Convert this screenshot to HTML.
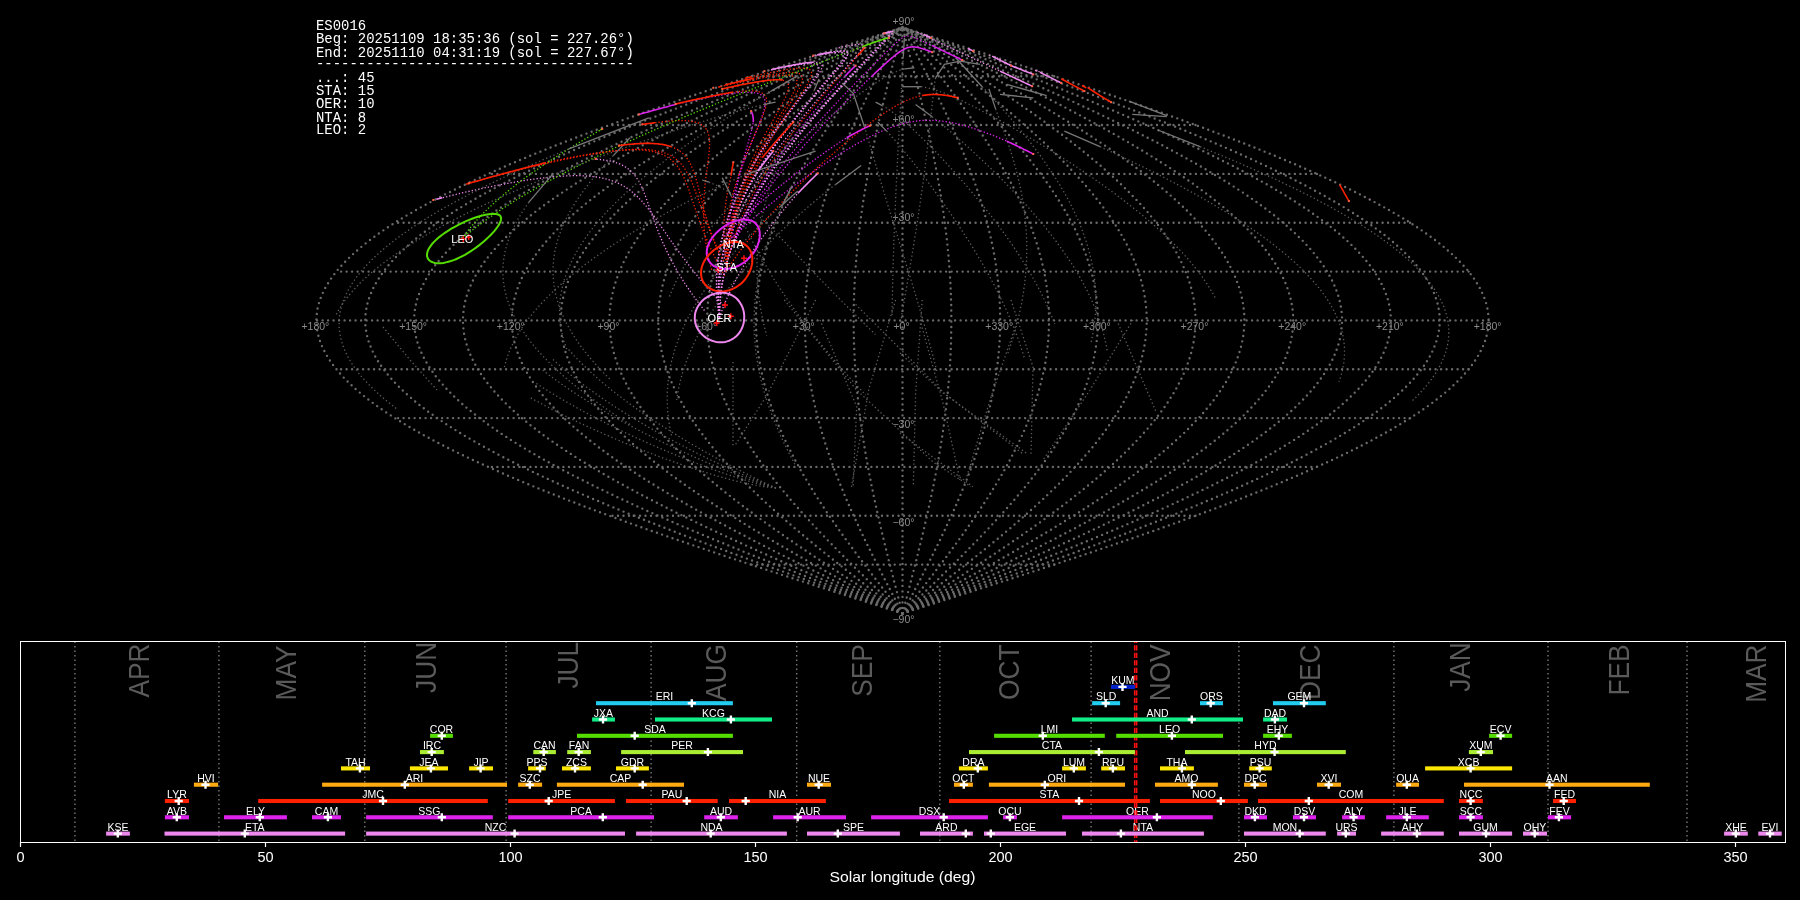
<!DOCTYPE html>
<html><head><meta charset="utf-8"><style>
html,body{margin:0;padding:0;background:#000;width:1800px;height:900px;overflow:hidden}
svg{display:block;font-family:"Liberation Sans",sans-serif;will-change:transform}
</style></head><body>
<svg width="1800" height="900" viewBox="0 0 1800 900">
<rect width="1800" height="900" fill="#000"/>
<path d="M1054.2,564.6 L750.8,564.6" stroke="#6a6a6a" stroke-width="2.4" stroke-linecap="round" stroke-dasharray="0 5.5" fill="none"/>
<path d="M1195.5,515.8 L609.5,515.8" stroke="#6a6a6a" stroke-width="2.4" stroke-linecap="round" stroke-dasharray="0 5.5" fill="none"/>
<path d="M1316.9,466.9 L488.1,466.9" stroke="#6a6a6a" stroke-width="2.4" stroke-linecap="round" stroke-dasharray="0 5.5" fill="none"/>
<path d="M1410.1,418.1 L394.9,418.1" stroke="#6a6a6a" stroke-width="2.4" stroke-linecap="round" stroke-dasharray="0 5.5" fill="none"/>
<path d="M1468.6,369.2 L336.4,369.2" stroke="#6a6a6a" stroke-width="2.4" stroke-linecap="round" stroke-dasharray="0 5.5" fill="none"/>
<path d="M1488.6,320.4 L316.4,320.4" stroke="#6a6a6a" stroke-width="2.4" stroke-linecap="round" stroke-dasharray="0 5.5" fill="none"/>
<path d="M1468.6,271.6 L336.4,271.6" stroke="#6a6a6a" stroke-width="2.4" stroke-linecap="round" stroke-dasharray="0 5.5" fill="none"/>
<path d="M1410.1,222.7 L394.9,222.7" stroke="#6a6a6a" stroke-width="2.4" stroke-linecap="round" stroke-dasharray="0 5.5" fill="none"/>
<path d="M1316.9,173.9 L488.1,173.9" stroke="#6a6a6a" stroke-width="2.4" stroke-linecap="round" stroke-dasharray="0 5.5" fill="none"/>
<path d="M1195.5,125.0 L609.5,125.0" stroke="#6a6a6a" stroke-width="2.4" stroke-linecap="round" stroke-dasharray="0 5.5" fill="none"/>
<path d="M1054.2,76.2 L750.8,76.2" stroke="#6a6a6a" stroke-width="2.4" stroke-linecap="round" stroke-dasharray="0 5.5" fill="none"/>
<path d="M902.5,613.4 L897.4,611.8 L892.3,610.2 L887.2,608.6 L882.0,606.9 L876.9,605.3 L871.8,603.7 L866.7,602.0 L861.6,600.4 L856.5,598.8 L851.4,597.2 L846.3,595.5 L841.2,593.9 L836.2,592.3 L831.1,590.6 L826.0,589.0 L820.9,587.4 L815.9,585.8 L810.8,584.1 L805.8,582.5 L800.7,580.9 L795.7,579.3 L790.7,577.6 L785.7,576.0 L780.6,574.4 L775.6,572.7 L770.7,571.1 L765.7,569.5 L760.7,567.9 L755.8,566.2 L750.8,564.6 L745.9,563.0 L741.0,561.3 L736.0,559.7 L731.1,558.1 L726.3,556.5 L721.4,554.8 L716.5,553.2 L711.7,551.6 L706.9,549.9 L702.0,548.3 L697.3,546.7 L692.5,545.1 L687.7,543.4 L683.0,541.8 L678.2,540.2 L673.5,538.6 L668.8,536.9 L664.1,535.3 L659.5,533.7 L654.8,532.0 L650.2,530.4 L645.6,528.8 L641.0,527.2 L636.4,525.5 L631.9,523.9 L627.4,522.3 L622.8,520.6 L618.4,519.0 L613.9,517.4 L609.5,515.8 L605.0,514.1 L600.6,512.5 L596.3,510.9 L591.9,509.2 L587.6,507.6 L583.3,506.0 L579.0,504.4 L574.8,502.7 L570.5,501.1 L566.3,499.5 L562.2,497.9 L558.0,496.2 L553.9,494.6 L549.8,493.0 L545.7,491.3 L541.7,489.7 L537.7,488.1 L533.7,486.5 L529.7,484.8 L525.8,483.2 L521.9,481.6 L518.0,479.9 L514.2,478.3 L510.3,476.7 L506.6,475.1 L502.8,473.4 L499.1,471.8 L495.4,470.2 L491.7,468.5 L488.1,466.9 L484.5,465.3 L480.9,463.7 L477.4,462.0 L473.9,460.4 L470.4,458.8 L467.0,457.2 L463.6,455.5 L460.2,453.9 L456.8,452.3 L453.5,450.6 L450.3,449.0 L447.0,447.4 L443.8,445.8 L440.7,444.1 L437.5,442.5 L434.4,440.9 L431.4,439.2 L428.4,437.6 L425.4,436.0 L422.4,434.4 L419.5,432.7 L416.6,431.1 L413.8,429.5 L411.0,427.8 L408.2,426.2 L405.5,424.6 L402.8,423.0 L400.1,421.3 L397.5,419.7 L394.9,418.1 L392.4,416.5 L389.9,414.8 L387.4,413.2 L385.0,411.6 L382.6,409.9 L380.3,408.3 L378.0,406.7 L375.7,405.1 L373.5,403.4 L371.3,401.8 L369.2,400.2 L367.1,398.5 L365.0,396.9 L363.0,395.3 L361.0,393.7 L359.1,392.0 L357.2,390.4 L355.3,388.8 L353.5,387.1 L351.8,385.5 L350.0,383.9 L348.4,382.3 L346.7,380.6 L345.1,379.0 L343.5,377.4 L342.0,375.8 L340.6,374.1 L339.1,372.5 L337.7,370.9 L336.4,369.2 L335.1,367.6 L333.8,366.0 L332.6,364.4 L331.4,362.7 L330.3,361.1 L329.2,359.5 L328.2,357.8 L327.2,356.2 L326.2,354.6 L325.3,353.0 L324.5,351.3 L323.6,349.7 L322.9,348.1 L322.1,346.4 L321.4,344.8 L320.8,343.2 L320.2,341.6 L319.6,339.9 L319.1,338.3 L318.7,336.7 L318.2,335.1 L317.8,333.4 L317.5,331.8 L317.2,330.2 L317.0,328.5 L316.8,326.9 L316.6,325.3 L316.5,323.7 L316.4,322.0 L316.4,320.4 L316.4,318.8 L316.5,317.1 L316.6,315.5 L316.8,313.9 L317.0,312.3 L317.2,310.6 L317.5,309.0 L317.8,307.4 L318.2,305.7 L318.7,304.1 L319.1,302.5 L319.6,300.9 L320.2,299.2 L320.8,297.6 L321.4,296.0 L322.1,294.4 L322.9,292.7 L323.6,291.1 L324.5,289.5 L325.3,287.8 L326.2,286.2 L327.2,284.6 L328.2,283.0 L329.2,281.3 L330.3,279.7 L331.4,278.1 L332.6,276.4 L333.8,274.8 L335.1,273.2 L336.4,271.6 L337.7,269.9 L339.1,268.3 L340.6,266.7 L342.0,265.0 L343.5,263.4 L345.1,261.8 L346.7,260.2 L348.4,258.5 L350.0,256.9 L351.8,255.3 L353.5,253.7 L355.3,252.0 L357.2,250.4 L359.1,248.8 L361.0,247.1 L363.0,245.5 L365.0,243.9 L367.1,242.3 L369.2,240.6 L371.3,239.0 L373.5,237.4 L375.7,235.7 L378.0,234.1 L380.3,232.5 L382.6,230.9 L385.0,229.2 L387.4,227.6 L389.9,226.0 L392.4,224.3 L394.9,222.7 L397.5,221.1 L400.1,219.5 L402.8,217.8 L405.5,216.2 L408.2,214.6 L411.0,213.0 L413.8,211.3 L416.6,209.7 L419.5,208.1 L422.4,206.4 L425.4,204.8 L428.4,203.2 L431.4,201.6 L434.4,199.9 L437.5,198.3 L440.7,196.7 L443.8,195.0 L447.0,193.4 L450.3,191.8 L453.5,190.2 L456.8,188.5 L460.2,186.9 L463.6,185.3 L467.0,183.6 L470.4,182.0 L473.9,180.4 L477.4,178.8 L480.9,177.1 L484.5,175.5 L488.1,173.9 L491.7,172.3 L495.4,170.6 L499.1,169.0 L502.8,167.4 L506.6,165.7 L510.3,164.1 L514.2,162.5 L518.0,160.9 L521.9,159.2 L525.8,157.6 L529.7,156.0 L533.7,154.3 L537.7,152.7 L541.7,151.1 L545.7,149.5 L549.8,147.8 L553.9,146.2 L558.0,144.6 L562.2,142.9 L566.3,141.3 L570.5,139.7 L574.8,138.1 L579.0,136.4 L583.3,134.8 L587.6,133.2 L591.9,131.6 L596.3,129.9 L600.6,128.3 L605.0,126.7 L609.5,125.0 L613.9,123.4 L618.4,121.8 L622.8,120.2 L627.4,118.5 L631.9,116.9 L636.4,115.3 L641.0,113.6 L645.6,112.0 L650.2,110.4 L654.8,108.8 L659.5,107.1 L664.1,105.5 L668.8,103.9 L673.5,102.2 L678.2,100.6 L683.0,99.0 L687.7,97.4 L692.5,95.7 L697.3,94.1 L702.0,92.5 L706.9,90.9 L711.7,89.2 L716.5,87.6 L721.4,86.0 L726.3,84.3 L731.1,82.7 L736.0,81.1 L741.0,79.5 L745.9,77.8 L750.8,76.2 L755.8,74.6 L760.7,72.9 L765.7,71.3 L770.7,69.7 L775.6,68.1 L780.6,66.4 L785.7,64.8 L790.7,63.2 L795.7,61.5 L800.7,59.9 L805.8,58.3 L810.8,56.7 L815.9,55.0 L820.9,53.4 L826.0,51.8 L831.1,50.2 L836.2,48.5 L841.2,46.9 L846.3,45.3 L851.4,43.6 L856.5,42.0 L861.6,40.4 L866.7,38.8 L871.8,37.1 L876.9,35.5 L882.0,33.9 L887.2,32.2 L892.3,30.6 L897.4,29.0 L902.5,27.4" stroke="#6a6a6a" stroke-width="2.4" stroke-linecap="round" stroke-dasharray="0 5.5" fill="none"/>
<path d="M902.5,613.4 L907.2,611.8 L911.9,610.2 L916.6,608.6 L921.2,606.9 L925.9,605.3 L930.6,603.7 L935.3,602.0 L940.0,600.4 L944.7,598.8 L949.3,597.2 L954.0,595.5 L958.7,593.9 L963.3,592.3 L968.0,590.6 L972.6,589.0 L977.3,587.4 L981.9,585.8 L986.5,584.1 L991.2,582.5 L995.8,580.9 L1000.4,579.3 L1005.0,577.6 L1009.6,576.0 L1014.2,574.4 L1018.8,572.7 L1023.4,571.1 L1027.9,569.5 L1032.5,567.9 L1037.0,566.2 L1041.5,564.6 L1046.1,563.0 L1050.6,561.3 L1055.1,559.7 L1059.6,558.1 L1064.1,556.5 L1068.5,554.8 L1073.0,553.2 L1077.4,551.6 L1081.8,549.9 L1086.2,548.3 L1090.6,546.7 L1095.0,545.1 L1099.4,543.4 L1103.8,541.8 L1108.1,540.2 L1112.4,538.6 L1116.7,536.9 L1121.0,535.3 L1125.3,533.7 L1129.5,532.0 L1133.8,530.4 L1138.0,528.8 L1142.2,527.2 L1146.4,525.5 L1150.6,523.9 L1154.7,522.3 L1158.8,520.6 L1163.0,519.0 L1167.0,517.4 L1171.1,515.8 L1175.2,514.1 L1179.2,512.5 L1183.2,510.9 L1187.2,509.2 L1191.2,507.6 L1195.1,506.0 L1199.0,504.4 L1202.9,502.7 L1206.8,501.1 L1210.6,499.5 L1214.5,497.9 L1218.3,496.2 L1222.1,494.6 L1225.8,493.0 L1229.6,491.3 L1233.3,489.7 L1236.9,488.1 L1240.6,486.5 L1244.2,484.8 L1247.8,483.2 L1251.4,481.6 L1255.0,479.9 L1258.5,478.3 L1262.0,476.7 L1265.5,475.1 L1268.9,473.4 L1272.3,471.8 L1275.7,470.2 L1279.1,468.5 L1282.4,466.9 L1285.7,465.3 L1289.0,463.7 L1292.2,462.0 L1295.4,460.4 L1298.6,458.8 L1301.7,457.2 L1304.9,455.5 L1308.0,453.9 L1311.0,452.3 L1314.0,450.6 L1317.0,449.0 L1320.0,447.4 L1322.9,445.8 L1325.9,444.1 L1328.7,442.5 L1331.6,440.9 L1334.4,439.2 L1337.1,437.6 L1339.9,436.0 L1342.6,434.4 L1345.3,432.7 L1347.9,431.1 L1350.5,429.5 L1353.1,427.8 L1355.6,426.2 L1358.1,424.6 L1360.6,423.0 L1363.0,421.3 L1365.4,419.7 L1367.8,418.1 L1370.1,416.5 L1372.4,414.8 L1374.6,413.2 L1376.9,411.6 L1379.0,409.9 L1381.2,408.3 L1383.3,406.7 L1385.4,405.1 L1387.4,403.4 L1389.4,401.8 L1391.4,400.2 L1393.3,398.5 L1395.2,396.9 L1397.0,395.3 L1398.8,393.7 L1400.6,392.0 L1402.4,390.4 L1404.1,388.8 L1405.7,387.1 L1407.3,385.5 L1408.9,383.9 L1410.5,382.3 L1412.0,380.6 L1413.4,379.0 L1414.9,377.4 L1416.3,375.8 L1417.6,374.1 L1418.9,372.5 L1420.2,370.9 L1421.4,369.2 L1422.6,367.6 L1423.8,366.0 L1424.9,364.4 L1426.0,362.7 L1427.0,361.1 L1428.0,359.5 L1429.0,357.8 L1429.9,356.2 L1430.7,354.6 L1431.6,353.0 L1432.4,351.3 L1433.1,349.7 L1433.8,348.1 L1434.5,346.4 L1435.1,344.8 L1435.7,343.2 L1436.3,341.6 L1436.8,339.9 L1437.3,338.3 L1437.7,336.7 L1438.1,335.1 L1438.4,333.4 L1438.7,331.8 L1439.0,330.2 L1439.2,328.5 L1439.4,326.9 L1439.6,325.3 L1439.7,323.7 L1439.7,322.0 L1439.7,320.4 L1439.7,318.8 L1439.7,317.1 L1439.6,315.5 L1439.4,313.9 L1439.2,312.3 L1439.0,310.6 L1438.7,309.0 L1438.4,307.4 L1438.1,305.7 L1437.7,304.1 L1437.3,302.5 L1436.8,300.9 L1436.3,299.2 L1435.7,297.6 L1435.1,296.0 L1434.5,294.4 L1433.8,292.7 L1433.1,291.1 L1432.4,289.5 L1431.6,287.8 L1430.7,286.2 L1429.9,284.6 L1429.0,283.0 L1428.0,281.3 L1427.0,279.7 L1426.0,278.1 L1424.9,276.4 L1423.8,274.8 L1422.6,273.2 L1421.4,271.6 L1420.2,269.9 L1418.9,268.3 L1417.6,266.7 L1416.3,265.0 L1414.9,263.4 L1413.4,261.8 L1412.0,260.2 L1410.5,258.5 L1408.9,256.9 L1407.3,255.3 L1405.7,253.7 L1404.1,252.0 L1402.4,250.4 L1400.6,248.8 L1398.8,247.1 L1397.0,245.5 L1395.2,243.9 L1393.3,242.3 L1391.4,240.6 L1389.4,239.0 L1387.4,237.4 L1385.4,235.7 L1383.3,234.1 L1381.2,232.5 L1379.0,230.9 L1376.9,229.2 L1374.6,227.6 L1372.4,226.0 L1370.1,224.3 L1367.8,222.7 L1365.4,221.1 L1363.0,219.5 L1360.6,217.8 L1358.1,216.2 L1355.6,214.6 L1353.1,213.0 L1350.5,211.3 L1347.9,209.7 L1345.3,208.1 L1342.6,206.4 L1339.9,204.8 L1337.1,203.2 L1334.4,201.6 L1331.6,199.9 L1328.7,198.3 L1325.9,196.7 L1322.9,195.0 L1320.0,193.4 L1317.0,191.8 L1314.0,190.2 L1311.0,188.5 L1308.0,186.9 L1304.9,185.3 L1301.7,183.6 L1298.6,182.0 L1295.4,180.4 L1292.2,178.8 L1289.0,177.1 L1285.7,175.5 L1282.4,173.9 L1279.1,172.3 L1275.7,170.6 L1272.3,169.0 L1268.9,167.4 L1265.5,165.7 L1262.0,164.1 L1258.5,162.5 L1255.0,160.9 L1251.4,159.2 L1247.8,157.6 L1244.2,156.0 L1240.6,154.3 L1236.9,152.7 L1233.3,151.1 L1229.6,149.5 L1225.8,147.8 L1222.1,146.2 L1218.3,144.6 L1214.5,142.9 L1210.6,141.3 L1206.8,139.7 L1202.9,138.1 L1199.0,136.4 L1195.1,134.8 L1191.2,133.2 L1187.2,131.6 L1183.2,129.9 L1179.2,128.3 L1175.2,126.7 L1171.1,125.0 L1167.0,123.4 L1163.0,121.8 L1158.8,120.2 L1154.7,118.5 L1150.6,116.9 L1146.4,115.3 L1142.2,113.6 L1138.0,112.0 L1133.8,110.4 L1129.5,108.8 L1125.3,107.1 L1121.0,105.5 L1116.7,103.9 L1112.4,102.2 L1108.1,100.6 L1103.8,99.0 L1099.4,97.4 L1095.0,95.7 L1090.6,94.1 L1086.2,92.5 L1081.8,90.9 L1077.4,89.2 L1073.0,87.6 L1068.5,86.0 L1064.1,84.3 L1059.6,82.7 L1055.1,81.1 L1050.6,79.5 L1046.1,77.8 L1041.5,76.2 L1037.0,74.6 L1032.5,72.9 L1027.9,71.3 L1023.4,69.7 L1018.8,68.1 L1014.2,66.4 L1009.6,64.8 L1005.0,63.2 L1000.4,61.5 L995.8,59.9 L991.2,58.3 L986.5,56.7 L981.9,55.0 L977.3,53.4 L972.6,51.8 L968.0,50.2 L963.3,48.5 L958.7,46.9 L954.0,45.3 L949.3,43.6 L944.7,42.0 L940.0,40.4 L935.3,38.8 L930.6,37.1 L925.9,35.5 L921.2,33.9 L916.6,32.2 L911.9,30.6 L907.2,29.0 L902.5,27.4" stroke="#6a6a6a" stroke-width="2.4" stroke-linecap="round" stroke-dasharray="0 5.5" fill="none"/>
<path d="M902.5,613.4 L906.8,611.8 L911.0,610.2 L915.3,608.6 L919.5,606.9 L923.8,605.3 L928.1,603.7 L932.3,602.0 L936.6,600.4 L940.8,598.8 L945.1,597.2 L949.3,595.5 L953.6,593.9 L957.8,592.3 L962.0,590.6 L966.2,589.0 L970.5,587.4 L974.7,585.8 L978.9,584.1 L983.1,582.5 L987.3,580.9 L991.5,579.3 L995.7,577.6 L999.9,576.0 L1004.0,574.4 L1008.2,572.7 L1012.4,571.1 L1016.5,569.5 L1020.7,567.9 L1024.8,566.2 L1028.9,564.6 L1033.0,563.0 L1037.1,561.3 L1041.2,559.7 L1045.3,558.1 L1049.4,556.5 L1053.4,554.8 L1057.5,553.2 L1061.5,551.6 L1065.5,549.9 L1069.5,548.3 L1073.5,546.7 L1077.5,545.1 L1081.5,543.4 L1085.5,541.8 L1089.4,540.2 L1093.3,538.6 L1097.2,536.9 L1101.2,535.3 L1105.0,533.7 L1108.9,532.0 L1112.8,530.4 L1116.6,528.8 L1120.4,527.2 L1124.2,525.5 L1128.0,523.9 L1131.8,522.3 L1135.5,520.6 L1139.3,519.0 L1143.0,517.4 L1146.7,515.8 L1150.4,514.1 L1154.0,512.5 L1157.7,510.9 L1161.3,509.2 L1164.9,507.6 L1168.5,506.0 L1172.1,504.4 L1175.6,502.7 L1179.1,501.1 L1182.6,499.5 L1186.1,497.9 L1189.6,496.2 L1193.0,494.6 L1196.4,493.0 L1199.8,491.3 L1203.2,489.7 L1206.5,488.1 L1209.9,486.5 L1213.2,484.8 L1216.4,483.2 L1219.7,481.6 L1222.9,479.9 L1226.1,478.3 L1229.3,476.7 L1232.5,475.1 L1235.6,473.4 L1238.7,471.8 L1241.8,470.2 L1244.8,468.5 L1247.9,466.9 L1250.9,465.3 L1253.8,463.7 L1256.8,462.0 L1259.7,460.4 L1262.6,458.8 L1265.5,457.2 L1268.3,455.5 L1271.1,453.9 L1273.9,452.3 L1276.6,450.6 L1279.4,449.0 L1282.1,447.4 L1284.7,445.8 L1287.4,444.1 L1290.0,442.5 L1292.6,440.9 L1295.1,439.2 L1297.6,437.6 L1300.1,436.0 L1302.6,434.4 L1305.0,432.7 L1307.4,431.1 L1309.8,429.5 L1312.1,427.8 L1314.4,426.2 L1316.7,424.6 L1318.9,423.0 L1321.1,421.3 L1323.3,419.7 L1325.5,418.1 L1327.6,416.5 L1329.7,414.8 L1331.7,413.2 L1333.7,411.6 L1335.7,409.9 L1337.7,408.3 L1339.6,406.7 L1341.5,405.1 L1343.3,403.4 L1345.1,401.8 L1346.9,400.2 L1348.7,398.5 L1350.4,396.9 L1352.1,395.3 L1353.7,393.7 L1355.3,392.0 L1356.9,390.4 L1358.5,388.8 L1360.0,387.1 L1361.4,385.5 L1362.9,383.9 L1364.3,382.3 L1365.7,380.6 L1367.0,379.0 L1368.3,377.4 L1369.6,375.8 L1370.8,374.1 L1372.0,372.5 L1373.1,370.9 L1374.3,369.2 L1375.3,367.6 L1376.4,366.0 L1377.4,364.4 L1378.4,362.7 L1379.3,361.1 L1380.2,359.5 L1381.1,357.8 L1381.9,356.2 L1382.7,354.6 L1383.5,353.0 L1384.2,351.3 L1384.9,349.7 L1385.5,348.1 L1386.1,346.4 L1386.7,344.8 L1387.3,343.2 L1387.8,341.6 L1388.2,339.9 L1388.7,338.3 L1389.0,336.7 L1389.4,335.1 L1389.7,333.4 L1390.0,331.8 L1390.2,330.2 L1390.4,328.5 L1390.6,326.9 L1390.7,325.3 L1390.8,323.7 L1390.9,322.0 L1390.9,320.4 L1390.9,318.8 L1390.8,317.1 L1390.7,315.5 L1390.6,313.9 L1390.4,312.3 L1390.2,310.6 L1390.0,309.0 L1389.7,307.4 L1389.4,305.7 L1389.0,304.1 L1388.7,302.5 L1388.2,300.9 L1387.8,299.2 L1387.3,297.6 L1386.7,296.0 L1386.1,294.4 L1385.5,292.7 L1384.9,291.1 L1384.2,289.5 L1383.5,287.8 L1382.7,286.2 L1381.9,284.6 L1381.1,283.0 L1380.2,281.3 L1379.3,279.7 L1378.4,278.1 L1377.4,276.4 L1376.4,274.8 L1375.3,273.2 L1374.3,271.6 L1373.1,269.9 L1372.0,268.3 L1370.8,266.7 L1369.6,265.0 L1368.3,263.4 L1367.0,261.8 L1365.7,260.2 L1364.3,258.5 L1362.9,256.9 L1361.4,255.3 L1360.0,253.7 L1358.5,252.0 L1356.9,250.4 L1355.3,248.8 L1353.7,247.1 L1352.1,245.5 L1350.4,243.9 L1348.7,242.3 L1346.9,240.6 L1345.1,239.0 L1343.3,237.4 L1341.5,235.7 L1339.6,234.1 L1337.7,232.5 L1335.7,230.9 L1333.7,229.2 L1331.7,227.6 L1329.7,226.0 L1327.6,224.3 L1325.5,222.7 L1323.3,221.1 L1321.1,219.5 L1318.9,217.8 L1316.7,216.2 L1314.4,214.6 L1312.1,213.0 L1309.8,211.3 L1307.4,209.7 L1305.0,208.1 L1302.6,206.4 L1300.1,204.8 L1297.6,203.2 L1295.1,201.6 L1292.6,199.9 L1290.0,198.3 L1287.4,196.7 L1284.7,195.0 L1282.1,193.4 L1279.4,191.8 L1276.6,190.2 L1273.9,188.5 L1271.1,186.9 L1268.3,185.3 L1265.5,183.6 L1262.6,182.0 L1259.7,180.4 L1256.8,178.8 L1253.8,177.1 L1250.9,175.5 L1247.9,173.9 L1244.8,172.3 L1241.8,170.6 L1238.7,169.0 L1235.6,167.4 L1232.5,165.7 L1229.3,164.1 L1226.1,162.5 L1222.9,160.9 L1219.7,159.2 L1216.4,157.6 L1213.2,156.0 L1209.9,154.3 L1206.5,152.7 L1203.2,151.1 L1199.8,149.5 L1196.4,147.8 L1193.0,146.2 L1189.6,144.6 L1186.1,142.9 L1182.6,141.3 L1179.1,139.7 L1175.6,138.1 L1172.1,136.4 L1168.5,134.8 L1164.9,133.2 L1161.3,131.6 L1157.7,129.9 L1154.0,128.3 L1150.4,126.7 L1146.7,125.0 L1143.0,123.4 L1139.3,121.8 L1135.5,120.2 L1131.8,118.5 L1128.0,116.9 L1124.2,115.3 L1120.4,113.6 L1116.6,112.0 L1112.8,110.4 L1108.9,108.8 L1105.0,107.1 L1101.2,105.5 L1097.2,103.9 L1093.3,102.2 L1089.4,100.6 L1085.5,99.0 L1081.5,97.4 L1077.5,95.7 L1073.5,94.1 L1069.5,92.5 L1065.5,90.9 L1061.5,89.2 L1057.5,87.6 L1053.4,86.0 L1049.4,84.3 L1045.3,82.7 L1041.2,81.1 L1037.1,79.5 L1033.0,77.8 L1028.9,76.2 L1024.8,74.6 L1020.7,72.9 L1016.5,71.3 L1012.4,69.7 L1008.2,68.1 L1004.0,66.4 L999.9,64.8 L995.7,63.2 L991.5,61.5 L987.3,59.9 L983.1,58.3 L978.9,56.7 L974.7,55.0 L970.5,53.4 L966.2,51.8 L962.0,50.2 L957.8,48.5 L953.6,46.9 L949.3,45.3 L945.1,43.6 L940.8,42.0 L936.6,40.4 L932.3,38.8 L928.1,37.1 L923.8,35.5 L919.5,33.9 L915.3,32.2 L911.0,30.6 L906.8,29.0 L902.5,27.4" stroke="#6a6a6a" stroke-width="2.4" stroke-linecap="round" stroke-dasharray="0 5.5" fill="none"/>
<path d="M902.5,613.4 L906.3,611.8 L910.2,610.2 L914.0,608.6 L917.8,606.9 L921.7,605.3 L925.5,603.7 L929.3,602.0 L933.2,600.4 L937.0,598.8 L940.8,597.2 L944.6,595.5 L948.4,593.9 L952.3,592.3 L956.1,590.6 L959.9,589.0 L963.7,587.4 L967.5,585.8 L971.3,584.1 L975.0,582.5 L978.8,580.9 L982.6,579.3 L986.4,577.6 L990.1,576.0 L993.9,574.4 L997.6,572.7 L1001.4,571.1 L1005.1,569.5 L1008.8,567.9 L1012.6,566.2 L1016.3,564.6 L1020.0,563.0 L1023.7,561.3 L1027.3,559.7 L1031.0,558.1 L1034.7,556.5 L1038.3,554.8 L1042.0,553.2 L1045.6,551.6 L1049.2,549.9 L1052.8,548.3 L1056.4,546.7 L1060.0,545.1 L1063.6,543.4 L1067.2,541.8 L1070.7,540.2 L1074.2,538.6 L1077.8,536.9 L1081.3,535.3 L1084.8,533.7 L1088.3,532.0 L1091.7,530.4 L1095.2,528.8 L1098.6,527.2 L1102.1,525.5 L1105.5,523.9 L1108.9,522.3 L1112.2,520.6 L1115.6,519.0 L1118.9,517.4 L1122.3,515.8 L1125.6,514.1 L1128.9,512.5 L1132.2,510.9 L1135.4,509.2 L1138.7,507.6 L1141.9,506.0 L1145.1,504.4 L1148.3,502.7 L1151.5,501.1 L1154.6,499.5 L1157.8,497.9 L1160.9,496.2 L1164.0,494.6 L1167.0,493.0 L1170.1,491.3 L1173.1,489.7 L1176.1,488.1 L1179.1,486.5 L1182.1,484.8 L1185.0,483.2 L1188.0,481.6 L1190.9,479.9 L1193.8,478.3 L1196.6,476.7 L1199.5,475.1 L1202.3,473.4 L1205.1,471.8 L1207.8,470.2 L1210.6,468.5 L1213.3,466.9 L1216.0,465.3 L1218.7,463.7 L1221.3,462.0 L1224.0,460.4 L1226.6,458.8 L1229.2,457.2 L1231.7,455.5 L1234.2,453.9 L1236.7,452.3 L1239.2,450.6 L1241.7,449.0 L1244.1,447.4 L1246.5,445.8 L1248.9,444.1 L1251.2,442.5 L1253.5,440.9 L1255.8,439.2 L1258.1,437.6 L1260.4,436.0 L1262.6,434.4 L1264.8,432.7 L1266.9,431.1 L1269.0,429.5 L1271.1,427.8 L1273.2,426.2 L1275.3,424.6 L1277.3,423.0 L1279.3,421.3 L1281.2,419.7 L1283.2,418.1 L1285.1,416.5 L1286.9,414.8 L1288.8,413.2 L1290.6,411.6 L1292.4,409.9 L1294.2,408.3 L1295.9,406.7 L1297.6,405.1 L1299.2,403.4 L1300.9,401.8 L1302.5,400.2 L1304.1,398.5 L1305.6,396.9 L1307.1,395.3 L1308.6,393.7 L1310.1,392.0 L1311.5,390.4 L1312.9,388.8 L1314.2,387.1 L1315.6,385.5 L1316.8,383.9 L1318.1,382.3 L1319.3,380.6 L1320.5,379.0 L1321.7,377.4 L1322.9,375.8 L1324.0,374.1 L1325.0,372.5 L1326.1,370.9 L1327.1,369.2 L1328.1,367.6 L1329.0,366.0 L1329.9,364.4 L1330.8,362.7 L1331.6,361.1 L1332.5,359.5 L1333.2,357.8 L1334.0,356.2 L1334.7,354.6 L1335.4,353.0 L1336.0,351.3 L1336.6,349.7 L1337.2,348.1 L1337.8,346.4 L1338.3,344.8 L1338.8,343.2 L1339.2,341.6 L1339.7,339.9 L1340.0,338.3 L1340.4,336.7 L1340.7,335.1 L1341.0,333.4 L1341.2,331.8 L1341.5,330.2 L1341.6,328.5 L1341.8,326.9 L1341.9,325.3 L1342.0,323.7 L1342.0,322.0 L1342.1,320.4 L1342.0,318.8 L1342.0,317.1 L1341.9,315.5 L1341.8,313.9 L1341.6,312.3 L1341.5,310.6 L1341.2,309.0 L1341.0,307.4 L1340.7,305.7 L1340.4,304.1 L1340.0,302.5 L1339.7,300.9 L1339.2,299.2 L1338.8,297.6 L1338.3,296.0 L1337.8,294.4 L1337.2,292.7 L1336.6,291.1 L1336.0,289.5 L1335.4,287.8 L1334.7,286.2 L1334.0,284.6 L1333.2,283.0 L1332.5,281.3 L1331.6,279.7 L1330.8,278.1 L1329.9,276.4 L1329.0,274.8 L1328.1,273.2 L1327.1,271.6 L1326.1,269.9 L1325.0,268.3 L1324.0,266.7 L1322.9,265.0 L1321.7,263.4 L1320.5,261.8 L1319.3,260.2 L1318.1,258.5 L1316.8,256.9 L1315.6,255.3 L1314.2,253.7 L1312.9,252.0 L1311.5,250.4 L1310.1,248.8 L1308.6,247.1 L1307.1,245.5 L1305.6,243.9 L1304.1,242.3 L1302.5,240.6 L1300.9,239.0 L1299.2,237.4 L1297.6,235.7 L1295.9,234.1 L1294.2,232.5 L1292.4,230.9 L1290.6,229.2 L1288.8,227.6 L1286.9,226.0 L1285.1,224.3 L1283.2,222.7 L1281.2,221.1 L1279.3,219.5 L1277.3,217.8 L1275.3,216.2 L1273.2,214.6 L1271.1,213.0 L1269.0,211.3 L1266.9,209.7 L1264.8,208.1 L1262.6,206.4 L1260.4,204.8 L1258.1,203.2 L1255.8,201.6 L1253.5,199.9 L1251.2,198.3 L1248.9,196.7 L1246.5,195.0 L1244.1,193.4 L1241.7,191.8 L1239.2,190.2 L1236.7,188.5 L1234.2,186.9 L1231.7,185.3 L1229.2,183.6 L1226.6,182.0 L1224.0,180.4 L1221.3,178.8 L1218.7,177.1 L1216.0,175.5 L1213.3,173.9 L1210.6,172.3 L1207.8,170.6 L1205.1,169.0 L1202.3,167.4 L1199.5,165.7 L1196.6,164.1 L1193.8,162.5 L1190.9,160.9 L1188.0,159.2 L1185.0,157.6 L1182.1,156.0 L1179.1,154.3 L1176.1,152.7 L1173.1,151.1 L1170.1,149.5 L1167.0,147.8 L1164.0,146.2 L1160.9,144.6 L1157.8,142.9 L1154.6,141.3 L1151.5,139.7 L1148.3,138.1 L1145.1,136.4 L1141.9,134.8 L1138.7,133.2 L1135.4,131.6 L1132.2,129.9 L1128.9,128.3 L1125.6,126.7 L1122.3,125.0 L1118.9,123.4 L1115.6,121.8 L1112.2,120.2 L1108.9,118.5 L1105.5,116.9 L1102.1,115.3 L1098.6,113.6 L1095.2,112.0 L1091.7,110.4 L1088.3,108.8 L1084.8,107.1 L1081.3,105.5 L1077.8,103.9 L1074.2,102.2 L1070.7,100.6 L1067.2,99.0 L1063.6,97.4 L1060.0,95.7 L1056.4,94.1 L1052.8,92.5 L1049.2,90.9 L1045.6,89.2 L1042.0,87.6 L1038.3,86.0 L1034.7,84.3 L1031.0,82.7 L1027.3,81.1 L1023.7,79.5 L1020.0,77.8 L1016.3,76.2 L1012.6,74.6 L1008.8,72.9 L1005.1,71.3 L1001.4,69.7 L997.6,68.1 L993.9,66.4 L990.1,64.8 L986.4,63.2 L982.6,61.5 L978.8,59.9 L975.0,58.3 L971.3,56.7 L967.5,55.0 L963.7,53.4 L959.9,51.8 L956.1,50.2 L952.3,48.5 L948.4,46.9 L944.6,45.3 L940.8,43.6 L937.0,42.0 L933.2,40.4 L929.3,38.8 L925.5,37.1 L921.7,35.5 L917.8,33.9 L914.0,32.2 L910.2,30.6 L906.3,29.0 L902.5,27.4" stroke="#6a6a6a" stroke-width="2.4" stroke-linecap="round" stroke-dasharray="0 5.5" fill="none"/>
<path d="M902.5,613.4 L905.9,611.8 L909.3,610.2 L912.7,608.6 L916.1,606.9 L919.5,605.3 L922.9,603.7 L926.4,602.0 L929.8,600.4 L933.2,598.8 L936.6,597.2 L939.9,595.5 L943.3,593.9 L946.7,592.3 L950.1,590.6 L953.5,589.0 L956.9,587.4 L960.3,585.8 L963.6,584.1 L967.0,582.5 L970.3,580.9 L973.7,579.3 L977.1,577.6 L980.4,576.0 L983.7,574.4 L987.1,572.7 L990.4,571.1 L993.7,569.5 L997.0,567.9 L1000.3,566.2 L1003.6,564.6 L1006.9,563.0 L1010.2,561.3 L1013.5,559.7 L1016.7,558.1 L1020.0,556.5 L1023.2,554.8 L1026.5,553.2 L1029.7,551.6 L1032.9,549.9 L1036.1,548.3 L1039.3,546.7 L1042.5,545.1 L1045.7,543.4 L1048.9,541.8 L1052.0,540.2 L1055.2,538.6 L1058.3,536.9 L1061.4,535.3 L1064.5,533.7 L1067.6,532.0 L1070.7,530.4 L1073.8,528.8 L1076.8,527.2 L1079.9,525.5 L1082.9,523.9 L1085.9,522.3 L1088.9,520.6 L1091.9,519.0 L1094.9,517.4 L1097.9,515.8 L1100.8,514.1 L1103.7,512.5 L1106.7,510.9 L1109.6,509.2 L1112.4,507.6 L1115.3,506.0 L1118.2,504.4 L1121.0,502.7 L1123.8,501.1 L1126.6,499.5 L1129.4,497.9 L1132.2,496.2 L1134.9,494.6 L1137.6,493.0 L1140.4,491.3 L1143.1,489.7 L1145.7,488.1 L1148.4,486.5 L1151.0,484.8 L1153.6,483.2 L1156.3,481.6 L1158.8,479.9 L1161.4,478.3 L1163.9,476.7 L1166.5,475.1 L1169.0,473.4 L1171.5,471.8 L1173.9,470.2 L1176.4,468.5 L1178.8,466.9 L1181.2,465.3 L1183.6,463.7 L1185.9,462.0 L1188.3,460.4 L1190.6,458.8 L1192.9,457.2 L1195.1,455.5 L1197.4,453.9 L1199.6,452.3 L1201.8,450.6 L1204.0,449.0 L1206.1,447.4 L1208.3,445.8 L1210.4,444.1 L1212.5,442.5 L1214.5,440.9 L1216.6,439.2 L1218.6,437.6 L1220.6,436.0 L1222.6,434.4 L1224.5,432.7 L1226.4,431.1 L1228.3,429.5 L1230.2,427.8 L1232.0,426.2 L1233.8,424.6 L1235.6,423.0 L1237.4,421.3 L1239.2,419.7 L1240.9,418.1 L1242.6,416.5 L1244.2,414.8 L1245.9,413.2 L1247.5,411.6 L1249.1,409.9 L1250.6,408.3 L1252.2,406.7 L1253.7,405.1 L1255.2,403.4 L1256.6,401.8 L1258.0,400.2 L1259.4,398.5 L1260.8,396.9 L1262.2,395.3 L1263.5,393.7 L1264.8,392.0 L1266.0,390.4 L1267.3,388.8 L1268.5,387.1 L1269.7,385.5 L1270.8,383.9 L1271.9,382.3 L1273.0,380.6 L1274.1,379.0 L1275.1,377.4 L1276.1,375.8 L1277.1,374.1 L1278.1,372.5 L1279.0,370.9 L1279.9,369.2 L1280.8,367.6 L1281.6,366.0 L1282.4,364.4 L1283.2,362.7 L1284.0,361.1 L1284.7,359.5 L1285.4,357.8 L1286.0,356.2 L1286.7,354.6 L1287.3,353.0 L1287.9,351.3 L1288.4,349.7 L1288.9,348.1 L1289.4,346.4 L1289.9,344.8 L1290.3,343.2 L1290.7,341.6 L1291.1,339.9 L1291.4,338.3 L1291.7,336.7 L1292.0,335.1 L1292.3,333.4 L1292.5,331.8 L1292.7,330.2 L1292.8,328.5 L1293.0,326.9 L1293.1,325.3 L1293.2,323.7 L1293.2,322.0 L1293.2,320.4 L1293.2,318.8 L1293.2,317.1 L1293.1,315.5 L1293.0,313.9 L1292.8,312.3 L1292.7,310.6 L1292.5,309.0 L1292.3,307.4 L1292.0,305.7 L1291.7,304.1 L1291.4,302.5 L1291.1,300.9 L1290.7,299.2 L1290.3,297.6 L1289.9,296.0 L1289.4,294.4 L1288.9,292.7 L1288.4,291.1 L1287.9,289.5 L1287.3,287.8 L1286.7,286.2 L1286.0,284.6 L1285.4,283.0 L1284.7,281.3 L1284.0,279.7 L1283.2,278.1 L1282.4,276.4 L1281.6,274.8 L1280.8,273.2 L1279.9,271.6 L1279.0,269.9 L1278.1,268.3 L1277.1,266.7 L1276.1,265.0 L1275.1,263.4 L1274.1,261.8 L1273.0,260.2 L1271.9,258.5 L1270.8,256.9 L1269.7,255.3 L1268.5,253.7 L1267.3,252.0 L1266.0,250.4 L1264.8,248.8 L1263.5,247.1 L1262.2,245.5 L1260.8,243.9 L1259.4,242.3 L1258.0,240.6 L1256.6,239.0 L1255.2,237.4 L1253.7,235.7 L1252.2,234.1 L1250.6,232.5 L1249.1,230.9 L1247.5,229.2 L1245.9,227.6 L1244.2,226.0 L1242.6,224.3 L1240.9,222.7 L1239.2,221.1 L1237.4,219.5 L1235.6,217.8 L1233.8,216.2 L1232.0,214.6 L1230.2,213.0 L1228.3,211.3 L1226.4,209.7 L1224.5,208.1 L1222.6,206.4 L1220.6,204.8 L1218.6,203.2 L1216.6,201.6 L1214.5,199.9 L1212.5,198.3 L1210.4,196.7 L1208.3,195.0 L1206.1,193.4 L1204.0,191.8 L1201.8,190.2 L1199.6,188.5 L1197.4,186.9 L1195.1,185.3 L1192.9,183.6 L1190.6,182.0 L1188.3,180.4 L1185.9,178.8 L1183.6,177.1 L1181.2,175.5 L1178.8,173.9 L1176.4,172.3 L1173.9,170.6 L1171.5,169.0 L1169.0,167.4 L1166.5,165.7 L1163.9,164.1 L1161.4,162.5 L1158.8,160.9 L1156.3,159.2 L1153.6,157.6 L1151.0,156.0 L1148.4,154.3 L1145.7,152.7 L1143.1,151.1 L1140.4,149.5 L1137.6,147.8 L1134.9,146.2 L1132.2,144.6 L1129.4,142.9 L1126.6,141.3 L1123.8,139.7 L1121.0,138.1 L1118.2,136.4 L1115.3,134.8 L1112.4,133.2 L1109.6,131.6 L1106.7,129.9 L1103.7,128.3 L1100.8,126.7 L1097.9,125.0 L1094.9,123.4 L1091.9,121.8 L1088.9,120.2 L1085.9,118.5 L1082.9,116.9 L1079.9,115.3 L1076.8,113.6 L1073.8,112.0 L1070.7,110.4 L1067.6,108.8 L1064.5,107.1 L1061.4,105.5 L1058.3,103.9 L1055.2,102.2 L1052.0,100.6 L1048.9,99.0 L1045.7,97.4 L1042.5,95.7 L1039.3,94.1 L1036.1,92.5 L1032.9,90.9 L1029.7,89.2 L1026.5,87.6 L1023.2,86.0 L1020.0,84.3 L1016.7,82.7 L1013.5,81.1 L1010.2,79.5 L1006.9,77.8 L1003.6,76.2 L1000.3,74.6 L997.0,72.9 L993.7,71.3 L990.4,69.7 L987.1,68.1 L983.7,66.4 L980.4,64.8 L977.1,63.2 L973.7,61.5 L970.3,59.9 L967.0,58.3 L963.6,56.7 L960.3,55.0 L956.9,53.4 L953.5,51.8 L950.1,50.2 L946.7,48.5 L943.3,46.9 L939.9,45.3 L936.6,43.6 L933.2,42.0 L929.8,40.4 L926.4,38.8 L922.9,37.1 L919.5,35.5 L916.1,33.9 L912.7,32.2 L909.3,30.6 L905.9,29.0 L902.5,27.4" stroke="#6a6a6a" stroke-width="2.4" stroke-linecap="round" stroke-dasharray="0 5.5" fill="none"/>
<path d="M902.5,613.4 L905.5,611.8 L908.5,610.2 L911.4,608.6 L914.4,606.9 L917.4,605.3 L920.4,603.7 L923.4,602.0 L926.3,600.4 L929.3,598.8 L932.3,597.2 L935.3,595.5 L938.2,593.9 L941.2,592.3 L944.2,590.6 L947.1,589.0 L950.1,587.4 L953.0,585.8 L956.0,584.1 L958.9,582.5 L961.9,580.9 L964.8,579.3 L967.7,577.6 L970.7,576.0 L973.6,574.4 L976.5,572.7 L979.4,571.1 L982.3,569.5 L985.2,567.9 L988.1,566.2 L991.0,564.6 L993.9,563.0 L996.7,561.3 L999.6,559.7 L1002.5,558.1 L1005.3,556.5 L1008.1,554.8 L1011.0,553.2 L1013.8,551.6 L1016.6,549.9 L1019.4,548.3 L1022.2,546.7 L1025.0,545.1 L1027.8,543.4 L1030.6,541.8 L1033.3,540.2 L1036.1,538.6 L1038.8,536.9 L1041.6,535.3 L1044.3,533.7 L1047.0,532.0 L1049.7,530.4 L1052.4,528.8 L1055.0,527.2 L1057.7,525.5 L1060.4,523.9 L1063.0,522.3 L1065.6,520.6 L1068.2,519.0 L1070.8,517.4 L1073.4,515.8 L1076.0,514.1 L1078.6,512.5 L1081.1,510.9 L1083.7,509.2 L1086.2,507.6 L1088.7,506.0 L1091.2,504.4 L1093.7,502.7 L1096.1,501.1 L1098.6,499.5 L1101.0,497.9 L1103.5,496.2 L1105.9,494.6 L1108.2,493.0 L1110.6,491.3 L1113.0,489.7 L1115.3,488.1 L1117.7,486.5 L1120.0,484.8 L1122.3,483.2 L1124.5,481.6 L1126.8,479.9 L1129.0,478.3 L1131.3,476.7 L1133.5,475.1 L1135.7,473.4 L1137.8,471.8 L1140.0,470.2 L1142.1,468.5 L1144.2,466.9 L1146.3,465.3 L1148.4,463.7 L1150.5,462.0 L1152.5,460.4 L1154.6,458.8 L1156.6,457.2 L1158.6,455.5 L1160.5,453.9 L1162.5,452.3 L1164.4,450.6 L1166.3,449.0 L1168.2,447.4 L1170.1,445.8 L1171.9,444.1 L1173.7,442.5 L1175.5,440.9 L1177.3,439.2 L1179.1,437.6 L1180.8,436.0 L1182.6,434.4 L1184.3,432.7 L1185.9,431.1 L1187.6,429.5 L1189.2,427.8 L1190.8,426.2 L1192.4,424.6 L1194.0,423.0 L1195.5,421.3 L1197.1,419.7 L1198.6,418.1 L1200.1,416.5 L1201.5,414.8 L1202.9,413.2 L1204.4,411.6 L1205.8,409.9 L1207.1,408.3 L1208.5,406.7 L1209.8,405.1 L1211.1,403.4 L1212.3,401.8 L1213.6,400.2 L1214.8,398.5 L1216.0,396.9 L1217.2,395.3 L1218.4,393.7 L1219.5,392.0 L1220.6,390.4 L1221.7,388.8 L1222.7,387.1 L1223.8,385.5 L1224.8,383.9 L1225.8,382.3 L1226.7,380.6 L1227.6,379.0 L1228.6,377.4 L1229.4,375.8 L1230.3,374.1 L1231.1,372.5 L1231.9,370.9 L1232.7,369.2 L1233.5,367.6 L1234.2,366.0 L1234.9,364.4 L1235.6,362.7 L1236.3,361.1 L1236.9,359.5 L1237.5,357.8 L1238.1,356.2 L1238.7,354.6 L1239.2,353.0 L1239.7,351.3 L1240.2,349.7 L1240.6,348.1 L1241.1,346.4 L1241.5,344.8 L1241.8,343.2 L1242.2,341.6 L1242.5,339.9 L1242.8,338.3 L1243.1,336.7 L1243.3,335.1 L1243.5,333.4 L1243.7,331.8 L1243.9,330.2 L1244.1,328.5 L1244.2,326.9 L1244.3,325.3 L1244.3,323.7 L1244.4,322.0 L1244.4,320.4 L1244.4,318.8 L1244.3,317.1 L1244.3,315.5 L1244.2,313.9 L1244.1,312.3 L1243.9,310.6 L1243.7,309.0 L1243.5,307.4 L1243.3,305.7 L1243.1,304.1 L1242.8,302.5 L1242.5,300.9 L1242.2,299.2 L1241.8,297.6 L1241.5,296.0 L1241.1,294.4 L1240.6,292.7 L1240.2,291.1 L1239.7,289.5 L1239.2,287.8 L1238.7,286.2 L1238.1,284.6 L1237.5,283.0 L1236.9,281.3 L1236.3,279.7 L1235.6,278.1 L1234.9,276.4 L1234.2,274.8 L1233.5,273.2 L1232.7,271.6 L1231.9,269.9 L1231.1,268.3 L1230.3,266.7 L1229.4,265.0 L1228.6,263.4 L1227.6,261.8 L1226.7,260.2 L1225.8,258.5 L1224.8,256.9 L1223.8,255.3 L1222.7,253.7 L1221.7,252.0 L1220.6,250.4 L1219.5,248.8 L1218.4,247.1 L1217.2,245.5 L1216.0,243.9 L1214.8,242.3 L1213.6,240.6 L1212.3,239.0 L1211.1,237.4 L1209.8,235.7 L1208.5,234.1 L1207.1,232.5 L1205.8,230.9 L1204.4,229.2 L1202.9,227.6 L1201.5,226.0 L1200.1,224.3 L1198.6,222.7 L1197.1,221.1 L1195.5,219.5 L1194.0,217.8 L1192.4,216.2 L1190.8,214.6 L1189.2,213.0 L1187.6,211.3 L1185.9,209.7 L1184.3,208.1 L1182.6,206.4 L1180.8,204.8 L1179.1,203.2 L1177.3,201.6 L1175.5,199.9 L1173.7,198.3 L1171.9,196.7 L1170.1,195.0 L1168.2,193.4 L1166.3,191.8 L1164.4,190.2 L1162.5,188.5 L1160.5,186.9 L1158.6,185.3 L1156.6,183.6 L1154.6,182.0 L1152.5,180.4 L1150.5,178.8 L1148.4,177.1 L1146.3,175.5 L1144.2,173.9 L1142.1,172.3 L1140.0,170.6 L1137.8,169.0 L1135.7,167.4 L1133.5,165.7 L1131.3,164.1 L1129.0,162.5 L1126.8,160.9 L1124.5,159.2 L1122.3,157.6 L1120.0,156.0 L1117.7,154.3 L1115.3,152.7 L1113.0,151.1 L1110.6,149.5 L1108.2,147.8 L1105.9,146.2 L1103.5,144.6 L1101.0,142.9 L1098.6,141.3 L1096.1,139.7 L1093.7,138.1 L1091.2,136.4 L1088.7,134.8 L1086.2,133.2 L1083.7,131.6 L1081.1,129.9 L1078.6,128.3 L1076.0,126.7 L1073.4,125.0 L1070.8,123.4 L1068.2,121.8 L1065.6,120.2 L1063.0,118.5 L1060.4,116.9 L1057.7,115.3 L1055.0,113.6 L1052.4,112.0 L1049.7,110.4 L1047.0,108.8 L1044.3,107.1 L1041.6,105.5 L1038.8,103.9 L1036.1,102.2 L1033.3,100.6 L1030.6,99.0 L1027.8,97.4 L1025.0,95.7 L1022.2,94.1 L1019.4,92.5 L1016.6,90.9 L1013.8,89.2 L1011.0,87.6 L1008.1,86.0 L1005.3,84.3 L1002.5,82.7 L999.6,81.1 L996.7,79.5 L993.9,77.8 L991.0,76.2 L988.1,74.6 L985.2,72.9 L982.3,71.3 L979.4,69.7 L976.5,68.1 L973.6,66.4 L970.7,64.8 L967.7,63.2 L964.8,61.5 L961.9,59.9 L958.9,58.3 L956.0,56.7 L953.0,55.0 L950.1,53.4 L947.1,51.8 L944.2,50.2 L941.2,48.5 L938.2,46.9 L935.3,45.3 L932.3,43.6 L929.3,42.0 L926.3,40.4 L923.4,38.8 L920.4,37.1 L917.4,35.5 L914.4,33.9 L911.4,32.2 L908.5,30.6 L905.5,29.0 L902.5,27.4" stroke="#6a6a6a" stroke-width="2.4" stroke-linecap="round" stroke-dasharray="0 5.5" fill="none"/>
<path d="M902.5,613.4 L905.1,611.8 L907.6,610.2 L910.2,608.6 L912.7,606.9 L915.3,605.3 L917.8,603.7 L920.4,602.0 L922.9,600.4 L925.5,598.8 L928.0,597.2 L930.6,595.5 L933.1,593.9 L935.7,592.3 L938.2,590.6 L940.7,589.0 L943.3,587.4 L945.8,585.8 L948.3,584.1 L950.9,582.5 L953.4,580.9 L955.9,579.3 L958.4,577.6 L960.9,576.0 L963.4,574.4 L965.9,572.7 L968.4,571.1 L970.9,569.5 L973.4,567.9 L975.9,566.2 L978.3,564.6 L980.8,563.0 L983.3,561.3 L985.7,559.7 L988.2,558.1 L990.6,556.5 L993.1,554.8 L995.5,553.2 L997.9,551.6 L1000.3,549.9 L1002.7,548.3 L1005.1,546.7 L1007.5,545.1 L1009.9,543.4 L1012.3,541.8 L1014.6,540.2 L1017.0,538.6 L1019.3,536.9 L1021.7,535.3 L1024.0,533.7 L1026.3,532.0 L1028.7,530.4 L1031.0,528.8 L1033.3,527.2 L1035.5,525.5 L1037.8,523.9 L1040.1,522.3 L1042.3,520.6 L1044.6,519.0 L1046.8,517.4 L1049.0,515.8 L1051.2,514.1 L1053.4,512.5 L1055.6,510.9 L1057.8,509.2 L1060.0,507.6 L1062.1,506.0 L1064.2,504.4 L1066.4,502.7 L1068.5,501.1 L1070.6,499.5 L1072.7,497.9 L1074.7,496.2 L1076.8,494.6 L1078.9,493.0 L1080.9,491.3 L1082.9,489.7 L1084.9,488.1 L1086.9,486.5 L1088.9,484.8 L1090.9,483.2 L1092.8,481.6 L1094.8,479.9 L1096.7,478.3 L1098.6,476.7 L1100.5,475.1 L1102.4,473.4 L1104.2,471.8 L1106.1,470.2 L1107.9,468.5 L1109.7,466.9 L1111.5,465.3 L1113.3,463.7 L1115.1,462.0 L1116.8,460.4 L1118.6,458.8 L1120.3,457.2 L1122.0,455.5 L1123.7,453.9 L1125.3,452.3 L1127.0,450.6 L1128.6,449.0 L1130.2,447.4 L1131.8,445.8 L1133.4,444.1 L1135.0,442.5 L1136.5,440.9 L1138.1,439.2 L1139.6,437.6 L1141.1,436.0 L1142.5,434.4 L1144.0,432.7 L1145.4,431.1 L1146.9,429.5 L1148.3,427.8 L1149.6,426.2 L1151.0,424.6 L1152.4,423.0 L1153.7,421.3 L1155.0,419.7 L1156.3,418.1 L1157.5,416.5 L1158.8,414.8 L1160.0,413.2 L1161.2,411.6 L1162.4,409.9 L1163.6,408.3 L1164.8,406.7 L1165.9,405.1 L1167.0,403.4 L1168.1,401.8 L1169.2,400.2 L1170.2,398.5 L1171.2,396.9 L1172.2,395.3 L1173.2,393.7 L1174.2,392.0 L1175.1,390.4 L1176.1,388.8 L1177.0,387.1 L1177.9,385.5 L1178.7,383.9 L1179.6,382.3 L1180.4,380.6 L1181.2,379.0 L1182.0,377.4 L1182.7,375.8 L1183.5,374.1 L1184.2,372.5 L1184.9,370.9 L1185.6,369.2 L1186.2,367.6 L1186.8,366.0 L1187.4,364.4 L1188.0,362.7 L1188.6,361.1 L1189.1,359.5 L1189.7,357.8 L1190.2,356.2 L1190.6,354.6 L1191.1,353.0 L1191.5,351.3 L1191.9,349.7 L1192.3,348.1 L1192.7,346.4 L1193.0,344.8 L1193.4,343.2 L1193.7,341.6 L1193.9,339.9 L1194.2,338.3 L1194.4,336.7 L1194.6,335.1 L1194.8,333.4 L1195.0,331.8 L1195.1,330.2 L1195.3,328.5 L1195.4,326.9 L1195.4,325.3 L1195.5,323.7 L1195.5,322.0 L1195.5,320.4 L1195.5,318.8 L1195.5,317.1 L1195.4,315.5 L1195.4,313.9 L1195.3,312.3 L1195.1,310.6 L1195.0,309.0 L1194.8,307.4 L1194.6,305.7 L1194.4,304.1 L1194.2,302.5 L1193.9,300.9 L1193.7,299.2 L1193.4,297.6 L1193.0,296.0 L1192.7,294.4 L1192.3,292.7 L1191.9,291.1 L1191.5,289.5 L1191.1,287.8 L1190.6,286.2 L1190.2,284.6 L1189.7,283.0 L1189.1,281.3 L1188.6,279.7 L1188.0,278.1 L1187.4,276.4 L1186.8,274.8 L1186.2,273.2 L1185.6,271.6 L1184.9,269.9 L1184.2,268.3 L1183.5,266.7 L1182.7,265.0 L1182.0,263.4 L1181.2,261.8 L1180.4,260.2 L1179.6,258.5 L1178.7,256.9 L1177.9,255.3 L1177.0,253.7 L1176.1,252.0 L1175.1,250.4 L1174.2,248.8 L1173.2,247.1 L1172.2,245.5 L1171.2,243.9 L1170.2,242.3 L1169.2,240.6 L1168.1,239.0 L1167.0,237.4 L1165.9,235.7 L1164.8,234.1 L1163.6,232.5 L1162.4,230.9 L1161.2,229.2 L1160.0,227.6 L1158.8,226.0 L1157.5,224.3 L1156.3,222.7 L1155.0,221.1 L1153.7,219.5 L1152.4,217.8 L1151.0,216.2 L1149.6,214.6 L1148.3,213.0 L1146.9,211.3 L1145.4,209.7 L1144.0,208.1 L1142.5,206.4 L1141.1,204.8 L1139.6,203.2 L1138.1,201.6 L1136.5,199.9 L1135.0,198.3 L1133.4,196.7 L1131.8,195.0 L1130.2,193.4 L1128.6,191.8 L1127.0,190.2 L1125.3,188.5 L1123.7,186.9 L1122.0,185.3 L1120.3,183.6 L1118.6,182.0 L1116.8,180.4 L1115.1,178.8 L1113.3,177.1 L1111.5,175.5 L1109.7,173.9 L1107.9,172.3 L1106.1,170.6 L1104.2,169.0 L1102.4,167.4 L1100.5,165.7 L1098.6,164.1 L1096.7,162.5 L1094.8,160.9 L1092.8,159.2 L1090.9,157.6 L1088.9,156.0 L1086.9,154.3 L1084.9,152.7 L1082.9,151.1 L1080.9,149.5 L1078.9,147.8 L1076.8,146.2 L1074.7,144.6 L1072.7,142.9 L1070.6,141.3 L1068.5,139.7 L1066.4,138.1 L1064.2,136.4 L1062.1,134.8 L1060.0,133.2 L1057.8,131.6 L1055.6,129.9 L1053.4,128.3 L1051.2,126.7 L1049.0,125.0 L1046.8,123.4 L1044.6,121.8 L1042.3,120.2 L1040.1,118.5 L1037.8,116.9 L1035.5,115.3 L1033.3,113.6 L1031.0,112.0 L1028.7,110.4 L1026.3,108.8 L1024.0,107.1 L1021.7,105.5 L1019.3,103.9 L1017.0,102.2 L1014.6,100.6 L1012.3,99.0 L1009.9,97.4 L1007.5,95.7 L1005.1,94.1 L1002.7,92.5 L1000.3,90.9 L997.9,89.2 L995.5,87.6 L993.1,86.0 L990.6,84.3 L988.2,82.7 L985.7,81.1 L983.3,79.5 L980.8,77.8 L978.3,76.2 L975.9,74.6 L973.4,72.9 L970.9,71.3 L968.4,69.7 L965.9,68.1 L963.4,66.4 L960.9,64.8 L958.4,63.2 L955.9,61.5 L953.4,59.9 L950.9,58.3 L948.3,56.7 L945.8,55.0 L943.3,53.4 L940.7,51.8 L938.2,50.2 L935.7,48.5 L933.1,46.9 L930.6,45.3 L928.0,43.6 L925.5,42.0 L922.9,40.4 L920.4,38.8 L917.8,37.1 L915.3,35.5 L912.7,33.9 L910.2,32.2 L907.6,30.6 L905.1,29.0 L902.5,27.4" stroke="#6a6a6a" stroke-width="2.4" stroke-linecap="round" stroke-dasharray="0 5.5" fill="none"/>
<path d="M902.5,613.4 L904.6,611.8 L906.8,610.2 L908.9,608.6 L911.0,606.9 L913.2,605.3 L915.3,603.7 L917.4,602.0 L919.5,600.4 L921.7,598.8 L923.8,597.2 L925.9,595.5 L928.0,593.9 L930.1,592.3 L932.3,590.6 L934.4,589.0 L936.5,587.4 L938.6,585.8 L940.7,584.1 L942.8,582.5 L944.9,580.9 L947.0,579.3 L949.1,577.6 L951.2,576.0 L953.3,574.4 L955.4,572.7 L957.4,571.1 L959.5,569.5 L961.6,567.9 L963.6,566.2 L965.7,564.6 L967.8,563.0 L969.8,561.3 L971.9,559.7 L973.9,558.1 L975.9,556.5 L978.0,554.8 L980.0,553.2 L982.0,551.6 L984.0,549.9 L986.0,548.3 L988.0,546.7 L990.0,545.1 L992.0,543.4 L994.0,541.8 L996.0,540.2 L997.9,538.6 L999.9,536.9 L1001.8,535.3 L1003.8,533.7 L1005.7,532.0 L1007.6,530.4 L1009.6,528.8 L1011.5,527.2 L1013.4,525.5 L1015.3,523.9 L1017.1,522.3 L1019.0,520.6 L1020.9,519.0 L1022.7,517.4 L1024.6,515.8 L1026.4,514.1 L1028.3,512.5 L1030.1,510.9 L1031.9,509.2 L1033.7,507.6 L1035.5,506.0 L1037.3,504.4 L1039.1,502.7 L1040.8,501.1 L1042.6,499.5 L1044.3,497.9 L1046.0,496.2 L1047.8,494.6 L1049.5,493.0 L1051.2,491.3 L1052.8,489.7 L1054.5,488.1 L1056.2,486.5 L1057.8,484.8 L1059.5,483.2 L1061.1,481.6 L1062.7,479.9 L1064.3,478.3 L1065.9,476.7 L1067.5,475.1 L1069.0,473.4 L1070.6,471.8 L1072.1,470.2 L1073.7,468.5 L1075.2,466.9 L1076.7,465.3 L1078.2,463.7 L1079.6,462.0 L1081.1,460.4 L1082.5,458.8 L1084.0,457.2 L1085.4,455.5 L1086.8,453.9 L1088.2,452.3 L1089.6,450.6 L1090.9,449.0 L1092.3,447.4 L1093.6,445.8 L1094.9,444.1 L1096.2,442.5 L1097.5,440.9 L1098.8,439.2 L1100.1,437.6 L1101.3,436.0 L1102.5,434.4 L1103.8,432.7 L1105.0,431.1 L1106.1,429.5 L1107.3,427.8 L1108.5,426.2 L1109.6,424.6 L1110.7,423.0 L1111.8,421.3 L1112.9,419.7 L1114.0,418.1 L1115.0,416.5 L1116.1,414.8 L1117.1,413.2 L1118.1,411.6 L1119.1,409.9 L1120.1,408.3 L1121.0,406.7 L1122.0,405.1 L1122.9,403.4 L1123.8,401.8 L1124.7,400.2 L1125.6,398.5 L1126.4,396.9 L1127.3,395.3 L1128.1,393.7 L1128.9,392.0 L1129.7,390.4 L1130.5,388.8 L1131.2,387.1 L1132.0,385.5 L1132.7,383.9 L1133.4,382.3 L1134.1,380.6 L1134.7,379.0 L1135.4,377.4 L1136.0,375.8 L1136.6,374.1 L1137.2,372.5 L1137.8,370.9 L1138.4,369.2 L1138.9,367.6 L1139.4,366.0 L1140.0,364.4 L1140.4,362.7 L1140.9,361.1 L1141.4,359.5 L1141.8,357.8 L1142.2,356.2 L1142.6,354.6 L1143.0,353.0 L1143.4,351.3 L1143.7,349.7 L1144.0,348.1 L1144.3,346.4 L1144.6,344.8 L1144.9,343.2 L1145.1,341.6 L1145.4,339.9 L1145.6,338.3 L1145.8,336.7 L1145.9,335.1 L1146.1,333.4 L1146.2,331.8 L1146.4,330.2 L1146.5,328.5 L1146.6,326.9 L1146.6,325.3 L1146.7,323.7 L1146.7,322.0 L1146.7,320.4 L1146.7,318.8 L1146.7,317.1 L1146.6,315.5 L1146.6,313.9 L1146.5,312.3 L1146.4,310.6 L1146.2,309.0 L1146.1,307.4 L1145.9,305.7 L1145.8,304.1 L1145.6,302.5 L1145.4,300.9 L1145.1,299.2 L1144.9,297.6 L1144.6,296.0 L1144.3,294.4 L1144.0,292.7 L1143.7,291.1 L1143.4,289.5 L1143.0,287.8 L1142.6,286.2 L1142.2,284.6 L1141.8,283.0 L1141.4,281.3 L1140.9,279.7 L1140.4,278.1 L1140.0,276.4 L1139.4,274.8 L1138.9,273.2 L1138.4,271.6 L1137.8,269.9 L1137.2,268.3 L1136.6,266.7 L1136.0,265.0 L1135.4,263.4 L1134.7,261.8 L1134.1,260.2 L1133.4,258.5 L1132.7,256.9 L1132.0,255.3 L1131.2,253.7 L1130.5,252.0 L1129.7,250.4 L1128.9,248.8 L1128.1,247.1 L1127.3,245.5 L1126.4,243.9 L1125.6,242.3 L1124.7,240.6 L1123.8,239.0 L1122.9,237.4 L1122.0,235.7 L1121.0,234.1 L1120.1,232.5 L1119.1,230.9 L1118.1,229.2 L1117.1,227.6 L1116.1,226.0 L1115.0,224.3 L1114.0,222.7 L1112.9,221.1 L1111.8,219.5 L1110.7,217.8 L1109.6,216.2 L1108.5,214.6 L1107.3,213.0 L1106.1,211.3 L1105.0,209.7 L1103.8,208.1 L1102.5,206.4 L1101.3,204.8 L1100.1,203.2 L1098.8,201.6 L1097.5,199.9 L1096.2,198.3 L1094.9,196.7 L1093.6,195.0 L1092.3,193.4 L1090.9,191.8 L1089.6,190.2 L1088.2,188.5 L1086.8,186.9 L1085.4,185.3 L1084.0,183.6 L1082.5,182.0 L1081.1,180.4 L1079.6,178.8 L1078.2,177.1 L1076.7,175.5 L1075.2,173.9 L1073.7,172.3 L1072.1,170.6 L1070.6,169.0 L1069.0,167.4 L1067.5,165.7 L1065.9,164.1 L1064.3,162.5 L1062.7,160.9 L1061.1,159.2 L1059.5,157.6 L1057.8,156.0 L1056.2,154.3 L1054.5,152.7 L1052.8,151.1 L1051.2,149.5 L1049.5,147.8 L1047.8,146.2 L1046.0,144.6 L1044.3,142.9 L1042.6,141.3 L1040.8,139.7 L1039.1,138.1 L1037.3,136.4 L1035.5,134.8 L1033.7,133.2 L1031.9,131.6 L1030.1,129.9 L1028.3,128.3 L1026.4,126.7 L1024.6,125.0 L1022.7,123.4 L1020.9,121.8 L1019.0,120.2 L1017.1,118.5 L1015.3,116.9 L1013.4,115.3 L1011.5,113.6 L1009.6,112.0 L1007.6,110.4 L1005.7,108.8 L1003.8,107.1 L1001.8,105.5 L999.9,103.9 L997.9,102.2 L996.0,100.6 L994.0,99.0 L992.0,97.4 L990.0,95.7 L988.0,94.1 L986.0,92.5 L984.0,90.9 L982.0,89.2 L980.0,87.6 L978.0,86.0 L975.9,84.3 L973.9,82.7 L971.9,81.1 L969.8,79.5 L967.8,77.8 L965.7,76.2 L963.6,74.6 L961.6,72.9 L959.5,71.3 L957.4,69.7 L955.4,68.1 L953.3,66.4 L951.2,64.8 L949.1,63.2 L947.0,61.5 L944.9,59.9 L942.8,58.3 L940.7,56.7 L938.6,55.0 L936.5,53.4 L934.4,51.8 L932.3,50.2 L930.1,48.5 L928.0,46.9 L925.9,45.3 L923.8,43.6 L921.7,42.0 L919.5,40.4 L917.4,38.8 L915.3,37.1 L913.2,35.5 L911.0,33.9 L908.9,32.2 L906.8,30.6 L904.6,29.0 L902.5,27.4" stroke="#6a6a6a" stroke-width="2.4" stroke-linecap="round" stroke-dasharray="0 5.5" fill="none"/>
<path d="M902.5,613.4 L904.2,611.8 L905.9,610.2 L907.6,608.6 L909.3,606.9 L911.0,605.3 L912.7,603.7 L914.4,602.0 L916.1,600.4 L917.8,598.8 L919.5,597.2 L921.2,595.5 L922.9,593.9 L924.6,592.3 L926.3,590.6 L928.0,589.0 L929.7,587.4 L931.4,585.8 L933.1,584.1 L934.7,582.5 L936.4,580.9 L938.1,579.3 L939.8,577.6 L941.4,576.0 L943.1,574.4 L944.8,572.7 L946.4,571.1 L948.1,569.5 L949.8,567.9 L951.4,566.2 L953.1,564.6 L954.7,563.0 L956.3,561.3 L958.0,559.7 L959.6,558.1 L961.2,556.5 L962.9,554.8 L964.5,553.2 L966.1,551.6 L967.7,549.9 L969.3,548.3 L970.9,546.7 L972.5,545.1 L974.1,543.4 L975.7,541.8 L977.3,540.2 L978.8,538.6 L980.4,536.9 L982.0,535.3 L983.5,533.7 L985.1,532.0 L986.6,530.4 L988.1,528.8 L989.7,527.2 L991.2,525.5 L992.7,523.9 L994.2,522.3 L995.7,520.6 L997.2,519.0 L998.7,517.4 L1000.2,515.8 L1001.7,514.1 L1003.1,512.5 L1004.6,510.9 L1006.0,509.2 L1007.5,507.6 L1008.9,506.0 L1010.3,504.4 L1011.7,502.7 L1013.2,501.1 L1014.6,499.5 L1015.9,497.9 L1017.3,496.2 L1018.7,494.6 L1020.1,493.0 L1021.4,491.3 L1022.8,489.7 L1024.1,488.1 L1025.4,486.5 L1026.8,484.8 L1028.1,483.2 L1029.4,481.6 L1030.7,479.9 L1031.9,478.3 L1033.2,476.7 L1034.5,475.1 L1035.7,473.4 L1037.0,471.8 L1038.2,470.2 L1039.4,468.5 L1040.6,466.9 L1041.8,465.3 L1043.0,463.7 L1044.2,462.0 L1045.4,460.4 L1046.5,458.8 L1047.7,457.2 L1048.8,455.5 L1049.9,453.9 L1051.1,452.3 L1052.2,450.6 L1053.2,449.0 L1054.3,447.4 L1055.4,445.8 L1056.4,444.1 L1057.5,442.5 L1058.5,440.9 L1059.5,439.2 L1060.5,437.6 L1061.5,436.0 L1062.5,434.4 L1063.5,432.7 L1064.5,431.1 L1065.4,429.5 L1066.3,427.8 L1067.3,426.2 L1068.2,424.6 L1069.1,423.0 L1070.0,421.3 L1070.8,419.7 L1071.7,418.1 L1072.5,416.5 L1073.4,414.8 L1074.2,413.2 L1075.0,411.6 L1075.8,409.9 L1076.6,408.3 L1077.3,406.7 L1078.1,405.1 L1078.8,403.4 L1079.6,401.8 L1080.3,400.2 L1081.0,398.5 L1081.7,396.9 L1082.3,395.3 L1083.0,393.7 L1083.6,392.0 L1084.3,390.4 L1084.9,388.8 L1085.5,387.1 L1086.1,385.5 L1086.7,383.9 L1087.2,382.3 L1087.8,380.6 L1088.3,379.0 L1088.8,377.4 L1089.3,375.8 L1089.8,374.1 L1090.3,372.5 L1090.8,370.9 L1091.2,369.2 L1091.6,367.6 L1092.1,366.0 L1092.5,364.4 L1092.9,362.7 L1093.2,361.1 L1093.6,359.5 L1093.9,357.8 L1094.3,356.2 L1094.6,354.6 L1094.9,353.0 L1095.2,351.3 L1095.5,349.7 L1095.7,348.1 L1096.0,346.4 L1096.2,344.8 L1096.4,343.2 L1096.6,341.6 L1096.8,339.9 L1097.0,338.3 L1097.1,336.7 L1097.3,335.1 L1097.4,333.4 L1097.5,331.8 L1097.6,330.2 L1097.7,328.5 L1097.7,326.9 L1097.8,325.3 L1097.8,323.7 L1097.9,322.0 L1097.9,320.4 L1097.9,318.8 L1097.8,317.1 L1097.8,315.5 L1097.7,313.9 L1097.7,312.3 L1097.6,310.6 L1097.5,309.0 L1097.4,307.4 L1097.3,305.7 L1097.1,304.1 L1097.0,302.5 L1096.8,300.9 L1096.6,299.2 L1096.4,297.6 L1096.2,296.0 L1096.0,294.4 L1095.7,292.7 L1095.5,291.1 L1095.2,289.5 L1094.9,287.8 L1094.6,286.2 L1094.3,284.6 L1093.9,283.0 L1093.6,281.3 L1093.2,279.7 L1092.9,278.1 L1092.5,276.4 L1092.1,274.8 L1091.6,273.2 L1091.2,271.6 L1090.8,269.9 L1090.3,268.3 L1089.8,266.7 L1089.3,265.0 L1088.8,263.4 L1088.3,261.8 L1087.8,260.2 L1087.2,258.5 L1086.7,256.9 L1086.1,255.3 L1085.5,253.7 L1084.9,252.0 L1084.3,250.4 L1083.6,248.8 L1083.0,247.1 L1082.3,245.5 L1081.7,243.9 L1081.0,242.3 L1080.3,240.6 L1079.6,239.0 L1078.8,237.4 L1078.1,235.7 L1077.3,234.1 L1076.6,232.5 L1075.8,230.9 L1075.0,229.2 L1074.2,227.6 L1073.4,226.0 L1072.5,224.3 L1071.7,222.7 L1070.8,221.1 L1070.0,219.5 L1069.1,217.8 L1068.2,216.2 L1067.3,214.6 L1066.3,213.0 L1065.4,211.3 L1064.5,209.7 L1063.5,208.1 L1062.5,206.4 L1061.5,204.8 L1060.5,203.2 L1059.5,201.6 L1058.5,199.9 L1057.5,198.3 L1056.4,196.7 L1055.4,195.0 L1054.3,193.4 L1053.2,191.8 L1052.2,190.2 L1051.1,188.5 L1049.9,186.9 L1048.8,185.3 L1047.7,183.6 L1046.5,182.0 L1045.4,180.4 L1044.2,178.8 L1043.0,177.1 L1041.8,175.5 L1040.6,173.9 L1039.4,172.3 L1038.2,170.6 L1037.0,169.0 L1035.7,167.4 L1034.5,165.7 L1033.2,164.1 L1031.9,162.5 L1030.7,160.9 L1029.4,159.2 L1028.1,157.6 L1026.8,156.0 L1025.4,154.3 L1024.1,152.7 L1022.8,151.1 L1021.4,149.5 L1020.1,147.8 L1018.7,146.2 L1017.3,144.6 L1015.9,142.9 L1014.6,141.3 L1013.2,139.7 L1011.7,138.1 L1010.3,136.4 L1008.9,134.8 L1007.5,133.2 L1006.0,131.6 L1004.6,129.9 L1003.1,128.3 L1001.7,126.7 L1000.2,125.0 L998.7,123.4 L997.2,121.8 L995.7,120.2 L994.2,118.5 L992.7,116.9 L991.2,115.3 L989.7,113.6 L988.1,112.0 L986.6,110.4 L985.1,108.8 L983.5,107.1 L982.0,105.5 L980.4,103.9 L978.8,102.2 L977.3,100.6 L975.7,99.0 L974.1,97.4 L972.5,95.7 L970.9,94.1 L969.3,92.5 L967.7,90.9 L966.1,89.2 L964.5,87.6 L962.9,86.0 L961.2,84.3 L959.6,82.7 L958.0,81.1 L956.3,79.5 L954.7,77.8 L953.1,76.2 L951.4,74.6 L949.8,72.9 L948.1,71.3 L946.4,69.7 L944.8,68.1 L943.1,66.4 L941.4,64.8 L939.8,63.2 L938.1,61.5 L936.4,59.9 L934.7,58.3 L933.1,56.7 L931.4,55.0 L929.7,53.4 L928.0,51.8 L926.3,50.2 L924.6,48.5 L922.9,46.9 L921.2,45.3 L919.5,43.6 L917.8,42.0 L916.1,40.4 L914.4,38.8 L912.7,37.1 L911.0,35.5 L909.3,33.9 L907.6,32.2 L905.9,30.6 L904.2,29.0 L902.5,27.4" stroke="#6a6a6a" stroke-width="2.4" stroke-linecap="round" stroke-dasharray="0 5.5" fill="none"/>
<path d="M902.5,613.4 L903.8,611.8 L905.1,610.2 L906.3,608.6 L907.6,606.9 L908.9,605.3 L910.2,603.7 L911.4,602.0 L912.7,600.4 L914.0,598.8 L915.3,597.2 L916.5,595.5 L917.8,593.9 L919.1,592.3 L920.4,590.6 L921.6,589.0 L922.9,587.4 L924.2,585.8 L925.4,584.1 L926.7,582.5 L927.9,580.9 L929.2,579.3 L930.5,577.6 L931.7,576.0 L933.0,574.4 L934.2,572.7 L935.5,571.1 L936.7,569.5 L937.9,567.9 L939.2,566.2 L940.4,564.6 L941.7,563.0 L942.9,561.3 L944.1,559.7 L945.3,558.1 L946.6,556.5 L947.8,554.8 L949.0,553.2 L950.2,551.6 L951.4,549.9 L952.6,548.3 L953.8,546.7 L955.0,545.1 L956.2,543.4 L957.4,541.8 L958.6,540.2 L959.7,538.6 L960.9,536.9 L962.1,535.3 L963.3,533.7 L964.4,532.0 L965.6,530.4 L966.7,528.8 L967.9,527.2 L969.0,525.5 L970.2,523.9 L971.3,522.3 L972.4,520.6 L973.5,519.0 L974.6,517.4 L975.8,515.8 L976.9,514.1 L978.0,512.5 L979.1,510.9 L980.1,509.2 L981.2,507.6 L982.3,506.0 L983.4,504.4 L984.4,502.7 L985.5,501.1 L986.5,499.5 L987.6,497.9 L988.6,496.2 L989.7,494.6 L990.7,493.0 L991.7,491.3 L992.7,489.7 L993.7,488.1 L994.7,486.5 L995.7,484.8 L996.7,483.2 L997.7,481.6 L998.6,479.9 L999.6,478.3 L1000.5,476.7 L1001.5,475.1 L1002.4,473.4 L1003.4,471.8 L1004.3,470.2 L1005.2,468.5 L1006.1,466.9 L1007.0,465.3 L1007.9,463.7 L1008.8,462.0 L1009.7,460.4 L1010.5,458.8 L1011.4,457.2 L1012.2,455.5 L1013.1,453.9 L1013.9,452.3 L1014.7,450.6 L1015.6,449.0 L1016.4,447.4 L1017.2,445.8 L1018.0,444.1 L1018.7,442.5 L1019.5,440.9 L1020.3,439.2 L1021.0,437.6 L1021.8,436.0 L1022.5,434.4 L1023.3,432.7 L1024.0,431.1 L1024.7,429.5 L1025.4,427.8 L1026.1,426.2 L1026.8,424.6 L1027.4,423.0 L1028.1,421.3 L1028.7,419.7 L1029.4,418.1 L1030.0,416.5 L1030.6,414.8 L1031.3,413.2 L1031.9,411.6 L1032.5,409.9 L1033.1,408.3 L1033.6,406.7 L1034.2,405.1 L1034.7,403.4 L1035.3,401.8 L1035.8,400.2 L1036.4,398.5 L1036.9,396.9 L1037.4,395.3 L1037.9,393.7 L1038.4,392.0 L1038.8,390.4 L1039.3,388.8 L1039.7,387.1 L1040.2,385.5 L1040.6,383.9 L1041.0,382.3 L1041.4,380.6 L1041.8,379.0 L1042.2,377.4 L1042.6,375.8 L1043.0,374.1 L1043.3,372.5 L1043.7,370.9 L1044.0,369.2 L1044.4,367.6 L1044.7,366.0 L1045.0,364.4 L1045.3,362.7 L1045.5,361.1 L1045.8,359.5 L1046.1,357.8 L1046.3,356.2 L1046.6,354.6 L1046.8,353.0 L1047.0,351.3 L1047.2,349.7 L1047.4,348.1 L1047.6,346.4 L1047.8,344.8 L1047.9,343.2 L1048.1,341.6 L1048.2,339.9 L1048.3,338.3 L1048.5,336.7 L1048.6,335.1 L1048.7,333.4 L1048.7,331.8 L1048.8,330.2 L1048.9,328.5 L1048.9,326.9 L1049.0,325.3 L1049.0,323.7 L1049.0,322.0 L1049.0,320.4 L1049.0,318.8 L1049.0,317.1 L1049.0,315.5 L1048.9,313.9 L1048.9,312.3 L1048.8,310.6 L1048.7,309.0 L1048.7,307.4 L1048.6,305.7 L1048.5,304.1 L1048.3,302.5 L1048.2,300.9 L1048.1,299.2 L1047.9,297.6 L1047.8,296.0 L1047.6,294.4 L1047.4,292.7 L1047.2,291.1 L1047.0,289.5 L1046.8,287.8 L1046.6,286.2 L1046.3,284.6 L1046.1,283.0 L1045.8,281.3 L1045.5,279.7 L1045.3,278.1 L1045.0,276.4 L1044.7,274.8 L1044.4,273.2 L1044.0,271.6 L1043.7,269.9 L1043.3,268.3 L1043.0,266.7 L1042.6,265.0 L1042.2,263.4 L1041.8,261.8 L1041.4,260.2 L1041.0,258.5 L1040.6,256.9 L1040.2,255.3 L1039.7,253.7 L1039.3,252.0 L1038.8,250.4 L1038.4,248.8 L1037.9,247.1 L1037.4,245.5 L1036.9,243.9 L1036.4,242.3 L1035.8,240.6 L1035.3,239.0 L1034.7,237.4 L1034.2,235.7 L1033.6,234.1 L1033.1,232.5 L1032.5,230.9 L1031.9,229.2 L1031.3,227.6 L1030.6,226.0 L1030.0,224.3 L1029.4,222.7 L1028.7,221.1 L1028.1,219.5 L1027.4,217.8 L1026.8,216.2 L1026.1,214.6 L1025.4,213.0 L1024.7,211.3 L1024.0,209.7 L1023.3,208.1 L1022.5,206.4 L1021.8,204.8 L1021.0,203.2 L1020.3,201.6 L1019.5,199.9 L1018.7,198.3 L1018.0,196.7 L1017.2,195.0 L1016.4,193.4 L1015.6,191.8 L1014.7,190.2 L1013.9,188.5 L1013.1,186.9 L1012.2,185.3 L1011.4,183.6 L1010.5,182.0 L1009.7,180.4 L1008.8,178.8 L1007.9,177.1 L1007.0,175.5 L1006.1,173.9 L1005.2,172.3 L1004.3,170.6 L1003.4,169.0 L1002.4,167.4 L1001.5,165.7 L1000.5,164.1 L999.6,162.5 L998.6,160.9 L997.7,159.2 L996.7,157.6 L995.7,156.0 L994.7,154.3 L993.7,152.7 L992.7,151.1 L991.7,149.5 L990.7,147.8 L989.7,146.2 L988.6,144.6 L987.6,142.9 L986.5,141.3 L985.5,139.7 L984.4,138.1 L983.4,136.4 L982.3,134.8 L981.2,133.2 L980.1,131.6 L979.1,129.9 L978.0,128.3 L976.9,126.7 L975.8,125.0 L974.6,123.4 L973.5,121.8 L972.4,120.2 L971.3,118.5 L970.2,116.9 L969.0,115.3 L967.9,113.6 L966.7,112.0 L965.6,110.4 L964.4,108.8 L963.3,107.1 L962.1,105.5 L960.9,103.9 L959.7,102.2 L958.6,100.6 L957.4,99.0 L956.2,97.4 L955.0,95.7 L953.8,94.1 L952.6,92.5 L951.4,90.9 L950.2,89.2 L949.0,87.6 L947.8,86.0 L946.6,84.3 L945.3,82.7 L944.1,81.1 L942.9,79.5 L941.7,77.8 L940.4,76.2 L939.2,74.6 L937.9,72.9 L936.7,71.3 L935.5,69.7 L934.2,68.1 L933.0,66.4 L931.7,64.8 L930.5,63.2 L929.2,61.5 L927.9,59.9 L926.7,58.3 L925.4,56.7 L924.2,55.0 L922.9,53.4 L921.6,51.8 L920.4,50.2 L919.1,48.5 L917.8,46.9 L916.5,45.3 L915.3,43.6 L914.0,42.0 L912.7,40.4 L911.4,38.8 L910.2,37.1 L908.9,35.5 L907.6,33.9 L906.3,32.2 L905.1,30.6 L903.8,29.0 L902.5,27.4" stroke="#6a6a6a" stroke-width="2.4" stroke-linecap="round" stroke-dasharray="0 5.5" fill="none"/>
<path d="M902.5,613.4 L903.4,611.8 L904.2,610.2 L905.1,608.6 L905.9,606.9 L906.8,605.3 L907.6,603.7 L908.5,602.0 L909.3,600.4 L910.2,598.8 L911.0,597.2 L911.9,595.5 L912.7,593.9 L913.6,592.3 L914.4,590.6 L915.2,589.0 L916.1,587.4 L916.9,585.8 L917.8,584.1 L918.6,582.5 L919.5,580.9 L920.3,579.3 L921.1,577.6 L922.0,576.0 L922.8,574.4 L923.6,572.7 L924.5,571.1 L925.3,569.5 L926.1,567.9 L927.0,566.2 L927.8,564.6 L928.6,563.0 L929.4,561.3 L930.2,559.7 L931.1,558.1 L931.9,556.5 L932.7,554.8 L933.5,553.2 L934.3,551.6 L935.1,549.9 L935.9,548.3 L936.7,546.7 L937.5,545.1 L938.3,543.4 L939.1,541.8 L939.9,540.2 L940.7,538.6 L941.4,536.9 L942.2,535.3 L943.0,533.7 L943.8,532.0 L944.6,530.4 L945.3,528.8 L946.1,527.2 L946.8,525.5 L947.6,523.9 L948.4,522.3 L949.1,520.6 L949.9,519.0 L950.6,517.4 L951.3,515.8 L952.1,514.1 L952.8,512.5 L953.5,510.9 L954.3,509.2 L955.0,507.6 L955.7,506.0 L956.4,504.4 L957.1,502.7 L957.8,501.1 L958.5,499.5 L959.2,497.9 L959.9,496.2 L960.6,494.6 L961.3,493.0 L962.0,491.3 L962.6,489.7 L963.3,488.1 L964.0,486.5 L964.6,484.8 L965.3,483.2 L965.9,481.6 L966.6,479.9 L967.2,478.3 L967.9,476.7 L968.5,475.1 L969.1,473.4 L969.7,471.8 L970.4,470.2 L971.0,468.5 L971.6,466.9 L972.2,465.3 L972.8,463.7 L973.4,462.0 L973.9,460.4 L974.5,458.8 L975.1,457.2 L975.7,455.5 L976.2,453.9 L976.8,452.3 L977.3,450.6 L977.9,449.0 L978.4,447.4 L978.9,445.8 L979.5,444.1 L980.0,442.5 L980.5,440.9 L981.0,439.2 L981.5,437.6 L982.0,436.0 L982.5,434.4 L983.0,432.7 L983.5,431.1 L984.0,429.5 L984.4,427.8 L984.9,426.2 L985.3,424.6 L985.8,423.0 L986.2,421.3 L986.7,419.7 L987.1,418.1 L987.5,416.5 L987.9,414.8 L988.3,413.2 L988.7,411.6 L989.1,409.9 L989.5,408.3 L989.9,406.7 L990.3,405.1 L990.7,403.4 L991.0,401.8 L991.4,400.2 L991.7,398.5 L992.1,396.9 L992.4,395.3 L992.7,393.7 L993.1,392.0 L993.4,390.4 L993.7,388.8 L994.0,387.1 L994.3,385.5 L994.6,383.9 L994.9,382.3 L995.1,380.6 L995.4,379.0 L995.7,377.4 L995.9,375.8 L996.2,374.1 L996.4,372.5 L996.6,370.9 L996.9,369.2 L997.1,367.6 L997.3,366.0 L997.5,364.4 L997.7,362.7 L997.9,361.1 L998.0,359.5 L998.2,357.8 L998.4,356.2 L998.5,354.6 L998.7,353.0 L998.8,351.3 L999.0,349.7 L999.1,348.1 L999.2,346.4 L999.3,344.8 L999.5,343.2 L999.6,341.6 L999.6,339.9 L999.7,338.3 L999.8,336.7 L999.9,335.1 L999.9,333.4 L1000.0,331.8 L1000.0,330.2 L1000.1,328.5 L1000.1,326.9 L1000.1,325.3 L1000.2,323.7 L1000.2,322.0 L1000.2,320.4 L1000.2,318.8 L1000.2,317.1 L1000.1,315.5 L1000.1,313.9 L1000.1,312.3 L1000.0,310.6 L1000.0,309.0 L999.9,307.4 L999.9,305.7 L999.8,304.1 L999.7,302.5 L999.6,300.9 L999.6,299.2 L999.5,297.6 L999.3,296.0 L999.2,294.4 L999.1,292.7 L999.0,291.1 L998.8,289.5 L998.7,287.8 L998.5,286.2 L998.4,284.6 L998.2,283.0 L998.0,281.3 L997.9,279.7 L997.7,278.1 L997.5,276.4 L997.3,274.8 L997.1,273.2 L996.9,271.6 L996.6,269.9 L996.4,268.3 L996.2,266.7 L995.9,265.0 L995.7,263.4 L995.4,261.8 L995.1,260.2 L994.9,258.5 L994.6,256.9 L994.3,255.3 L994.0,253.7 L993.7,252.0 L993.4,250.4 L993.1,248.8 L992.7,247.1 L992.4,245.5 L992.1,243.9 L991.7,242.3 L991.4,240.6 L991.0,239.0 L990.7,237.4 L990.3,235.7 L989.9,234.1 L989.5,232.5 L989.1,230.9 L988.7,229.2 L988.3,227.6 L987.9,226.0 L987.5,224.3 L987.1,222.7 L986.7,221.1 L986.2,219.5 L985.8,217.8 L985.3,216.2 L984.9,214.6 L984.4,213.0 L984.0,211.3 L983.5,209.7 L983.0,208.1 L982.5,206.4 L982.0,204.8 L981.5,203.2 L981.0,201.6 L980.5,199.9 L980.0,198.3 L979.5,196.7 L978.9,195.0 L978.4,193.4 L977.9,191.8 L977.3,190.2 L976.8,188.5 L976.2,186.9 L975.7,185.3 L975.1,183.6 L974.5,182.0 L973.9,180.4 L973.4,178.8 L972.8,177.1 L972.2,175.5 L971.6,173.9 L971.0,172.3 L970.4,170.6 L969.7,169.0 L969.1,167.4 L968.5,165.7 L967.9,164.1 L967.2,162.5 L966.6,160.9 L965.9,159.2 L965.3,157.6 L964.6,156.0 L964.0,154.3 L963.3,152.7 L962.6,151.1 L962.0,149.5 L961.3,147.8 L960.6,146.2 L959.9,144.6 L959.2,142.9 L958.5,141.3 L957.8,139.7 L957.1,138.1 L956.4,136.4 L955.7,134.8 L955.0,133.2 L954.3,131.6 L953.5,129.9 L952.8,128.3 L952.1,126.7 L951.3,125.0 L950.6,123.4 L949.9,121.8 L949.1,120.2 L948.4,118.5 L947.6,116.9 L946.8,115.3 L946.1,113.6 L945.3,112.0 L944.6,110.4 L943.8,108.8 L943.0,107.1 L942.2,105.5 L941.4,103.9 L940.7,102.2 L939.9,100.6 L939.1,99.0 L938.3,97.4 L937.5,95.7 L936.7,94.1 L935.9,92.5 L935.1,90.9 L934.3,89.2 L933.5,87.6 L932.7,86.0 L931.9,84.3 L931.1,82.7 L930.2,81.1 L929.4,79.5 L928.6,77.8 L927.8,76.2 L927.0,74.6 L926.1,72.9 L925.3,71.3 L924.5,69.7 L923.6,68.1 L922.8,66.4 L922.0,64.8 L921.1,63.2 L920.3,61.5 L919.5,59.9 L918.6,58.3 L917.8,56.7 L916.9,55.0 L916.1,53.4 L915.2,51.8 L914.4,50.2 L913.6,48.5 L912.7,46.9 L911.9,45.3 L911.0,43.6 L910.2,42.0 L909.3,40.4 L908.5,38.8 L907.6,37.1 L906.8,35.5 L905.9,33.9 L905.1,32.2 L904.2,30.6 L903.4,29.0 L902.5,27.4" stroke="#6a6a6a" stroke-width="2.4" stroke-linecap="round" stroke-dasharray="0 5.5" fill="none"/>
<path d="M902.5,613.4 L902.9,611.8 L903.4,610.2 L903.8,608.6 L904.2,606.9 L904.6,605.3 L905.1,603.7 L905.5,602.0 L905.9,600.4 L906.3,598.8 L906.8,597.2 L907.2,595.5 L907.6,593.9 L908.0,592.3 L908.5,590.6 L908.9,589.0 L909.3,587.4 L909.7,585.8 L910.1,584.1 L910.6,582.5 L911.0,580.9 L911.4,579.3 L911.8,577.6 L912.2,576.0 L912.7,574.4 L913.1,572.7 L913.5,571.1 L913.9,569.5 L914.3,567.9 L914.7,566.2 L915.1,564.6 L915.6,563.0 L916.0,561.3 L916.4,559.7 L916.8,558.1 L917.2,556.5 L917.6,554.8 L918.0,553.2 L918.4,551.6 L918.8,549.9 L919.2,548.3 L919.6,546.7 L920.0,545.1 L920.4,543.4 L920.8,541.8 L921.2,540.2 L921.6,538.6 L922.0,536.9 L922.4,535.3 L922.8,533.7 L923.1,532.0 L923.5,530.4 L923.9,528.8 L924.3,527.2 L924.7,525.5 L925.1,523.9 L925.4,522.3 L925.8,520.6 L926.2,519.0 L926.5,517.4 L926.9,515.8 L927.3,514.1 L927.7,512.5 L928.0,510.9 L928.4,509.2 L928.7,507.6 L929.1,506.0 L929.5,504.4 L929.8,502.7 L930.2,501.1 L930.5,499.5 L930.9,497.9 L931.2,496.2 L931.6,494.6 L931.9,493.0 L932.2,491.3 L932.6,489.7 L932.9,488.1 L933.2,486.5 L933.6,484.8 L933.9,483.2 L934.2,481.6 L934.5,479.9 L934.9,478.3 L935.2,476.7 L935.5,475.1 L935.8,473.4 L936.1,471.8 L936.4,470.2 L936.7,468.5 L937.0,466.9 L937.3,465.3 L937.6,463.7 L937.9,462.0 L938.2,460.4 L938.5,458.8 L938.8,457.2 L939.1,455.5 L939.4,453.9 L939.6,452.3 L939.9,450.6 L940.2,449.0 L940.5,447.4 L940.7,445.8 L941.0,444.1 L941.2,442.5 L941.5,440.9 L941.8,439.2 L942.0,437.6 L942.3,436.0 L942.5,434.4 L942.8,432.7 L943.0,431.1 L943.2,429.5 L943.5,427.8 L943.7,426.2 L943.9,424.6 L944.1,423.0 L944.4,421.3 L944.6,419.7 L944.8,418.1 L945.0,416.5 L945.2,414.8 L945.4,413.2 L945.6,411.6 L945.8,409.9 L946.0,408.3 L946.2,406.7 L946.4,405.1 L946.6,403.4 L946.8,401.8 L946.9,400.2 L947.1,398.5 L947.3,396.9 L947.5,395.3 L947.6,393.7 L947.8,392.0 L947.9,390.4 L948.1,388.8 L948.2,387.1 L948.4,385.5 L948.5,383.9 L948.7,382.3 L948.8,380.6 L948.9,379.0 L949.1,377.4 L949.2,375.8 L949.3,374.1 L949.4,372.5 L949.6,370.9 L949.7,369.2 L949.8,367.6 L949.9,366.0 L950.0,364.4 L950.1,362.7 L950.2,361.1 L950.3,359.5 L950.4,357.8 L950.4,356.2 L950.5,354.6 L950.6,353.0 L950.7,351.3 L950.7,349.7 L950.8,348.1 L950.9,346.4 L950.9,344.8 L951.0,343.2 L951.0,341.6 L951.1,339.9 L951.1,338.3 L951.2,336.7 L951.2,335.1 L951.2,333.4 L951.2,331.8 L951.3,330.2 L951.3,328.5 L951.3,326.9 L951.3,325.3 L951.3,323.7 L951.3,322.0 L951.3,320.4 L951.3,318.8 L951.3,317.1 L951.3,315.5 L951.3,313.9 L951.3,312.3 L951.3,310.6 L951.2,309.0 L951.2,307.4 L951.2,305.7 L951.2,304.1 L951.1,302.5 L951.1,300.9 L951.0,299.2 L951.0,297.6 L950.9,296.0 L950.9,294.4 L950.8,292.7 L950.7,291.1 L950.7,289.5 L950.6,287.8 L950.5,286.2 L950.4,284.6 L950.4,283.0 L950.3,281.3 L950.2,279.7 L950.1,278.1 L950.0,276.4 L949.9,274.8 L949.8,273.2 L949.7,271.6 L949.6,269.9 L949.4,268.3 L949.3,266.7 L949.2,265.0 L949.1,263.4 L948.9,261.8 L948.8,260.2 L948.7,258.5 L948.5,256.9 L948.4,255.3 L948.2,253.7 L948.1,252.0 L947.9,250.4 L947.8,248.8 L947.6,247.1 L947.5,245.5 L947.3,243.9 L947.1,242.3 L946.9,240.6 L946.8,239.0 L946.6,237.4 L946.4,235.7 L946.2,234.1 L946.0,232.5 L945.8,230.9 L945.6,229.2 L945.4,227.6 L945.2,226.0 L945.0,224.3 L944.8,222.7 L944.6,221.1 L944.4,219.5 L944.1,217.8 L943.9,216.2 L943.7,214.6 L943.5,213.0 L943.2,211.3 L943.0,209.7 L942.8,208.1 L942.5,206.4 L942.3,204.8 L942.0,203.2 L941.8,201.6 L941.5,199.9 L941.2,198.3 L941.0,196.7 L940.7,195.0 L940.5,193.4 L940.2,191.8 L939.9,190.2 L939.6,188.5 L939.4,186.9 L939.1,185.3 L938.8,183.6 L938.5,182.0 L938.2,180.4 L937.9,178.8 L937.6,177.1 L937.3,175.5 L937.0,173.9 L936.7,172.3 L936.4,170.6 L936.1,169.0 L935.8,167.4 L935.5,165.7 L935.2,164.1 L934.9,162.5 L934.5,160.9 L934.2,159.2 L933.9,157.6 L933.6,156.0 L933.2,154.3 L932.9,152.7 L932.6,151.1 L932.2,149.5 L931.9,147.8 L931.6,146.2 L931.2,144.6 L930.9,142.9 L930.5,141.3 L930.2,139.7 L929.8,138.1 L929.5,136.4 L929.1,134.8 L928.7,133.2 L928.4,131.6 L928.0,129.9 L927.7,128.3 L927.3,126.7 L926.9,125.0 L926.5,123.4 L926.2,121.8 L925.8,120.2 L925.4,118.5 L925.1,116.9 L924.7,115.3 L924.3,113.6 L923.9,112.0 L923.5,110.4 L923.1,108.8 L922.8,107.1 L922.4,105.5 L922.0,103.9 L921.6,102.2 L921.2,100.6 L920.8,99.0 L920.4,97.4 L920.0,95.7 L919.6,94.1 L919.2,92.5 L918.8,90.9 L918.4,89.2 L918.0,87.6 L917.6,86.0 L917.2,84.3 L916.8,82.7 L916.4,81.1 L916.0,79.5 L915.6,77.8 L915.1,76.2 L914.7,74.6 L914.3,72.9 L913.9,71.3 L913.5,69.7 L913.1,68.1 L912.7,66.4 L912.2,64.8 L911.8,63.2 L911.4,61.5 L911.0,59.9 L910.6,58.3 L910.1,56.7 L909.7,55.0 L909.3,53.4 L908.9,51.8 L908.5,50.2 L908.0,48.5 L907.6,46.9 L907.2,45.3 L906.8,43.6 L906.3,42.0 L905.9,40.4 L905.5,38.8 L905.1,37.1 L904.6,35.5 L904.2,33.9 L903.8,32.2 L903.4,30.6 L902.9,29.0 L902.5,27.4" stroke="#6a6a6a" stroke-width="2.4" stroke-linecap="round" stroke-dasharray="0 5.5" fill="none"/>
<path d="M902.5,613.4 L902.5,611.8 L902.5,610.2 L902.5,608.6 L902.5,606.9 L902.5,605.3 L902.5,603.7 L902.5,602.0 L902.5,600.4 L902.5,598.8 L902.5,597.2 L902.5,595.5 L902.5,593.9 L902.5,592.3 L902.5,590.6 L902.5,589.0 L902.5,587.4 L902.5,585.8 L902.5,584.1 L902.5,582.5 L902.5,580.9 L902.5,579.3 L902.5,577.6 L902.5,576.0 L902.5,574.4 L902.5,572.7 L902.5,571.1 L902.5,569.5 L902.5,567.9 L902.5,566.2 L902.5,564.6 L902.5,563.0 L902.5,561.3 L902.5,559.7 L902.5,558.1 L902.5,556.5 L902.5,554.8 L902.5,553.2 L902.5,551.6 L902.5,549.9 L902.5,548.3 L902.5,546.7 L902.5,545.1 L902.5,543.4 L902.5,541.8 L902.5,540.2 L902.5,538.6 L902.5,536.9 L902.5,535.3 L902.5,533.7 L902.5,532.0 L902.5,530.4 L902.5,528.8 L902.5,527.2 L902.5,525.5 L902.5,523.9 L902.5,522.3 L902.5,520.6 L902.5,519.0 L902.5,517.4 L902.5,515.8 L902.5,514.1 L902.5,512.5 L902.5,510.9 L902.5,509.2 L902.5,507.6 L902.5,506.0 L902.5,504.4 L902.5,502.7 L902.5,501.1 L902.5,499.5 L902.5,497.9 L902.5,496.2 L902.5,494.6 L902.5,493.0 L902.5,491.3 L902.5,489.7 L902.5,488.1 L902.5,486.5 L902.5,484.8 L902.5,483.2 L902.5,481.6 L902.5,479.9 L902.5,478.3 L902.5,476.7 L902.5,475.1 L902.5,473.4 L902.5,471.8 L902.5,470.2 L902.5,468.5 L902.5,466.9 L902.5,465.3 L902.5,463.7 L902.5,462.0 L902.5,460.4 L902.5,458.8 L902.5,457.2 L902.5,455.5 L902.5,453.9 L902.5,452.3 L902.5,450.6 L902.5,449.0 L902.5,447.4 L902.5,445.8 L902.5,444.1 L902.5,442.5 L902.5,440.9 L902.5,439.2 L902.5,437.6 L902.5,436.0 L902.5,434.4 L902.5,432.7 L902.5,431.1 L902.5,429.5 L902.5,427.8 L902.5,426.2 L902.5,424.6 L902.5,423.0 L902.5,421.3 L902.5,419.7 L902.5,418.1 L902.5,416.5 L902.5,414.8 L902.5,413.2 L902.5,411.6 L902.5,409.9 L902.5,408.3 L902.5,406.7 L902.5,405.1 L902.5,403.4 L902.5,401.8 L902.5,400.2 L902.5,398.5 L902.5,396.9 L902.5,395.3 L902.5,393.7 L902.5,392.0 L902.5,390.4 L902.5,388.8 L902.5,387.1 L902.5,385.5 L902.5,383.9 L902.5,382.3 L902.5,380.6 L902.5,379.0 L902.5,377.4 L902.5,375.8 L902.5,374.1 L902.5,372.5 L902.5,370.9 L902.5,369.2 L902.5,367.6 L902.5,366.0 L902.5,364.4 L902.5,362.7 L902.5,361.1 L902.5,359.5 L902.5,357.8 L902.5,356.2 L902.5,354.6 L902.5,353.0 L902.5,351.3 L902.5,349.7 L902.5,348.1 L902.5,346.4 L902.5,344.8 L902.5,343.2 L902.5,341.6 L902.5,339.9 L902.5,338.3 L902.5,336.7 L902.5,335.1 L902.5,333.4 L902.5,331.8 L902.5,330.2 L902.5,328.5 L902.5,326.9 L902.5,325.3 L902.5,323.7 L902.5,322.0 L902.5,320.4 L902.5,318.8 L902.5,317.1 L902.5,315.5 L902.5,313.9 L902.5,312.3 L902.5,310.6 L902.5,309.0 L902.5,307.4 L902.5,305.7 L902.5,304.1 L902.5,302.5 L902.5,300.9 L902.5,299.2 L902.5,297.6 L902.5,296.0 L902.5,294.4 L902.5,292.7 L902.5,291.1 L902.5,289.5 L902.5,287.8 L902.5,286.2 L902.5,284.6 L902.5,283.0 L902.5,281.3 L902.5,279.7 L902.5,278.1 L902.5,276.4 L902.5,274.8 L902.5,273.2 L902.5,271.6 L902.5,269.9 L902.5,268.3 L902.5,266.7 L902.5,265.0 L902.5,263.4 L902.5,261.8 L902.5,260.2 L902.5,258.5 L902.5,256.9 L902.5,255.3 L902.5,253.7 L902.5,252.0 L902.5,250.4 L902.5,248.8 L902.5,247.1 L902.5,245.5 L902.5,243.9 L902.5,242.3 L902.5,240.6 L902.5,239.0 L902.5,237.4 L902.5,235.7 L902.5,234.1 L902.5,232.5 L902.5,230.9 L902.5,229.2 L902.5,227.6 L902.5,226.0 L902.5,224.3 L902.5,222.7 L902.5,221.1 L902.5,219.5 L902.5,217.8 L902.5,216.2 L902.5,214.6 L902.5,213.0 L902.5,211.3 L902.5,209.7 L902.5,208.1 L902.5,206.4 L902.5,204.8 L902.5,203.2 L902.5,201.6 L902.5,199.9 L902.5,198.3 L902.5,196.7 L902.5,195.0 L902.5,193.4 L902.5,191.8 L902.5,190.2 L902.5,188.5 L902.5,186.9 L902.5,185.3 L902.5,183.6 L902.5,182.0 L902.5,180.4 L902.5,178.8 L902.5,177.1 L902.5,175.5 L902.5,173.9 L902.5,172.3 L902.5,170.6 L902.5,169.0 L902.5,167.4 L902.5,165.7 L902.5,164.1 L902.5,162.5 L902.5,160.9 L902.5,159.2 L902.5,157.6 L902.5,156.0 L902.5,154.3 L902.5,152.7 L902.5,151.1 L902.5,149.5 L902.5,147.8 L902.5,146.2 L902.5,144.6 L902.5,142.9 L902.5,141.3 L902.5,139.7 L902.5,138.1 L902.5,136.4 L902.5,134.8 L902.5,133.2 L902.5,131.6 L902.5,129.9 L902.5,128.3 L902.5,126.7 L902.5,125.0 L902.5,123.4 L902.5,121.8 L902.5,120.2 L902.5,118.5 L902.5,116.9 L902.5,115.3 L902.5,113.6 L902.5,112.0 L902.5,110.4 L902.5,108.8 L902.5,107.1 L902.5,105.5 L902.5,103.9 L902.5,102.2 L902.5,100.6 L902.5,99.0 L902.5,97.4 L902.5,95.7 L902.5,94.1 L902.5,92.5 L902.5,90.9 L902.5,89.2 L902.5,87.6 L902.5,86.0 L902.5,84.3 L902.5,82.7 L902.5,81.1 L902.5,79.5 L902.5,77.8 L902.5,76.2 L902.5,74.6 L902.5,72.9 L902.5,71.3 L902.5,69.7 L902.5,68.1 L902.5,66.4 L902.5,64.8 L902.5,63.2 L902.5,61.5 L902.5,59.9 L902.5,58.3 L902.5,56.7 L902.5,55.0 L902.5,53.4 L902.5,51.8 L902.5,50.2 L902.5,48.5 L902.5,46.9 L902.5,45.3 L902.5,43.6 L902.5,42.0 L902.5,40.4 L902.5,38.8 L902.5,37.1 L902.5,35.5 L902.5,33.9 L902.5,32.2 L902.5,30.6 L902.5,29.0 L902.5,27.4" stroke="#6a6a6a" stroke-width="2.4" stroke-linecap="round" stroke-dasharray="0 5.5" fill="none"/>
<path d="M902.5,613.4 L902.1,611.8 L901.6,610.2 L901.2,608.6 L900.8,606.9 L900.4,605.3 L899.9,603.7 L899.5,602.0 L899.1,600.4 L898.7,598.8 L898.2,597.2 L897.8,595.5 L897.4,593.9 L897.0,592.3 L896.5,590.6 L896.1,589.0 L895.7,587.4 L895.3,585.8 L894.9,584.1 L894.4,582.5 L894.0,580.9 L893.6,579.3 L893.2,577.6 L892.8,576.0 L892.3,574.4 L891.9,572.7 L891.5,571.1 L891.1,569.5 L890.7,567.9 L890.3,566.2 L889.9,564.6 L889.4,563.0 L889.0,561.3 L888.6,559.7 L888.2,558.1 L887.8,556.5 L887.4,554.8 L887.0,553.2 L886.6,551.6 L886.2,549.9 L885.8,548.3 L885.4,546.7 L885.0,545.1 L884.6,543.4 L884.2,541.8 L883.8,540.2 L883.4,538.6 L883.0,536.9 L882.6,535.3 L882.2,533.7 L881.9,532.0 L881.5,530.4 L881.1,528.8 L880.7,527.2 L880.3,525.5 L879.9,523.9 L879.6,522.3 L879.2,520.6 L878.8,519.0 L878.5,517.4 L878.1,515.8 L877.7,514.1 L877.3,512.5 L877.0,510.9 L876.6,509.2 L876.3,507.6 L875.9,506.0 L875.5,504.4 L875.2,502.7 L874.8,501.1 L874.5,499.5 L874.1,497.9 L873.8,496.2 L873.4,494.6 L873.1,493.0 L872.8,491.3 L872.4,489.7 L872.1,488.1 L871.8,486.5 L871.4,484.8 L871.1,483.2 L870.8,481.6 L870.5,479.9 L870.1,478.3 L869.8,476.7 L869.5,475.1 L869.2,473.4 L868.9,471.8 L868.6,470.2 L868.3,468.5 L868.0,466.9 L867.7,465.3 L867.4,463.7 L867.1,462.0 L866.8,460.4 L866.5,458.8 L866.2,457.2 L865.9,455.5 L865.6,453.9 L865.4,452.3 L865.1,450.6 L864.8,449.0 L864.5,447.4 L864.3,445.8 L864.0,444.1 L863.8,442.5 L863.5,440.9 L863.2,439.2 L863.0,437.6 L862.7,436.0 L862.5,434.4 L862.2,432.7 L862.0,431.1 L861.8,429.5 L861.5,427.8 L861.3,426.2 L861.1,424.6 L860.9,423.0 L860.6,421.3 L860.4,419.7 L860.2,418.1 L860.0,416.5 L859.8,414.8 L859.6,413.2 L859.4,411.6 L859.2,409.9 L859.0,408.3 L858.8,406.7 L858.6,405.1 L858.4,403.4 L858.2,401.8 L858.1,400.2 L857.9,398.5 L857.7,396.9 L857.5,395.3 L857.4,393.7 L857.2,392.0 L857.1,390.4 L856.9,388.8 L856.8,387.1 L856.6,385.5 L856.5,383.9 L856.3,382.3 L856.2,380.6 L856.1,379.0 L855.9,377.4 L855.8,375.8 L855.7,374.1 L855.6,372.5 L855.4,370.9 L855.3,369.2 L855.2,367.6 L855.1,366.0 L855.0,364.4 L854.9,362.7 L854.8,361.1 L854.7,359.5 L854.6,357.8 L854.6,356.2 L854.5,354.6 L854.4,353.0 L854.3,351.3 L854.3,349.7 L854.2,348.1 L854.1,346.4 L854.1,344.8 L854.0,343.2 L854.0,341.6 L853.9,339.9 L853.9,338.3 L853.8,336.7 L853.8,335.1 L853.8,333.4 L853.8,331.8 L853.7,330.2 L853.7,328.5 L853.7,326.9 L853.7,325.3 L853.7,323.7 L853.7,322.0 L853.7,320.4 L853.7,318.8 L853.7,317.1 L853.7,315.5 L853.7,313.9 L853.7,312.3 L853.7,310.6 L853.8,309.0 L853.8,307.4 L853.8,305.7 L853.8,304.1 L853.9,302.5 L853.9,300.9 L854.0,299.2 L854.0,297.6 L854.1,296.0 L854.1,294.4 L854.2,292.7 L854.3,291.1 L854.3,289.5 L854.4,287.8 L854.5,286.2 L854.6,284.6 L854.6,283.0 L854.7,281.3 L854.8,279.7 L854.9,278.1 L855.0,276.4 L855.1,274.8 L855.2,273.2 L855.3,271.6 L855.4,269.9 L855.6,268.3 L855.7,266.7 L855.8,265.0 L855.9,263.4 L856.1,261.8 L856.2,260.2 L856.3,258.5 L856.5,256.9 L856.6,255.3 L856.8,253.7 L856.9,252.0 L857.1,250.4 L857.2,248.8 L857.4,247.1 L857.5,245.5 L857.7,243.9 L857.9,242.3 L858.1,240.6 L858.2,239.0 L858.4,237.4 L858.6,235.7 L858.8,234.1 L859.0,232.5 L859.2,230.9 L859.4,229.2 L859.6,227.6 L859.8,226.0 L860.0,224.3 L860.2,222.7 L860.4,221.1 L860.6,219.5 L860.9,217.8 L861.1,216.2 L861.3,214.6 L861.5,213.0 L861.8,211.3 L862.0,209.7 L862.2,208.1 L862.5,206.4 L862.7,204.8 L863.0,203.2 L863.2,201.6 L863.5,199.9 L863.8,198.3 L864.0,196.7 L864.3,195.0 L864.5,193.4 L864.8,191.8 L865.1,190.2 L865.4,188.5 L865.6,186.9 L865.9,185.3 L866.2,183.6 L866.5,182.0 L866.8,180.4 L867.1,178.8 L867.4,177.1 L867.7,175.5 L868.0,173.9 L868.3,172.3 L868.6,170.6 L868.9,169.0 L869.2,167.4 L869.5,165.7 L869.8,164.1 L870.1,162.5 L870.5,160.9 L870.8,159.2 L871.1,157.6 L871.4,156.0 L871.8,154.3 L872.1,152.7 L872.4,151.1 L872.8,149.5 L873.1,147.8 L873.4,146.2 L873.8,144.6 L874.1,142.9 L874.5,141.3 L874.8,139.7 L875.2,138.1 L875.5,136.4 L875.9,134.8 L876.3,133.2 L876.6,131.6 L877.0,129.9 L877.3,128.3 L877.7,126.7 L878.1,125.0 L878.5,123.4 L878.8,121.8 L879.2,120.2 L879.6,118.5 L879.9,116.9 L880.3,115.3 L880.7,113.6 L881.1,112.0 L881.5,110.4 L881.9,108.8 L882.2,107.1 L882.6,105.5 L883.0,103.9 L883.4,102.2 L883.8,100.6 L884.2,99.0 L884.6,97.4 L885.0,95.7 L885.4,94.1 L885.8,92.5 L886.2,90.9 L886.6,89.2 L887.0,87.6 L887.4,86.0 L887.8,84.3 L888.2,82.7 L888.6,81.1 L889.0,79.5 L889.4,77.8 L889.9,76.2 L890.3,74.6 L890.7,72.9 L891.1,71.3 L891.5,69.7 L891.9,68.1 L892.3,66.4 L892.8,64.8 L893.2,63.2 L893.6,61.5 L894.0,59.9 L894.4,58.3 L894.9,56.7 L895.3,55.0 L895.7,53.4 L896.1,51.8 L896.5,50.2 L897.0,48.5 L897.4,46.9 L897.8,45.3 L898.2,43.6 L898.7,42.0 L899.1,40.4 L899.5,38.8 L899.9,37.1 L900.4,35.5 L900.8,33.9 L901.2,32.2 L901.6,30.6 L902.1,29.0 L902.5,27.4" stroke="#6a6a6a" stroke-width="2.4" stroke-linecap="round" stroke-dasharray="0 5.5" fill="none"/>
<path d="M902.5,613.4 L901.6,611.8 L900.8,610.2 L899.9,608.6 L899.1,606.9 L898.2,605.3 L897.4,603.7 L896.5,602.0 L895.7,600.4 L894.8,598.8 L894.0,597.2 L893.1,595.5 L892.3,593.9 L891.4,592.3 L890.6,590.6 L889.8,589.0 L888.9,587.4 L888.1,585.8 L887.2,584.1 L886.4,582.5 L885.5,580.9 L884.7,579.3 L883.9,577.6 L883.0,576.0 L882.2,574.4 L881.4,572.7 L880.5,571.1 L879.7,569.5 L878.9,567.9 L878.0,566.2 L877.2,564.6 L876.4,563.0 L875.6,561.3 L874.8,559.7 L873.9,558.1 L873.1,556.5 L872.3,554.8 L871.5,553.2 L870.7,551.6 L869.9,549.9 L869.1,548.3 L868.3,546.7 L867.5,545.1 L866.7,543.4 L865.9,541.8 L865.1,540.2 L864.3,538.6 L863.6,536.9 L862.8,535.3 L862.0,533.7 L861.2,532.0 L860.4,530.4 L859.7,528.8 L858.9,527.2 L858.2,525.5 L857.4,523.9 L856.6,522.3 L855.9,520.6 L855.1,519.0 L854.4,517.4 L853.7,515.8 L852.9,514.1 L852.2,512.5 L851.5,510.9 L850.7,509.2 L850.0,507.6 L849.3,506.0 L848.6,504.4 L847.9,502.7 L847.2,501.1 L846.5,499.5 L845.8,497.9 L845.1,496.2 L844.4,494.6 L843.7,493.0 L843.0,491.3 L842.4,489.7 L841.7,488.1 L841.0,486.5 L840.4,484.8 L839.7,483.2 L839.1,481.6 L838.4,479.9 L837.8,478.3 L837.1,476.7 L836.5,475.1 L835.9,473.4 L835.3,471.8 L834.6,470.2 L834.0,468.5 L833.4,466.9 L832.8,465.3 L832.2,463.7 L831.6,462.0 L831.1,460.4 L830.5,458.8 L829.9,457.2 L829.3,455.5 L828.8,453.9 L828.2,452.3 L827.7,450.6 L827.1,449.0 L826.6,447.4 L826.1,445.8 L825.5,444.1 L825.0,442.5 L824.5,440.9 L824.0,439.2 L823.5,437.6 L823.0,436.0 L822.5,434.4 L822.0,432.7 L821.5,431.1 L821.0,429.5 L820.6,427.8 L820.1,426.2 L819.7,424.6 L819.2,423.0 L818.8,421.3 L818.3,419.7 L817.9,418.1 L817.5,416.5 L817.1,414.8 L816.7,413.2 L816.3,411.6 L815.9,409.9 L815.5,408.3 L815.1,406.7 L814.7,405.1 L814.3,403.4 L814.0,401.8 L813.6,400.2 L813.3,398.5 L812.9,396.9 L812.6,395.3 L812.3,393.7 L811.9,392.0 L811.6,390.4 L811.3,388.8 L811.0,387.1 L810.7,385.5 L810.4,383.9 L810.1,382.3 L809.9,380.6 L809.6,379.0 L809.3,377.4 L809.1,375.8 L808.8,374.1 L808.6,372.5 L808.4,370.9 L808.1,369.2 L807.9,367.6 L807.7,366.0 L807.5,364.4 L807.3,362.7 L807.1,361.1 L807.0,359.5 L806.8,357.8 L806.6,356.2 L806.5,354.6 L806.3,353.0 L806.2,351.3 L806.0,349.7 L805.9,348.1 L805.8,346.4 L805.7,344.8 L805.5,343.2 L805.4,341.6 L805.4,339.9 L805.3,338.3 L805.2,336.7 L805.1,335.1 L805.1,333.4 L805.0,331.8 L805.0,330.2 L804.9,328.5 L804.9,326.9 L804.9,325.3 L804.8,323.7 L804.8,322.0 L804.8,320.4 L804.8,318.8 L804.8,317.1 L804.9,315.5 L804.9,313.9 L804.9,312.3 L805.0,310.6 L805.0,309.0 L805.1,307.4 L805.1,305.7 L805.2,304.1 L805.3,302.5 L805.4,300.9 L805.4,299.2 L805.5,297.6 L805.7,296.0 L805.8,294.4 L805.9,292.7 L806.0,291.1 L806.2,289.5 L806.3,287.8 L806.5,286.2 L806.6,284.6 L806.8,283.0 L807.0,281.3 L807.1,279.7 L807.3,278.1 L807.5,276.4 L807.7,274.8 L807.9,273.2 L808.1,271.6 L808.4,269.9 L808.6,268.3 L808.8,266.7 L809.1,265.0 L809.3,263.4 L809.6,261.8 L809.9,260.2 L810.1,258.5 L810.4,256.9 L810.7,255.3 L811.0,253.7 L811.3,252.0 L811.6,250.4 L811.9,248.8 L812.3,247.1 L812.6,245.5 L812.9,243.9 L813.3,242.3 L813.6,240.6 L814.0,239.0 L814.3,237.4 L814.7,235.7 L815.1,234.1 L815.5,232.5 L815.9,230.9 L816.3,229.2 L816.7,227.6 L817.1,226.0 L817.5,224.3 L817.9,222.7 L818.3,221.1 L818.8,219.5 L819.2,217.8 L819.7,216.2 L820.1,214.6 L820.6,213.0 L821.0,211.3 L821.5,209.7 L822.0,208.1 L822.5,206.4 L823.0,204.8 L823.5,203.2 L824.0,201.6 L824.5,199.9 L825.0,198.3 L825.5,196.7 L826.1,195.0 L826.6,193.4 L827.1,191.8 L827.7,190.2 L828.2,188.5 L828.8,186.9 L829.3,185.3 L829.9,183.6 L830.5,182.0 L831.1,180.4 L831.6,178.8 L832.2,177.1 L832.8,175.5 L833.4,173.9 L834.0,172.3 L834.6,170.6 L835.3,169.0 L835.9,167.4 L836.5,165.7 L837.1,164.1 L837.8,162.5 L838.4,160.9 L839.1,159.2 L839.7,157.6 L840.4,156.0 L841.0,154.3 L841.7,152.7 L842.4,151.1 L843.0,149.5 L843.7,147.8 L844.4,146.2 L845.1,144.6 L845.8,142.9 L846.5,141.3 L847.2,139.7 L847.9,138.1 L848.6,136.4 L849.3,134.8 L850.0,133.2 L850.7,131.6 L851.5,129.9 L852.2,128.3 L852.9,126.7 L853.7,125.0 L854.4,123.4 L855.1,121.8 L855.9,120.2 L856.6,118.5 L857.4,116.9 L858.2,115.3 L858.9,113.6 L859.7,112.0 L860.4,110.4 L861.2,108.8 L862.0,107.1 L862.8,105.5 L863.6,103.9 L864.3,102.2 L865.1,100.6 L865.9,99.0 L866.7,97.4 L867.5,95.7 L868.3,94.1 L869.1,92.5 L869.9,90.9 L870.7,89.2 L871.5,87.6 L872.3,86.0 L873.1,84.3 L873.9,82.7 L874.8,81.1 L875.6,79.5 L876.4,77.8 L877.2,76.2 L878.0,74.6 L878.9,72.9 L879.7,71.3 L880.5,69.7 L881.4,68.1 L882.2,66.4 L883.0,64.8 L883.9,63.2 L884.7,61.5 L885.5,59.9 L886.4,58.3 L887.2,56.7 L888.1,55.0 L888.9,53.4 L889.8,51.8 L890.6,50.2 L891.4,48.5 L892.3,46.9 L893.1,45.3 L894.0,43.6 L894.8,42.0 L895.7,40.4 L896.5,38.8 L897.4,37.1 L898.2,35.5 L899.1,33.9 L899.9,32.2 L900.8,30.6 L901.6,29.0 L902.5,27.4" stroke="#6a6a6a" stroke-width="2.4" stroke-linecap="round" stroke-dasharray="0 5.5" fill="none"/>
<path d="M902.5,613.4 L901.2,611.8 L899.9,610.2 L898.7,608.6 L897.4,606.9 L896.1,605.3 L894.8,603.7 L893.6,602.0 L892.3,600.4 L891.0,598.8 L889.7,597.2 L888.5,595.5 L887.2,593.9 L885.9,592.3 L884.6,590.6 L883.4,589.0 L882.1,587.4 L880.8,585.8 L879.6,584.1 L878.3,582.5 L877.1,580.9 L875.8,579.3 L874.5,577.6 L873.3,576.0 L872.0,574.4 L870.8,572.7 L869.5,571.1 L868.3,569.5 L867.1,567.9 L865.8,566.2 L864.6,564.6 L863.3,563.0 L862.1,561.3 L860.9,559.7 L859.7,558.1 L858.4,556.5 L857.2,554.8 L856.0,553.2 L854.8,551.6 L853.6,549.9 L852.4,548.3 L851.2,546.7 L850.0,545.1 L848.8,543.4 L847.6,541.8 L846.4,540.2 L845.3,538.6 L844.1,536.9 L842.9,535.3 L841.7,533.7 L840.6,532.0 L839.4,530.4 L838.3,528.8 L837.1,527.2 L836.0,525.5 L834.8,523.9 L833.7,522.3 L832.6,520.6 L831.5,519.0 L830.4,517.4 L829.2,515.8 L828.1,514.1 L827.0,512.5 L825.9,510.9 L824.9,509.2 L823.8,507.6 L822.7,506.0 L821.6,504.4 L820.6,502.7 L819.5,501.1 L818.5,499.5 L817.4,497.9 L816.4,496.2 L815.3,494.6 L814.3,493.0 L813.3,491.3 L812.3,489.7 L811.3,488.1 L810.3,486.5 L809.3,484.8 L808.3,483.2 L807.3,481.6 L806.4,479.9 L805.4,478.3 L804.5,476.7 L803.5,475.1 L802.6,473.4 L801.6,471.8 L800.7,470.2 L799.8,468.5 L798.9,466.9 L798.0,465.3 L797.1,463.7 L796.2,462.0 L795.3,460.4 L794.5,458.8 L793.6,457.2 L792.8,455.5 L791.9,453.9 L791.1,452.3 L790.3,450.6 L789.4,449.0 L788.6,447.4 L787.8,445.8 L787.0,444.1 L786.3,442.5 L785.5,440.9 L784.7,439.2 L784.0,437.6 L783.2,436.0 L782.5,434.4 L781.7,432.7 L781.0,431.1 L780.3,429.5 L779.6,427.8 L778.9,426.2 L778.2,424.6 L777.6,423.0 L776.9,421.3 L776.3,419.7 L775.6,418.1 L775.0,416.5 L774.4,414.8 L773.7,413.2 L773.1,411.6 L772.5,409.9 L771.9,408.3 L771.4,406.7 L770.8,405.1 L770.3,403.4 L769.7,401.8 L769.2,400.2 L768.6,398.5 L768.1,396.9 L767.6,395.3 L767.1,393.7 L766.6,392.0 L766.2,390.4 L765.7,388.8 L765.3,387.1 L764.8,385.5 L764.4,383.9 L764.0,382.3 L763.6,380.6 L763.2,379.0 L762.8,377.4 L762.4,375.8 L762.0,374.1 L761.7,372.5 L761.3,370.9 L761.0,369.2 L760.6,367.6 L760.3,366.0 L760.0,364.4 L759.7,362.7 L759.5,361.1 L759.2,359.5 L758.9,357.8 L758.7,356.2 L758.4,354.6 L758.2,353.0 L758.0,351.3 L757.8,349.7 L757.6,348.1 L757.4,346.4 L757.2,344.8 L757.1,343.2 L756.9,341.6 L756.8,339.9 L756.7,338.3 L756.5,336.7 L756.4,335.1 L756.3,333.4 L756.3,331.8 L756.2,330.2 L756.1,328.5 L756.1,326.9 L756.0,325.3 L756.0,323.7 L756.0,322.0 L756.0,320.4 L756.0,318.8 L756.0,317.1 L756.0,315.5 L756.1,313.9 L756.1,312.3 L756.2,310.6 L756.3,309.0 L756.3,307.4 L756.4,305.7 L756.5,304.1 L756.7,302.5 L756.8,300.9 L756.9,299.2 L757.1,297.6 L757.2,296.0 L757.4,294.4 L757.6,292.7 L757.8,291.1 L758.0,289.5 L758.2,287.8 L758.4,286.2 L758.7,284.6 L758.9,283.0 L759.2,281.3 L759.5,279.7 L759.7,278.1 L760.0,276.4 L760.3,274.8 L760.6,273.2 L761.0,271.6 L761.3,269.9 L761.7,268.3 L762.0,266.7 L762.4,265.0 L762.8,263.4 L763.2,261.8 L763.6,260.2 L764.0,258.5 L764.4,256.9 L764.8,255.3 L765.3,253.7 L765.7,252.0 L766.2,250.4 L766.6,248.8 L767.1,247.1 L767.6,245.5 L768.1,243.9 L768.6,242.3 L769.2,240.6 L769.7,239.0 L770.3,237.4 L770.8,235.7 L771.4,234.1 L771.9,232.5 L772.5,230.9 L773.1,229.2 L773.7,227.6 L774.4,226.0 L775.0,224.3 L775.6,222.7 L776.3,221.1 L776.9,219.5 L777.6,217.8 L778.2,216.2 L778.9,214.6 L779.6,213.0 L780.3,211.3 L781.0,209.7 L781.7,208.1 L782.5,206.4 L783.2,204.8 L784.0,203.2 L784.7,201.6 L785.5,199.9 L786.3,198.3 L787.0,196.7 L787.8,195.0 L788.6,193.4 L789.4,191.8 L790.3,190.2 L791.1,188.5 L791.9,186.9 L792.8,185.3 L793.6,183.6 L794.5,182.0 L795.3,180.4 L796.2,178.8 L797.1,177.1 L798.0,175.5 L798.9,173.9 L799.8,172.3 L800.7,170.6 L801.6,169.0 L802.6,167.4 L803.5,165.7 L804.5,164.1 L805.4,162.5 L806.4,160.9 L807.3,159.2 L808.3,157.6 L809.3,156.0 L810.3,154.3 L811.3,152.7 L812.3,151.1 L813.3,149.5 L814.3,147.8 L815.3,146.2 L816.4,144.6 L817.4,142.9 L818.5,141.3 L819.5,139.7 L820.6,138.1 L821.6,136.4 L822.7,134.8 L823.8,133.2 L824.9,131.6 L825.9,129.9 L827.0,128.3 L828.1,126.7 L829.2,125.0 L830.4,123.4 L831.5,121.8 L832.6,120.2 L833.7,118.5 L834.8,116.9 L836.0,115.3 L837.1,113.6 L838.3,112.0 L839.4,110.4 L840.6,108.8 L841.7,107.1 L842.9,105.5 L844.1,103.9 L845.3,102.2 L846.4,100.6 L847.6,99.0 L848.8,97.4 L850.0,95.7 L851.2,94.1 L852.4,92.5 L853.6,90.9 L854.8,89.2 L856.0,87.6 L857.2,86.0 L858.4,84.3 L859.7,82.7 L860.9,81.1 L862.1,79.5 L863.3,77.8 L864.6,76.2 L865.8,74.6 L867.1,72.9 L868.3,71.3 L869.5,69.7 L870.8,68.1 L872.0,66.4 L873.3,64.8 L874.5,63.2 L875.8,61.5 L877.1,59.9 L878.3,58.3 L879.6,56.7 L880.8,55.0 L882.1,53.4 L883.4,51.8 L884.6,50.2 L885.9,48.5 L887.2,46.9 L888.5,45.3 L889.7,43.6 L891.0,42.0 L892.3,40.4 L893.6,38.8 L894.8,37.1 L896.1,35.5 L897.4,33.9 L898.7,32.2 L899.9,30.6 L901.2,29.0 L902.5,27.4" stroke="#6a6a6a" stroke-width="2.4" stroke-linecap="round" stroke-dasharray="0 5.5" fill="none"/>
<path d="M902.5,613.4 L900.8,611.8 L899.1,610.2 L897.4,608.6 L895.7,606.9 L894.0,605.3 L892.3,603.7 L890.6,602.0 L888.9,600.4 L887.2,598.8 L885.5,597.2 L883.8,595.5 L882.1,593.9 L880.4,592.3 L878.7,590.6 L877.0,589.0 L875.3,587.4 L873.6,585.8 L871.9,584.1 L870.3,582.5 L868.6,580.9 L866.9,579.3 L865.2,577.6 L863.6,576.0 L861.9,574.4 L860.2,572.7 L858.6,571.1 L856.9,569.5 L855.2,567.9 L853.6,566.2 L851.9,564.6 L850.3,563.0 L848.7,561.3 L847.0,559.7 L845.4,558.1 L843.8,556.5 L842.1,554.8 L840.5,553.2 L838.9,551.6 L837.3,549.9 L835.7,548.3 L834.1,546.7 L832.5,545.1 L830.9,543.4 L829.3,541.8 L827.7,540.2 L826.2,538.6 L824.6,536.9 L823.0,535.3 L821.5,533.7 L819.9,532.0 L818.4,530.4 L816.9,528.8 L815.3,527.2 L813.8,525.5 L812.3,523.9 L810.8,522.3 L809.3,520.6 L807.8,519.0 L806.3,517.4 L804.8,515.8 L803.3,514.1 L801.9,512.5 L800.4,510.9 L799.0,509.2 L797.5,507.6 L796.1,506.0 L794.7,504.4 L793.3,502.7 L791.8,501.1 L790.4,499.5 L789.1,497.9 L787.7,496.2 L786.3,494.6 L784.9,493.0 L783.6,491.3 L782.2,489.7 L780.9,488.1 L779.6,486.5 L778.2,484.8 L776.9,483.2 L775.6,481.6 L774.3,479.9 L773.1,478.3 L771.8,476.7 L770.5,475.1 L769.3,473.4 L768.0,471.8 L766.8,470.2 L765.6,468.5 L764.4,466.9 L763.2,465.3 L762.0,463.7 L760.8,462.0 L759.6,460.4 L758.5,458.8 L757.3,457.2 L756.2,455.5 L755.1,453.9 L753.9,452.3 L752.8,450.6 L751.8,449.0 L750.7,447.4 L749.6,445.8 L748.6,444.1 L747.5,442.5 L746.5,440.9 L745.5,439.2 L744.5,437.6 L743.5,436.0 L742.5,434.4 L741.5,432.7 L740.5,431.1 L739.6,429.5 L738.7,427.8 L737.7,426.2 L736.8,424.6 L735.9,423.0 L735.0,421.3 L734.2,419.7 L733.3,418.1 L732.5,416.5 L731.6,414.8 L730.8,413.2 L730.0,411.6 L729.2,409.9 L728.4,408.3 L727.7,406.7 L726.9,405.1 L726.2,403.4 L725.4,401.8 L724.7,400.2 L724.0,398.5 L723.3,396.9 L722.7,395.3 L722.0,393.7 L721.4,392.0 L720.7,390.4 L720.1,388.8 L719.5,387.1 L718.9,385.5 L718.3,383.9 L717.8,382.3 L717.2,380.6 L716.7,379.0 L716.2,377.4 L715.7,375.8 L715.2,374.1 L714.7,372.5 L714.2,370.9 L713.8,369.2 L713.4,367.6 L712.9,366.0 L712.5,364.4 L712.1,362.7 L711.8,361.1 L711.4,359.5 L711.1,357.8 L710.7,356.2 L710.4,354.6 L710.1,353.0 L709.8,351.3 L709.5,349.7 L709.3,348.1 L709.0,346.4 L708.8,344.8 L708.6,343.2 L708.4,341.6 L708.2,339.9 L708.0,338.3 L707.9,336.7 L707.7,335.1 L707.6,333.4 L707.5,331.8 L707.4,330.2 L707.3,328.5 L707.3,326.9 L707.2,325.3 L707.2,323.7 L707.1,322.0 L707.1,320.4 L707.1,318.8 L707.2,317.1 L707.2,315.5 L707.3,313.9 L707.3,312.3 L707.4,310.6 L707.5,309.0 L707.6,307.4 L707.7,305.7 L707.9,304.1 L708.0,302.5 L708.2,300.9 L708.4,299.2 L708.6,297.6 L708.8,296.0 L709.0,294.4 L709.3,292.7 L709.5,291.1 L709.8,289.5 L710.1,287.8 L710.4,286.2 L710.7,284.6 L711.1,283.0 L711.4,281.3 L711.8,279.7 L712.1,278.1 L712.5,276.4 L712.9,274.8 L713.4,273.2 L713.8,271.6 L714.2,269.9 L714.7,268.3 L715.2,266.7 L715.7,265.0 L716.2,263.4 L716.7,261.8 L717.2,260.2 L717.8,258.5 L718.3,256.9 L718.9,255.3 L719.5,253.7 L720.1,252.0 L720.7,250.4 L721.4,248.8 L722.0,247.1 L722.7,245.5 L723.3,243.9 L724.0,242.3 L724.7,240.6 L725.4,239.0 L726.2,237.4 L726.9,235.7 L727.7,234.1 L728.4,232.5 L729.2,230.9 L730.0,229.2 L730.8,227.6 L731.6,226.0 L732.5,224.3 L733.3,222.7 L734.2,221.1 L735.0,219.5 L735.9,217.8 L736.8,216.2 L737.7,214.6 L738.7,213.0 L739.6,211.3 L740.5,209.7 L741.5,208.1 L742.5,206.4 L743.5,204.8 L744.5,203.2 L745.5,201.6 L746.5,199.9 L747.5,198.3 L748.6,196.7 L749.6,195.0 L750.7,193.4 L751.8,191.8 L752.8,190.2 L753.9,188.5 L755.1,186.9 L756.2,185.3 L757.3,183.6 L758.5,182.0 L759.6,180.4 L760.8,178.8 L762.0,177.1 L763.2,175.5 L764.4,173.9 L765.6,172.3 L766.8,170.6 L768.0,169.0 L769.3,167.4 L770.5,165.7 L771.8,164.1 L773.1,162.5 L774.3,160.9 L775.6,159.2 L776.9,157.6 L778.2,156.0 L779.6,154.3 L780.9,152.7 L782.2,151.1 L783.6,149.5 L784.9,147.8 L786.3,146.2 L787.7,144.6 L789.1,142.9 L790.4,141.3 L791.8,139.7 L793.3,138.1 L794.7,136.4 L796.1,134.8 L797.5,133.2 L799.0,131.6 L800.4,129.9 L801.9,128.3 L803.3,126.7 L804.8,125.0 L806.3,123.4 L807.8,121.8 L809.3,120.2 L810.8,118.5 L812.3,116.9 L813.8,115.3 L815.3,113.6 L816.9,112.0 L818.4,110.4 L819.9,108.8 L821.5,107.1 L823.0,105.5 L824.6,103.9 L826.2,102.2 L827.7,100.6 L829.3,99.0 L830.9,97.4 L832.5,95.7 L834.1,94.1 L835.7,92.5 L837.3,90.9 L838.9,89.2 L840.5,87.6 L842.1,86.0 L843.8,84.3 L845.4,82.7 L847.0,81.1 L848.7,79.5 L850.3,77.8 L851.9,76.2 L853.6,74.6 L855.2,72.9 L856.9,71.3 L858.6,69.7 L860.2,68.1 L861.9,66.4 L863.6,64.8 L865.2,63.2 L866.9,61.5 L868.6,59.9 L870.3,58.3 L871.9,56.7 L873.6,55.0 L875.3,53.4 L877.0,51.8 L878.7,50.2 L880.4,48.5 L882.1,46.9 L883.8,45.3 L885.5,43.6 L887.2,42.0 L888.9,40.4 L890.6,38.8 L892.3,37.1 L894.0,35.5 L895.7,33.9 L897.4,32.2 L899.1,30.6 L900.8,29.0 L902.5,27.4" stroke="#6a6a6a" stroke-width="2.4" stroke-linecap="round" stroke-dasharray="0 5.5" fill="none"/>
<path d="M902.5,613.4 L900.4,611.8 L898.2,610.2 L896.1,608.6 L894.0,606.9 L891.8,605.3 L889.7,603.7 L887.6,602.0 L885.5,600.4 L883.3,598.8 L881.2,597.2 L879.1,595.5 L877.0,593.9 L874.9,592.3 L872.7,590.6 L870.6,589.0 L868.5,587.4 L866.4,585.8 L864.3,584.1 L862.2,582.5 L860.1,580.9 L858.0,579.3 L855.9,577.6 L853.8,576.0 L851.7,574.4 L849.6,572.7 L847.6,571.1 L845.5,569.5 L843.4,567.9 L841.4,566.2 L839.3,564.6 L837.2,563.0 L835.2,561.3 L833.1,559.7 L831.1,558.1 L829.1,556.5 L827.0,554.8 L825.0,553.2 L823.0,551.6 L821.0,549.9 L819.0,548.3 L817.0,546.7 L815.0,545.1 L813.0,543.4 L811.0,541.8 L809.0,540.2 L807.1,538.6 L805.1,536.9 L803.2,535.3 L801.2,533.7 L799.3,532.0 L797.4,530.4 L795.4,528.8 L793.5,527.2 L791.6,525.5 L789.7,523.9 L787.9,522.3 L786.0,520.6 L784.1,519.0 L782.3,517.4 L780.4,515.8 L778.6,514.1 L776.7,512.5 L774.9,510.9 L773.1,509.2 L771.3,507.6 L769.5,506.0 L767.7,504.4 L765.9,502.7 L764.2,501.1 L762.4,499.5 L760.7,497.9 L759.0,496.2 L757.2,494.6 L755.5,493.0 L753.8,491.3 L752.2,489.7 L750.5,488.1 L748.8,486.5 L747.2,484.8 L745.5,483.2 L743.9,481.6 L742.3,479.9 L740.7,478.3 L739.1,476.7 L737.5,475.1 L736.0,473.4 L734.4,471.8 L732.9,470.2 L731.3,468.5 L729.8,466.9 L728.3,465.3 L726.8,463.7 L725.4,462.0 L723.9,460.4 L722.5,458.8 L721.0,457.2 L719.6,455.5 L718.2,453.9 L716.8,452.3 L715.4,450.6 L714.1,449.0 L712.7,447.4 L711.4,445.8 L710.1,444.1 L708.8,442.5 L707.5,440.9 L706.2,439.2 L704.9,437.6 L703.7,436.0 L702.5,434.4 L701.2,432.7 L700.0,431.1 L698.9,429.5 L697.7,427.8 L696.5,426.2 L695.4,424.6 L694.3,423.0 L693.2,421.3 L692.1,419.7 L691.0,418.1 L690.0,416.5 L688.9,414.8 L687.9,413.2 L686.9,411.6 L685.9,409.9 L684.9,408.3 L684.0,406.7 L683.0,405.1 L682.1,403.4 L681.2,401.8 L680.3,400.2 L679.4,398.5 L678.6,396.9 L677.7,395.3 L676.9,393.7 L676.1,392.0 L675.3,390.4 L674.5,388.8 L673.8,387.1 L673.0,385.5 L672.3,383.9 L671.6,382.3 L670.9,380.6 L670.3,379.0 L669.6,377.4 L669.0,375.8 L668.4,374.1 L667.8,372.5 L667.2,370.9 L666.6,369.2 L666.1,367.6 L665.6,366.0 L665.0,364.4 L664.6,362.7 L664.1,361.1 L663.6,359.5 L663.2,357.8 L662.8,356.2 L662.4,354.6 L662.0,353.0 L661.6,351.3 L661.3,349.7 L661.0,348.1 L660.7,346.4 L660.4,344.8 L660.1,343.2 L659.9,341.6 L659.6,339.9 L659.4,338.3 L659.2,336.7 L659.1,335.1 L658.9,333.4 L658.8,331.8 L658.6,330.2 L658.5,328.5 L658.4,326.9 L658.4,325.3 L658.3,323.7 L658.3,322.0 L658.3,320.4 L658.3,318.8 L658.3,317.1 L658.4,315.5 L658.4,313.9 L658.5,312.3 L658.6,310.6 L658.8,309.0 L658.9,307.4 L659.1,305.7 L659.2,304.1 L659.4,302.5 L659.6,300.9 L659.9,299.2 L660.1,297.6 L660.4,296.0 L660.7,294.4 L661.0,292.7 L661.3,291.1 L661.6,289.5 L662.0,287.8 L662.4,286.2 L662.8,284.6 L663.2,283.0 L663.6,281.3 L664.1,279.7 L664.6,278.1 L665.0,276.4 L665.6,274.8 L666.1,273.2 L666.6,271.6 L667.2,269.9 L667.8,268.3 L668.4,266.7 L669.0,265.0 L669.6,263.4 L670.3,261.8 L670.9,260.2 L671.6,258.5 L672.3,256.9 L673.0,255.3 L673.8,253.7 L674.5,252.0 L675.3,250.4 L676.1,248.8 L676.9,247.1 L677.7,245.5 L678.6,243.9 L679.4,242.3 L680.3,240.6 L681.2,239.0 L682.1,237.4 L683.0,235.7 L684.0,234.1 L684.9,232.5 L685.9,230.9 L686.9,229.2 L687.9,227.6 L688.9,226.0 L690.0,224.3 L691.0,222.7 L692.1,221.1 L693.2,219.5 L694.3,217.8 L695.4,216.2 L696.5,214.6 L697.7,213.0 L698.9,211.3 L700.0,209.7 L701.2,208.1 L702.5,206.4 L703.7,204.8 L704.9,203.2 L706.2,201.6 L707.5,199.9 L708.8,198.3 L710.1,196.7 L711.4,195.0 L712.7,193.4 L714.1,191.8 L715.4,190.2 L716.8,188.5 L718.2,186.9 L719.6,185.3 L721.0,183.6 L722.5,182.0 L723.9,180.4 L725.4,178.8 L726.8,177.1 L728.3,175.5 L729.8,173.9 L731.3,172.3 L732.9,170.6 L734.4,169.0 L736.0,167.4 L737.5,165.7 L739.1,164.1 L740.7,162.5 L742.3,160.9 L743.9,159.2 L745.5,157.6 L747.2,156.0 L748.8,154.3 L750.5,152.7 L752.2,151.1 L753.8,149.5 L755.5,147.8 L757.2,146.2 L759.0,144.6 L760.7,142.9 L762.4,141.3 L764.2,139.7 L765.9,138.1 L767.7,136.4 L769.5,134.8 L771.3,133.2 L773.1,131.6 L774.9,129.9 L776.7,128.3 L778.6,126.7 L780.4,125.0 L782.3,123.4 L784.1,121.8 L786.0,120.2 L787.9,118.5 L789.7,116.9 L791.6,115.3 L793.5,113.6 L795.4,112.0 L797.4,110.4 L799.3,108.8 L801.2,107.1 L803.2,105.5 L805.1,103.9 L807.1,102.2 L809.0,100.6 L811.0,99.0 L813.0,97.4 L815.0,95.7 L817.0,94.1 L819.0,92.5 L821.0,90.9 L823.0,89.2 L825.0,87.6 L827.0,86.0 L829.1,84.3 L831.1,82.7 L833.1,81.1 L835.2,79.5 L837.2,77.8 L839.3,76.2 L841.4,74.6 L843.4,72.9 L845.5,71.3 L847.6,69.7 L849.6,68.1 L851.7,66.4 L853.8,64.8 L855.9,63.2 L858.0,61.5 L860.1,59.9 L862.2,58.3 L864.3,56.7 L866.4,55.0 L868.5,53.4 L870.6,51.8 L872.7,50.2 L874.9,48.5 L877.0,46.9 L879.1,45.3 L881.2,43.6 L883.3,42.0 L885.5,40.4 L887.6,38.8 L889.7,37.1 L891.8,35.5 L894.0,33.9 L896.1,32.2 L898.2,30.6 L900.4,29.0 L902.5,27.4" stroke="#6a6a6a" stroke-width="2.4" stroke-linecap="round" stroke-dasharray="0 5.5" fill="none"/>
<path d="M902.5,613.4 L899.9,611.8 L897.4,610.2 L894.8,608.6 L892.3,606.9 L889.7,605.3 L887.2,603.7 L884.6,602.0 L882.1,600.4 L879.5,598.8 L877.0,597.2 L874.4,595.5 L871.9,593.9 L869.3,592.3 L866.8,590.6 L864.3,589.0 L861.7,587.4 L859.2,585.8 L856.7,584.1 L854.1,582.5 L851.6,580.9 L849.1,579.3 L846.6,577.6 L844.1,576.0 L841.6,574.4 L839.1,572.7 L836.6,571.1 L834.1,569.5 L831.6,567.9 L829.1,566.2 L826.7,564.6 L824.2,563.0 L821.7,561.3 L819.3,559.7 L816.8,558.1 L814.4,556.5 L811.9,554.8 L809.5,553.2 L807.1,551.6 L804.7,549.9 L802.3,548.3 L799.9,546.7 L797.5,545.1 L795.1,543.4 L792.7,541.8 L790.4,540.2 L788.0,538.6 L785.7,536.9 L783.3,535.3 L781.0,533.7 L778.7,532.0 L776.3,530.4 L774.0,528.8 L771.7,527.2 L769.5,525.5 L767.2,523.9 L764.9,522.3 L762.7,520.6 L760.4,519.0 L758.2,517.4 L756.0,515.8 L753.8,514.1 L751.6,512.5 L749.4,510.9 L747.2,509.2 L745.0,507.6 L742.9,506.0 L740.8,504.4 L738.6,502.7 L736.5,501.1 L734.4,499.5 L732.3,497.9 L730.3,496.2 L728.2,494.6 L726.1,493.0 L724.1,491.3 L722.1,489.7 L720.1,488.1 L718.1,486.5 L716.1,484.8 L714.1,483.2 L712.2,481.6 L710.2,479.9 L708.3,478.3 L706.4,476.7 L704.5,475.1 L702.6,473.4 L700.8,471.8 L698.9,470.2 L697.1,468.5 L695.3,466.9 L693.5,465.3 L691.7,463.7 L689.9,462.0 L688.2,460.4 L686.4,458.8 L684.7,457.2 L683.0,455.5 L681.3,453.9 L679.7,452.3 L678.0,450.6 L676.4,449.0 L674.8,447.4 L673.2,445.8 L671.6,444.1 L670.0,442.5 L668.5,440.9 L666.9,439.2 L665.4,437.6 L663.9,436.0 L662.5,434.4 L661.0,432.7 L659.6,431.1 L658.1,429.5 L656.7,427.8 L655.4,426.2 L654.0,424.6 L652.6,423.0 L651.3,421.3 L650.0,419.7 L648.7,418.1 L647.5,416.5 L646.2,414.8 L645.0,413.2 L643.8,411.6 L642.6,409.9 L641.4,408.3 L640.2,406.7 L639.1,405.1 L638.0,403.4 L636.9,401.8 L635.8,400.2 L634.8,398.5 L633.8,396.9 L632.8,395.3 L631.8,393.7 L630.8,392.0 L629.9,390.4 L628.9,388.8 L628.0,387.1 L627.1,385.5 L626.3,383.9 L625.4,382.3 L624.6,380.6 L623.8,379.0 L623.0,377.4 L622.3,375.8 L621.5,374.1 L620.8,372.5 L620.1,370.9 L619.4,369.2 L618.8,367.6 L618.2,366.0 L617.6,364.4 L617.0,362.7 L616.4,361.1 L615.9,359.5 L615.3,357.8 L614.8,356.2 L614.4,354.6 L613.9,353.0 L613.5,351.3 L613.1,349.7 L612.7,348.1 L612.3,346.4 L612.0,344.8 L611.6,343.2 L611.3,341.6 L611.1,339.9 L610.8,338.3 L610.6,336.7 L610.4,335.1 L610.2,333.4 L610.0,331.8 L609.9,330.2 L609.7,328.5 L609.6,326.9 L609.6,325.3 L609.5,323.7 L609.5,322.0 L609.5,320.4 L609.5,318.8 L609.5,317.1 L609.6,315.5 L609.6,313.9 L609.7,312.3 L609.9,310.6 L610.0,309.0 L610.2,307.4 L610.4,305.7 L610.6,304.1 L610.8,302.5 L611.1,300.9 L611.3,299.2 L611.6,297.6 L612.0,296.0 L612.3,294.4 L612.7,292.7 L613.1,291.1 L613.5,289.5 L613.9,287.8 L614.4,286.2 L614.8,284.6 L615.3,283.0 L615.9,281.3 L616.4,279.7 L617.0,278.1 L617.6,276.4 L618.2,274.8 L618.8,273.2 L619.4,271.6 L620.1,269.9 L620.8,268.3 L621.5,266.7 L622.3,265.0 L623.0,263.4 L623.8,261.8 L624.6,260.2 L625.4,258.5 L626.3,256.9 L627.1,255.3 L628.0,253.7 L628.9,252.0 L629.9,250.4 L630.8,248.8 L631.8,247.1 L632.8,245.5 L633.8,243.9 L634.8,242.3 L635.8,240.6 L636.9,239.0 L638.0,237.4 L639.1,235.7 L640.2,234.1 L641.4,232.5 L642.6,230.9 L643.8,229.2 L645.0,227.6 L646.2,226.0 L647.5,224.3 L648.7,222.7 L650.0,221.1 L651.3,219.5 L652.6,217.8 L654.0,216.2 L655.4,214.6 L656.7,213.0 L658.1,211.3 L659.6,209.7 L661.0,208.1 L662.5,206.4 L663.9,204.8 L665.4,203.2 L666.9,201.6 L668.5,199.9 L670.0,198.3 L671.6,196.7 L673.2,195.0 L674.8,193.4 L676.4,191.8 L678.0,190.2 L679.7,188.5 L681.3,186.9 L683.0,185.3 L684.7,183.6 L686.4,182.0 L688.2,180.4 L689.9,178.8 L691.7,177.1 L693.5,175.5 L695.3,173.9 L697.1,172.3 L698.9,170.6 L700.8,169.0 L702.6,167.4 L704.5,165.7 L706.4,164.1 L708.3,162.5 L710.2,160.9 L712.2,159.2 L714.1,157.6 L716.1,156.0 L718.1,154.3 L720.1,152.7 L722.1,151.1 L724.1,149.5 L726.1,147.8 L728.2,146.2 L730.3,144.6 L732.3,142.9 L734.4,141.3 L736.5,139.7 L738.6,138.1 L740.8,136.4 L742.9,134.8 L745.0,133.2 L747.2,131.6 L749.4,129.9 L751.6,128.3 L753.8,126.7 L756.0,125.0 L758.2,123.4 L760.4,121.8 L762.7,120.2 L764.9,118.5 L767.2,116.9 L769.5,115.3 L771.7,113.6 L774.0,112.0 L776.3,110.4 L778.7,108.8 L781.0,107.1 L783.3,105.5 L785.7,103.9 L788.0,102.2 L790.4,100.6 L792.7,99.0 L795.1,97.4 L797.5,95.7 L799.9,94.1 L802.3,92.5 L804.7,90.9 L807.1,89.2 L809.5,87.6 L811.9,86.0 L814.4,84.3 L816.8,82.7 L819.3,81.1 L821.7,79.5 L824.2,77.8 L826.7,76.2 L829.1,74.6 L831.6,72.9 L834.1,71.3 L836.6,69.7 L839.1,68.1 L841.6,66.4 L844.1,64.8 L846.6,63.2 L849.1,61.5 L851.6,59.9 L854.1,58.3 L856.7,56.7 L859.2,55.0 L861.7,53.4 L864.3,51.8 L866.8,50.2 L869.3,48.5 L871.9,46.9 L874.4,45.3 L877.0,43.6 L879.5,42.0 L882.1,40.4 L884.6,38.8 L887.2,37.1 L889.7,35.5 L892.3,33.9 L894.8,32.2 L897.4,30.6 L899.9,29.0 L902.5,27.4" stroke="#6a6a6a" stroke-width="2.4" stroke-linecap="round" stroke-dasharray="0 5.5" fill="none"/>
<path d="M902.5,613.4 L899.5,611.8 L896.5,610.2 L893.6,608.6 L890.6,606.9 L887.6,605.3 L884.6,603.7 L881.6,602.0 L878.7,600.4 L875.7,598.8 L872.7,597.2 L869.7,595.5 L866.8,593.9 L863.8,592.3 L860.8,590.6 L857.9,589.0 L854.9,587.4 L852.0,585.8 L849.0,584.1 L846.1,582.5 L843.1,580.9 L840.2,579.3 L837.3,577.6 L834.3,576.0 L831.4,574.4 L828.5,572.7 L825.6,571.1 L822.7,569.5 L819.8,567.9 L816.9,566.2 L814.0,564.6 L811.1,563.0 L808.3,561.3 L805.4,559.7 L802.5,558.1 L799.7,556.5 L796.9,554.8 L794.0,553.2 L791.2,551.6 L788.4,549.9 L785.6,548.3 L782.8,546.7 L780.0,545.1 L777.2,543.4 L774.4,541.8 L771.7,540.2 L768.9,538.6 L766.2,536.9 L763.4,535.3 L760.7,533.7 L758.0,532.0 L755.3,530.4 L752.6,528.8 L750.0,527.2 L747.3,525.5 L744.6,523.9 L742.0,522.3 L739.4,520.6 L736.8,519.0 L734.2,517.4 L731.6,515.8 L729.0,514.1 L726.4,512.5 L723.9,510.9 L721.3,509.2 L718.8,507.6 L716.3,506.0 L713.8,504.4 L711.3,502.7 L708.9,501.1 L706.4,499.5 L704.0,497.9 L701.5,496.2 L699.1,494.6 L696.8,493.0 L694.4,491.3 L692.0,489.7 L689.7,488.1 L687.3,486.5 L685.0,484.8 L682.7,483.2 L680.5,481.6 L678.2,479.9 L676.0,478.3 L673.7,476.7 L671.5,475.1 L669.3,473.4 L667.2,471.8 L665.0,470.2 L662.9,468.5 L660.8,466.9 L658.7,465.3 L656.6,463.7 L654.5,462.0 L652.5,460.4 L650.4,458.8 L648.4,457.2 L646.4,455.5 L644.5,453.9 L642.5,452.3 L640.6,450.6 L638.7,449.0 L636.8,447.4 L634.9,445.8 L633.1,444.1 L631.3,442.5 L629.5,440.9 L627.7,439.2 L625.9,437.6 L624.2,436.0 L622.4,434.4 L620.7,432.7 L619.1,431.1 L617.4,429.5 L615.8,427.8 L614.2,426.2 L612.6,424.6 L611.0,423.0 L609.5,421.3 L607.9,419.7 L606.4,418.1 L604.9,416.5 L603.5,414.8 L602.1,413.2 L600.6,411.6 L599.2,409.9 L597.9,408.3 L596.5,406.7 L595.2,405.1 L593.9,403.4 L592.7,401.8 L591.4,400.2 L590.2,398.5 L589.0,396.9 L587.8,395.3 L586.6,393.7 L585.5,392.0 L584.4,390.4 L583.3,388.8 L582.3,387.1 L581.2,385.5 L580.2,383.9 L579.2,382.3 L578.3,380.6 L577.4,379.0 L576.4,377.4 L575.6,375.8 L574.7,374.1 L573.9,372.5 L573.1,370.9 L572.3,369.2 L571.5,367.6 L570.8,366.0 L570.1,364.4 L569.4,362.7 L568.7,361.1 L568.1,359.5 L567.5,357.8 L566.9,356.2 L566.3,354.6 L565.8,353.0 L565.3,351.3 L564.8,349.7 L564.4,348.1 L563.9,346.4 L563.5,344.8 L563.2,343.2 L562.8,341.6 L562.5,339.9 L562.2,338.3 L561.9,336.7 L561.7,335.1 L561.5,333.4 L561.3,331.8 L561.1,330.2 L560.9,328.5 L560.8,326.9 L560.7,325.3 L560.7,323.7 L560.6,322.0 L560.6,320.4 L560.6,318.8 L560.7,317.1 L560.7,315.5 L560.8,313.9 L560.9,312.3 L561.1,310.6 L561.3,309.0 L561.5,307.4 L561.7,305.7 L561.9,304.1 L562.2,302.5 L562.5,300.9 L562.8,299.2 L563.2,297.6 L563.5,296.0 L563.9,294.4 L564.4,292.7 L564.8,291.1 L565.3,289.5 L565.8,287.8 L566.3,286.2 L566.9,284.6 L567.5,283.0 L568.1,281.3 L568.7,279.7 L569.4,278.1 L570.1,276.4 L570.8,274.8 L571.5,273.2 L572.3,271.6 L573.1,269.9 L573.9,268.3 L574.7,266.7 L575.6,265.0 L576.4,263.4 L577.4,261.8 L578.3,260.2 L579.2,258.5 L580.2,256.9 L581.2,255.3 L582.3,253.7 L583.3,252.0 L584.4,250.4 L585.5,248.8 L586.6,247.1 L587.8,245.5 L589.0,243.9 L590.2,242.3 L591.4,240.6 L592.7,239.0 L593.9,237.4 L595.2,235.7 L596.5,234.1 L597.9,232.5 L599.2,230.9 L600.6,229.2 L602.1,227.6 L603.5,226.0 L604.9,224.3 L606.4,222.7 L607.9,221.1 L609.5,219.5 L611.0,217.8 L612.6,216.2 L614.2,214.6 L615.8,213.0 L617.4,211.3 L619.1,209.7 L620.7,208.1 L622.4,206.4 L624.2,204.8 L625.9,203.2 L627.7,201.6 L629.5,199.9 L631.3,198.3 L633.1,196.7 L634.9,195.0 L636.8,193.4 L638.7,191.8 L640.6,190.2 L642.5,188.5 L644.5,186.9 L646.4,185.3 L648.4,183.6 L650.4,182.0 L652.5,180.4 L654.5,178.8 L656.6,177.1 L658.7,175.5 L660.8,173.9 L662.9,172.3 L665.0,170.6 L667.2,169.0 L669.3,167.4 L671.5,165.7 L673.7,164.1 L676.0,162.5 L678.2,160.9 L680.5,159.2 L682.7,157.6 L685.0,156.0 L687.3,154.3 L689.7,152.7 L692.0,151.1 L694.4,149.5 L696.8,147.8 L699.1,146.2 L701.5,144.6 L704.0,142.9 L706.4,141.3 L708.9,139.7 L711.3,138.1 L713.8,136.4 L716.3,134.8 L718.8,133.2 L721.3,131.6 L723.9,129.9 L726.4,128.3 L729.0,126.7 L731.6,125.0 L734.2,123.4 L736.8,121.8 L739.4,120.2 L742.0,118.5 L744.6,116.9 L747.3,115.3 L750.0,113.6 L752.6,112.0 L755.3,110.4 L758.0,108.8 L760.7,107.1 L763.4,105.5 L766.2,103.9 L768.9,102.2 L771.7,100.6 L774.4,99.0 L777.2,97.4 L780.0,95.7 L782.8,94.1 L785.6,92.5 L788.4,90.9 L791.2,89.2 L794.0,87.6 L796.9,86.0 L799.7,84.3 L802.5,82.7 L805.4,81.1 L808.3,79.5 L811.1,77.8 L814.0,76.2 L816.9,74.6 L819.8,72.9 L822.7,71.3 L825.6,69.7 L828.5,68.1 L831.4,66.4 L834.3,64.8 L837.3,63.2 L840.2,61.5 L843.1,59.9 L846.1,58.3 L849.0,56.7 L852.0,55.0 L854.9,53.4 L857.9,51.8 L860.8,50.2 L863.8,48.5 L866.8,46.9 L869.7,45.3 L872.7,43.6 L875.7,42.0 L878.7,40.4 L881.6,38.8 L884.6,37.1 L887.6,35.5 L890.6,33.9 L893.6,32.2 L896.5,30.6 L899.5,29.0 L902.5,27.4" stroke="#6a6a6a" stroke-width="2.4" stroke-linecap="round" stroke-dasharray="0 5.5" fill="none"/>
<path d="M902.5,613.4 L899.1,611.8 L895.7,610.2 L892.3,608.6 L888.9,606.9 L885.5,605.3 L882.1,603.7 L878.6,602.0 L875.2,600.4 L871.8,598.8 L868.4,597.2 L865.1,595.5 L861.7,593.9 L858.3,592.3 L854.9,590.6 L851.5,589.0 L848.1,587.4 L844.7,585.8 L841.4,584.1 L838.0,582.5 L834.7,580.9 L831.3,579.3 L827.9,577.6 L824.6,576.0 L821.3,574.4 L817.9,572.7 L814.6,571.1 L811.3,569.5 L808.0,567.9 L804.7,566.2 L801.4,564.6 L798.1,563.0 L794.8,561.3 L791.5,559.7 L788.3,558.1 L785.0,556.5 L781.8,554.8 L778.5,553.2 L775.3,551.6 L772.1,549.9 L768.9,548.3 L765.7,546.7 L762.5,545.1 L759.3,543.4 L756.1,541.8 L753.0,540.2 L749.8,538.6 L746.7,536.9 L743.6,535.3 L740.5,533.7 L737.4,532.0 L734.3,530.4 L731.2,528.8 L728.2,527.2 L725.1,525.5 L722.1,523.9 L719.1,522.3 L716.1,520.6 L713.1,519.0 L710.1,517.4 L707.1,515.8 L704.2,514.1 L701.3,512.5 L698.3,510.9 L695.4,509.2 L692.6,507.6 L689.7,506.0 L686.8,504.4 L684.0,502.7 L681.2,501.1 L678.4,499.5 L675.6,497.9 L672.8,496.2 L670.1,494.6 L667.4,493.0 L664.6,491.3 L661.9,489.7 L659.3,488.1 L656.6,486.5 L654.0,484.8 L651.4,483.2 L648.7,481.6 L646.2,479.9 L643.6,478.3 L641.1,476.7 L638.5,475.1 L636.0,473.4 L633.5,471.8 L631.1,470.2 L628.6,468.5 L626.2,466.9 L623.8,465.3 L621.4,463.7 L619.1,462.0 L616.7,460.4 L614.4,458.8 L612.1,457.2 L609.9,455.5 L607.6,453.9 L605.4,452.3 L603.2,450.6 L601.0,449.0 L598.9,447.4 L596.7,445.8 L594.6,444.1 L592.5,442.5 L590.5,440.9 L588.4,439.2 L586.4,437.6 L584.4,436.0 L582.4,434.4 L580.5,432.7 L578.6,431.1 L576.7,429.5 L574.8,427.8 L573.0,426.2 L571.2,424.6 L569.4,423.0 L567.6,421.3 L565.8,419.7 L564.1,418.1 L562.4,416.5 L560.8,414.8 L559.1,413.2 L557.5,411.6 L555.9,409.9 L554.4,408.3 L552.8,406.7 L551.3,405.1 L549.8,403.4 L548.4,401.8 L547.0,400.2 L545.6,398.5 L544.2,396.9 L542.8,395.3 L541.5,393.7 L540.2,392.0 L539.0,390.4 L537.7,388.8 L536.5,387.1 L535.3,385.5 L534.2,383.9 L533.1,382.3 L532.0,380.6 L530.9,379.0 L529.9,377.4 L528.9,375.8 L527.9,374.1 L526.9,372.5 L526.0,370.9 L525.1,369.2 L524.2,367.6 L523.4,366.0 L522.6,364.4 L521.8,362.7 L521.0,361.1 L520.3,359.5 L519.6,357.8 L519.0,356.2 L518.3,354.6 L517.7,353.0 L517.1,351.3 L516.6,349.7 L516.1,348.1 L515.6,346.4 L515.1,344.8 L514.7,343.2 L514.3,341.6 L513.9,339.9 L513.6,338.3 L513.3,336.7 L513.0,335.1 L512.7,333.4 L512.5,331.8 L512.3,330.2 L512.2,328.5 L512.0,326.9 L511.9,325.3 L511.8,323.7 L511.8,322.0 L511.8,320.4 L511.8,318.8 L511.8,317.1 L511.9,315.5 L512.0,313.9 L512.2,312.3 L512.3,310.6 L512.5,309.0 L512.7,307.4 L513.0,305.7 L513.3,304.1 L513.6,302.5 L513.9,300.9 L514.3,299.2 L514.7,297.6 L515.1,296.0 L515.6,294.4 L516.1,292.7 L516.6,291.1 L517.1,289.5 L517.7,287.8 L518.3,286.2 L519.0,284.6 L519.6,283.0 L520.3,281.3 L521.0,279.7 L521.8,278.1 L522.6,276.4 L523.4,274.8 L524.2,273.2 L525.1,271.6 L526.0,269.9 L526.9,268.3 L527.9,266.7 L528.9,265.0 L529.9,263.4 L530.9,261.8 L532.0,260.2 L533.1,258.5 L534.2,256.9 L535.3,255.3 L536.5,253.7 L537.7,252.0 L539.0,250.4 L540.2,248.8 L541.5,247.1 L542.8,245.5 L544.2,243.9 L545.6,242.3 L547.0,240.6 L548.4,239.0 L549.8,237.4 L551.3,235.7 L552.8,234.1 L554.4,232.5 L555.9,230.9 L557.5,229.2 L559.1,227.6 L560.8,226.0 L562.4,224.3 L564.1,222.7 L565.8,221.1 L567.6,219.5 L569.4,217.8 L571.2,216.2 L573.0,214.6 L574.8,213.0 L576.7,211.3 L578.6,209.7 L580.5,208.1 L582.4,206.4 L584.4,204.8 L586.4,203.2 L588.4,201.6 L590.5,199.9 L592.5,198.3 L594.6,196.7 L596.7,195.0 L598.9,193.4 L601.0,191.8 L603.2,190.2 L605.4,188.5 L607.6,186.9 L609.9,185.3 L612.1,183.6 L614.4,182.0 L616.7,180.4 L619.1,178.8 L621.4,177.1 L623.8,175.5 L626.2,173.9 L628.6,172.3 L631.1,170.6 L633.5,169.0 L636.0,167.4 L638.5,165.7 L641.1,164.1 L643.6,162.5 L646.2,160.9 L648.7,159.2 L651.4,157.6 L654.0,156.0 L656.6,154.3 L659.3,152.7 L661.9,151.1 L664.6,149.5 L667.4,147.8 L670.1,146.2 L672.8,144.6 L675.6,142.9 L678.4,141.3 L681.2,139.7 L684.0,138.1 L686.8,136.4 L689.7,134.8 L692.6,133.2 L695.4,131.6 L698.3,129.9 L701.3,128.3 L704.2,126.7 L707.1,125.0 L710.1,123.4 L713.1,121.8 L716.1,120.2 L719.1,118.5 L722.1,116.9 L725.1,115.3 L728.2,113.6 L731.2,112.0 L734.3,110.4 L737.4,108.8 L740.5,107.1 L743.6,105.5 L746.7,103.9 L749.8,102.2 L753.0,100.6 L756.1,99.0 L759.3,97.4 L762.5,95.7 L765.7,94.1 L768.9,92.5 L772.1,90.9 L775.3,89.2 L778.5,87.6 L781.8,86.0 L785.0,84.3 L788.3,82.7 L791.5,81.1 L794.8,79.5 L798.1,77.8 L801.4,76.2 L804.7,74.6 L808.0,72.9 L811.3,71.3 L814.6,69.7 L817.9,68.1 L821.3,66.4 L824.6,64.8 L827.9,63.2 L831.3,61.5 L834.7,59.9 L838.0,58.3 L841.4,56.7 L844.7,55.0 L848.1,53.4 L851.5,51.8 L854.9,50.2 L858.3,48.5 L861.7,46.9 L865.1,45.3 L868.4,43.6 L871.8,42.0 L875.2,40.4 L878.6,38.8 L882.1,37.1 L885.5,35.5 L888.9,33.9 L892.3,32.2 L895.7,30.6 L899.1,29.0 L902.5,27.4" stroke="#6a6a6a" stroke-width="2.4" stroke-linecap="round" stroke-dasharray="0 5.5" fill="none"/>
<path d="M902.5,613.4 L898.7,611.8 L894.8,610.2 L891.0,608.6 L887.2,606.9 L883.3,605.3 L879.5,603.7 L875.7,602.0 L871.8,600.4 L868.0,598.8 L864.2,597.2 L860.4,595.5 L856.6,593.9 L852.7,592.3 L848.9,590.6 L845.1,589.0 L841.3,587.4 L837.5,585.8 L833.7,584.1 L830.0,582.5 L826.2,580.9 L822.4,579.3 L818.6,577.6 L814.9,576.0 L811.1,574.4 L807.4,572.7 L803.6,571.1 L799.9,569.5 L796.2,567.9 L792.4,566.2 L788.7,564.6 L785.0,563.0 L781.3,561.3 L777.7,559.7 L774.0,558.1 L770.3,556.5 L766.7,554.8 L763.0,553.2 L759.4,551.6 L755.8,549.9 L752.2,548.3 L748.6,546.7 L745.0,545.1 L741.4,543.4 L737.8,541.8 L734.3,540.2 L730.8,538.6 L727.2,536.9 L723.7,535.3 L720.2,533.7 L716.7,532.0 L713.3,530.4 L709.8,528.8 L706.4,527.2 L702.9,525.5 L699.5,523.9 L696.1,522.3 L692.8,520.6 L689.4,519.0 L686.1,517.4 L682.7,515.8 L679.4,514.1 L676.1,512.5 L672.8,510.9 L669.6,509.2 L666.3,507.6 L663.1,506.0 L659.9,504.4 L656.7,502.7 L653.5,501.1 L650.4,499.5 L647.2,497.9 L644.1,496.2 L641.0,494.6 L638.0,493.0 L634.9,491.3 L631.9,489.7 L628.9,488.1 L625.9,486.5 L622.9,484.8 L620.0,483.2 L617.0,481.6 L614.1,479.9 L611.2,478.3 L608.4,476.7 L605.5,475.1 L602.7,473.4 L599.9,471.8 L597.2,470.2 L594.4,468.5 L591.7,466.9 L589.0,465.3 L586.3,463.7 L583.7,462.0 L581.0,460.4 L578.4,458.8 L575.8,457.2 L573.3,455.5 L570.8,453.9 L568.3,452.3 L565.8,450.6 L563.3,449.0 L560.9,447.4 L558.5,445.8 L556.1,444.1 L553.8,442.5 L551.5,440.9 L549.2,439.2 L546.9,437.6 L544.6,436.0 L542.4,434.4 L540.2,432.7 L538.1,431.1 L536.0,429.5 L533.9,427.8 L531.8,426.2 L529.7,424.6 L527.7,423.0 L525.7,421.3 L523.8,419.7 L521.8,418.1 L519.9,416.5 L518.1,414.8 L516.2,413.2 L514.4,411.6 L512.6,409.9 L510.8,408.3 L509.1,406.7 L507.4,405.1 L505.8,403.4 L504.1,401.8 L502.5,400.2 L500.9,398.5 L499.4,396.9 L497.9,395.3 L496.4,393.7 L494.9,392.0 L493.5,390.4 L492.1,388.8 L490.8,387.1 L489.4,385.5 L488.2,383.9 L486.9,382.3 L485.7,380.6 L484.5,379.0 L483.3,377.4 L482.1,375.8 L481.0,374.1 L480.0,372.5 L478.9,370.9 L477.9,369.2 L476.9,367.6 L476.0,366.0 L475.1,364.4 L474.2,362.7 L473.4,361.1 L472.5,359.5 L471.8,357.8 L471.0,356.2 L470.3,354.6 L469.6,353.0 L469.0,351.3 L468.4,349.7 L467.8,348.1 L467.2,346.4 L466.7,344.8 L466.2,343.2 L465.8,341.6 L465.3,339.9 L465.0,338.3 L464.6,336.7 L464.3,335.1 L464.0,333.4 L463.8,331.8 L463.5,330.2 L463.4,328.5 L463.2,326.9 L463.1,325.3 L463.0,323.7 L463.0,322.0 L462.9,320.4 L463.0,318.8 L463.0,317.1 L463.1,315.5 L463.2,313.9 L463.4,312.3 L463.5,310.6 L463.8,309.0 L464.0,307.4 L464.3,305.7 L464.6,304.1 L465.0,302.5 L465.3,300.9 L465.8,299.2 L466.2,297.6 L466.7,296.0 L467.2,294.4 L467.8,292.7 L468.4,291.1 L469.0,289.5 L469.6,287.8 L470.3,286.2 L471.0,284.6 L471.8,283.0 L472.5,281.3 L473.4,279.7 L474.2,278.1 L475.1,276.4 L476.0,274.8 L476.9,273.2 L477.9,271.6 L478.9,269.9 L480.0,268.3 L481.0,266.7 L482.1,265.0 L483.3,263.4 L484.5,261.8 L485.7,260.2 L486.9,258.5 L488.2,256.9 L489.4,255.3 L490.8,253.7 L492.1,252.0 L493.5,250.4 L494.9,248.8 L496.4,247.1 L497.9,245.5 L499.4,243.9 L500.9,242.3 L502.5,240.6 L504.1,239.0 L505.8,237.4 L507.4,235.7 L509.1,234.1 L510.8,232.5 L512.6,230.9 L514.4,229.2 L516.2,227.6 L518.1,226.0 L519.9,224.3 L521.8,222.7 L523.8,221.1 L525.7,219.5 L527.7,217.8 L529.7,216.2 L531.8,214.6 L533.9,213.0 L536.0,211.3 L538.1,209.7 L540.2,208.1 L542.4,206.4 L544.6,204.8 L546.9,203.2 L549.2,201.6 L551.5,199.9 L553.8,198.3 L556.1,196.7 L558.5,195.0 L560.9,193.4 L563.3,191.8 L565.8,190.2 L568.3,188.5 L570.8,186.9 L573.3,185.3 L575.8,183.6 L578.4,182.0 L581.0,180.4 L583.7,178.8 L586.3,177.1 L589.0,175.5 L591.7,173.9 L594.4,172.3 L597.2,170.6 L599.9,169.0 L602.7,167.4 L605.5,165.7 L608.4,164.1 L611.2,162.5 L614.1,160.9 L617.0,159.2 L620.0,157.6 L622.9,156.0 L625.9,154.3 L628.9,152.7 L631.9,151.1 L634.9,149.5 L638.0,147.8 L641.0,146.2 L644.1,144.6 L647.2,142.9 L650.4,141.3 L653.5,139.7 L656.7,138.1 L659.9,136.4 L663.1,134.8 L666.3,133.2 L669.6,131.6 L672.8,129.9 L676.1,128.3 L679.4,126.7 L682.7,125.0 L686.1,123.4 L689.4,121.8 L692.8,120.2 L696.1,118.5 L699.5,116.9 L702.9,115.3 L706.4,113.6 L709.8,112.0 L713.3,110.4 L716.7,108.8 L720.2,107.1 L723.7,105.5 L727.2,103.9 L730.8,102.2 L734.3,100.6 L737.8,99.0 L741.4,97.4 L745.0,95.7 L748.6,94.1 L752.2,92.5 L755.8,90.9 L759.4,89.2 L763.0,87.6 L766.7,86.0 L770.3,84.3 L774.0,82.7 L777.7,81.1 L781.3,79.5 L785.0,77.8 L788.7,76.2 L792.4,74.6 L796.2,72.9 L799.9,71.3 L803.6,69.7 L807.4,68.1 L811.1,66.4 L814.9,64.8 L818.6,63.2 L822.4,61.5 L826.2,59.9 L830.0,58.3 L833.7,56.7 L837.5,55.0 L841.3,53.4 L845.1,51.8 L848.9,50.2 L852.7,48.5 L856.6,46.9 L860.4,45.3 L864.2,43.6 L868.0,42.0 L871.8,40.4 L875.7,38.8 L879.5,37.1 L883.3,35.5 L887.2,33.9 L891.0,32.2 L894.8,30.6 L898.7,29.0 L902.5,27.4" stroke="#6a6a6a" stroke-width="2.4" stroke-linecap="round" stroke-dasharray="0 5.5" fill="none"/>
<path d="M902.5,613.4 L898.2,611.8 L894.0,610.2 L889.7,608.6 L885.5,606.9 L881.2,605.3 L876.9,603.7 L872.7,602.0 L868.4,600.4 L864.2,598.8 L859.9,597.2 L855.7,595.5 L851.4,593.9 L847.2,592.3 L843.0,590.6 L838.8,589.0 L834.5,587.4 L830.3,585.8 L826.1,584.1 L821.9,582.5 L817.7,580.9 L813.5,579.3 L809.3,577.6 L805.1,576.0 L801.0,574.4 L796.8,572.7 L792.6,571.1 L788.5,569.5 L784.3,567.9 L780.2,566.2 L776.1,564.6 L772.0,563.0 L767.9,561.3 L763.8,559.7 L759.7,558.1 L755.6,556.5 L751.6,554.8 L747.5,553.2 L743.5,551.6 L739.5,549.9 L735.5,548.3 L731.5,546.7 L727.5,545.1 L723.5,543.4 L719.5,541.8 L715.6,540.2 L711.7,538.6 L707.8,536.9 L703.8,535.3 L700.0,533.7 L696.1,532.0 L692.2,530.4 L688.4,528.8 L684.6,527.2 L680.8,525.5 L677.0,523.9 L673.2,522.3 L669.5,520.6 L665.7,519.0 L662.0,517.4 L658.3,515.8 L654.6,514.1 L651.0,512.5 L647.3,510.9 L643.7,509.2 L640.1,507.6 L636.5,506.0 L632.9,504.4 L629.4,502.7 L625.9,501.1 L622.4,499.5 L618.9,497.9 L615.4,496.2 L612.0,494.6 L608.6,493.0 L605.2,491.3 L601.8,489.7 L598.5,488.1 L595.1,486.5 L591.8,484.8 L588.6,483.2 L585.3,481.6 L582.1,479.9 L578.9,478.3 L575.7,476.7 L572.5,475.1 L569.4,473.4 L566.3,471.8 L563.2,470.2 L560.2,468.5 L557.1,466.9 L554.1,465.3 L551.2,463.7 L548.2,462.0 L545.3,460.4 L542.4,458.8 L539.5,457.2 L536.7,455.5 L533.9,453.9 L531.1,452.3 L528.4,450.6 L525.6,449.0 L522.9,447.4 L520.3,445.8 L517.6,444.1 L515.0,442.5 L512.4,440.9 L509.9,439.2 L507.4,437.6 L504.9,436.0 L502.4,434.4 L500.0,432.7 L497.6,431.1 L495.2,429.5 L492.9,427.8 L490.6,426.2 L488.3,424.6 L486.1,423.0 L483.9,421.3 L481.7,419.7 L479.5,418.1 L477.4,416.5 L475.3,414.8 L473.3,413.2 L471.3,411.6 L469.3,409.9 L467.3,408.3 L465.4,406.7 L463.5,405.1 L461.7,403.4 L459.9,401.8 L458.1,400.2 L456.3,398.5 L454.6,396.9 L452.9,395.3 L451.3,393.7 L449.7,392.0 L448.1,390.4 L446.5,388.8 L445.0,387.1 L443.6,385.5 L442.1,383.9 L440.7,382.3 L439.3,380.6 L438.0,379.0 L436.7,377.4 L435.4,375.8 L434.2,374.1 L433.0,372.5 L431.9,370.9 L430.7,369.2 L429.7,367.6 L428.6,366.0 L427.6,364.4 L426.6,362.7 L425.7,361.1 L424.8,359.5 L423.9,357.8 L423.1,356.2 L422.3,354.6 L421.5,353.0 L420.8,351.3 L420.1,349.7 L419.5,348.1 L418.9,346.4 L418.3,344.8 L417.7,343.2 L417.2,341.6 L416.8,339.9 L416.3,338.3 L416.0,336.7 L415.6,335.1 L415.3,333.4 L415.0,331.8 L414.8,330.2 L414.6,328.5 L414.4,326.9 L414.3,325.3 L414.2,323.7 L414.1,322.0 L414.1,320.4 L414.1,318.8 L414.2,317.1 L414.3,315.5 L414.4,313.9 L414.6,312.3 L414.8,310.6 L415.0,309.0 L415.3,307.4 L415.6,305.7 L416.0,304.1 L416.3,302.5 L416.8,300.9 L417.2,299.2 L417.7,297.6 L418.3,296.0 L418.9,294.4 L419.5,292.7 L420.1,291.1 L420.8,289.5 L421.5,287.8 L422.3,286.2 L423.1,284.6 L423.9,283.0 L424.8,281.3 L425.7,279.7 L426.6,278.1 L427.6,276.4 L428.6,274.8 L429.7,273.2 L430.7,271.6 L431.9,269.9 L433.0,268.3 L434.2,266.7 L435.4,265.0 L436.7,263.4 L438.0,261.8 L439.3,260.2 L440.7,258.5 L442.1,256.9 L443.6,255.3 L445.0,253.7 L446.5,252.0 L448.1,250.4 L449.7,248.8 L451.3,247.1 L452.9,245.5 L454.6,243.9 L456.3,242.3 L458.1,240.6 L459.9,239.0 L461.7,237.4 L463.5,235.7 L465.4,234.1 L467.3,232.5 L469.3,230.9 L471.3,229.2 L473.3,227.6 L475.3,226.0 L477.4,224.3 L479.5,222.7 L481.7,221.1 L483.9,219.5 L486.1,217.8 L488.3,216.2 L490.6,214.6 L492.9,213.0 L495.2,211.3 L497.6,209.7 L500.0,208.1 L502.4,206.4 L504.9,204.8 L507.4,203.2 L509.9,201.6 L512.4,199.9 L515.0,198.3 L517.6,196.7 L520.3,195.0 L522.9,193.4 L525.6,191.8 L528.4,190.2 L531.1,188.5 L533.9,186.9 L536.7,185.3 L539.5,183.6 L542.4,182.0 L545.3,180.4 L548.2,178.8 L551.2,177.1 L554.1,175.5 L557.1,173.9 L560.2,172.3 L563.2,170.6 L566.3,169.0 L569.4,167.4 L572.5,165.7 L575.7,164.1 L578.9,162.5 L582.1,160.9 L585.3,159.2 L588.6,157.6 L591.8,156.0 L595.1,154.3 L598.5,152.7 L601.8,151.1 L605.2,149.5 L608.6,147.8 L612.0,146.2 L615.4,144.6 L618.9,142.9 L622.4,141.3 L625.9,139.7 L629.4,138.1 L632.9,136.4 L636.5,134.8 L640.1,133.2 L643.7,131.6 L647.3,129.9 L651.0,128.3 L654.6,126.7 L658.3,125.0 L662.0,123.4 L665.7,121.8 L669.5,120.2 L673.2,118.5 L677.0,116.9 L680.8,115.3 L684.6,113.6 L688.4,112.0 L692.2,110.4 L696.1,108.8 L700.0,107.1 L703.8,105.5 L707.8,103.9 L711.7,102.2 L715.6,100.6 L719.5,99.0 L723.5,97.4 L727.5,95.7 L731.5,94.1 L735.5,92.5 L739.5,90.9 L743.5,89.2 L747.5,87.6 L751.6,86.0 L755.6,84.3 L759.7,82.7 L763.8,81.1 L767.9,79.5 L772.0,77.8 L776.1,76.2 L780.2,74.6 L784.3,72.9 L788.5,71.3 L792.6,69.7 L796.8,68.1 L801.0,66.4 L805.1,64.8 L809.3,63.2 L813.5,61.5 L817.7,59.9 L821.9,58.3 L826.1,56.7 L830.3,55.0 L834.5,53.4 L838.8,51.8 L843.0,50.2 L847.2,48.5 L851.4,46.9 L855.7,45.3 L859.9,43.6 L864.2,42.0 L868.4,40.4 L872.7,38.8 L876.9,37.1 L881.2,35.5 L885.5,33.9 L889.7,32.2 L894.0,30.6 L898.2,29.0 L902.5,27.4" stroke="#6a6a6a" stroke-width="2.4" stroke-linecap="round" stroke-dasharray="0 5.5" fill="none"/>
<path d="M902.5,613.4 L897.8,611.8 L893.1,610.2 L888.4,608.6 L883.8,606.9 L879.1,605.3 L874.4,603.7 L869.7,602.0 L865.0,600.4 L860.3,598.8 L855.7,597.2 L851.0,595.5 L846.3,593.9 L841.7,592.3 L837.0,590.6 L832.4,589.0 L827.7,587.4 L823.1,585.8 L818.5,584.1 L813.8,582.5 L809.2,580.9 L804.6,579.3 L800.0,577.6 L795.4,576.0 L790.8,574.4 L786.2,572.7 L781.6,571.1 L777.1,569.5 L772.5,567.9 L768.0,566.2 L763.5,564.6 L758.9,563.0 L754.4,561.3 L749.9,559.7 L745.4,558.1 L740.9,556.5 L736.5,554.8 L732.0,553.2 L727.6,551.6 L723.2,549.9 L718.8,548.3 L714.4,546.7 L710.0,545.1 L705.6,543.4 L701.2,541.8 L696.9,540.2 L692.6,538.6 L688.3,536.9 L684.0,535.3 L679.7,533.7 L675.5,532.0 L671.2,530.4 L667.0,528.8 L662.8,527.2 L658.6,525.5 L654.4,523.9 L650.3,522.3 L646.2,520.6 L642.0,519.0 L638.0,517.4 L633.9,515.8 L629.8,514.1 L625.8,512.5 L621.8,510.9 L617.8,509.2 L613.8,507.6 L609.9,506.0 L606.0,504.4 L602.1,502.7 L598.2,501.1 L594.4,499.5 L590.5,497.9 L586.7,496.2 L582.9,494.6 L579.2,493.0 L575.4,491.3 L571.7,489.7 L568.1,488.1 L564.4,486.5 L560.8,484.8 L557.2,483.2 L553.6,481.6 L550.0,479.9 L546.5,478.3 L543.0,476.7 L539.5,475.1 L536.1,473.4 L532.7,471.8 L529.3,470.2 L525.9,468.5 L522.6,466.9 L519.3,465.3 L516.0,463.7 L512.8,462.0 L509.6,460.4 L506.4,458.8 L503.3,457.2 L500.1,455.5 L497.0,453.9 L494.0,452.3 L491.0,450.6 L488.0,449.0 L485.0,447.4 L482.1,445.8 L479.1,444.1 L476.3,442.5 L473.4,440.9 L470.6,439.2 L467.9,437.6 L465.1,436.0 L462.4,434.4 L459.7,432.7 L457.1,431.1 L454.5,429.5 L451.9,427.8 L449.4,426.2 L446.9,424.6 L444.4,423.0 L442.0,421.3 L439.6,419.7 L437.2,418.1 L434.9,416.5 L432.6,414.8 L430.4,413.2 L428.1,411.6 L426.0,409.9 L423.8,408.3 L421.7,406.7 L419.6,405.1 L417.6,403.4 L415.6,401.8 L413.6,400.2 L411.7,398.5 L409.8,396.9 L408.0,395.3 L406.2,393.7 L404.4,392.0 L402.6,390.4 L400.9,388.8 L399.3,387.1 L397.7,385.5 L396.1,383.9 L394.5,382.3 L393.0,380.6 L391.6,379.0 L390.1,377.4 L388.7,375.8 L387.4,374.1 L386.1,372.5 L384.8,370.9 L383.6,369.2 L382.4,367.6 L381.2,366.0 L380.1,364.4 L379.0,362.7 L378.0,361.1 L377.0,359.5 L376.0,357.8 L375.1,356.2 L374.3,354.6 L373.4,353.0 L372.6,351.3 L371.9,349.7 L371.2,348.1 L370.5,346.4 L369.9,344.8 L369.3,343.2 L368.7,341.6 L368.2,339.9 L367.7,338.3 L367.3,336.7 L366.9,335.1 L366.6,333.4 L366.3,331.8 L366.0,330.2 L365.8,328.5 L365.6,326.9 L365.4,325.3 L365.3,323.7 L365.3,322.0 L365.3,320.4 L365.3,318.8 L365.3,317.1 L365.4,315.5 L365.6,313.9 L365.8,312.3 L366.0,310.6 L366.3,309.0 L366.6,307.4 L366.9,305.7 L367.3,304.1 L367.7,302.5 L368.2,300.9 L368.7,299.2 L369.3,297.6 L369.9,296.0 L370.5,294.4 L371.2,292.7 L371.9,291.1 L372.6,289.5 L373.4,287.8 L374.3,286.2 L375.1,284.6 L376.0,283.0 L377.0,281.3 L378.0,279.7 L379.0,278.1 L380.1,276.4 L381.2,274.8 L382.4,273.2 L383.6,271.6 L384.8,269.9 L386.1,268.3 L387.4,266.7 L388.7,265.0 L390.1,263.4 L391.6,261.8 L393.0,260.2 L394.5,258.5 L396.1,256.9 L397.7,255.3 L399.3,253.7 L400.9,252.0 L402.6,250.4 L404.4,248.8 L406.2,247.1 L408.0,245.5 L409.8,243.9 L411.7,242.3 L413.6,240.6 L415.6,239.0 L417.6,237.4 L419.6,235.7 L421.7,234.1 L423.8,232.5 L426.0,230.9 L428.1,229.2 L430.4,227.6 L432.6,226.0 L434.9,224.3 L437.2,222.7 L439.6,221.1 L442.0,219.5 L444.4,217.8 L446.9,216.2 L449.4,214.6 L451.9,213.0 L454.5,211.3 L457.1,209.7 L459.7,208.1 L462.4,206.4 L465.1,204.8 L467.9,203.2 L470.6,201.6 L473.4,199.9 L476.3,198.3 L479.1,196.7 L482.1,195.0 L485.0,193.4 L488.0,191.8 L491.0,190.2 L494.0,188.5 L497.0,186.9 L500.1,185.3 L503.3,183.6 L506.4,182.0 L509.6,180.4 L512.8,178.8 L516.0,177.1 L519.3,175.5 L522.6,173.9 L525.9,172.3 L529.3,170.6 L532.7,169.0 L536.1,167.4 L539.5,165.7 L543.0,164.1 L546.5,162.5 L550.0,160.9 L553.6,159.2 L557.2,157.6 L560.8,156.0 L564.4,154.3 L568.1,152.7 L571.7,151.1 L575.4,149.5 L579.2,147.8 L582.9,146.2 L586.7,144.6 L590.5,142.9 L594.4,141.3 L598.2,139.7 L602.1,138.1 L606.0,136.4 L609.9,134.8 L613.8,133.2 L617.8,131.6 L621.8,129.9 L625.8,128.3 L629.8,126.7 L633.9,125.0 L638.0,123.4 L642.0,121.8 L646.2,120.2 L650.3,118.5 L654.4,116.9 L658.6,115.3 L662.8,113.6 L667.0,112.0 L671.2,110.4 L675.5,108.8 L679.7,107.1 L684.0,105.5 L688.3,103.9 L692.6,102.2 L696.9,100.6 L701.2,99.0 L705.6,97.4 L710.0,95.7 L714.4,94.1 L718.8,92.5 L723.2,90.9 L727.6,89.2 L732.0,87.6 L736.5,86.0 L740.9,84.3 L745.4,82.7 L749.9,81.1 L754.4,79.5 L758.9,77.8 L763.5,76.2 L768.0,74.6 L772.5,72.9 L777.1,71.3 L781.6,69.7 L786.2,68.1 L790.8,66.4 L795.4,64.8 L800.0,63.2 L804.6,61.5 L809.2,59.9 L813.8,58.3 L818.5,56.7 L823.1,55.0 L827.7,53.4 L832.4,51.8 L837.0,50.2 L841.7,48.5 L846.3,46.9 L851.0,45.3 L855.7,43.6 L860.3,42.0 L865.0,40.4 L869.7,38.8 L874.4,37.1 L879.1,35.5 L883.8,33.9 L888.4,32.2 L893.1,30.6 L897.8,29.0 L902.5,27.4" stroke="#6a6a6a" stroke-width="2.4" stroke-linecap="round" stroke-dasharray="0 5.5" fill="none"/>
<path d="M902.5,613.4 L907.6,611.8 L912.7,610.2 L917.8,608.6 L923.0,606.9 L928.1,605.3 L933.2,603.7 L938.3,602.0 L943.4,600.4 L948.5,598.8 L953.6,597.2 L958.7,595.5 L963.8,593.9 L968.8,592.3 L973.9,590.6 L979.0,589.0 L984.1,587.4 L989.1,585.8 L994.2,584.1 L999.2,582.5 L1004.3,580.9 L1009.3,579.3 L1014.3,577.6 L1019.3,576.0 L1024.4,574.4 L1029.4,572.7 L1034.3,571.1 L1039.3,569.5 L1044.3,567.9 L1049.2,566.2 L1054.2,564.6 L1059.1,563.0 L1064.0,561.3 L1069.0,559.7 L1073.9,558.1 L1078.7,556.5 L1083.6,554.8 L1088.5,553.2 L1093.3,551.6 L1098.1,549.9 L1103.0,548.3 L1107.7,546.7 L1112.5,545.1 L1117.3,543.4 L1122.0,541.8 L1126.8,540.2 L1131.5,538.6 L1136.2,536.9 L1140.9,535.3 L1145.5,533.7 L1150.2,532.0 L1154.8,530.4 L1159.4,528.8 L1164.0,527.2 L1168.6,525.5 L1173.1,523.9 L1177.6,522.3 L1182.2,520.6 L1186.6,519.0 L1191.1,517.4 L1195.5,515.8 L1200.0,514.1 L1204.4,512.5 L1208.7,510.9 L1213.1,509.2 L1217.4,507.6 L1221.7,506.0 L1226.0,504.4 L1230.2,502.7 L1234.5,501.1 L1238.7,499.5 L1242.8,497.9 L1247.0,496.2 L1251.1,494.6 L1255.2,493.0 L1259.3,491.3 L1263.3,489.7 L1267.3,488.1 L1271.3,486.5 L1275.3,484.8 L1279.2,483.2 L1283.1,481.6 L1287.0,479.9 L1290.8,478.3 L1294.7,476.7 L1298.4,475.1 L1302.2,473.4 L1305.9,471.8 L1309.6,470.2 L1313.3,468.5 L1316.9,466.9 L1320.5,465.3 L1324.1,463.7 L1327.6,462.0 L1331.1,460.4 L1334.6,458.8 L1338.0,457.2 L1341.4,455.5 L1344.8,453.9 L1348.2,452.3 L1351.5,450.6 L1354.7,449.0 L1358.0,447.4 L1361.2,445.8 L1364.3,444.1 L1367.5,442.5 L1370.6,440.9 L1373.6,439.2 L1376.6,437.6 L1379.6,436.0 L1382.6,434.4 L1385.5,432.7 L1388.4,431.1 L1391.2,429.5 L1394.0,427.8 L1396.8,426.2 L1399.5,424.6 L1402.2,423.0 L1404.9,421.3 L1407.5,419.7 L1410.1,418.1 L1412.6,416.5 L1415.1,414.8 L1417.6,413.2 L1420.0,411.6 L1422.4,409.9 L1424.7,408.3 L1427.0,406.7 L1429.3,405.1 L1431.5,403.4 L1433.7,401.8 L1435.8,400.2 L1437.9,398.5 L1440.0,396.9 L1442.0,395.3 L1444.0,393.7 L1445.9,392.0 L1447.8,390.4 L1449.7,388.8 L1451.5,387.1 L1453.2,385.5 L1455.0,383.9 L1456.6,382.3 L1458.3,380.6 L1459.9,379.0 L1461.5,377.4 L1463.0,375.8 L1464.4,374.1 L1465.9,372.5 L1467.3,370.9 L1468.6,369.2 L1469.9,367.6 L1471.2,366.0 L1472.4,364.4 L1473.6,362.7 L1474.7,361.1 L1475.8,359.5 L1476.8,357.8 L1477.8,356.2 L1478.8,354.6 L1479.7,353.0 L1480.5,351.3 L1481.4,349.7 L1482.1,348.1 L1482.9,346.4 L1483.6,344.8 L1484.2,343.2 L1484.8,341.6 L1485.4,339.9 L1485.9,338.3 L1486.3,336.7 L1486.8,335.1 L1487.2,333.4 L1487.5,331.8 L1487.8,330.2 L1488.0,328.5 L1488.2,326.9 L1488.4,325.3 L1488.5,323.7 L1488.6,322.0 L1488.6,320.4 L1488.6,318.8 L1488.5,317.1 L1488.4,315.5 L1488.2,313.9 L1488.0,312.3 L1487.8,310.6 L1487.5,309.0 L1487.2,307.4 L1486.8,305.7 L1486.3,304.1 L1485.9,302.5 L1485.4,300.9 L1484.8,299.2 L1484.2,297.6 L1483.6,296.0 L1482.9,294.4 L1482.1,292.7 L1481.4,291.1 L1480.5,289.5 L1479.7,287.8 L1478.8,286.2 L1477.8,284.6 L1476.8,283.0 L1475.8,281.3 L1474.7,279.7 L1473.6,278.1 L1472.4,276.4 L1471.2,274.8 L1469.9,273.2 L1468.6,271.6 L1467.3,269.9 L1465.9,268.3 L1464.4,266.7 L1463.0,265.0 L1461.5,263.4 L1459.9,261.8 L1458.3,260.2 L1456.6,258.5 L1455.0,256.9 L1453.2,255.3 L1451.5,253.7 L1449.7,252.0 L1447.8,250.4 L1445.9,248.8 L1444.0,247.1 L1442.0,245.5 L1440.0,243.9 L1437.9,242.3 L1435.8,240.6 L1433.7,239.0 L1431.5,237.4 L1429.3,235.7 L1427.0,234.1 L1424.7,232.5 L1422.4,230.9 L1420.0,229.2 L1417.6,227.6 L1415.1,226.0 L1412.6,224.3 L1410.1,222.7 L1407.5,221.1 L1404.9,219.5 L1402.2,217.8 L1399.5,216.2 L1396.8,214.6 L1394.0,213.0 L1391.2,211.3 L1388.4,209.7 L1385.5,208.1 L1382.6,206.4 L1379.6,204.8 L1376.6,203.2 L1373.6,201.6 L1370.6,199.9 L1367.5,198.3 L1364.3,196.7 L1361.2,195.0 L1358.0,193.4 L1354.7,191.8 L1351.5,190.2 L1348.2,188.5 L1344.8,186.9 L1341.4,185.3 L1338.0,183.6 L1334.6,182.0 L1331.1,180.4 L1327.6,178.8 L1324.1,177.1 L1320.5,175.5 L1316.9,173.9 L1313.3,172.3 L1309.6,170.6 L1305.9,169.0 L1302.2,167.4 L1298.4,165.7 L1294.7,164.1 L1290.8,162.5 L1287.0,160.9 L1283.1,159.2 L1279.2,157.6 L1275.3,156.0 L1271.3,154.3 L1267.3,152.7 L1263.3,151.1 L1259.3,149.5 L1255.2,147.8 L1251.1,146.2 L1247.0,144.6 L1242.8,142.9 L1238.7,141.3 L1234.5,139.7 L1230.2,138.1 L1226.0,136.4 L1221.7,134.8 L1217.4,133.2 L1213.1,131.6 L1208.7,129.9 L1204.4,128.3 L1200.0,126.7 L1195.5,125.0 L1191.1,123.4 L1186.6,121.8 L1182.2,120.2 L1177.6,118.5 L1173.1,116.9 L1168.6,115.3 L1164.0,113.6 L1159.4,112.0 L1154.8,110.4 L1150.2,108.8 L1145.5,107.1 L1140.9,105.5 L1136.2,103.9 L1131.5,102.2 L1126.8,100.6 L1122.0,99.0 L1117.3,97.4 L1112.5,95.7 L1107.7,94.1 L1103.0,92.5 L1098.1,90.9 L1093.3,89.2 L1088.5,87.6 L1083.6,86.0 L1078.7,84.3 L1073.9,82.7 L1069.0,81.1 L1064.0,79.5 L1059.1,77.8 L1054.2,76.2 L1049.2,74.6 L1044.3,72.9 L1039.3,71.3 L1034.3,69.7 L1029.4,68.1 L1024.4,66.4 L1019.3,64.8 L1014.3,63.2 L1009.3,61.5 L1004.3,59.9 L999.2,58.3 L994.2,56.7 L989.1,55.0 L984.1,53.4 L979.0,51.8 L973.9,50.2 L968.8,48.5 L963.8,46.9 L958.7,45.3 L953.6,43.6 L948.5,42.0 L943.4,40.4 L938.3,38.8 L933.2,37.1 L928.1,35.5 L923.0,33.9 L917.8,32.2 L912.7,30.6 L907.6,29.0 L902.5,27.4" stroke="#6a6a6a" stroke-width="2.4" stroke-linecap="round" stroke-dasharray="0 5.5" fill="none"/>
<text x="901.5" y="330.4" font-size="10.5" fill="#8c8c8c" text-anchor="middle">+0°</text>
<text x="803.8" y="330.4" font-size="10.5" fill="#8c8c8c" text-anchor="middle">+30°</text>
<text x="706.1" y="330.4" font-size="10.5" fill="#8c8c8c" text-anchor="middle">+60°</text>
<text x="608.5" y="330.4" font-size="10.5" fill="#8c8c8c" text-anchor="middle">+90°</text>
<text x="510.8" y="330.4" font-size="10.5" fill="#8c8c8c" text-anchor="middle">+120°</text>
<text x="413.1" y="330.4" font-size="10.5" fill="#8c8c8c" text-anchor="middle">+150°</text>
<text x="315.4" y="330.4" font-size="10.5" fill="#8c8c8c" text-anchor="middle">+180°</text>
<text x="1487.6" y="330.4" font-size="10.5" fill="#8c8c8c" text-anchor="middle">+180°</text>
<text x="1389.9" y="330.4" font-size="10.5" fill="#8c8c8c" text-anchor="middle">+210°</text>
<text x="1292.2" y="330.4" font-size="10.5" fill="#8c8c8c" text-anchor="middle">+240°</text>
<text x="1194.5" y="330.4" font-size="10.5" fill="#8c8c8c" text-anchor="middle">+270°</text>
<text x="1096.9" y="330.4" font-size="10.5" fill="#8c8c8c" text-anchor="middle">+300°</text>
<text x="999.2" y="330.4" font-size="10.5" fill="#8c8c8c" text-anchor="middle">+330°</text>
<text x="903.5" y="25.4" font-size="10.5" fill="#8c8c8c" text-anchor="middle">+90°</text>
<text x="903.5" y="123.0" font-size="10.5" fill="#8c8c8c" text-anchor="middle">+60°</text>
<text x="903.5" y="220.7" font-size="10.5" fill="#8c8c8c" text-anchor="middle">+30°</text>
<text x="903.5" y="428.1" font-size="10.5" fill="#8c8c8c" text-anchor="middle">−30°</text>
<text x="903.5" y="525.8" font-size="10.5" fill="#8c8c8c" text-anchor="middle">−60°</text>
<text x="903.5" y="623.4" font-size="10.5" fill="#8c8c8c" text-anchor="middle">−90°</text>
<path d="M724.7,275.7 724.0,274.4 723.3,273.2 722.5,271.9 721.8,270.6 721.2,269.4 720.5,268.1 719.8,266.8 719.1,265.6 718.5,264.3 717.8,263.1 717.2,261.8 716.5,260.6 715.9,259.3 715.3,258.1 714.6,256.8 714.0,255.6 713.4,254.3 712.8,253.1 712.3,251.9 711.7,250.6 711.1,249.4 710.5,248.2 710.0,246.9 709.4,245.7 708.9,244.5 708.4,243.3 707.8,242.1 707.3,240.9 706.8,239.6 706.3,238.4 705.8,237.2 705.3,236.0 704.8,234.8 704.3,233.6 703.8,232.4 703.4,231.3 702.9,230.1 702.4,228.9 702.0,227.7 701.6,226.5 701.1,225.4 700.7,224.2 700.3,223.0 699.8,221.9 699.4,220.7 699.0,219.6 698.6,218.4 698.2,217.3 697.8,216.2 697.4,215.0 697.0,213.9 696.6,212.8 696.2,211.7 695.9,210.6 695.5,209.5 695.1,208.3 694.7,207.3 694.4,206.2 694.0,205.1 693.6,204.0 693.3,202.9 692.9,201.9 692.6,200.8 692.2,199.7 691.9,198.7 691.5,197.6 691.2,196.6 690.8,195.6 690.5,194.6 690.1,193.5 689.8,192.5 689.4,191.5 689.1,190.5 688.7,189.6 688.4,188.6 688.0,187.6 687.6,186.6 687.3,185.7 686.9,184.7 686.6,183.8 686.2,182.9 685.8,182.0 685.4,181.0 685.1,180.1 684.7,179.3 684.3,178.4 683.9,177.5 683.5,176.6 683.1,175.8 682.6,174.9 682.2,174.1 681.8,173.3 681.3,172.5 680.9,171.7 680.4,170.9 679.9,170.1 679.5,169.3 679.0,168.6 678.5,167.8 677.9,167.1 677.4,166.4 676.9,165.7 676.3,165.0 675.7,164.3 675.1,163.6 674.5,163.0 673.9,162.3 673.3,161.7 672.6,161.1 672.0,160.5 671.3,159.9 670.6,159.3 669.9,158.8 669.1,158.3 668.3,157.7 667.6,157.2 666.8,156.7 665.9,156.2 665.1,155.8 664.2,155.3 663.3,154.9 662.4,154.5 661.4,154.1 660.4,153.7 659.4,153.3 658.4,153.0 657.4,152.7 656.3,152.4 655.2,152.1 654.0,151.8 652.9,151.5 651.7,151.3 650.4,151.1 649.2,150.9 647.9,150.7 646.5,150.5 645.2,150.3 643.8,150.2 642.4,150.1 640.9,150.0 639.4,149.9 637.9,149.9 636.4,149.8 634.8,149.8 633.2,149.8 631.5,149.8 629.8,149.8 628.1,149.9 626.3,150.0 624.5,150.0 622.7,150.1 620.8,150.3 618.9,150.4 617.0,150.6 615.0,150.8 613.0,151.0 610.9,151.2 608.8,151.4 606.7,151.7 604.6,151.9 602.4,152.2 600.1,152.5 597.9,152.8 595.6,153.2 593.3,153.5 590.9,153.9 588.5,154.3 586.1,154.7 583.6,155.1 581.1,155.6 578.6,156.0 576.1,156.5 573.5,157.0 570.9,157.5 568.2,158.0 565.5,158.5 562.8,159.1 560.1,159.6 557.3,160.2 554.5,160.8 551.7,161.4 548.9,162.0 546.0,162.7" fill="none" stroke="#ff2000" stroke-width="1.3" stroke-dasharray="1.3 2"/>
<path d="M723.5,305.5 722.4,304.4 721.4,303.2 720.3,302.1 719.2,301.0 718.2,299.8 717.1,298.7 716.1,297.6 715.1,296.4 714.0,295.3 713.0,294.2 712.0,293.0 711.0,291.9 710.0,290.8 709.0,289.6 708.0,288.5 707.1,287.4 706.1,286.3 705.1,285.2 704.2,284.0 703.2,282.9 702.3,281.8 701.4,280.7 700.4,279.6 699.5,278.5 698.6,277.4 697.7,276.2 696.8,275.1 695.9,274.0 695.0,272.9 694.1,271.8 693.2,270.7 692.4,269.6 691.5,268.5 690.7,267.5 689.8,266.4 689.0,265.3 688.1,264.2 687.3,263.1 686.5,262.0 685.7,261.0 684.9,259.9 684.0,258.8 683.3,257.7 682.5,256.7 681.7,255.6 680.9,254.6 680.1,253.5 679.3,252.4 678.6,251.4 677.8,250.3 677.1,249.3 676.3,248.3 675.6,247.2 674.8,246.2 674.1,245.2 673.4,244.1 672.7,243.1 672.0,242.1 671.2,241.1 670.5,240.1 669.8,239.1 669.1,238.1 668.4,237.1 667.7,236.1 667.1,235.1 666.4,234.1 665.7,233.1 665.0,232.1 664.4,231.2 663.7,230.2 663.0,229.2 662.4,228.3 661.7,227.3 661.0,226.4 660.4,225.4 659.7,224.5 659.1,223.6 658.4,222.6 657.8,221.7 657.1,220.8 656.5,219.9 655.9,219.0 655.2,218.1 654.6,217.2 653.9,216.3 653.3,215.4 652.7,214.6 652.0,213.7 651.4,212.9 650.7,212.0 650.1,211.2 649.5,210.3 648.8,209.5 648.2,208.7 647.5,207.8 646.9,207.0 646.2,206.2 645.6,205.4 644.9,204.7 644.2,203.9 643.6,203.1 642.9,202.3 642.2,201.6 641.6,200.8 640.9,200.1 640.2,199.4 639.5,198.7 638.8,198.0 638.1,197.2 637.4,196.6 636.7,195.9 635.9,195.2 635.2,194.5 634.5,193.9 633.7,193.2 633.0,192.6 632.2,192.0 631.4,191.4 630.7,190.7 629.9,190.1 629.1,189.6 628.3,189.0 627.4,188.4 626.6,187.9 625.8,187.3 624.9,186.8 624.0,186.3 623.2,185.8 622.3,185.3 621.4,184.8 620.4,184.3 619.5,183.8 618.6,183.4 617.6,182.9 616.6,182.5 615.6,182.1 614.6,181.7 613.6,181.3 612.5,180.9 611.5,180.6 610.4,180.2 609.3,179.9 608.2,179.5 607.1,179.2 605.9,178.9 604.8,178.6 603.6,178.4 602.4,178.1 601.1,177.9 599.9,177.6 598.6,177.4 597.3,177.2 596.0,177.0 594.7,176.8 593.3,176.6 592.0,176.5 590.6,176.3 589.1,176.2 587.7,176.1 586.2,176.0 584.8,175.9 583.2,175.8 581.7,175.8 580.2,175.7 578.6,175.7 577.0,175.7 575.3,175.7 573.7,175.7 572.0,175.7 570.3,175.8 568.6,175.8 566.8,175.9 565.1,176.0 563.3,176.1 561.4,176.2 559.6,176.3 557.7,176.4 555.8,176.6 553.9,176.8 552.0,176.9 550.0,177.1 548.0,177.3 546.0,177.6 543.9,177.8 541.9,178.0 539.8,178.3 537.7,178.6 535.5,178.9 533.4,179.2 531.2,179.5 529.0,179.8 526.7,180.1 524.5,180.5 522.2,180.8 519.9,181.2 517.6,181.6 515.3,182.0 512.9,182.4 510.5,182.8 508.1,183.3 505.7,183.7 503.2,184.2 500.8,184.7 498.3,185.1 495.8,185.6 493.3,186.1 490.7,186.7 488.1,187.2 485.6,187.7 483.0,188.3 480.4,188.8 477.7,189.4 475.1,190.0 472.4,190.6 469.7,191.2 467.1,191.8 464.3,192.4 461.6,193.1 458.9,193.7 456.1,194.4 453.4,195.0 450.6,195.7 447.8,196.4 445.0,197.1 442.2,197.8" fill="none" stroke="#ee88ee" stroke-width="1.3" stroke-dasharray="1.3 2"/>
<path d="M704.5,310.5 703.5,309.3 702.5,308.0 701.6,306.8 700.6,305.5 699.6,304.3 698.7,303.0 697.8,301.8 696.8,300.6 695.9,299.3 695.0,298.1 694.1,296.8 693.2,295.6 692.3,294.4 691.5,293.1 690.6,291.9 689.7,290.7 688.9,289.4 688.1,288.2 687.2,287.0 686.4,285.7 685.6,284.5 684.8,283.3 684.0,282.0 683.2,280.8 682.5,279.6 681.7,278.4 680.9,277.2 680.2,275.9 679.5,274.7 678.7,273.5 678.0,272.3 677.3,271.1 676.6,269.9 675.9,268.7 675.2,267.4 674.6,266.2 673.9,265.0 673.2,263.8 672.6,262.6 671.9,261.4 671.3,260.2 670.7,259.0 670.1,257.9 669.5,256.7 668.9,255.5 668.3,254.3 667.7,253.1 667.1,251.9 666.6,250.8 666.0,249.6 665.5,248.4 664.9,247.3 664.4,246.1 663.9,244.9 663.4,243.8 662.8,242.6 662.3,241.5 661.8,240.3 661.4,239.2 660.9,238.0 660.4,236.9 659.9,235.8 659.5,234.6 659.0,233.5 658.6,232.4 658.1,231.3 657.7,230.1 657.3,229.0 656.8,227.9 656.4,226.8 656.0,225.7 655.6,224.6 655.2,223.5 654.8,222.4 654.4,221.4 654.0,220.3 653.6,219.2 653.3,218.2 652.9,217.1 652.5,216.0 652.1,215.0 651.8,213.9 651.4,212.9 651.1,211.9 650.7,210.8 650.3,209.8 650.0,208.8 649.6,207.8 649.3,206.8 648.9,205.8 648.6,204.8 648.3,203.8 647.9,202.8 647.6,201.9 647.2,200.9 646.9,199.9 646.5,199.0 646.2,198.0 645.8,197.1 645.5,196.2 645.1,195.3 644.8,194.3 644.4,193.4 644.1,192.5 643.7,191.7 643.3,190.8 643.0,189.9 642.6,189.0 642.2,188.2 641.8,187.3 641.4,186.5 641.0,185.7 640.6,184.9 640.2,184.1 639.8,183.3 639.4,182.5 638.9,181.7 638.5,180.9 638.0,180.2 637.6,179.4 637.1,178.7 636.6,178.0 636.1,177.2 635.6,176.5 635.1,175.9 634.5,175.2 634.0,174.5 633.4,173.8 632.9,173.2 632.3,172.6 631.7,172.0 631.1,171.4 630.4,170.8 629.8,170.2 629.1,169.6 628.4,169.1 627.7,168.5 627.0,168.0 626.2,167.5 625.5,167.0 624.7,166.5 623.9,166.0 623.1,165.6 622.2,165.1 621.3,164.7 620.4,164.3 619.5,163.9 618.6,163.5 617.6,163.1 616.6,162.8 615.6,162.4 614.5,162.1 613.5,161.8 612.4,161.5 611.2,161.3 610.1,161.0 608.9,160.8 607.7,160.5 606.4,160.3 605.2,160.1 603.9,160.0 602.5,159.8 601.2,159.7 599.8,159.5 598.3,159.4 596.9,159.3" fill="none" stroke="#ee88ee" stroke-width="1.3" stroke-dasharray="1.3 2"/>
<path d="M462.3,238.5 463.3,237.0 464.4,235.5 465.5,234.0 466.6,232.5 467.8,231.0 468.9,229.5 470.1,228.0 471.4,226.5 472.6,225.0 473.9,223.5 475.2,222.0 476.5,220.5 477.9,219.0 479.3,217.5 480.7,216.0 482.1,214.6 483.6,213.1 485.0,211.6 486.5,210.1 488.1,208.6 489.6,207.1 491.2,205.7 492.8,204.2 494.4,202.7 496.0,201.3 497.7,199.8 499.4,198.3 501.1,196.9 502.8,195.4 504.6,193.9 506.3,192.5 508.1,191.0 509.9,189.6 511.7,188.1 513.6,186.7 515.4,185.2 517.3,183.8 519.2,182.4 521.1,180.9 523.0,179.5 525.0,178.1 526.9,176.6 528.9,175.2 530.9,173.8 532.9,172.4 534.9,171.0 537.0,169.6 539.0,168.2 541.1,166.8 543.1,165.4 545.2,164.0 547.3,162.6 549.4,161.2 551.5,159.9 553.6,158.5 555.7,157.1 557.9,155.8 560.0,154.4 562.1,153.1 564.3,151.7 566.4,150.4 568.6,149.0 570.7,147.7 572.9,146.4 575.0,145.1 577.2,143.8 579.3,142.5 581.5,141.2 583.6,139.9 585.8,138.6 587.9,137.4 590.0,136.1 592.1,134.9 594.2,133.6 596.3,132.4 598.4,131.2 600.4,130.0" fill="none" stroke="#55dd00" stroke-width="1.3" stroke-dasharray="1.3 2"/>
<path d="M728.3,233.2 728.4,231.7 728.5,230.2 728.6,228.7 728.7,227.2 728.9,225.6 729.0,224.1 729.2,222.6 729.3,221.1 729.5,219.6 729.7,218.1 729.9,216.6 730.1,215.1 730.3,213.6 730.6,212.1 730.8,210.6 731.1,209.2 731.3,207.7 731.6,206.2 731.9,204.7 732.2,203.2 732.5,201.7 732.8,200.2 733.1,198.8 733.4,197.3 733.8,195.8 734.1,194.3 734.5,192.9 734.8,191.4 735.2,189.9 735.6,188.5 736.0,187.0 736.4,185.5 736.8,184.1 737.2,182.6 737.6,181.2 738.0,179.7 738.5,178.3 738.9,176.8 739.4,175.4 739.8,174.0 740.3,172.5 740.8,171.1 741.2,169.7 741.7,168.3 742.2,166.8 742.7,165.4 743.2,164.0 743.7,162.6 744.2,161.2 744.7,159.8 745.2,158.4 745.8,157.0 746.3,155.6 746.8,154.3 747.4,152.9 747.9,151.5 748.4,150.2 749.0,148.8 749.5,147.5 750.1,146.1 750.6,144.8 751.1,143.4 751.7,142.1 752.2,140.8 752.8,139.5 753.3,138.2 753.9,136.9 754.4,135.6 754.9,134.3 755.5,133.1 756.0,131.8 756.5,130.6 757.0,129.3 757.5,128.1 758.0,126.9 758.5,125.7 759.0,124.5 759.5,123.3 759.9,122.1 760.4,120.9 760.8,119.8 761.2,118.7 761.6,117.5 762.0,116.4 762.4,115.3 762.8,114.3 763.1,113.2 763.4,112.2 763.7,111.1 764.0,110.1 764.2,109.2 764.4,108.2 764.6,107.2 764.8,106.3 764.9,105.4 765.0,104.5 765.0,103.7 765.0,102.9 765.0,102.0 764.9,101.3 764.8,100.5 764.7,99.8 764.4,99.1 764.2,98.4 763.9,97.8 763.5,97.2 763.0,96.6 762.5,96.1 762.0,95.6 761.4,95.1 760.7,94.6 759.9,94.2 759.1,93.9 758.1,93.5 757.2,93.2 756.1,93.0 754.9,92.8 753.7,92.6 752.4,92.4 751.0,92.3 749.5,92.3 747.9,92.3 746.2,92.3 744.4,92.3 742.6,92.4 740.6,92.6 738.6,92.7 736.4,93.0 734.2,93.2 731.9,93.5 729.5,93.8 726.9,94.2 724.3,94.6 721.7,95.0 718.9,95.5 716.0,96.0 713.1,96.5 710.0,97.1 706.9,97.7 703.7,98.4 700.5,99.0 697.1,99.7 693.7,100.4 690.2,101.2 686.6,102.0 683.0,102.8 679.3,103.6 675.6,104.4" fill="none" stroke="#dd22ee" stroke-width="1.3" stroke-dasharray="1.3 2"/>
<path d="M726.7,266.7 726.6,265.2 726.4,263.6 726.3,262.1 726.2,260.6 726.1,259.1 726.1,257.5 726.0,256.0 725.9,254.5 725.9,253.0 725.9,251.4 725.8,249.9 725.8,248.4 725.8,246.9 725.9,245.4 725.9,243.8 725.9,242.3 726.0,240.8 726.0,239.3 726.1,237.8 726.2,236.3 726.3,234.8 726.4,233.2 726.5,231.7 726.6,230.2 726.8,228.7 726.9,227.2 727.1,225.7 727.2,224.2 727.4,222.7 727.6,221.2 727.8,219.7 728.0,218.2 728.3,216.7 728.5,215.2 728.7,213.7 729.0,212.2 729.3,210.7 729.5,209.2 729.8,207.7 730.1,206.2 730.4,204.7 730.7,203.2 731.1,201.8 731.4,200.3 731.7,198.8 732.1,197.3 732.5,195.8 732.8,194.4 733.2,192.9 733.6,191.4 734.0,190.0 734.4,188.5 734.8,187.0 735.2,185.6 735.7,184.1 736.1,182.7 736.6,181.2 737.0,179.8 737.5,178.3 738.0,176.9 738.4,175.4 738.9,174.0 739.4,172.5 739.9,171.1 740.4,169.7 740.9,168.3 741.4,166.8 742.0,165.4 742.5,164.0 743.0,162.6 743.6,161.2 744.1,159.8 744.7,158.4 745.2,157.0 745.8,155.6 746.4,154.2 746.9,152.8 747.5,151.5 748.1,150.1 748.6,148.7 749.2,147.4 749.8,146.0 750.4,144.7 750.9,143.3 751.5,142.0 752.1,140.7 752.7,139.4 753.3,138.1 753.8,136.8 754.4,135.5 755.0,134.2 755.6,132.9 756.1,131.6 756.7,130.4 757.2,129.1 757.8,127.9 758.3,126.6 758.9,125.4 759.4,124.2 759.9,123.0 760.4,121.8 760.9,120.6 761.4,119.5 761.9,118.3 762.3,117.2 762.8,116.1 763.2,115.0 763.6,113.9 764.0,112.8 764.3,111.7 764.7,110.7 765.0,109.7 765.3,108.7 765.6,107.7 765.8,106.7 766.0,105.7 766.2,104.8 766.4,103.9 766.5,103.0 766.6,102.2 766.6,101.3 766.6,100.5 766.5,99.8 766.5,99.0 766.3,98.3 766.1,97.6 765.9,96.9 765.6,96.3 765.2,95.7 764.8,95.1 764.3,94.6 763.8,94.1 763.1,93.6 762.4,93.2 761.7,92.8 760.9,92.4 759.9,92.1 758.9,91.8 757.9,91.5 756.7,91.3 755.5,91.2 754.1,91.0 752.7,90.9 751.2,90.9 749.6,90.9 747.9,90.9 746.1,91.0 744.2,91.1 742.2,91.2 740.1,91.4 738.0,91.6 735.7,91.9 733.3,92.2" fill="none" stroke="#ff2000" stroke-width="1.3" stroke-dasharray="1.3 2"/>
<path d="M711.7,269.7 711.3,268.3 710.9,266.9 710.5,265.5 710.2,264.1 709.8,262.6 709.4,261.2 709.1,259.8 708.8,258.4 708.5,257.0 708.2,255.6 707.9,254.2 707.6,252.8 707.3,251.4 707.0,250.0 706.8,248.6 706.5,247.2 706.3,245.9 706.1,244.5 705.9,243.1 705.7,241.7 705.5,240.3 705.3,238.9 705.1,237.5 704.9,236.2 704.8,234.8 704.6,233.4 704.5,232.0 704.4,230.7 704.3,229.3 704.2,227.9 704.1,226.6 704.0,225.2 703.9,223.8 703.8,222.5 703.8,221.1 703.7,219.8 703.7,218.4 703.6,217.1 703.6,215.7 703.6,214.4 703.6,213.1 703.6,211.7 703.6,210.4 703.6,209.1 703.6,207.7 703.6,206.4 703.7,205.1 703.7,203.8 703.8,202.5 703.8,201.2 703.9,199.9 704.0,198.6 704.0,197.3 704.1,196.0 704.2,194.7 704.3,193.4 704.4,192.1 704.5,190.8 704.6,189.6 704.7,188.3 704.9,187.0 705.0,185.8 705.1,184.5 705.3,183.3 705.4,182.1 705.5,180.8 705.7,179.6 705.8,178.4 706.0,177.1 706.1,175.9 706.3,174.7 706.4,173.5 706.6,172.3 706.8,171.2 706.9,170.0 707.1,168.8 707.2,167.6 707.4,166.5 707.5,165.3 707.7,164.2 707.8,163.1 708.0,161.9 708.1,160.8 708.3,159.7 708.4,158.6 708.5,157.5 708.7,156.4 708.8,155.4 708.9,154.3 709.0,153.3 709.1,152.2 709.2,151.2 709.3,150.2 709.4,149.2 709.4,148.2 709.5,147.2 709.5,146.2 709.6,145.3 709.6,144.3 709.6,143.4 709.6,142.5 709.5,141.6 709.5,140.7 709.4,139.8 709.4,138.9 709.3,138.1 709.1,137.3 709.0,136.4 708.8,135.6 708.7,134.9 708.5,134.1 708.2,133.3 708.0,132.6 707.7,131.9 707.4,131.2 707.0,130.5 706.7,129.9 706.3,129.2 705.8,128.6 705.4,128.0 704.9,127.4 704.3,126.9 703.8,126.4 703.1,125.8 702.5,125.3 701.8,124.9 701.1,124.4 700.3,124.0 699.5,123.6 698.6,123.2 697.7,122.9 696.8,122.6 695.8,122.3 694.7,122.0 693.6,121.7 692.4,121.5 691.2,121.3 690.0,121.1 688.7,121.0 687.3,120.8 685.9,120.7 684.4,120.7 682.9,120.6 681.3,120.6 679.7,120.6 678.0,120.6 676.3,120.7 674.4,120.8 672.6,120.9 670.7,121.0 668.7,121.2 666.6,121.4 664.5,121.6 662.4,121.8 660.2,122.1 657.9,122.4 655.6,122.7" fill="none" stroke="#ff2000" stroke-width="1.3" stroke-dasharray="1.3 2"/>
<path d="M718.7,252.7 718.2,251.4 717.6,250.1 717.1,248.9 716.6,247.6 716.1,246.3 715.6,245.0 715.1,243.8 714.6,242.5 714.1,241.2 713.7,240.0 713.2,238.7 712.7,237.5 712.3,236.2 711.9,235.0 711.4,233.7 711.0,232.5 710.6,231.2 710.2,230.0 709.8,228.8 709.4,227.5 709.0,226.3 708.6,225.1 708.2,223.9 707.8,222.7 707.5,221.4 707.1,220.2 706.7,219.0 706.4,217.8 706.0,216.6 705.7,215.4 705.4,214.3 705.0,213.1 704.7,211.9 704.4,210.7 704.1,209.6 703.7,208.4 703.4,207.2 703.1,206.1 702.8,204.9 702.5,203.8 702.2,202.6 702.0,201.5 701.7,200.4 701.4,199.3 701.1,198.2 700.8,197.0 700.5,195.9 700.3,194.8 700.0,193.7 699.7,192.7 699.4,191.6 699.2,190.5 698.9,189.5 698.6,188.4 698.3,187.3 698.1,186.3 697.8,185.3 697.5,184.2 697.2,183.2 697.0,182.2 696.7,181.2 696.4,180.2 696.1,179.2 695.8,178.2 695.5,177.3 695.2,176.3 694.9,175.4 694.6,174.4 694.3,173.5 694.0,172.6 693.7,171.7 693.3,170.8 693.0,169.9 692.6,169.0 692.3,168.1 691.9,167.3 691.5,166.4 691.2,165.6 690.8,164.8 690.4,164.0 689.9,163.2 689.5,162.4 689.1,161.6 688.6,160.8 688.1,160.1 687.7,159.4 687.2,158.6 686.6,157.9 686.1,157.2 685.6,156.6 685.0,155.9 684.4,155.2 683.8,154.6 683.2,154.0 682.6,153.4 681.9,152.8 681.2,152.2 680.5,151.7 679.8,151.1 679.0,150.6 678.3,150.1 677.5,149.6 676.6,149.1 675.8,148.7 674.9,148.2 674.0,147.8 673.1,147.4 672.1,147.0 671.1,146.7" fill="none" stroke="#ff2000" stroke-width="1.3" stroke-dasharray="1.3 2"/>
<path d="M726.7,266.7 726.7,265.1 726.8,263.5 726.9,262.0 726.9,260.4 727.0,258.8 727.1,257.2 727.2,255.6 727.4,254.1 727.5,252.5 727.7,250.9 727.8,249.3 728.0,247.7 728.2,246.2 728.4,244.6 728.6,243.0 728.8,241.4 729.1,239.9 729.3,238.3 729.6,236.7 729.8,235.1 730.1,233.6 730.4,232.0 730.7,230.4 731.1,228.8 731.4,227.3 731.7,225.7 732.1,224.1 732.5,222.6 732.9,221.0 733.2,219.4 733.7,217.9 734.1,216.3 734.5,214.7 734.9,213.2 735.4,211.6 735.8,210.0 736.3,208.5 736.8,206.9 737.3,205.3 737.8,203.8 738.3,202.2 738.8,200.7 739.4,199.1 739.9,197.5 740.5,196.0 741.1,194.4 741.6,192.9 742.2,191.3 742.8,189.8 743.5,188.2 744.1,186.7 744.7,185.1 745.3,183.6 746.0,182.0 746.7,180.5 747.3,178.9 748.0,177.4 748.7,175.9 749.4,174.3 750.1,172.8 750.8,171.3 751.5,169.7 752.3,168.2 753.0,166.7 753.8,165.1 754.5,163.6 755.3,162.1 756.1,160.6 756.9,159.0 757.7,157.5 758.4,156.0 759.3,154.5 760.1,153.0 760.9,151.5 761.7,150.0 762.5,148.5 763.4,147.0 764.2,145.5 765.1,144.0 765.9,142.5 766.8,141.0 767.7,139.5 768.5,138.1 769.4,136.6 770.3,135.1 771.2,133.7 772.0,132.2 772.9,130.7 773.8,129.3 774.7,127.8 775.6,126.4 776.5,125.0 777.4,123.5 778.3,122.1 779.2,120.7 780.1,119.3 781.0,117.9 781.9,116.5 782.7,115.1 783.6,113.7 784.5,112.3 785.4,111.0 786.3,109.6 787.1,108.3 788.0,106.9 788.8,105.6 789.7,104.3 790.5,103.0 791.3,101.7 792.1,100.4 792.9,99.1 793.7,97.9 794.4,96.7 795.2,95.4 795.9,94.2 796.6,93.1 797.2,91.9 797.9,90.7 798.5,89.6 799.1,88.5 799.6,87.4 800.1,86.4 800.6,85.4 801.0,84.4 801.4,83.4 801.7,82.4 802.0,81.5 802.2,80.7 802.4,79.8 802.4,79.0 802.5,78.2 802.4,77.5 802.3,76.8 802.0,76.2 801.7,75.6 801.3,75.1 800.8,74.6 800.2,74.1 799.4,73.7 798.6,73.4 797.6,73.1 796.5,72.9 795.3,72.7 793.9,72.6 792.4,72.5 790.8,72.5 789.0,72.6 787.1,72.7 785.1,72.9 782.9,73.1 780.5,73.4 778.0,73.7 775.4,74.1 772.6,74.5 769.7,75.0 766.7,75.6 763.6,76.2 760.3,76.8 756.9,77.5 753.3,78.2" fill="none" stroke="#ff2000" stroke-width="1.3" stroke-dasharray="1.3 2"/>
<path d="M726.7,266.7 726.7,265.1 726.7,263.6 726.7,262.0 726.7,260.4 726.7,258.9 726.7,257.3 726.8,255.7 726.8,254.2 726.9,252.6 727.0,251.0 727.1,249.5 727.2,247.9 727.3,246.3 727.4,244.8 727.6,243.2 727.7,241.7 727.9,240.1 728.1,238.5 728.3,237.0 728.5,235.4 728.7,233.9 728.9,232.3 729.2,230.8 729.4,229.2 729.7,227.6 730.0,226.1 730.2,224.5 730.5,223.0 730.8,221.4 731.2,219.9 731.5,218.3 731.8,216.8 732.2,215.2 732.6,213.7 732.9,212.1 733.3,210.6 733.7,209.1 734.1,207.5 734.6,206.0 735.0,204.4 735.4,202.9 735.9,201.3 736.3,199.8 736.8,198.3 737.3,196.7 737.8,195.2 738.3,193.7 738.8,192.1 739.3,190.6 739.9,189.1 740.4,187.6 741.0,186.0 741.5,184.5 742.1,183.0 742.7,181.5 743.3,180.0 743.9,178.4 744.5,176.9 745.1,175.4 745.7,173.9 746.3,172.4 747.0,170.9 747.6,169.4 748.3,167.9 749.0,166.4 749.6,164.9 750.3,163.4 751.0,161.9 751.7,160.4 752.4,159.0 753.1,157.5 753.8,156.0 754.5,154.5 755.3,153.1 756.0,151.6 756.7,150.1 757.5,148.7 758.2,147.2 759.0,145.8 759.7,144.3 760.5,142.9 761.3,141.4 762.0,140.0 762.8,138.6 763.6,137.1 764.3,135.7 765.1,134.3 765.9,132.9 766.7,131.5 767.5,130.1 768.2,128.7 769.0,127.3 769.8,126.0 770.6,124.6 771.3,123.2 772.1,121.9 772.9,120.5 773.6,119.2 774.4,117.9 775.1,116.6 775.9,115.3 776.6,114.0 777.4,112.7 778.1,111.4 778.8,110.1 779.5,108.9 780.2,107.7 780.8,106.4 781.5,105.2 782.1,104.0 782.7,102.8 783.3,101.7 783.9,100.5 784.5,99.4 785.0,98.3 785.5,97.2 786.0,96.2 786.4,95.1 786.8,94.1 787.2,93.1 787.5,92.1 787.8,91.2 788.0,90.2 788.2,89.4 788.4,88.5 788.5,87.7 788.5,86.9 788.5,86.1 788.4,85.4 788.3,84.7 788.1,84.0 787.8,83.4 787.4,82.8 786.9,82.3 786.4,81.8 785.7,81.3 785.0,80.9 784.2,80.6 783.3,80.3 782.2,80.0" fill="none" stroke="#ff2000" stroke-width="1.3" stroke-dasharray="1.3 2"/>
<path d="M719.5,317.5 719.2,315.9 719.0,314.3 718.7,312.7 718.5,311.1 718.3,309.5 718.1,307.9 717.9,306.3 717.7,304.7 717.5,303.0 717.4,301.4 717.3,299.8 717.1,298.2 717.0,296.6 716.9,295.0 716.8,293.4 716.8,291.8 716.7,290.2 716.7,288.6 716.7,287.0 716.6,285.4 716.7,283.8 716.7,282.2 716.7,280.6 716.7,279.0 716.8,277.4 716.9,275.8 716.9,274.2 717.0,272.6 717.2,271.0 717.3,269.3 717.4,267.7 717.6,266.1 717.7,264.5 717.9,262.9 718.1,261.3 718.3,259.7 718.5,258.1 718.8,256.5 719.0,254.9 719.3,253.3 719.6,251.7 719.8,250.1 720.1,248.5 720.5,246.9 720.8,245.3 721.1,243.7 721.5,242.1 721.8,240.5 722.2,238.9 722.6,237.3 723.0,235.7 723.4,234.1 723.9,232.5 724.3,230.9 724.8,229.3 725.2,227.7 725.7,226.1 726.2,224.5 726.7,222.9 727.3,221.3 727.8,219.7 728.3,218.1 728.9,216.5 729.5,215.0 730.1,213.4 730.7,211.8 731.3,210.2 731.9,208.6 732.5,207.0 733.2,205.4 733.8,203.8 734.5,202.2 735.2,200.6 735.9,199.0 736.6,197.4 737.3,195.9 738.0,194.3 738.8,192.7 739.5,191.1 740.3,189.5 741.0,187.9 741.8,186.3 742.6,184.8 743.4,183.2 744.2,181.6 745.1,180.0 745.9,178.4 746.8,176.9 747.6,175.3 748.5,173.7 749.4,172.1 750.3,170.5 751.2,169.0 752.1,167.4 753.0,165.8 753.9,164.3 754.9,162.7 755.8,161.1 756.8,159.6 757.7,158.0 758.7,156.4 759.7,154.9 760.7,153.3 761.7,151.7 762.7,150.2 763.7,148.6 764.7,147.1 765.8,145.5 766.8,144.0 767.8,142.4 768.9,140.9 770.0,139.3 771.0,137.8 772.1,136.2 773.2,134.7 774.3,133.2 775.4,131.6 776.5,130.1 777.6,128.6 778.7,127.1 779.8,125.5 780.9,124.0 782.0,122.5 783.1,121.0 784.3,119.5 785.4,118.0 786.5,116.5 787.7,115.0 788.8,113.5 789.9,112.0 791.1,110.6 792.2,109.1 793.4,107.6 794.5,106.2 795.6,104.7 796.8,103.3 797.9,101.8 799.0,100.4 800.1,99.0 801.3,97.5 802.4,96.1 803.5,94.7 804.6,93.4 805.6,92.0 806.7,90.6 807.8,89.3 808.8,87.9 809.8,86.6 810.8,85.3 811.8,84.0 812.8,82.8 813.7,81.5 814.6,80.3 815.5,79.1 816.3,77.9 817.1,76.7 817.9,75.6 818.6,74.5 819.3,73.4 819.9,72.3 820.4,71.3 820.9,70.4 821.3,69.4 821.6,68.5 821.9,67.7 822.0,66.9 822.1,66.2 822.0,65.5 821.8,64.8 821.5,64.3 821.0,63.8 820.4,63.3 819.7,63.0 818.8,62.7 817.7,62.4 816.4,62.3 815.0,62.2 813.3,62.2" fill="none" stroke="#ee88ee" stroke-width="1.3" stroke-dasharray="1.3 2"/>
<path d="M733.3,244.2 733.2,242.7 733.1,241.2 733.1,239.7 733.0,238.2 732.9,236.7 732.9,235.2 732.9,233.8 732.9,232.3 732.9,230.8 732.9,229.3 732.9,227.8 732.9,226.3 732.9,224.9 733.0,223.4 733.0,221.9 733.1,220.4 733.1,219.0 733.2,217.5 733.3,216.0 733.4,214.6 733.5,213.1 733.6,211.6 733.8,210.2 733.9,208.7 734.0,207.2 734.2,205.8 734.4,204.3 734.5,202.9 734.7,201.4 734.9,200.0 735.1,198.6 735.3,197.1 735.5,195.7 735.7,194.2 736.0,192.8 736.2,191.4 736.4,189.9 736.7,188.5 736.9,187.1 737.2,185.7 737.5,184.3 737.8,182.9 738.0,181.5 738.3,180.0 738.6,178.6 738.9,177.3 739.3,175.9 739.6,174.5 739.9,173.1 740.2,171.7 740.5,170.3 740.9,169.0 741.2,167.6 741.6,166.2 741.9,164.9 742.3,163.5 742.6,162.2 743.0,160.8 743.3,159.5 743.7,158.2 744.1,156.9 744.4,155.5 744.8,154.2 745.2,152.9 745.5,151.6 745.9,150.3 746.3,149.1 746.7,147.8 747.0,146.5 747.4,145.2 747.8,144.0 748.1,142.8 748.5,141.5 748.8,140.3 749.2,139.1 749.5,137.9 749.8,136.7 750.2,135.5 750.5,134.3 750.8,133.2 751.1,132.0 751.4,130.9 751.7,129.7 752.0,128.6 752.2,127.5 752.5,126.4 752.7,125.4 752.9,124.3 753.1,123.3 753.3,122.2" fill="none" stroke="#dd22ee" stroke-width="1.3" stroke-dasharray="1.3 2"/>
<path d="M726.7,266.7 726.5,265.2 726.2,263.7 726.0,262.2 725.8,260.7 725.6,259.2 725.4,257.8 725.2,256.3 725.0,254.8 724.9,253.3 724.7,251.8 724.6,250.3 724.5,248.9 724.4,247.4 724.3,245.9 724.2,244.4 724.1,242.9 724.0,241.5 724.0,240.0 723.9,238.5 723.9,237.0 723.8,235.6 723.8,234.1 723.8,232.6 723.8,231.2 723.8,229.7 723.8,228.2 723.9,226.8 723.9,225.3 724.0,223.8 724.0,222.4 724.1,220.9 724.2,219.5 724.3,218.0 724.4,216.6 724.5,215.1 724.6,213.7 724.8,212.2 724.9,210.8 725.0,209.3 725.2,207.9 725.4,206.5 725.6,205.0 725.7,203.6 725.9,202.2 726.1,200.7 726.3,199.3 726.6,197.9 726.8,196.5 727.0,195.1 727.3,193.6 727.5,192.2 727.8,190.8 728.1,189.4 728.3,188.0 728.6,186.6 728.9,185.2 729.2,183.8 729.5,182.4 729.8,181.1 730.1,179.7 730.5,178.3 730.8,176.9 731.1,175.6" fill="none" stroke="#ff2000" stroke-width="1.3" stroke-dasharray="1.3 2"/>
<path d="M726.7,266.7 726.8,265.1 726.9,263.5 727.1,261.9 727.2,260.3 727.4,258.7 727.5,257.1 727.7,255.5 727.9,254.0 728.1,252.4 728.4,250.8 728.6,249.2 728.9,247.6 729.1,246.0 729.4,244.4 729.7,242.8 730.0,241.2 730.3,239.6 730.6,238.1 730.9,236.5 731.3,234.9 731.7,233.3 732.0,231.7 732.4,230.1 732.8,228.5 733.2,226.9 733.6,225.3 734.1,223.8 734.5,222.2 735.0,220.6 735.4,219.0 735.9,217.4 736.4,215.8 736.9,214.3 737.4,212.7 738.0,211.1 738.5,209.5 739.0,207.9 739.6,206.4 740.2,204.8 740.8,203.2 741.4,201.6 742.0,200.0 742.6,198.5 743.2,196.9 743.9,195.3 744.5,193.7 745.2,192.2 745.8,190.6 746.5,189.0 747.2,187.4 747.9,185.9 748.6,184.3 749.3,182.7 750.1,181.2 750.8,179.6 751.6,178.0 752.3,176.5 753.1,174.9 753.9,173.3 754.7,171.8 755.5,170.2 756.3,168.7 757.1,167.1 757.9,165.5 758.8,164.0 759.6,162.4 760.5,160.9 761.4,159.3 762.2,157.8" fill="none" stroke="#ff2000" stroke-width="1.3" stroke-dasharray="1.3 2"/>
<path d="M719.5,317.5 719.3,315.9 719.2,314.2 719.0,312.6 718.9,311.0 718.7,309.3 718.6,307.7 718.5,306.1 718.4,304.5 718.4,302.8 718.3,301.2 718.3,299.6 718.3,297.9 718.2,296.3 718.2,294.7 718.3,293.0 718.3,291.4 718.3,289.8 718.4,288.2 718.5,286.5 718.6,284.9 718.7,283.3 718.8,281.6 718.9,280.0 719.0,278.4 719.2,276.7 719.4,275.1 719.5,273.5 719.7,271.9 720.0,270.2 720.2,268.6 720.4,267.0 720.7,265.3 720.9,263.7 721.2,262.1 721.5,260.4 721.8,258.8 722.2,257.2 722.5,255.6 722.8,253.9 723.2,252.3 723.6,250.7 724.0,249.0 724.4,247.4 724.8,245.8 725.2,244.2 725.7,242.5 726.1,240.9 726.6,239.3 727.1,237.6 727.6,236.0 728.1,234.4 728.6,232.8 729.2,231.1 729.7,229.5 730.3,227.9 730.9,226.3 731.4,224.6 732.0,223.0 732.7,221.4 733.3,219.8 733.9,218.1 734.6,216.5 735.3,214.9 735.9,213.3 736.6,211.6 737.3,210.0 738.0,208.4 738.8,206.8 739.5,205.1 740.3,203.5 741.0,201.9 741.8,200.3 742.6,198.6 743.4,197.0 744.2,195.4 745.0,193.8 745.9,192.2 746.7,190.5 747.6,188.9 748.5,187.3 749.3,185.7 750.2,184.1 751.1,182.4 752.1,180.8 753.0,179.2 753.9,177.6 754.9,176.0 755.8,174.3 756.8,172.7 757.8,171.1" fill="none" stroke="#ee88ee" stroke-width="1.3" stroke-dasharray="1.3 2"/>
<path d="M719.5,317.5 720.0,315.9 720.6,314.4 721.1,312.8 721.7,311.2 722.3,309.7 722.9,308.1 723.5,306.5 724.1,305.0 724.8,303.4 725.4,301.8 726.1,300.3 726.8,298.7 727.4,297.1 728.1,295.6 728.8,294.0 729.6,292.4 730.3,290.9 731.1,289.3 731.8,287.7 732.6,286.2 733.4,284.6 734.2,283.0 735.0,281.5 735.8,279.9 736.6,278.3 737.5,276.8 738.3,275.2 739.2,273.6 740.1,272.1 740.9,270.5 741.8,269.0 742.7,267.4 743.7,265.8 744.6,264.3 745.5,262.7 746.5,261.2 747.5,259.6 748.4,258.0 749.4,256.5 750.4,254.9 751.4,253.4 752.4,251.8 753.5,250.3 754.5,248.7 755.6,247.1 756.6,245.6 757.7,244.0 758.8,242.5 759.8,240.9 760.9,239.4 762.0,237.8 763.2,236.3 764.3,234.7 765.4,233.2 766.6,231.6 767.7,230.1 768.9,228.5 770.0,227.0 771.2,225.5 772.4,223.9 773.6,222.4 774.8,220.8 776.0,219.3 777.2,217.8 778.5,216.2 779.7,214.7 781.0,213.2 782.2,211.6 783.5,210.1 784.7,208.6 786.0,207.0 787.3,205.5 788.6,204.0 789.9,202.4 791.2,200.9 792.5,199.4 793.8,197.9 795.1,196.4 796.4,194.8 797.8,193.3" fill="none" stroke="#ee88ee" stroke-width="1.3" stroke-dasharray="1.3 2"/>
<path d="M462.3,238.5 464.2,236.9 466.2,235.2 468.2,233.6 470.2,232.0 472.2,230.3 474.3,228.7 476.4,227.1 478.6,225.4 480.8,223.8 483.0,222.2 485.2,220.6 487.5,218.9 489.8,217.3 492.2,215.7 494.6,214.0 497.0,212.4 499.4,210.8 501.9,209.1 504.4,207.5 506.9,205.9 509.5,204.2 512.0,202.6 514.7,201.0 517.3,199.4 520.0,197.7 522.7,196.1 525.4,194.5 528.2,192.8 531.0,191.2 533.8,189.6 536.7,187.9 539.5,186.3 542.4,184.7 545.4,183.1 548.3,181.4 551.3,179.8 554.3,178.2 557.4,176.5 560.4,174.9 563.5,173.3 566.6,171.6 569.8,170.0 573.0,168.4 576.2,166.8 579.4,165.1 582.6,163.5 585.9,161.9 589.2,160.2 592.5,158.6 595.8,157.0 599.2,155.4 602.6,153.7 606.0,152.1 609.4,150.5 612.8,148.8 616.3,147.2 619.8,145.6 623.3,144.0 626.9,142.3 630.4,140.7 634.0,139.1 637.6,137.4 641.2,135.8 644.8,134.2 648.5,132.6 652.2,130.9 655.9,129.3 659.6,127.7 663.3,126.1 667.0,124.4 670.8,122.8 674.6,121.2 678.4,119.6 682.2,117.9 686.0,116.3 689.9,114.7 693.7,113.1 697.6,111.5 701.5,109.8 705.4,108.2 709.3,106.6 713.2,105.0 717.2,103.3 721.1,101.7 725.1,100.1 729.1,98.5 733.1,96.9 737.1,95.3 741.1,93.6 745.1,92.0 749.1,90.4 753.2,88.8 757.2,87.2 761.3,85.6 765.4,84.0 769.4,82.4 773.5,80.8 777.6,79.2 781.7,77.6 785.8,76.0 789.9,74.4 793.9,72.8 798.0,71.2 802.1,69.6 806.2,68.0 810.3,66.4 814.4,64.8 818.5,63.3 822.6,61.7 826.7,60.1 830.7,58.6 834.8,57.0 838.8,55.5 842.8,54.0 846.7,52.5 850.7,51.0 854.6,49.5 858.4,48.1 862.2,46.7" fill="none" stroke="#55dd00" stroke-width="1.3" stroke-dasharray="1.3 2"/>
<path d="M719.5,317.5 719.5,315.9 719.5,314.2 719.5,312.6 719.6,311.0 719.6,309.3 719.7,307.7 719.8,306.1 719.9,304.4 720.0,302.8 720.1,301.2 720.2,299.5 720.4,297.9 720.5,296.3 720.7,294.6 720.9,293.0 721.1,291.4 721.3,289.7 721.6,288.1 721.8,286.5 722.1,284.8 722.3,283.2 722.6,281.6 722.9,279.9 723.3,278.3 723.6,276.7 723.9,275.0 724.3,273.4 724.7,271.8 725.0,270.1 725.4,268.5 725.9,266.9 726.3,265.2 726.7,263.6 727.2,262.0 727.6,260.3 728.1,258.7 728.6,257.1 729.1,255.4 729.6,253.8 730.2,252.2 730.7,250.5 731.3,248.9 731.8,247.3 732.4,245.6 733.0,244.0 733.6,242.4 734.3,240.7 734.9,239.1 735.5,237.5 736.2,235.8 736.9,234.2 737.6,232.6 738.3,230.9 739.0,229.3 739.7,227.7 740.4,226.0 741.2,224.4 742.0,222.8 742.7,221.1 743.5,219.5 744.3,217.9 745.1,216.2 746.0,214.6 746.8,213.0 747.6,211.3 748.5,209.7 749.4,208.1 750.3,206.4 751.2,204.8 752.1,203.2 753.0,201.5 753.9,199.9 754.8,198.3 755.8,196.6 756.8,195.0 757.7,193.4 758.7,191.7 759.7,190.1 760.7,188.5 761.7,186.8 762.8,185.2 763.8,183.6 764.9,181.9 765.9,180.3 767.0,178.7 768.1,177.0 769.2,175.4 770.3,173.8 771.4,172.1 772.5,170.5 773.6,168.9 774.8,167.2 775.9,165.6 777.1,164.0 778.3,162.3 779.5,160.7 780.6,159.1 781.8,157.4 783.1,155.8 784.3,154.2 785.5,152.5 786.7,150.9 788.0,149.3 789.2,147.6 790.5,146.0 791.8,144.4 793.0,142.7 794.3,141.1 795.6,139.5 796.9,137.8 798.2,136.2 799.6,134.6 800.9,132.9 802.2,131.3 803.6,129.7 804.9,128.1 806.3,126.4 807.6,124.8 809.0,123.2 810.4,121.5 811.8,119.9 813.2,118.3 814.6,116.6 816.0,115.0 817.4,113.4 818.8,111.7 820.2,110.1 821.7,108.5 823.1,106.8 824.6,105.2 826.0,103.6 827.5,101.9 828.9,100.3 830.4,98.7 831.9,97.1 833.4,95.4 834.8,93.8 836.3,92.2 837.8,90.5 839.3,88.9 840.8,87.3 842.3,85.6 843.8,84.0 845.4,82.4 846.9,80.8 848.4,79.1 849.9,77.5 851.5,75.9 853.0,74.2 854.5,72.6 856.1,71.0 857.6,69.4 859.2,67.7 860.7,66.1 862.3,64.5 863.8,62.9 865.4,61.2 866.9,59.6 868.5,58.0 870.0,56.4 871.6,54.8 873.2,53.2 874.7,51.5 876.3,49.9 877.8,48.3 879.4,46.7 880.9,45.1 882.5,43.6 884.0,42.0 885.5,40.4 887.0,38.9 888.4,37.4 889.8,35.9 891.1,34.5 892.1,33.3 892.8,32.2 892.6,31.6 891.1,31.6" fill="none" stroke="#ee88ee" stroke-width="1.3" stroke-dasharray="1.3 2"/>
<path d="M719.5,317.5 719.3,315.9 719.2,314.3 719.0,312.7 718.9,311.0 718.8,309.4 718.7,307.8 718.6,306.2 718.5,304.6 718.4,303.0 718.4,301.3 718.3,299.7 718.3,298.1 718.3,296.5 718.3,294.9 718.3,293.3 718.4,291.6 718.4,290.0 718.5,288.4 718.6,286.8 718.7,285.2 718.8,283.6 718.9,281.9 719.0,280.3 719.1,278.7 719.3,277.1 719.5,275.5 719.7,273.9 719.9,272.3 720.1,270.6 720.3,269.0 720.5,267.4 720.8,265.8 721.1,264.2 721.3,262.6 721.6,260.9 721.9,259.3 722.3,257.7 722.6,256.1 722.9,254.5 723.3,252.9 723.7,251.3 724.1,249.6 724.5,248.0 724.9,246.4 725.3,244.8 725.7,243.2 726.2,241.6 726.7,240.0 727.1,238.3 727.6,236.7 728.1,235.1 728.7,233.5 729.2,231.9 729.7,230.3 730.3,228.7 730.9,227.1 731.5,225.4 732.1,223.8 732.7,222.2 733.3,220.6 733.9,219.0 734.6,217.4 735.2,215.8 735.9,214.2 736.6,212.6 737.3,210.9 738.0,209.3 738.7,207.7 739.4,206.1 740.2,204.5 740.9,202.9 741.7,201.3 742.5,199.7 743.3,198.1 744.1,196.5 744.9,194.8 745.7,193.2 746.6,191.6 747.4,190.0 748.3,188.4 749.1,186.8 750.0,185.2 750.9,183.6 751.8,182.0 752.7,180.4 753.7,178.8 754.6,177.2 755.6,175.6 756.5,174.0 757.5,172.4 758.5,170.8 759.4,169.2 760.4,167.6 761.5,166.0 762.5,164.4 763.5,162.8 764.5,161.2 765.6,159.6 766.7,158.0 767.7,156.4 768.8,154.8 769.9,153.2 771.0,151.6 772.1,150.0 773.2,148.4 774.3,146.8 775.4,145.2 776.6,143.6 777.7,142.0 778.9,140.4 780.1,138.8 781.2,137.3 782.4,135.7 783.6,134.1 784.8,132.5 786.0,130.9 787.2,129.3 788.4,127.8 789.6,126.2 790.9,124.6 792.1,123.0 793.3,121.5 794.6,119.9 795.8,118.3 797.1,116.7 798.3,115.2 799.6,113.6 800.9,112.0 802.2,110.5 803.4,108.9 804.7,107.4 806.0,105.8 807.3,104.3 808.6,102.7 809.9,101.2 811.2,99.7 812.5,98.1 813.8,96.6 815.1,95.1 816.4,93.5 817.7,92.0 819.0,90.5 820.3,89.0 821.6,87.5 822.9,86.0 824.2,84.5 825.5,83.1 826.7,81.6 828.0,80.1 829.3,78.7 830.5,77.2 831.7,75.8 833.0,74.4 834.2,73.0 835.4,71.6 836.5,70.3 837.7,68.9 838.8,67.6 839.9,66.3 840.9,65.0 841.9,63.7 842.9,62.5 843.8,61.3 844.6,60.2 845.4,59.1 846.1,58.0 846.7,57.0 847.1,56.0 847.5,55.1 847.8,54.3 847.9,53.5 847.8,52.9 847.5,52.3 847.1,51.8 846.4,51.4 845.4,51.1 844.2,51.0 842.8,50.9 841.0,50.9 839.0,51.1 836.6,51.4 834.0,51.7 831.1,52.2" fill="none" stroke="#ee88ee" stroke-width="1.3" stroke-dasharray="1.3 2"/>
<path d="M726.7,266.7 727.0,265.1 727.3,263.4 727.7,261.8 728.0,260.2 728.4,258.5 728.7,256.9 729.1,255.3 729.5,253.6 730.0,252.0 730.4,250.4 730.8,248.7 731.3,247.1 731.7,245.5 732.2,243.8 732.7,242.2 733.2,240.6 733.7,239.0 734.3,237.3 734.8,235.7 735.4,234.1 735.9,232.4 736.5,230.8 737.1,229.2 737.7,227.5 738.4,225.9 739.0,224.3 739.6,222.6 740.3,221.0 741.0,219.4 741.6,217.7 742.3,216.1 743.1,214.5 743.8,212.9 744.5,211.2 745.2,209.6 746.0,208.0 746.8,206.3 747.5,204.7 748.3,203.1 749.1,201.4 750.0,199.8 750.8,198.2 751.6,196.6 752.5,194.9 753.3,193.3 754.2,191.7 755.1,190.0 756.0,188.4 756.9,186.8 757.8,185.2 758.7,183.5 759.7,181.9 760.6,180.3 761.6,178.6 762.5,177.0 763.5,175.4 764.5,173.8 765.5,172.1 766.5,170.5 767.5,168.9 768.6,167.3 769.6,165.6 770.7,164.0 771.7,162.4 772.8,160.8 773.9,159.1 775.0,157.5 776.1,155.9 777.2,154.3 778.3,152.6 779.4,151.0 780.5,149.4 781.7,147.8 782.8,146.2 784.0,144.5 785.2,142.9 786.4,141.3 787.5,139.7 788.7,138.1 789.9,136.4 791.2,134.8 792.4,133.2 793.6,131.6 794.8,130.0 796.1,128.4 797.3,126.7 798.6,125.1 799.8,123.5 801.1,121.9 802.4,120.3 803.7,118.7 805.0,117.1 806.3,115.5 807.6,113.9 808.9,112.3 810.2,110.7 811.5,109.0 812.8,107.4 814.1,105.8 815.5,104.2 816.8,102.7 818.2,101.1 819.5,99.5 820.9,97.9 822.2,96.3 823.6,94.7 824.9,93.1 826.3,91.5 827.7,90.0 829.0,88.4 830.4,86.8 831.8,85.2 833.1,83.7 834.5,82.1 835.9,80.6 837.2,79.0 838.6,77.5 840.0,75.9 841.3,74.4 842.7,72.9 844.0,71.3 845.4,69.8 846.7,68.3 848.0,66.8 849.3,65.4 850.6,63.9 851.9,62.5 853.1,61.0 854.3,59.6 855.5,58.2 856.7,56.9 857.8,55.6" fill="none" stroke="#ff2000" stroke-width="1.3" stroke-dasharray="1.3 2"/>
<path d="M733.3,244.2 733.8,242.6 734.4,240.9 735.0,239.3 735.5,237.7 736.1,236.1 736.7,234.4 737.3,232.8 738.0,231.2 738.6,229.5 739.2,227.9 739.9,226.3 740.6,224.7 741.3,223.0 742.0,221.4 742.7,219.8 743.4,218.1 744.2,216.5 744.9,214.9 745.7,213.2 746.4,211.6 747.2,210.0 748.0,208.4 748.8,206.7 749.7,205.1 750.5,203.5 751.3,201.8 752.2,200.2 753.1,198.6 753.9,197.0 754.8,195.3 755.7,193.7 756.6,192.1 757.6,190.5 758.5,188.8 759.4,187.2 760.4,185.6 761.4,183.9 762.3,182.3 763.3,180.7 764.3,179.1 765.3,177.4 766.3,175.8 767.4,174.2 768.4,172.6 769.5,170.9 770.5,169.3 771.6,167.7 772.7,166.0 773.8,164.4 774.9,162.8 776.0,161.2 777.1,159.5 778.2,157.9 779.3,156.3 780.5,154.7 781.6,153.0 782.8,151.4 784.0,149.8 785.2,148.2 786.4,146.5 787.6,144.9 788.8,143.3 790.0,141.7 791.2,140.0 792.4,138.4 793.7,136.8 794.9,135.2 796.2,133.6 797.4,131.9 798.7,130.3 800.0,128.7 801.3,127.1 802.6,125.4 803.9,123.8 805.2,122.2 806.5,120.6 807.8,119.0 809.2,117.3 810.5,115.7 811.8,114.1 813.2,112.5 814.5,110.9 815.9,109.3 817.3,107.6 818.6,106.0 820.0,104.4 821.4,102.8 822.8,101.2 824.2,99.6 825.6,98.0 827.0,96.4 828.4,94.7 829.8,93.1 831.2,91.5 832.6,89.9 834.1,88.3 835.5,86.7 836.9,85.1 838.4,83.5 839.8,81.9 841.2,80.3 842.7,78.7 844.1,77.1 845.6,75.6" fill="none" stroke="#dd22ee" stroke-width="1.3" stroke-dasharray="1.3 2"/>
<path d="M733.3,244.2 734.1,242.6 735.0,241.0 735.8,239.3 736.7,237.7 737.6,236.1 738.5,234.5 739.4,232.8 740.3,231.2 741.2,229.6 742.1,228.0 743.1,226.3 744.1,224.7 745.0,223.1 746.0,221.5 747.0,219.8 748.0,218.2 749.1,216.6 750.1,215.0 751.1,213.4 752.2,211.7 753.3,210.1 754.3,208.5 755.4,206.9 756.5,205.2 757.6,203.6 758.8,202.0 759.9,200.4 761.1,198.8 762.2,197.1 763.4,195.5 764.5,193.9 765.7,192.3 766.9,190.7 768.1,189.0 769.4,187.4 770.6,185.8 771.8,184.2 773.1,182.6 774.3,180.9 775.6,179.3 776.9,177.7 778.1,176.1 779.4,174.5 780.7,172.8 782.1,171.2 783.4,169.6 784.7,168.0 786.0,166.4 787.4,164.8 788.7,163.1 790.1,161.5 791.5,159.9 792.9,158.3 794.2,156.7 795.6,155.1 797.0,153.5 798.4,151.9 799.9,150.2 801.3,148.6 802.7,147.0 804.2,145.4 805.6,143.8 807.1,142.2 808.5,140.6 810.0,139.0 811.5,137.4 812.9,135.8 814.4,134.2 815.9,132.5 817.4,130.9 818.9,129.3 820.4,127.7 821.9,126.1 823.4,124.5 825.0,122.9 826.5,121.3 828.0,119.7 829.6,118.2 831.1,116.6 832.6,115.0 834.2,113.4 835.7,111.8 837.3,110.2 838.9,108.6 840.4,107.0 842.0,105.4 843.6,103.9 845.1,102.3 846.7,100.7 848.3,99.1 849.9,97.6 851.4,96.0 853.0,94.4 854.6,92.9 856.2,91.3 857.8,89.8 859.4,88.2 860.9,86.7 862.5,85.1 864.1,83.6 865.7,82.1 867.3,80.5 868.9,79.0 870.4,77.5 872.0,76.0" fill="none" stroke="#dd22ee" stroke-width="1.3" stroke-dasharray="1.3 2"/>
<path d="M733.3,244.2 734.0,242.6 734.8,240.9 735.5,239.3 736.3,237.7 737.1,236.0 737.9,234.4 738.7,232.7 739.5,231.1 740.4,229.5 741.2,227.8 742.1,226.2 742.9,224.6 743.8,222.9 744.7,221.3 745.6,219.6 746.5,218.0 747.5,216.4 748.4,214.7 749.4,213.1 750.3,211.5 751.3,209.8 752.3,208.2 753.3,206.6 754.3,204.9 755.3,203.3 756.4,201.6 757.4,200.0 758.5,198.4 759.6,196.7 760.6,195.1 761.7,193.5 762.8,191.8 764.0,190.2 765.1,188.6 766.2,186.9 767.4,185.3 768.5,183.7 769.7,182.0 770.9,180.4 772.0,178.7 773.2,177.1 774.4,175.5 775.7,173.8 776.9,172.2 778.1,170.6 779.4,168.9 780.6,167.3 781.9,165.7 783.2,164.0 784.4,162.4 785.7,160.8 787.0,159.1 788.3,157.5 789.6,155.9 791.0,154.2 792.3,152.6 793.7,150.9 795.0,149.3 796.4,147.7 797.7,146.0 799.1,144.4 800.5,142.8 801.9,141.1 803.3,139.5 804.7,137.9 806.1,136.2 807.5,134.6 808.9,133.0 810.4,131.3 811.8,129.7 813.3,128.1 814.7,126.4 816.2,124.8 817.6,123.2 819.1,121.6 820.6,119.9 822.1,118.3 823.6,116.7 825.1,115.0 826.6,113.4 828.1,111.8 829.6,110.1 831.1,108.5 832.6,106.9 834.2,105.3 835.7,103.6 837.3,102.0 838.8,100.4 840.3,98.7 841.9,97.1 843.5,95.5 845.0,93.9 846.6,92.2 848.1,90.6 849.7,89.0 851.3,87.4 852.9,85.8 854.5,84.1 856.0,82.5 857.6,80.9 859.2,79.3 860.8,77.7 862.4,76.1 864.0,74.4 865.6,72.8 867.2,71.2 868.8,69.6 870.4,68.0 872.0,66.4 873.6,64.8 875.2,63.2 876.8,61.7 878.4,60.1 879.9,58.5 881.5,56.9 883.1,55.4 884.7,53.8 886.3,52.3 887.8,50.7 889.4,49.2 890.9,47.7 892.5,46.3 894.0,44.8 895.5,43.4 897.0,42.1 898.4,40.8 899.8,39.6 901.2,38.5 902.6,37.6 904.0,36.8 905.5,36.3 907.0,36.1 908.7,36.1 910.6,36.5 912.7,37.2 915.0,38.0 917.6,39.0 920.3,40.2 923.1,41.4 926.1,42.8 929.1,44.1 932.2,45.6" fill="none" stroke="#dd22ee" stroke-width="1.3" stroke-dasharray="1.3 2"/>
<path d="M719.5,317.5 719.5,315.9 719.5,314.2 719.5,312.6 719.5,311.0 719.6,309.3 719.6,307.7 719.7,306.1 719.8,304.4 719.9,302.8 720.0,301.2 720.1,299.5 720.2,297.9 720.4,296.3 720.6,294.6 720.7,293.0 720.9,291.4 721.1,289.7 721.4,288.1 721.6,286.5 721.8,284.8 722.1,283.2 722.4,281.6 722.7,279.9 723.0,278.3 723.3,276.6 723.6,275.0 724.0,273.4 724.3,271.7 724.7,270.1 725.1,268.5 725.5,266.8 725.9,265.2 726.4,263.6 726.8,261.9 727.3,260.3 727.7,258.7 728.2,257.0 728.7,255.4 729.2,253.8 729.7,252.1 730.3,250.5 730.8,248.9 731.4,247.2 732.0,245.6 732.5,244.0 733.1,242.3 733.8,240.7 734.4,239.1 735.0,237.4 735.7,235.8 736.3,234.2 737.0,232.5 737.7,230.9 738.4,229.3 739.1,227.6 739.9,226.0 740.6,224.4 741.4,222.7 742.1,221.1 742.9,219.5 743.7,217.8 744.5,216.2 745.3,214.6 746.1,212.9 747.0,211.3 747.8,209.7 748.7,208.0 749.6,206.4 750.4,204.8 751.3,203.1 752.3,201.5 753.2,199.9 754.1,198.2 755.0,196.6 756.0,195.0 757.0,193.3 757.9,191.7 758.9,190.1 759.9,188.4 760.9,186.8 762.0,185.2 763.0,183.5 764.0,181.9 765.1,180.3 766.2,178.6 767.2,177.0 768.3,175.4 769.4,173.7 770.5,172.1 771.6,170.5 772.8,168.8 773.9,167.2 775.0,165.6 776.2,163.9 777.4,162.3 778.5,160.7 779.7,159.0 780.9,157.4 782.1,155.8 783.3,154.1 784.5,152.5 785.8,150.9 787.0,149.2 788.3,147.6 789.5,146.0 790.8,144.3 792.0,142.7 793.3,141.1 794.6,139.4 795.9,137.8 797.2,136.2 798.5,134.5 799.9,132.9 801.2,131.3 802.5,129.6 803.9,128.0 805.2,126.4 806.6,124.7 807.9,123.1 809.3,121.5 810.7,119.8 812.1,118.2 813.5,116.6 814.9,114.9 816.3,113.3 817.7,111.7 819.1,110.0 820.6,108.4 822.0,106.8 823.4,105.2 824.9,103.5 826.3,101.9 827.8,100.3 829.2,98.6 830.7,97.0 832.2,95.4 833.7,93.7 835.2,92.1 836.6,90.5 838.1,88.9 839.6,87.2 841.1,85.6 842.6,84.0 844.1,82.4 845.7,80.7 847.2,79.1 848.7,77.5 850.2,75.8 851.8,74.2 853.3,72.6 854.8,71.0 856.4,69.4 857.9,67.7 859.4,66.1 861.0,64.5 862.5,62.9 864.1,61.3 865.6,59.7 867.2,58.0 868.7,56.4 870.2,54.8 871.8,53.2 873.3,51.6 874.9,50.1 876.4,48.5 877.9,46.9 879.4,45.3 880.9,43.8 882.4,42.2 883.8,40.7 885.2,39.3 886.5,37.8 887.8,36.5 888.8,35.2 889.6,34.1 889.8,33.3 889.3,32.8 887.6,32.9 884.7,33.3" fill="none" stroke="#ee88ee" stroke-width="1.3" stroke-dasharray="1.3 2"/>
<path d="M719.5,317.5 719.4,315.9 719.3,314.3 719.2,312.6 719.1,311.0 719.1,309.4 719.0,307.8 719.0,306.1 719.0,304.5 718.9,302.9 719.0,301.3 719.0,299.7 719.0,298.0 719.1,296.4 719.1,294.8 719.2,293.2 719.3,291.5 719.4,289.9 719.5,288.3 719.6,286.7 719.8,285.1 720.0,283.4 720.1,281.8 720.3,280.2 720.5,278.6 720.7,276.9 721.0,275.3 721.2,273.7 721.5,272.1 721.7,270.5 722.0,268.8 722.3,267.2 722.6,265.6 722.9,264.0 723.3,262.4 723.6,260.7 724.0,259.1 724.4,257.5 724.8,255.9 725.2,254.2 725.6,252.6 726.0,251.0 726.5,249.4 726.9,247.8 727.4,246.1 727.9,244.5 728.4,242.9 728.9,241.3 729.4,239.7 730.0,238.0 730.5,236.4 731.1,234.8 731.6,233.2 732.2,231.6 732.8,229.9 733.5,228.3 734.1,226.7 734.7,225.1 735.4,223.5 736.0,221.8 736.7,220.2 737.4,218.6 738.1,217.0 738.8,215.4 739.6,213.7 740.3,212.1 741.0,210.5 741.8,208.9 742.6,207.3 743.4,205.6 744.2,204.0 745.0,202.4 745.8,200.8 746.6,199.2 747.5,197.5 748.3,195.9 749.2,194.3 750.1,192.7 751.0,191.1 751.9,189.5 752.8,187.8 753.7,186.2 754.7,184.6 755.6,183.0 756.6,181.4 757.5,179.8 758.5,178.1 759.5,176.5 760.5,174.9 761.5,173.3 762.6,171.7 763.6,170.1 764.6,168.5 765.7,166.8 766.7,165.2 767.8,163.6 768.9,162.0 770.0,160.4 771.1,158.8 772.2,157.2 773.3,155.5 774.5,153.9 775.6,152.3 776.7,150.7 777.9,149.1 779.1,147.5 780.2,145.9 781.4,144.3 782.6,142.7 783.8,141.1 785.0,139.4 786.3,137.8 787.5,136.2 788.7,134.6 790.0,133.0 791.2,131.4 792.5,129.8 793.7,128.2 795.0,126.6 796.3,125.0 797.6,123.4 798.9,121.8 800.2,120.2 801.5,118.6 802.8,117.0 804.1,115.4 805.4,113.8 806.8,112.2 808.1,110.6 809.4,109.0 810.8,107.4 812.1,105.9 813.5,104.3 814.8,102.7 816.2,101.1 817.6,99.5 819.0,97.9 820.3,96.4 821.7,94.8 823.1,93.2 824.5,91.6 825.9,90.1 827.3,88.5 828.7,87.0 830.0,85.4 831.4,83.8 832.8,82.3 834.2,80.8 835.6,79.2 837.0,77.7 838.4,76.2 839.8,74.6 841.1,73.1 842.5,71.6 843.9,70.1 845.2,68.6 846.6,67.2 847.9,65.7 849.2,64.2 850.5,62.8 851.7,61.4 853.0,60.0 854.2,58.6 855.4,57.3 856.5,55.9 857.6,54.7 858.6,53.4 859.6,52.2 860.4,51.0 861.2,49.9 861.8,48.9 862.3,48.0 862.7,47.1 862.8,46.3 862.7,45.7 862.3,45.1 861.6,44.8 860.6,44.5 859.2,44.4 857.4,44.5 855.2,44.7 852.7,45.1 849.7,45.6 846.3,46.2 842.6,46.9 838.6,47.8" fill="none" stroke="#ee88ee" stroke-width="1.3" stroke-dasharray="1.3 2"/>
<path d="M719.5,317.5 719.3,315.9 719.2,314.3 719.0,312.6 718.9,311.0 718.8,309.4 718.7,307.8 718.6,306.2 718.5,304.5 718.4,302.9 718.4,301.3 718.3,299.7 718.3,298.1 718.3,296.4 718.3,294.8 718.3,293.2 718.4,291.6 718.4,290.0 718.5,288.3 718.5,286.7 718.6,285.1 718.7,283.5 718.9,281.9 719.0,280.2 719.1,278.6 719.3,277.0 719.5,275.4 719.6,273.8 719.8,272.1 720.1,270.5 720.3,268.9 720.5,267.3 720.8,265.7 721.0,264.0 721.3,262.4 721.6,260.8 721.9,259.2 722.2,257.6 722.6,255.9 722.9,254.3 723.3,252.7 723.7,251.1 724.1,249.5 724.5,247.8 724.9,246.2 725.3,244.6 725.8,243.0 726.2,241.4 726.7,239.8 727.2,238.1 727.7,236.5 728.2,234.9 728.7,233.3 729.2,231.7 729.8,230.1 730.3,228.4 730.9,226.8 731.5,225.2 732.1,223.6 732.7,222.0 733.3,220.4 734.0,218.7 734.6,217.1 735.3,215.5 735.9,213.9 736.6,212.3 737.3,210.7 738.0,209.0 738.8,207.4 739.5,205.8 740.2,204.2 741.0,202.6 741.8,201.0 742.6,199.4 743.4,197.8 744.2,196.1 745.0,194.5 745.8,192.9 746.7,191.3 747.5,189.7 748.4,188.1 749.2,186.5 750.1,184.9 751.0,183.3 751.9,181.6 752.9,180.0 753.8,178.4 754.7,176.8 755.7,175.2 756.6,173.6 757.6,172.0 758.6,170.4 759.6,168.8 760.6,167.2 761.6,165.6 762.6,164.0 763.7,162.4 764.7,160.8 765.8,159.2 766.8,157.6 767.9,156.0 769.0,154.4 770.1,152.8 771.2,151.2 772.3,149.6 773.4,148.0 774.5,146.4 775.7,144.8 776.8,143.2 778.0,141.6 779.1,140.0 780.3,138.4 781.5,136.8 782.6,135.2 783.8,133.6 785.0,132.0 786.2,130.4 787.4,128.9 788.7,127.3 789.9,125.7 791.1,124.1 792.4,122.5 793.6,121.0 794.9,119.4 796.1,117.8 797.4,116.2 798.6,114.7 799.9,113.1 801.2,111.5 802.5,110.0 803.8,108.4 805.0,106.9 806.3,105.3 807.6,103.8 808.9,102.2 810.2,100.7 811.5,99.1 812.8,97.6 814.1,96.1 815.4,94.5 816.7,93.0 818.0,91.5 819.3,90.0 820.6,88.5 821.9,87.0 823.2,85.5 824.5,84.0 825.8,82.5 827.1,81.1 828.3,79.6 829.6,78.2 830.8,76.7 832.1,75.3 833.3,73.9 834.5,72.5 835.7,71.1 836.8,69.7 837.9,68.4 839.0,67.1 840.1,65.8 841.1,64.5 842.1,63.3 843.0,62.1 843.9,60.9 844.7,59.8 845.4,58.7 846.1,57.6 846.6,56.6 847.1,55.7 847.4,54.8 847.5,54.1 847.6,53.3 847.4,52.7 847.0,52.2 846.5,51.7 845.6,51.4 844.6,51.2 843.2,51.0 841.6,51.0 839.7,51.1 837.6,51.3 835.1,51.7 832.3,52.1 829.3,52.6 826.0,53.2 822.4,53.9 818.6,54.7 814.6,55.6" fill="none" stroke="#ee88ee" stroke-width="1.3" stroke-dasharray="1.3 2"/>
<path d="M719.5,317.5 719.3,315.9 719.1,314.3 719.0,312.7 718.8,311.0 718.7,309.4 718.6,307.8 718.5,306.2 718.4,304.6 718.3,303.0 718.3,301.4 718.2,299.7 718.2,298.1 718.2,296.5 718.2,294.9 718.2,293.3 718.2,291.7 718.2,290.1 718.3,288.4 718.3,286.8 718.4,285.2 718.5,283.6 718.6,282.0 718.7,280.4 718.9,278.8 719.0,277.2 719.2,275.5 719.3,273.9 719.5,272.3 719.7,270.7 719.9,269.1 720.2,267.5 720.4,265.9 720.7,264.2 720.9,262.6 721.2,261.0 721.5,259.4 721.8,257.8 722.1,256.2 722.5,254.6 722.8,253.0 723.2,251.3 723.6,249.7 724.0,248.1 724.4,246.5 724.8,244.9 725.2,243.3 725.6,241.7 726.1,240.1 726.6,238.5 727.1,236.8 727.5,235.2 728.1,233.6 728.6,232.0 729.1,230.4 729.7,228.8 730.2,227.2 730.8,225.6 731.4,224.0 732.0,222.3 732.6,220.7 733.2,219.1 733.8,217.5 734.5,215.9 735.1,214.3 735.8,212.7 736.5,211.1 737.2,209.5 737.9,207.9 738.6,206.3 739.4,204.7 740.1,203.1 740.9,201.4 741.6,199.8 742.4,198.2 743.2,196.6 744.0,195.0 744.8,193.4 745.6,191.8 746.5,190.2 747.3,188.6 748.2,187.0 749.1,185.4 749.9,183.8 750.8,182.2 751.7,180.6 752.6,179.0 753.6,177.4 754.5,175.8 755.5,174.2 756.4,172.6 757.4,171.0 758.4,169.4 759.3,167.8 760.3,166.2 761.3,164.6 762.4,163.0 763.4,161.4 764.4,159.8 765.5,158.2 766.5,156.6 767.6,155.0 768.7,153.4 769.8,151.9 770.8,150.3 771.9,148.7 773.1,147.1 774.2,145.5 775.3,143.9 776.4,142.3 777.6,140.7 778.7,139.2 779.9,137.6 781.0,136.0 782.2,134.4 783.4,132.8 784.6,131.3 785.8,129.7 787.0,128.1 788.2,126.5 789.4,125.0 790.6,123.4 791.9,121.8 793.1,120.3 794.3,118.7 795.6,117.1 796.8,115.6 798.1,114.0 799.3,112.5 800.6,110.9 801.9,109.4 803.1,107.8 804.4,106.3 805.7,104.7 806.9,103.2 808.2,101.7 809.5,100.1 810.8,98.6 812.1,97.1 813.4,95.6 814.6,94.1 815.9,92.6 817.2,91.1 818.5,89.6 819.8,88.1 821.0,86.6 822.3,85.1 823.5,83.7 824.8,82.2 826.0,80.8 827.3,79.4 828.5,77.9 829.7,76.5 830.9,75.1 832.0,73.7 833.2,72.4 834.3,71.0 835.4,69.7 836.5,68.4 837.5,67.1 838.5,65.9 839.5,64.6 840.4,63.5 841.2,62.3 842.0,61.2 842.7,60.1 843.4,59.1 843.9,58.1 844.3,57.1 844.7,56.3 844.8,55.5 844.9,54.8 844.7,54.1 844.4,53.6 843.9,53.1 843.2,52.7 842.2,52.4 841.0,52.3 839.6,52.2 837.8,52.2 835.8,52.4 833.6,52.6 831.0,53.0 828.2,53.4 825.1,54.0 821.8,54.6 818.2,55.3 814.5,56.1 810.5,56.9" fill="none" stroke="#ee88ee" stroke-width="1.3" stroke-dasharray="1.3 2"/>
<path d="M996.9,57.8 998.5,58.8 1000.3,59.8 1002.3,60.9 1004.3,62.0 1006.5,63.2 1008.8,64.3 1011.1,65.6" fill="none" stroke="#ee88ee" stroke-width="1.3" stroke-dasharray="1.3 2"/>
<path d="M719.5,317.5 719.5,315.9 719.5,314.2 719.5,312.6 719.6,311.0 719.6,309.3 719.7,307.7 719.8,306.1 719.9,304.4 720.0,302.8 720.1,301.1 720.2,299.5 720.4,297.9 720.6,296.2 720.7,294.6 720.9,293.0 721.1,291.3 721.4,289.7 721.6,288.1 721.9,286.4 722.1,284.8 722.4,283.2 722.7,281.5 723.0,279.9 723.3,278.2 723.6,276.6 724.0,275.0 724.3,273.3 724.7,271.7 725.1,270.1 725.5,268.4 725.9,266.8 726.4,265.2 726.8,263.5 727.3,261.9 727.7,260.3 728.2,258.6 728.7,257.0 729.2,255.4 729.7,253.7 730.3,252.1 730.8,250.4 731.4,248.8 732.0,247.2 732.5,245.5 733.1,243.9 733.8,242.3 734.4,240.6 735.0,239.0 735.7,237.4 736.3,235.7 737.0,234.1 737.7,232.5 738.4,230.8 739.1,229.2 739.9,227.5 740.6,225.9 741.4,224.3 742.1,222.6 742.9,221.0 743.7,219.4 744.5,217.7 745.3,216.1 746.1,214.5 747.0,212.8 747.8,211.2 748.7,209.6 749.6,207.9 750.5,206.3 751.4,204.7 752.3,203.0 753.2,201.4 754.1,199.7 755.1,198.1 756.0,196.5 757.0,194.8 758.0,193.2 759.0,191.6 760.0,189.9 761.0,188.3 762.0,186.7 763.0,185.0 764.1,183.4 765.1,181.8 766.2,180.1 767.3,178.5 768.3,176.9 769.4,175.2 770.6,173.6 771.7,171.9 772.8,170.3 773.9,168.7 775.1,167.0 776.2,165.4 777.4,163.8 778.6,162.1 779.8,160.5 781.0,158.9 782.2,157.2 783.4,155.6 784.6,154.0 785.8,152.3 787.1,150.7 788.3,149.1 789.6,147.4 790.8,145.8 792.1,144.2 793.4,142.5 794.7,140.9 796.0,139.3 797.3,137.6 798.6,136.0 799.9,134.3 801.3,132.7 802.6,131.1 804.0,129.4 805.3,127.8 806.7,126.2 808.0,124.5 809.4,122.9 810.8,121.3 812.2,119.6 813.6,118.0 815.0,116.4 816.4,114.7 817.8,113.1 819.2,111.5 820.7,109.8 822.1,108.2 823.6,106.6 825.0,104.9 826.5,103.3 827.9,101.7 829.4,100.0 830.9,98.4 832.3,96.8 833.8,95.1 835.3,93.5 836.8,91.9 838.3,90.2 839.8,88.6 841.3,87.0 842.8,85.3 844.3,83.7 845.8,82.1 847.4,80.4 848.9,78.8 850.4,77.2 852.0,75.5 853.5,73.9 855.0,72.3 856.6,70.7 858.1,69.0 859.7,67.4 861.2,65.8 862.8,64.1 864.4,62.5 865.9,60.9 867.5,59.3 869.0,57.6 870.6,56.0 872.2,54.4 873.7,52.8 875.3,51.2 876.9,49.6 878.4,48.0 880.0,46.4 881.5,44.8 883.1,43.2 884.6,41.6 886.1,40.0 887.6,38.5 889.0,37.0 890.4,35.5 891.7,34.1 892.7,32.9 893.3,31.9 893.0,31.3 891.1,31.4" fill="none" stroke="#ee88ee" stroke-width="1.3" stroke-dasharray="1.3 2"/>
<path d="M917.4,32.1 919.4,33.2 922.1,34.5 925.0,35.9 928.2,37.4 931.4,38.9 934.8,40.5 938.1,42.0 941.5,43.6 944.9,45.2 948.4,46.8 951.8,48.4 955.2,50.0 958.7,51.6 962.1,53.2 965.6,54.9 969.1,56.5 972.5,58.1 976.0,59.7 979.4,61.3 982.9,63.0 986.3,64.6 989.7,66.2 993.2,67.9 996.6,69.5 1000.0,71.1" fill="none" stroke="#ee88ee" stroke-width="1.3" stroke-dasharray="1.3 2"/>
<path d="M719.5,317.5 719.2,315.9 718.9,314.3 718.7,312.7 718.4,311.1 718.2,309.5 718.0,307.9 717.8,306.3 717.6,304.7 717.4,303.1 717.3,301.5 717.1,299.9 717.0,298.3 716.9,296.7 716.8,295.1 716.7,293.5 716.6,291.9 716.5,290.3 716.5,288.7 716.4,287.1 716.4,285.5 716.4,283.9 716.4,282.3 716.4,280.7 716.4,279.1 716.5,277.5 716.5,275.9 716.6,274.3 716.7,272.7 716.8,271.1 716.9,269.5 717.0,267.9 717.2,266.3 717.3,264.7 717.5,263.1 717.7,261.5 717.9,259.9 718.1,258.3 718.3,256.7 718.5,255.1 718.8,253.5 719.0,251.9 719.3,250.3 719.6,248.7 719.9,247.1 720.2,245.5 720.5,243.9 720.9,242.3 721.2,240.7 721.6,239.1 722.0,237.5 722.4,235.9 722.8,234.3 723.2,232.7 723.6,231.2 724.1,229.6 724.5,228.0 725.0,226.4 725.5,224.8 726.0,223.2 726.5,221.6 727.0,220.0 727.5,218.4 728.1,216.8 728.6,215.2 729.2,213.6 729.8,212.1 730.4,210.5 731.0,208.9 731.6,207.3 732.2,205.7 732.9,204.1 733.5,202.5 734.2,201.0 734.9,199.4 735.5,197.8 736.2,196.2 737.0,194.6 737.7,193.0 738.4,191.5 739.2,189.9 739.9,188.3 740.7,186.7 741.5,185.1 742.3,183.6 743.1,182.0 743.9,180.4 744.7,178.8 745.5,177.3 746.4,175.7 747.2,174.1 748.1,172.6 749.0,171.0 749.9,169.4 750.7,167.9 751.6,166.3 752.6,164.7 753.5,163.2 754.4,161.6 755.4,160.0 756.3,158.5 757.3,156.9 758.2,155.4 759.2,153.8 760.2,152.3 761.2,150.7 762.2,149.2 763.2,147.6 764.2,146.1 765.2,144.5 766.3,143.0 767.3,141.4 768.3,139.9 769.4,138.4 770.4,136.8 771.5,135.3 772.6,133.8 773.6,132.3 774.7,130.7 775.8,129.2 776.9,127.7 778.0,126.2 779.1,124.7 780.2,123.2 781.3,121.7 782.4,120.2 783.5,118.7 784.6,117.2 785.7,115.7 786.9,114.3 788.0,112.8 789.1,111.3 790.2,109.9 791.3,108.4 792.4,107.0 793.5,105.5 794.7,104.1 795.8,102.7 796.9,101.2 798.0,99.8 799.0,98.4 800.1,97.0 801.2,95.7 802.3,94.3 803.3,92.9 804.3,91.6 805.4,90.3 806.4,88.9 807.4,87.6 808.3,86.4 809.3,85.1 810.2,83.8 811.1,82.6 812.0,81.4 812.8,80.2 813.6,79.0 814.4,77.9 815.1,76.8 815.8,75.7 816.4,74.6 817.0,73.6 817.5,72.6 817.9,71.7 818.3,70.7 818.6,69.9 818.8,69.0 818.9,68.3 818.9,67.5 818.8,66.9 818.6,66.2 818.3,65.7 817.8,65.2 817.2,64.8 816.5,64.4 815.5,64.1 814.5,63.9 813.2,63.7 811.8,63.6 810.2,63.6 808.4,63.7 806.5,63.8 804.3,64.0 802.0,64.3 799.5,64.6 796.8,65.0 793.9,65.5 790.8,66.0 787.6,66.6 784.2,67.3 780.7,68.0 777.0,68.7 773.1,69.5 769.2,70.4" fill="none" stroke="#ee88ee" stroke-width="1.3" stroke-dasharray="1.3 2"/>
<path d="M1038.5,71.3 1040.0,72.2" fill="none" stroke="#ee88ee" stroke-width="1.3" stroke-dasharray="1.3 2"/>
<path d="M726.7,266.7 726.8,265.1 726.9,263.5 727.0,261.9 727.1,260.3 727.2,258.8 727.4,257.2 727.5,255.6 727.7,254.0 727.9,252.4 728.1,250.8 728.3,249.2 728.5,247.6 728.7,246.1 729.0,244.5 729.2,242.9 729.5,241.3 729.8,239.7 730.1,238.1 730.4,236.5 730.7,235.0 731.0,233.4 731.4,231.8 731.7,230.2 732.1,228.6 732.5,227.1 732.9,225.5 733.3,223.9 733.7,222.3 734.1,220.7 734.6,219.2 735.0,217.6 735.5,216.0 735.9,214.4 736.4,212.8 736.9,211.3 737.4,209.7 738.0,208.1 738.5,206.5 739.0,205.0 739.6,203.4 740.1,201.8 740.7,200.3 741.3,198.7 741.9,197.1 742.5,195.5 743.1,194.0 743.8,192.4 744.4,190.8 745.0,189.3 745.7,187.7 746.4,186.1 747.1,184.6 747.7,183.0 748.5,181.5 749.2,179.9 749.9,178.3 750.6,176.8 751.4,175.2 752.1,173.7 752.9,172.1 753.6,170.6 754.4,169.0 755.2,167.5 756.0,165.9 756.8,164.4 757.6,162.8 758.4,161.3 759.3,159.8 760.1,158.2 760.9,156.7 761.8,155.2 762.6,153.6 763.5,152.1 764.4,150.6 765.3,149.0 766.2,147.5 767.1,146.0 768.0,144.5 768.9,143.0 769.8,141.5 770.7,139.9 771.6,138.4 772.6,136.9 773.5,135.4 774.4,133.9 775.4,132.4 776.3,131.0 777.3,129.5 778.2,128.0 779.2,126.5 780.2,125.0 781.1,123.6 782.1,122.1 783.1,120.6 784.0,119.2 785.0,117.7 786.0,116.3 786.9,114.9 787.9,113.4 788.9,112.0 789.8,110.6 790.8,109.2 791.7,107.8 792.7,106.4 793.6,105.0 794.6,103.6 795.5,102.3 796.4,100.9 797.4,99.6 798.3,98.3 799.2,96.9 800.0,95.6 800.9,94.3 801.8,93.1 802.6,91.8 803.4,90.6 804.2,89.3 805.0,88.1 805.7,86.9 806.4,85.8 807.1,84.6 807.7,83.5 808.3,82.4 808.9,81.3 809.4,80.3 809.9,79.2 810.4,78.3 810.7,77.3 811.0,76.4 811.3,75.5 811.5,74.7 811.6,73.9 811.6,73.1 811.5,72.4 811.3,71.7 811.1,71.1 810.7,70.5 810.2,70.0 809.6,69.6 808.9,69.2 808.1,68.9 807.1,68.6 806.0,68.4 804.7,68.2 803.3,68.1 801.7,68.1 800.0,68.1 798.1,68.3 796.0,68.4 793.8,68.7 791.4,69.0 788.9,69.3 786.2,69.7 783.4,70.2 780.4,70.7 777.2,71.3 774.0,71.9 770.5,72.6 767.0,73.3 763.3,74.1 759.5,74.9 755.6,75.8 751.6,76.7" fill="none" stroke="#ff2000" stroke-width="1.3" stroke-dasharray="1.3 2"/>
<path d="M726.7,266.7 726.7,265.1 726.7,263.5 726.8,262.0 726.8,260.4 726.9,258.8 727.0,257.2 727.1,255.7 727.2,254.1 727.3,252.5 727.4,251.0 727.5,249.4 727.7,247.8 727.8,246.2 728.0,244.7 728.2,243.1 728.4,241.5 728.6,240.0 728.8,238.4 729.1,236.8 729.3,235.3 729.6,233.7 729.8,232.1 730.1,230.6 730.4,229.0 730.7,227.4 731.1,225.9 731.4,224.3 731.7,222.7 732.1,221.2 732.4,219.6 732.8,218.0 733.2,216.5 733.6,214.9 734.0,213.4 734.4,211.8 734.9,210.3 735.3,208.7 735.8,207.1 736.2,205.6 736.7,204.0 737.2,202.5 737.7,200.9 738.2,199.4 738.7,197.8 739.3,196.3 739.8,194.7 740.3,193.2 740.9,191.7 741.5,190.1 742.1,188.6 742.7,187.0 743.3,185.5 743.9,184.0 744.5,182.4 745.1,180.9 745.8,179.3 746.4,177.8 747.1,176.3 747.7,174.8 748.4,173.2 749.1,171.7 749.8,170.2 750.5,168.7 751.2,167.2 751.9,165.6 752.6,164.1 753.4,162.6 754.1,161.1 754.9,159.6 755.6,158.1 756.4,156.6 757.1,155.1 757.9,153.6 758.7,152.1 759.5,150.6 760.3,149.1 761.1,147.6 761.9,146.2 762.7,144.7 763.5,143.2 764.4,141.7 765.2,140.3 766.0,138.8 766.8,137.4 767.7,135.9 768.5,134.5 769.4,133.0 770.2,131.6 771.1,130.1 771.9,128.7 772.8,127.3 773.6,125.9 774.5,124.5 775.3,123.1 776.2,121.7 777.0,120.3 777.8,118.9 778.7,117.5 779.5,116.2 780.4,114.8 781.2,113.5 782.0,112.1 782.8,110.8 783.6,109.5 784.4,108.2 785.2,106.9 786.0,105.6 786.8,104.3 787.5,103.1 788.3,101.8 789.0,100.6 789.7,99.4 790.4,98.2 791.0,97.0 791.7,95.8 792.3,94.7 792.9,93.5 793.5,92.4 794.0,91.4 794.5,90.3 795.0,89.3 795.4,88.2 795.8,87.3 796.1,86.3 796.4,85.4 796.6,84.5 796.8,83.6 796.9,82.8 797.0,82.0 797.0,81.2 796.9,80.5 796.8,79.8 796.5,79.2 796.2,78.6 795.8,78.0 795.3,77.5 794.7,77.0 794.0,76.6 793.2,76.3 792.3,76.0 791.2,75.7 790.1,75.5 788.8,75.3 787.4,75.2 785.9,75.2 784.2,75.2 782.4,75.3 780.5,75.4 778.4,75.6 776.2,75.8 773.9,76.1 771.4,76.4 768.9,76.8 766.1,77.2 763.3,77.7 760.3,78.2 757.2,78.8 754.0,79.4 750.7,80.1 747.2,80.8 743.7,81.5 740.0,82.3 736.2,83.1 732.4,83.9 728.4,84.8 724.4,85.7 720.3,86.7" fill="none" stroke="#ff2000" stroke-width="1.3" stroke-dasharray="1.3 2"/>
<path d="M725.7,271.7 726.7,270.2 727.7,268.7 728.7,267.1 729.7,265.6 730.7,264.1 731.8,262.6 732.8,261.1 733.9,259.6 735.0,258.1 736.0,256.6 737.1,255.0 738.2,253.5 739.3,252.0 740.5,250.5 741.6,249.0 742.8,247.5 743.9,246.0 745.1,244.5 746.3,243.0 747.4,241.5 748.6,240.0 749.8,238.5 751.1,237.0 752.3,235.5 753.5,234.0 754.8,232.5 756.0,231.0 757.3,229.5 758.5,228.0 759.8,226.5 761.1,225.0 762.4,223.5 763.7,222.0 765.0,220.5 766.3,219.1 767.7,217.6 769.0,216.1 770.3,214.6 771.7,213.1 773.1,211.6 774.4,210.2 775.8,208.7 777.2,207.2 778.6,205.7 780.0,204.3 781.4,202.8 782.8,201.3 784.2,199.9 785.6,198.4 787.0,197.0 788.5,195.5 789.9,194.0 791.3,192.6 792.8,191.1 794.2,189.7 795.7,188.3 797.2,186.8 798.6,185.4 800.1,183.9 801.6,182.5 803.1,181.1 804.6,179.6 806.1,178.2 807.5,176.8 809.0,175.4 810.6,174.0 812.1,172.5 813.6,171.1 815.1,169.7 816.6,168.3 818.1,166.9 819.6,165.5 821.2,164.2 822.7,162.8 824.2,161.4 825.8,160.0 827.3,158.6 828.8,157.3 830.4,155.9 831.9,154.6 833.5,153.2 835.0,151.9 836.5,150.5 838.1,149.2 839.6,147.9 841.2,146.6 842.7,145.2 844.2,143.9 845.8,142.6 847.3,141.3 848.9,140.1 850.4,138.8 852.0,137.5 853.5,136.3 855.0,135.0 856.6,133.8 858.1,132.5 859.6,131.3 861.2,130.1 862.7,128.9 864.2,127.7 865.7,126.5 867.3,125.4 868.8,124.2 870.3,123.1 871.8,121.9 873.3,120.8 874.8,119.7 876.3,118.6 877.8,117.6 879.3,116.5 880.8,115.5 882.3,114.4 883.8,113.4 885.3,112.4 886.8,111.5 888.3,110.5 889.8,109.6 891.2,108.7 892.7,107.8 894.2,106.9 895.6,106.1 897.1,105.2 898.6,104.4 900.0,103.7 901.5,102.9 903.0,102.2 904.4,101.5 905.9,100.8 907.4,100.2 908.8,99.6 910.3,99.0 911.8,98.5 913.2,97.9 914.7,97.5 916.2,97.0 917.7,96.6 919.2,96.2 920.7,95.9 922.2,95.6" fill="none" stroke="#ff2000" stroke-width="1.3" stroke-dasharray="1.3 2"/>
<path d="M724.3,236.2 725.7,234.7 727.2,233.3 728.6,231.9 730.1,230.4 731.6,229.0 733.1,227.5 734.5,226.1 736.0,224.6 737.6,223.2 739.1,221.8 740.6,220.3 742.1,218.9 743.7,217.5 745.2,216.0 746.8,214.6 748.4,213.2 749.9,211.8 751.5,210.4 753.1,208.9 754.7,207.5 756.3,206.1 757.9,204.7 759.6,203.3 761.2,201.9 762.8,200.5 764.5,199.1 766.1,197.7 767.7,196.3 769.4,194.9 771.1,193.5 772.7,192.2 774.4,190.8 776.1,189.4 777.8,188.0 779.4,186.7 781.1,185.3 782.8,183.9 784.5,182.6 786.2,181.2 787.9,179.9 789.7,178.5 791.4,177.2 793.1,175.9 794.8,174.5 796.5,173.2 798.2,171.9 800.0,170.6 801.7,169.3 803.4,168.0 805.2,166.7 806.9,165.4 808.6,164.1 810.4,162.8 812.1,161.6 813.8,160.3 815.6,159.0 817.3,157.8 819.0,156.5 820.8,155.3 822.5,154.1 824.3,152.8 826.0,151.6 827.7,150.4 829.5,149.2 831.2,148.0 832.9,146.9 834.6,145.7 836.4,144.5 838.1,143.4 839.8,142.2 841.5,141.1 843.2,140.0 845.0,138.9 846.7,137.8" fill="none" stroke="#dd22ee" stroke-width="1.3" stroke-dasharray="1.3 2"/>
<path d="M731.3,238.2 732.8,236.8 734.2,235.4 735.7,234.1 737.2,232.7 738.7,231.3 740.2,229.9 741.7,228.6 743.2,227.2 744.8,225.8 746.3,224.5 747.8,223.1 749.4,221.8 750.9,220.4 752.5,219.1 754.1,217.7 755.6,216.4 757.2,215.0 758.8,213.7 760.4,212.3 762.0,211.0 763.6,209.7 765.2,208.3 766.8,207.0 768.4,205.7 770.1,204.4 771.7,203.1 773.3,201.7 775.0,200.4 776.6,199.1 778.3,197.8 779.9,196.5 781.6,195.2 783.2,194.0 784.9,192.7 786.6,191.4 788.2,190.1 789.9,188.8 791.6,187.6 793.3,186.3 794.9,185.1 796.6,183.8 798.3,182.6 800.0,181.3 801.7,180.1 803.4,178.9 805.0,177.6 806.7,176.4 808.4,175.2 810.1,174.0 811.8,172.8 813.5,171.6 815.2,170.4 816.9,169.3 818.6,168.1 820.3,166.9 822.0,165.8 823.7,164.6 825.4,163.5 827.1,162.4 828.7,161.2 830.4,160.1 832.1,159.0 833.8,157.9 835.5,156.8 837.2,155.8 838.9,154.7 840.5,153.6 842.2,152.6 843.9,151.5 845.6,150.5 847.2,149.5 848.9,148.5 850.6,147.5 852.2,146.5 853.9,145.6 855.5,144.6 857.2,143.7 858.8,142.7 860.5,141.8 862.1,140.9 863.7,140.0 865.4,139.2 867.0,138.3 868.6,137.5 870.3,136.6 871.9,135.8 873.5,135.0 875.1,134.2 876.7,133.5 878.3,132.7 879.9,132.0 881.5,131.3 883.1,130.6 884.7,130.0 886.3,129.3 887.9,128.7 889.5,128.1 891.0,127.5 892.6,126.9 894.2,126.4 895.8,125.8 897.4,125.3 898.9,124.8 900.5,124.4 902.1,124.0 903.7,123.5 905.2,123.2 906.8,122.8 908.4,122.4 910.0,122.1 911.5,121.8 913.1,121.6 914.7,121.3 916.3,121.1 917.9,120.9 919.5,120.7 921.1,120.6 922.7,120.5 924.3,120.4 925.9,120.3 927.5,120.3 929.1,120.3 930.8,120.3 932.4,120.4 934.1,120.4 935.7,120.5 937.4,120.6 939.0,120.8 940.7,121.0 942.4,121.2 944.1,121.4 945.8,121.6 947.6,121.9 949.3,122.2 951.0,122.5 952.8,122.9 954.6,123.2 956.3,123.6 958.1,124.0 959.9,124.5 961.7,125.0 963.6,125.4 965.4,125.9 967.2,126.5 969.1,127.0 971.0,127.6 972.9,128.2 974.8,128.8 976.7,129.4 978.6,130.1 980.5,130.8 982.5,131.5 984.4,132.2 986.4,132.9 988.4,133.7 990.4,134.4 992.4,135.2 994.4,136.0 996.4,136.8 998.4,137.6 1000.5,138.5 1002.5,139.3 1004.6,140.2 1006.7,141.1" fill="none" stroke="#dd22ee" stroke-width="1.3" stroke-dasharray="1.3 2"/>
<path d="M726.7,266.7 726.0,265.4 725.3,264.2 724.7,262.9 724.0,261.7 723.4,260.4 722.7,259.2 722.1,257.9 721.5,256.6 720.8,255.4 720.2,254.2 719.6,252.9 719.0,251.7 718.4,250.4 717.8,249.2 717.3,248.0 716.7,246.7 716.1,245.5 715.6,244.3 715.0,243.1 714.5,241.8 714.0,240.6 713.4,239.4 712.9,238.2 712.4,237.0 711.9,235.8 711.4,234.6 710.9,233.4 710.4,232.2 709.9,231.0 709.4,229.8 708.9,228.6 708.5,227.4 708.0,226.3 707.6,225.1 707.1,223.9 706.7,222.8 706.2,221.6 705.8,220.4 705.4,219.3 704.9,218.1 704.5,217.0 704.1,215.8 703.7,214.7 703.3,213.6 702.9,212.5 702.5,211.3 702.1,210.2 701.7,209.1 701.3,208.0 700.9,206.9 700.5,205.8 700.1,204.7 699.8,203.6 699.4,202.6 699.0,201.5 698.6,200.4 698.3,199.4 697.9,198.3 697.5,197.3 697.1,196.2 696.8,195.2 696.4,194.2 696.0,193.2 695.7,192.1 695.3,191.1 694.9,190.1 694.6,189.1 694.2,188.2 693.8,187.2 693.4,186.2 693.1,185.3 692.7,184.3 692.3,183.4 691.9,182.4 691.5,181.5 691.1,180.6 690.7,179.7 690.3,178.8 689.9,177.9 689.5,177.0 689.1,176.2 688.6,175.3 688.2,174.5 687.7,173.6 687.3,172.8 686.8,172.0 686.4,171.2 685.9,170.4 685.4,169.6 684.9,168.9 684.4,168.1 683.8,167.4 683.3,166.6 682.8,165.9 682.2,165.2 681.6,164.5 681.0,163.8 680.4,163.1 679.8,162.5 679.2,161.8 678.5,161.2 677.9,160.6 677.2,160.0 676.5,159.4 675.8,158.9 675.0,158.3 674.3,157.8 673.5,157.2 672.7,156.7 671.9,156.2 671.0,155.7 670.1,155.3 669.3,154.8 668.3,154.4 667.4,154.0 666.4,153.6 665.5,153.2 664.4,152.9 663.4,152.5 662.3,152.2 661.2,151.9 660.1,151.6 659.0,151.3 657.8,151.0 656.6,150.8 655.3,150.6 654.0,150.4 652.7,150.2 651.4,150.0 650.0,149.9 648.6,149.7 647.2,149.6 645.7,149.5 644.2,149.5 642.7,149.4 641.1,149.4 639.5,149.3 637.9,149.3 636.2,149.4 634.5,149.4 632.8,149.5 631.0,149.5 629.2,149.6 627.4,149.7 625.5,149.9 623.6,150.0 621.6,150.2 619.7,150.4 617.6,150.6 615.6,150.8 613.5,151.0 611.4,151.3 609.2,151.6 607.0,151.9 604.8,152.2 602.5,152.5 600.2,152.8 597.9,153.2 595.5,153.6 593.1,154.0 590.7,154.4 588.2,154.8 585.7,155.3 583.2,155.7 580.6,156.2 578.0,156.7 575.4,157.2 572.8,157.7 570.1,158.3 567.4,158.8 564.6,159.4 561.9,160.0 559.1,160.6 556.3,161.2 553.4,161.8 550.6,162.5 547.7,163.1 544.7,163.8 541.8,164.5 538.8,165.2 535.8,165.9 532.8,166.6 529.8,167.3 526.8,168.1 523.7,168.8 520.6,169.6 517.5,170.4 514.4,171.2 511.2,172.0 508.1,172.8 504.9,173.6 501.7,174.4 498.5,175.3 495.3,176.1 492.0,177.0 488.8,177.9 485.5,178.8 482.3,179.7 479.0,180.6 475.7,181.5 472.4,182.4 469.1,183.3" fill="none" stroke="#ff2000" stroke-width="1.3" stroke-dasharray="1.3 2"/>
<path d="M568.9,148.9 565.0,150.5 561.0,152.1 557.2,153.8 553.3,155.4 549.5,157.0 545.7,158.6 541.9,160.2 538.1,161.9 534.4,163.5 530.7,165.1 527.0,166.7 523.4,168.4 519.8,170.0 516.2,171.6 512.7,173.2 509.1,174.9 505.6,176.5 502.2,178.1 498.7,179.7 495.3,181.3 492.0,183.0 488.6,184.6 485.3,186.2 482.0,187.8 478.8,189.5 475.6,191.1 472.4,192.7 469.2,194.3 466.1,196.0 463.0,197.6 460.0,199.2 456.9,200.8 454.0,202.5 451.0,204.1 448.1,205.7 445.2,207.3 442.4,209.0 439.5,210.6 436.8,212.2 434.0,213.8 431.3,215.5 428.6,217.1 426.0,218.7 423.4,220.3 420.8,222.0 418.3,223.6 415.8,225.2 413.4,226.8 411.0,228.5 408.6,230.1 406.2,231.7 403.9,233.3 401.7,235.0 399.4,236.6 397.2,238.2 395.1,239.8 393.0,241.5 390.9,243.1 388.9,244.7 386.9,246.3 384.9,248.0 383.0,249.6 381.1,251.2 379.3,252.8 377.5,254.5 375.7,256.1 374.0,257.7 372.3,259.3 370.7,261.0 369.1,262.6 367.5,264.2 366.0,265.8 364.5,267.5 363.1,269.1 361.7,270.7 360.3,272.3 359.0,274.0 357.7,275.6 356.5,277.2 355.3,278.8 354.2,280.5 353.1,282.1 352.0,283.7 351.0,285.3 350.0,287.0 349.0,288.6 348.1,290.2 347.3,291.8 346.5,293.5 345.7,295.1 345.0,296.7 344.3,298.3 343.6,300.0 343.0,301.6 342.5,303.2 342.0,304.8 341.5,306.5 341.1,308.1 340.7,309.7 340.3,311.4 340.0,313.0 339.8,314.6 339.5,316.2 339.4,317.9 339.2,319.5 339.2,321.1 339.1,322.7 339.1,324.4 339.1,326.0 339.2,327.6 339.3,329.2 339.5,330.9 339.7,332.5 340.0,334.1 340.3,335.7 340.6,337.4 341.0,339.0 341.4,340.6 341.9,342.2 342.4,343.9 342.9,345.5 343.5,347.1 344.2,348.7 344.8,350.4 345.6,352.0 346.3,353.6 347.1,355.2 348.0,356.9 348.9,358.5 349.8,360.1 350.8,361.7 351.8,363.4 352.8,365.0 353.9,366.6 355.1,368.2 356.3,369.9 357.5,371.5 358.7,373.1 360.1,374.8 361.4,376.4 362.8,378.0 364.2,379.6 365.7,381.3 367.2,382.9 368.8,384.5 370.3,386.1 372.0,387.8 373.6,389.4 375.4,391.0 377.1,392.6 378.9,394.3 380.7,395.9 382.6,397.5 384.5,399.1 386.5,400.8 388.5,402.4 390.5,404.0 392.6,405.6 394.7,407.3 396.8,408.9" fill="none" stroke="#5e5e5e" stroke-width="1.3" stroke-dasharray="1.3 2.6"/>
<path d="M568.9,148.9 648.9,117.8" fill="none" stroke="#787878" stroke-width="1.3"/>
<path d="M528.9,202.2 527.9,203.5 527.0,204.8 526.1,206.2 525.2,207.5 524.3,208.8 523.4,210.1 522.6,211.5 521.7,212.8 520.9,214.1 520.1,215.5 519.3,216.8 518.5,218.1 517.8,219.5 517.0,220.8 516.3,222.2 515.6,223.5 514.9,224.9 514.2,226.3 513.5,227.6 512.9,229.0 512.3,230.3 511.7,231.7 511.1,233.1 510.5,234.5 510.0,235.8 509.4,237.2 508.9,238.6 508.4,240.0 508.0,241.3 507.5,242.7 507.1,244.1 506.7,245.5 506.3,246.9 505.9,248.3 505.6,249.7 505.2,251.1 504.9,252.5 504.6,253.9 504.4,255.3 504.1,256.7 503.9,258.1 503.7,259.5 503.5,260.9 503.4,262.3 503.2,263.7 503.1,265.1 503.0,266.5 503.0,267.9 502.9,269.3 502.9,270.7 502.9,272.1 502.9,273.5 503.0,275.0 503.0,276.4 503.1,277.8 503.2,279.2 503.4,280.6 503.5,282.0 503.7,283.4 503.9,284.9 504.1,286.3 504.4,287.7 504.6,289.1 504.9,290.5 505.3,292.0 505.6,293.4 506.0,294.8 506.3,296.2 506.7,297.7 507.2,299.1 507.6,300.5 508.1,301.9 508.6,303.4 509.1,304.8 509.7,306.2 510.2,307.6 510.8,309.1 511.4,310.5 512.1,311.9 512.7,313.3 513.4,314.8 514.1,316.2 514.9,317.6 515.6,319.1 516.4,320.5 517.2,321.9 518.0,323.3 518.8,324.8 519.7,326.2 520.6,327.6 521.5,329.0 522.4,330.5 523.4,331.9 524.4,333.3 525.3,334.7 526.4,336.2 527.4,337.6 528.5,339.0 529.6,340.5 530.7,341.9 531.8,343.3 532.9,344.7 534.1,346.1 535.3,347.6 536.5,349.0 537.7,350.4 539.0,351.8 540.3,353.3 541.6,354.7 542.9,356.1 544.2,357.5 545.6,358.9 547.0,360.3 548.4,361.8 549.8,363.2 551.2,364.6 552.7,366.0 554.2,367.4 555.7,368.8 557.2,370.2 558.7,371.7 560.3,373.1 561.8,374.5 563.4,375.9 565.0,377.3 566.7,378.7 568.3,380.1 570.0,381.5 571.7,382.9 573.4,384.3 575.1,385.7 576.8,387.1 578.6,388.5 580.4,389.9 582.2,391.3 584.0,392.7 585.8,394.1 587.6,395.5 589.5,396.8 591.4,398.2 593.2,399.6 595.2,401.0 597.1,402.4 599.0,403.8 601.0,405.1 602.9,406.5 604.9,407.9 606.9,409.2 608.9,410.6 610.9,412.0 613.0,413.3 615.0,414.7 617.1,416.1 619.1,417.4 621.2,418.8 623.3,420.1 625.4,421.5 627.6,422.8 629.7,424.2 631.8,425.5" fill="none" stroke="#5e5e5e" stroke-width="1.3" stroke-dasharray="1.3 2.6"/>
<path d="M528.9,202.2 553.3,173.3" fill="none" stroke="#787878" stroke-width="1.3"/>
<path d="M613.3,155.6 612.2,156.7 611.1,157.9 610.0,159.1 608.9,160.3 607.8,161.5 606.7,162.8 605.6,164.0 604.4,165.2 603.3,166.5 602.2,167.7 601.1,169.0 600.0,170.2 598.9,171.5 597.8,172.8 596.7,174.0 595.6,175.3 594.6,176.6 593.5,177.9 592.4,179.2 591.4,180.5 590.3,181.8 589.3,183.1 588.3,184.4 587.2,185.8 586.2,187.1 585.2,188.4 584.2,189.7 583.2,191.1 582.3,192.4 581.3,193.8 580.4,195.1 579.4,196.5 578.5,197.8 577.6,199.2 576.7,200.5 575.8,201.9 574.9,203.3 574.1,204.6 573.2,206.0 572.4,207.4 571.6,208.8 570.8,210.2 570.0,211.5 569.2,212.9 568.5,214.3 567.7,215.7 567.0,217.1 566.3,218.5 565.6,219.9 565.0,221.3 564.3,222.7 563.7,224.1 563.0,225.5 562.4,226.9 561.8,228.3 561.3,229.8 560.7,231.2 560.2,232.6 559.7,234.0 559.2,235.4 558.7,236.9 558.2,238.3 557.8,239.7 557.4,241.1 557.0,242.6 556.6,244.0 556.2,245.4 555.9,246.9 555.5,248.3 555.2,249.7 554.9,251.2 554.7,252.6 554.4,254.0 554.2,255.5 554.0,256.9 553.8,258.4 553.6,259.8 553.5,261.3 553.4,262.7 553.3,264.1 553.2,265.6 553.1,267.0 553.1,268.5 553.0,269.9 553.0,271.4 553.1,272.8 553.1,274.3 553.1,275.7 553.2,277.2 553.3,278.7 553.5,280.1 553.6,281.6 553.8,283.0 553.9,284.5 554.1,285.9 554.4,287.4 554.6,288.9 554.9,290.3 555.2,291.8 555.5,293.2 555.8,294.7 556.2,296.2 556.6,297.6 556.9,299.1 557.4,300.5 557.8,302.0 558.3,303.5 558.7,304.9 559.2,306.4 559.8,307.8 560.3,309.3 560.9,310.8 561.5,312.2 562.1,313.7 562.7,315.2 563.3,316.6 564.0,318.1 564.7,319.6 565.4,321.0 566.1,322.5 566.9,323.9 567.7,325.4 568.5,326.9 569.3,328.3 570.1,329.8 571.0,331.3 571.8,332.7 572.7,334.2 573.7,335.7 574.6,337.1 575.5,338.6 576.5,340.0 577.5,341.5 578.5,343.0 579.6,344.4 580.6,345.9 581.7,347.3 582.8,348.8 583.9,350.3 585.0,351.7 586.2,353.2 587.4,354.6 588.6,356.1 589.8,357.6 591.0,359.0 592.3,360.5 593.5,361.9 594.8,363.4 596.1,364.8 597.4,366.3 598.8,367.7 600.1,369.2 601.5,370.6 602.9,372.1 604.3,373.5 605.7,375.0 607.2,376.4 608.6,377.9 610.1,379.3 611.6,380.8" fill="none" stroke="#5e5e5e" stroke-width="1.3" stroke-dasharray="1.3 2.6"/>
<path d="M613.3,155.6 630.0,137.8" fill="none" stroke="#787878" stroke-width="1.3"/>
<path d="M771.1,91.1 768.5,92.7 765.8,94.2 763.2,95.8 760.6,97.4 757.9,99.0 755.3,100.5 752.7,102.1 750.1,103.7 747.5,105.3 744.9,106.9 742.3,108.5 739.8,110.1 737.2,111.6 734.7,113.2 732.1,114.8 729.6,116.4 727.1,118.0 724.5,119.6 722.0,121.2 719.6,122.8 717.1,124.4 714.6,126.0 712.2,127.6 709.7,129.2 707.3,130.8 704.9,132.4 702.5,134.0 700.1,135.6 697.7,137.2 695.4,138.8 693.0,140.4 690.7,142.0 688.4,143.6 686.1,145.3 683.8,146.9 681.5,148.5 679.3,150.1 677.0,151.7 674.8,153.3 672.6,154.9 670.4,156.5 668.3,158.1 666.1,159.7 664.0,161.4 661.9,163.0 659.8,164.6 657.7,166.2 655.6,167.8 653.6,169.4 651.5,171.0 649.5,172.6 647.5,174.3 645.6,175.9 643.6,177.5 641.7,179.1 639.7,180.7 637.8,182.3 636.0,183.9 634.1,185.6 632.3,187.2 630.5,188.8 628.7,190.4 626.9,192.0 625.1,193.6 623.4,195.3 621.7,196.9 620.0,198.5 618.3,200.1 616.7,201.7 615.0,203.3 613.4,205.0 611.8,206.6 610.3,208.2 608.7,209.8 607.2,211.4 605.7,213.0 604.2,214.7 602.8,216.3 601.3,217.9 599.9,219.5 598.5,221.1 597.2,222.8 595.8,224.4 594.5,226.0 593.2,227.6 591.9,229.2 590.7,230.8 589.4,232.5 588.2,234.1 587.1,235.7 585.9,237.3 584.8,238.9 583.7,240.6 582.6,242.2 581.5,243.8 580.5,245.4 579.5,247.0 578.5,248.7 577.5,250.3 576.6,251.9 575.7,253.5 574.8,255.1 573.9,256.8 573.1,258.4 572.3,260.0 571.5,261.6 570.7,263.2 570.0,264.9 569.3,266.5 568.6,268.1 567.9,269.7 567.3,271.3 566.6,273.0 566.1,274.6 565.5,276.2 565.0,277.8 564.4,279.4 564.0,281.1 563.5,282.7 563.1,284.3 562.6,285.9 562.3,287.5 561.9,289.2 561.6,290.8 561.3,292.4 561.0,294.0 560.7,295.7 560.5,297.3 560.3,298.9 560.1,300.5 560.0,302.1 559.8,303.8 559.7,305.4 559.6,307.0 559.6,308.6 559.6,310.2 559.6,311.9 559.6,313.5 559.7,315.1 559.7,316.7 559.8,318.3 560.0,320.0 560.1,321.6 560.3,323.2 560.5,324.8 560.8,326.4 561.0,328.1 561.3,329.7 561.6,331.3 562.0,332.9 562.3,334.6 562.7,336.2 563.1,337.8 563.6,339.4 564.0,341.0 564.5,342.7 565.0,344.3 565.6,345.9 566.2,347.5 566.7,349.1" fill="none" stroke="#5e5e5e" stroke-width="1.3" stroke-dasharray="1.3 2.6"/>
<path d="M771.1,91.1 797.8,75.6" fill="none" stroke="#787878" stroke-width="1.3"/>
<path d="M764.4,104.4 762.0,105.0 759.5,105.6 756.9,106.2 754.3,106.8 751.7,107.5 749.0,108.2 746.2,108.9 743.4,109.6 740.6,110.4 737.8,111.1 734.9,112.0 732.0,112.8 729.0,113.6 726.0,114.5 722.9,115.4 719.9,116.3 716.8,117.2 713.7,118.2 710.5,119.1 707.3,120.1 704.1,121.1 700.9,122.1 697.6,123.1 694.3,124.2 691.0,125.2 687.7,126.3 684.3,127.4 681.0,128.5 677.6,129.6 674.2,130.7 670.8,131.9 667.3,133.0 663.9,134.2 660.5,135.3 657.0,136.5 653.5,137.7 650.0,138.9 646.5,140.1 643.0,141.3 639.5,142.6 636.0,143.8 632.5,145.0 629.0,146.3 625.5,147.5 621.9,148.8 618.4,150.1 614.9,151.4 611.4,152.6 607.8,153.9 604.3,155.2 600.8,156.5 597.3,157.9 593.8,159.2 590.2,160.5 586.7,161.8 583.2,163.2 579.7,164.5 576.3,165.9 572.8,167.2 569.3,168.6 565.9,169.9 562.4,171.3 559.0,172.7 555.5,174.0 552.1,175.4 548.7,176.8 545.3,178.2 541.9,179.6 538.6,180.9 535.2,182.3 531.9,183.7 528.5,185.1 525.2,186.5 521.9,188.0 518.7,189.4 515.4,190.8 512.2,192.2 508.9,193.6 505.7,195.0 502.5,196.5 499.4,197.9 496.2,199.3 493.1,200.8 490.0,202.2 486.9,203.6 483.8,205.1 480.8,206.5 477.7,208.0 474.7,209.4 471.8,210.9 468.8,212.3 465.9,213.8 463.0,215.2 460.1,216.7 457.2,218.1 454.4,219.6 451.6,221.0 448.8,222.5 446.0,224.0 443.3,225.4 440.6,226.9 437.9,228.4 435.2,229.8 432.6,231.3 430.0,232.8 427.4,234.3 424.9,235.7 422.4,237.2 419.9,238.7 417.4,240.2 415.0,241.7 412.6,243.1 410.2,244.6 407.9,246.1 405.6,247.6 403.3,249.1 401.1,250.6 398.8,252.0 396.7,253.5 394.5,255.0 392.4,256.5 390.3,258.0 388.2,259.5 386.2,261.0 384.2,262.5 382.2,264.0 380.3,265.5 378.4,267.0 376.5,268.5 374.7,270.0 372.9,271.5 371.1,272.9 369.4,274.4 367.7,275.9 366.1,277.4 364.4,278.9 362.8,280.4 361.3,281.9 359.8,283.4 358.3,284.9 356.8,286.5 355.4,288.0 354.0,289.5 352.7,291.0 351.4,292.5 350.1,294.0 348.8,295.5 347.6,297.0 346.5,298.5 345.3,300.0 344.2,301.5 343.2,303.0 342.1,304.5 341.2,306.0 340.2,307.5 339.3,309.0 338.4,310.5 337.6,312.0 336.8,313.5 336.0,315.0" fill="none" stroke="#5e5e5e" stroke-width="1.3" stroke-dasharray="1.3 2.6"/>
<path d="M764.4,104.4 775.6,102.2" fill="none" stroke="#787878" stroke-width="1.3"/>
<path d="M748.9,173.3 746.8,174.2 744.7,175.1 742.6,176.0 740.5,176.9 738.3,177.8 736.2,178.7 734.1,179.7 732.0,180.6 729.8,181.5 727.7,182.5 725.6,183.5 723.4,184.4 721.3,185.4 719.2,186.4 717.0,187.4 714.9,188.4 712.7,189.4 710.6,190.4 708.4,191.5 706.3,192.5 704.1,193.6 702.0,194.6 699.8,195.7 697.7,196.7 695.5,197.8 693.4,198.9 691.3,199.9 689.1,201.0 687.0,202.1 684.9,203.2 682.7,204.3 680.6,205.4 678.5,206.5 676.4,207.7 674.2,208.8 672.1,209.9 670.0,211.0 667.9,212.2 665.8,213.3 663.7,214.5 661.6,215.6 659.6,216.8 657.5,218.0 655.4,219.1 653.3,220.3 651.3,221.5 649.2,222.6 647.2,223.8 645.2,225.0 643.1,226.2 641.1,227.4 639.1,228.6 637.1,229.8 635.1,231.0 633.1,232.2 631.1,233.4 629.2,234.6 627.2,235.8 625.2,237.1 623.3,238.3 621.4,239.5 619.4,240.7 617.5,242.0 615.6,243.2 613.7,244.4 611.9,245.7 610.0,246.9 608.1,248.2 606.3,249.4 604.5,250.7 602.7,251.9 600.8,253.2 599.0,254.4 597.3,255.7 595.5,256.9 593.7,258.2 592.0,259.5 590.3,260.7 588.5,262.0 586.8,263.3 585.1,264.5 583.5,265.8 581.8,267.1 580.2,268.4 578.5,269.6 576.9,270.9 575.3,272.2 573.7,273.5 572.1,274.8 570.6,276.1 569.0,277.3 567.5,278.6 566.0,279.9 564.5,281.2 563.0,282.5 561.5,283.8 560.1,285.1 558.6,286.4 557.2,287.7 555.8,289.0 554.4,290.3 553.1,291.6 551.7,292.9 550.4,294.2 549.1,295.5 547.8,296.8 546.5,298.1 545.2,299.4 544.0,300.7 542.7,302.0 541.5,303.3 540.3,304.6 539.1,305.9 538.0,307.2 536.8,308.5 535.7,309.8 534.6,311.1 533.5,312.4 532.4,313.7 531.4,315.0 530.3,316.3 529.3,317.6 528.3,318.9 527.3,320.3 526.4,321.6 525.4,322.9 524.5,324.2 523.6,325.5 522.7,326.8 521.8,328.1 521.0,329.4 520.1,330.7 519.3,332.0 518.5,333.3 517.7,334.6 517.0,335.9 516.2,337.2 515.5,338.5 514.8,339.8 514.1,341.1 513.5,342.4 512.8,343.7 512.2,345.0 511.6,346.3 511.0,347.6 510.4,348.9 509.9,350.2 509.3,351.5 508.8,352.8 508.3,354.1 507.9,355.4 507.4,356.7 507.0,358.0 506.5,359.3 506.1,360.6 505.7,361.9 505.4,363.2 505.0,364.5 504.7,365.7 504.4,367.0" fill="none" stroke="#5e5e5e" stroke-width="1.3" stroke-dasharray="1.3 2.6"/>
<path d="M748.9,173.3 815.6,151.1" fill="none" stroke="#787878" stroke-width="1.3"/>
<path d="M708.9,182.2 710.0,182.7 711.2,183.1 712.3,183.6 713.5,184.0 714.6,184.5 715.7,185.0 716.8,185.5 717.9,186.1 718.9,186.6 720.0,187.1 721.1,187.7 722.1,188.2 723.2,188.8 724.2,189.4 725.3,190.0 726.3,190.6 727.3,191.2 728.4,191.8 729.4,192.5 730.4,193.1 731.4,193.8 732.4,194.4 733.4,195.1 734.4,195.8 735.3,196.5 736.3,197.2 737.3,197.9 738.3,198.6 739.2,199.3 740.2,200.1 741.2,200.8 742.1,201.6 743.1,202.3 744.0,203.1 745.0,203.9 746.0,204.7 746.9,205.5 747.9,206.3 748.8,207.1 749.7,207.9 750.7,208.7 751.6,209.5 752.6,210.4 753.5,211.2 754.5,212.1 755.4,212.9 756.3,213.8 757.3,214.7 758.2,215.5 759.2,216.4 760.1,217.3 761.0,218.2 762.0,219.1 762.9,220.0 763.9,220.9 764.8,221.9 765.8,222.8 766.7,223.7 767.6,224.7 768.6,225.6 769.5,226.5 770.5,227.5 771.4,228.4 772.4,229.4 773.4,230.4 774.3,231.3 775.3,232.3 776.2,233.3 777.2,234.3 778.2,235.3 779.1,236.3 780.1,237.3 781.1,238.3 782.0,239.3 783.0,240.3 784.0,241.3 785.0,242.3 786.0,243.4 786.9,244.4 787.9,245.4 788.9,246.4 789.9,247.5 790.9,248.5 791.9,249.6 792.9,250.6 793.9,251.7 794.9,252.7 795.9,253.8 796.9,254.8 798.0,255.9 799.0,257.0 800.0,258.0 801.0,259.1 802.0,260.2 803.1,261.3 804.1,262.3 805.1,263.4 806.2,264.5 807.2,265.6 808.3,266.7 809.3,267.8 810.4,268.9 811.4,270.0 812.5,271.1 813.5,272.2 814.6,273.3 815.6,274.4 816.7,275.5 817.8,276.6 818.9,277.7 819.9,278.8 821.0,279.9 822.1,281.0 823.2,282.2 824.3,283.3 825.3,284.4 826.4,285.5 827.5,286.7 828.6,287.8 829.7,288.9 830.8,290.0 831.9,291.2 833.0,292.3 834.1,293.4 835.3,294.5 836.4,295.7 837.5,296.8 838.6,298.0 839.7,299.1 840.9,300.2 842.0,301.4 843.1,302.5 844.2,303.6 845.4,304.8 846.5,305.9 847.6,307.1 848.8,308.2 849.9,309.3 851.1,310.5 852.2,311.6 853.4,312.8 854.5,313.9 855.7,315.1 856.8,316.2 858.0,317.3 859.1,318.5 860.3,319.6 861.4,320.8 862.6,321.9 863.7,323.1 864.9,324.2 866.1,325.3 867.2,326.5 868.4,327.6 869.6,328.8 870.7,329.9 871.9,331.1 873.1,332.2 874.3,333.3 875.4,334.5" fill="none" stroke="#5e5e5e" stroke-width="1.3" stroke-dasharray="1.3 2.6"/>
<path d="M702.2,180.0 708.9,182.2" fill="none" stroke="#787878" stroke-width="1.3"/>
<path d="M731.1,195.6 731.6,196.6 732.1,197.7 732.6,198.7 733.0,199.8 733.5,200.9 734.0,202.0 734.5,203.1 735.0,204.1 735.5,205.2 736.0,206.4 736.5,207.5 737.0,208.6 737.5,209.7 738.0,210.8 738.5,212.0 739.1,213.1 739.6,214.2 740.1,215.4 740.6,216.5 741.1,217.7 741.7,218.8 742.2,220.0 742.8,221.2 743.3,222.3 743.9,223.5 744.4,224.7 745.0,225.9 745.5,227.1 746.1,228.3 746.7,229.4 747.3,230.6 747.8,231.8 748.4,233.1 749.0,234.3 749.6,235.5 750.2,236.7 750.8,237.9 751.4,239.1 752.1,240.3 752.7,241.6 753.3,242.8 754.0,244.0 754.6,245.3 755.3,246.5 755.9,247.7 756.6,249.0 757.2,250.2 757.9,251.5 758.6,252.7 759.3,254.0 759.9,255.2 760.6,256.5 761.3,257.7 762.0,259.0 762.7,260.2 763.5,261.5 764.2,262.8 764.9,264.0 765.7,265.3 766.4,266.6 767.1,267.8 767.9,269.1 768.7,270.4 769.4,271.7 770.2,272.9 771.0,274.2 771.7,275.5 772.5,276.8 773.3,278.1 774.1,279.3 774.9,280.6 775.7,281.9 776.6,283.2 777.4,284.5 778.2,285.8 779.1,287.1 779.9,288.4 780.7,289.6 781.6,290.9 782.4,292.2 783.3,293.5 784.2,294.8 785.1,296.1 785.9,297.4 786.8,298.7 787.7,300.0 788.6,301.3 789.5,302.6 790.4,303.9 791.3,305.2 792.3,306.5 793.2,307.8 794.1,309.1 795.0,310.4 796.0,311.7 796.9,313.0 797.9,314.3 798.8,315.6 799.8,316.9 800.8,318.2 801.7,319.5 802.7,320.8 803.7,322.1 804.7,323.4 805.7,324.7 806.7,326.0 807.7,327.3 808.7,328.6 809.7,329.9 810.7,331.2 811.7,332.5 812.7,333.8 813.8,335.1 814.8,336.4 815.8,337.7 816.9,339.0 817.9,340.3 819.0,341.6 820.0,342.9 821.1,344.2 822.1,345.5 823.2,346.8 824.2,348.1 825.3,349.4 826.4,350.7 827.5,352.0 828.6,353.3 829.6,354.6 830.7,355.9 831.8,357.2 832.9,358.5 834.0,359.7 835.1,361.0 836.2,362.3 837.3,363.6 838.4,364.9 839.5,366.2 840.7,367.4 841.8,368.7 842.9,370.0 844.0,371.3 845.2,372.5 846.3,373.8 847.4,375.1 848.5,376.3 849.7,377.6 850.8,378.9 852.0,380.1 853.1,381.4 854.3,382.7 855.4,383.9 856.6,385.2 857.7,386.4 858.9,387.7 860.0,388.9 861.2,390.2 862.3,391.4 863.5,392.6 864.6,393.9 865.8,395.1" fill="none" stroke="#5e5e5e" stroke-width="1.3" stroke-dasharray="1.3 2.6"/>
<path d="M722.2,177.8 731.1,195.6" fill="none" stroke="#787878" stroke-width="1.3"/>
<path d="M780.0,206.7 778.5,208.0 777.0,209.4 775.5,210.8 774.0,212.2 772.5,213.5 771.0,214.9 769.5,216.3 768.1,217.7 766.6,219.1 765.2,220.5 763.7,221.9 762.3,223.2 760.8,224.6 759.4,226.0 758.0,227.4 756.6,228.8 755.2,230.3 753.8,231.7 752.4,233.1 751.0,234.5 749.6,235.9 748.2,237.3 746.9,238.7 745.5,240.1 744.2,241.6 742.9,243.0 741.5,244.4 740.2,245.8 738.9,247.2 737.6,248.7 736.3,250.1 735.0,251.5 733.8,253.0 732.5,254.4 731.3,255.8 730.0,257.3 728.8,258.7 727.6,260.1 726.3,261.6 725.1,263.0 723.9,264.4 722.8,265.9 721.6,267.3 720.4,268.8 719.3,270.2 718.1,271.7 717.0,273.1 715.9,274.5 714.8,276.0 713.7,277.4 712.6,278.9 711.5,280.3 710.5,281.8 709.4,283.2 708.4,284.7 707.4,286.1 706.4,287.6 705.3,289.0 704.4,290.5 703.4,291.9 702.4,293.4 701.5,294.8 700.5,296.3 699.6,297.7 698.7,299.2 697.8,300.7 696.9,302.1 696.0,303.6 695.1,305.0 694.3,306.5 693.4,307.9 692.6,309.4 691.8,310.8 691.0,312.3 690.2,313.8 689.4,315.2 688.6,316.7 687.9,318.1 687.1,319.6 686.4,321.0 685.7,322.5 685.0,324.0 684.3,325.4 683.6,326.9 683.0,328.3 682.3,329.8 681.7,331.2 681.1,332.7 680.4,334.2 679.9,335.6 679.3,337.1 678.7,338.5 678.2,340.0 677.6,341.4 677.1,342.9 676.6,344.3 676.1,345.8 675.6,347.2 675.1,348.7 674.7,350.1 674.2,351.6 673.8,353.1 673.4,354.5 673.0,356.0 672.6,357.4 672.2,358.9 671.8,360.3 671.5,361.7 671.2,363.2 670.8,364.6 670.5,366.1 670.2,367.5 670.0,369.0 669.7,370.4 669.4,371.9 669.2,373.3 669.0,374.7 668.8,376.2 668.6,377.6 668.4,379.1 668.2,380.5 668.1,381.9 667.9,383.4 667.8,384.8 667.7,386.2 667.6,387.7 667.5,389.1 667.4,390.5 667.3,392.0 667.3,393.4 667.2,394.8 667.2,396.2 667.2,397.7 667.2,399.1 667.2,400.5 667.3,401.9 667.3,403.3 667.3,404.7 667.4,406.2 667.5,407.6 667.6,409.0 667.7,410.4 667.8,411.8 667.9,413.2 668.0,414.6 668.2,416.0 668.4,417.4 668.5,418.8 668.7,420.2 668.9,421.6 669.1,423.0 669.3,424.3 669.6,425.7 669.8,427.1 670.0,428.5 670.3,429.9 670.6,431.2 670.9,432.6 671.1,434.0 671.4,435.3" fill="none" stroke="#5e5e5e" stroke-width="1.3" stroke-dasharray="1.3 2.6"/>
<path d="M780.0,206.7 797.8,191.1" fill="none" stroke="#787878" stroke-width="1.3"/>
<path d="M903.3,56.7 903.2,58.3 903.1,59.9 903.0,61.5 903.0,63.2 902.9,64.8 902.8,66.4 902.7,68.0 902.6,69.7 902.5,71.3 902.4,72.9 902.3,74.5 902.2,76.2 902.1,77.8 902.0,79.4 901.9,81.0 901.8,82.7 901.7,84.3 901.6,85.9 901.5,87.5 901.4,89.2 901.3,90.8 901.3,92.4 901.2,94.0 901.1,95.7 901.0,97.3 900.9,98.9 900.8,100.6 900.7,102.2 900.6,103.8 900.5,105.4 900.4,107.1 900.3,108.7 900.2,110.3 900.1,111.9 900.0,113.6 900.0,115.2 899.9,116.8 899.8,118.5 899.7,120.1 899.6,121.7 899.5,123.3 899.4,125.0 899.3,126.6 899.2,128.2 899.1,129.8 899.0,131.5 899.0,133.1 898.9,134.7 898.8,136.4 898.7,138.0 898.6,139.6 898.5,141.2 898.4,142.9 898.3,144.5 898.2,146.1 898.2,147.8 898.1,149.4 898.0,151.0 897.9,152.6 897.8,154.3 897.7,155.9 897.6,157.5 897.6,159.1 897.5,160.8 897.4,162.4 897.3,164.0 897.2,165.7 897.1,167.3 897.1,168.9 897.0,170.5 896.9,172.2 896.8,173.8 896.7,175.4 896.7,177.0 896.6,178.7 896.5,180.3 896.4,181.9 896.3,183.6 896.3,185.2 896.2,186.8 896.1,188.4 896.0,190.1 896.0,191.7 895.9,193.3 895.8,195.0 895.7,196.6 895.7,198.2 895.6,199.8 895.5,201.5 895.4,203.1 895.4,204.7 895.3,206.3 895.2,208.0 895.2,209.6 895.1,211.2 895.0,212.9 895.0,214.5 894.9,216.1 894.8,217.7 894.8,219.4 894.7,221.0 894.6,222.6 894.6,224.3 894.5,225.9 894.4,227.5 894.4,229.1 894.3,230.8 894.2,232.4 894.2,234.0 894.1,235.6 894.1,237.3 894.0,238.9 893.9,240.5 893.9,242.2 893.8,243.8 893.8,245.4 893.7,247.0 893.7,248.7 893.6,250.3 893.6,251.9 893.5,253.6 893.4,255.2 893.4,256.8 893.3,258.4 893.3,260.1 893.2,261.7 893.2,263.3 893.1,264.9 893.1,266.6 893.0,268.2 893.0,269.8 893.0,271.5 892.9,273.1 892.9,274.7 892.8,276.3 892.8,278.0 892.7,279.6 892.7,281.2 892.7,282.9 892.6,284.5 892.6,286.1 892.5,287.7 892.5,289.4 892.5,291.0 892.4,292.6 892.4,294.3 892.4,295.9 892.3,297.5 892.3,299.1 892.3,300.8 892.2,302.4 892.2,304.0 892.2,305.6 892.1,307.3 892.1,308.9 892.1,310.5 892.1,312.2 892.0,313.8 892.0,315.4 892.0,317.0" fill="none" stroke="#5e5e5e" stroke-width="1.3" stroke-dasharray="1.3 2.6"/>
<path d="M904.4,37.8 903.3,56.7" fill="none" stroke="#787878" stroke-width="1.3"/>
<path d="M904.4,68.9 902.9,69.3 901.3,69.7 899.7,70.3 898.2,70.8 896.6,71.5 895.0,72.1 893.4,72.8 891.8,73.6 890.2,74.4 888.6,75.3 887.0,76.1 885.3,77.1 883.7,78.0 882.0,79.0 880.3,80.0 878.7,81.1 877.0,82.2 875.2,83.3 873.5,84.4 871.8,85.5 870.1,86.7 868.3,87.9 866.6,89.1 864.8,90.4 863.0,91.6 861.2,92.9 859.5,94.1 857.7,95.4 855.9,96.7 854.0,98.1 852.2,99.4 850.4,100.7 848.6,102.1 846.8,103.5 844.9,104.8 843.1,106.2 841.3,107.6 839.4,109.0 837.6,110.4 835.7,111.8 833.9,113.2 832.1,114.7 830.2,116.1 828.4,117.5 826.5,119.0 824.7,120.4 822.8,121.9 821.0,123.4 819.1,124.8 817.3,126.3 815.5,127.8 813.6,129.3 811.8,130.7 810.0,132.2 808.1,133.7 806.3,135.2 804.5,136.7 802.7,138.2 800.9,139.7 799.1,141.2 797.2,142.7 795.4,144.2 793.7,145.8 791.9,147.3 790.1,148.8 788.3,150.3 786.5,151.9 784.8,153.4 783.0,154.9 781.2,156.4 779.5,158.0 777.8,159.5 776.0,161.0 774.3,162.6 772.6,164.1 770.9,165.7 769.2,167.2 767.5,168.8 765.8,170.3 764.1,171.9 762.4,173.4 760.8,175.0 759.1,176.5 757.5,178.1 755.8,179.6 754.2,181.2 752.6,182.7 751.0,184.3 749.4,185.9 747.8,187.4 746.2,189.0 744.7,190.5 743.1,192.1 741.6,193.7 740.0,195.2 738.5,196.8 737.0,198.4 735.5,199.9 734.0,201.5 732.5,203.1 731.1,204.6 729.6,206.2 728.2,207.8 726.7,209.3 725.3,210.9 723.9,212.5 722.5,214.1 721.1,215.6 719.7,217.2 718.4,218.8 717.0,220.4 715.7,221.9 714.4,223.5 713.1,225.1 711.8,226.7 710.5,228.3 709.3,229.8 708.0,231.4 706.8,233.0 705.5,234.6 704.3,236.2 703.1,237.7 702.0,239.3 700.8,240.9 699.6,242.5 698.5,244.1 697.4,245.6 696.3,247.2 695.2,248.8 694.1,250.4 693.0,252.0 692.0,253.6 690.9,255.2 689.9,256.7 688.9,258.3 687.9,259.9 686.9,261.5 686.0,263.1 685.0,264.7 684.1,266.3 683.2,267.8 682.3,269.4 681.4,271.0 680.6,272.6 679.7,274.2 678.9,275.8 678.1,277.4 677.3,278.9 676.5,280.5 675.7,282.1 675.0,283.7 674.2,285.3 673.5,286.9 672.8,288.5 672.1,290.1 671.4,291.7 670.8,293.2 670.2,294.8 669.5,296.4 668.9,298.0" fill="none" stroke="#5e5e5e" stroke-width="1.3" stroke-dasharray="1.3 2.6"/>
<path d="M904.4,68.9 914.4,67.8" fill="none" stroke="#787878" stroke-width="1.3"/>
<path d="M921.1,86.7 922.8,86.9 924.5,87.2 926.2,87.6 928.0,88.0 929.7,88.4 931.5,88.9 933.3,89.4 935.1,90.0 936.9,90.5 938.7,91.2 940.6,91.8 942.4,92.5 944.3,93.2 946.2,93.9 948.2,94.7 950.1,95.5 952.1,96.4 954.1,97.2 956.0,98.1 958.1,99.0 960.1,99.9 962.1,100.9 964.2,101.9 966.3,102.9 968.4,103.9 970.5,104.9 972.6,106.0 974.7,107.1 976.9,108.2 979.0,109.3 981.2,110.4 983.3,111.6 985.5,112.7 987.7,113.9 989.9,115.1 992.1,116.3 994.4,117.5 996.6,118.7 998.8,119.9 1001.1,121.2 1003.3,122.4 1005.6,123.7 1007.8,125.0 1010.1,126.2 1012.4,127.5 1014.6,128.8 1016.9,130.2 1019.2,131.5 1021.4,132.8 1023.7,134.1 1026.0,135.5 1028.3,136.8 1030.5,138.2 1032.8,139.5 1035.1,140.9 1037.4,142.3 1039.7,143.7 1041.9,145.0 1044.2,146.4 1046.5,147.8 1048.7,149.2 1051.0,150.6 1053.3,152.0 1055.5,153.5 1057.8,154.9 1060.0,156.3 1062.2,157.7 1064.5,159.1 1066.7,160.6 1068.9,162.0 1071.1,163.5 1073.4,164.9 1075.6,166.4 1077.8,167.8 1079.9,169.3 1082.1,170.7 1084.3,172.2 1086.5,173.6 1088.6,175.1 1090.8,176.6 1092.9,178.0 1095.0,179.5 1097.1,181.0 1099.2,182.5 1101.3,183.9 1103.4,185.4 1105.5,186.9 1107.6,188.4 1109.6,189.9 1111.7,191.4 1113.7,192.9 1115.7,194.4 1117.7,195.9 1119.7,197.4 1121.7,198.9 1123.7,200.4 1125.6,201.9 1127.6,203.4 1129.5,204.9 1131.4,206.4 1133.3,207.9 1135.2,209.4 1137.1,210.9 1139.0,212.4 1140.8,213.9 1142.6,215.4 1144.5,217.0 1146.3,218.5 1148.0,220.0 1149.8,221.5 1151.6,223.0 1153.3,224.6 1155.0,226.1 1156.7,227.6 1158.4,229.1 1160.1,230.7 1161.8,232.2 1163.4,233.7 1165.0,235.2 1166.6,236.8 1168.2,238.3 1169.8,239.8 1171.4,241.4 1172.9,242.9 1174.4,244.4 1175.9,246.0 1177.4,247.5 1178.9,249.0 1180.3,250.6 1181.8,252.1 1183.2,253.6 1184.6,255.2 1185.9,256.7 1187.3,258.2 1188.6,259.8 1189.9,261.3 1191.2,262.9 1192.5,264.4 1193.8,265.9 1195.0,267.5 1196.2,269.0 1197.4,270.6 1198.6,272.1 1199.8,273.7 1200.9,275.2 1202.0,276.7 1203.1,278.3 1204.2,279.8 1205.2,281.4 1206.3,282.9 1207.3,284.5 1208.3,286.0 1209.3,287.6 1210.2,289.1 1211.2,290.7 1212.1,292.2 1213.0,293.7 1213.8,295.3 1214.7,296.8 1215.5,298.4" fill="none" stroke="#5e5e5e" stroke-width="1.3" stroke-dasharray="1.3 2.6"/>
<path d="M902.2,86.7 921.1,86.7" fill="none" stroke="#787878" stroke-width="1.3"/>
<path d="M864.4,126.7 864.9,128.0 865.3,129.4 865.7,130.8 866.1,132.2 866.5,133.6 866.9,135.0 867.4,136.4 867.8,137.8 868.2,139.2 868.6,140.6 869.0,142.0 869.5,143.5 869.9,144.9 870.3,146.3 870.7,147.8 871.2,149.2 871.6,150.7 872.0,152.1 872.4,153.6 872.9,155.1 873.3,156.5 873.7,158.0 874.2,159.5 874.6,160.9 875.0,162.4 875.5,163.9 875.9,165.4 876.3,166.9 876.8,168.3 877.2,169.8 877.7,171.3 878.1,172.8 878.6,174.3 879.0,175.8 879.4,177.3 879.9,178.8 880.3,180.3 880.8,181.8 881.3,183.3 881.7,184.9 882.2,186.4 882.6,187.9 883.1,189.4 883.5,190.9 884.0,192.4 884.5,194.0 884.9,195.5 885.4,197.0 885.8,198.5 886.3,200.1 886.8,201.6 887.2,203.1 887.7,204.6 888.2,206.2 888.6,207.7 889.1,209.2 889.6,210.8 890.1,212.3 890.5,213.8 891.0,215.4 891.5,216.9 892.0,218.5 892.4,220.0 892.9,221.5 893.4,223.1 893.9,224.6 894.3,226.2 894.8,227.7 895.3,229.3 895.8,230.8 896.3,232.3 896.7,233.9 897.2,235.4 897.7,237.0 898.2,238.5 898.7,240.1 899.2,241.6 899.6,243.2 900.1,244.7 900.6,246.3 901.1,247.8 901.6,249.4 902.1,251.0 902.5,252.5 903.0,254.1 903.5,255.6 904.0,257.2 904.5,258.7 905.0,260.3 905.4,261.8 905.9,263.4 906.4,265.0 906.9,266.5 907.4,268.1 907.8,269.6 908.3,271.2 908.8,272.8 909.3,274.3 909.8,275.9 910.2,277.4 910.7,279.0 911.2,280.6 911.7,282.1 912.2,283.7 912.6,285.2 913.1,286.8 913.6,288.4 914.1,289.9 914.5,291.5 915.0,293.1 915.5,294.6 915.9,296.2 916.4,297.7 916.9,299.3 917.4,300.9 917.8,302.4 918.3,304.0 918.8,305.6 919.2,307.1 919.7,308.7 920.1,310.2 920.6,311.8 921.1,313.4 921.5,314.9 922.0,316.5 922.4,318.1 922.9,319.6 923.3,321.2 923.8,322.8 924.2,324.3 924.7,325.9 925.1,327.5 925.6,329.0 926.0,330.6 926.4,332.1 926.9,333.7 927.3,335.3 927.8,336.8 928.2,338.4 928.6,340.0 929.1,341.5 929.5,343.1 929.9,344.7 930.3,346.2 930.8,347.8 931.2,349.3 931.6,350.9 932.0,352.5 932.4,354.0 932.8,355.6 933.2,357.2 933.7,358.7 934.1,360.3 934.5,361.8 934.9,363.4 935.3,365.0 935.7,366.5 936.1,368.1 936.5,369.6 936.8,371.2" fill="none" stroke="#5e5e5e" stroke-width="1.3" stroke-dasharray="1.3 2.6"/>
<path d="M842.2,83.3 853.3,93.3 864.4,126.7" fill="none" stroke="#787878" stroke-width="1.3"/>
<path d="M932.2,116.7 933.7,117.8 935.2,119.0 936.7,120.2 938.2,121.4 939.7,122.7 941.2,123.9 942.7,125.1 944.2,126.4 945.8,127.7 947.3,128.9 948.8,130.2 950.3,131.5 951.8,132.8 953.3,134.1 954.9,135.4 956.4,136.8 957.9,138.1 959.4,139.4 960.9,140.8 962.5,142.1 964.0,143.5 965.5,144.8 967.0,146.2 968.5,147.6 970.0,149.0 971.6,150.3 973.1,151.7 974.6,153.1 976.1,154.5 977.6,155.9 979.1,157.3 980.6,158.8 982.1,160.2 983.6,161.6 985.1,163.0 986.6,164.4 988.1,165.9 989.6,167.3 991.1,168.7 992.6,170.2 994.0,171.6 995.5,173.1 997.0,174.5 998.4,176.0 999.9,177.4 1001.4,178.9 1002.8,180.4 1004.2,181.8 1005.7,183.3 1007.1,184.8 1008.6,186.2 1010.0,187.7 1011.4,189.2 1012.8,190.7 1014.2,192.1 1015.6,193.6 1017.0,195.1 1018.4,196.6 1019.8,198.1 1021.2,199.6 1022.5,201.1 1023.9,202.6 1025.2,204.1 1026.6,205.5 1027.9,207.0 1029.3,208.5 1030.6,210.0 1031.9,211.6 1033.2,213.1 1034.5,214.6 1035.8,216.1 1037.1,217.6 1038.4,219.1 1039.6,220.6 1040.9,222.1 1042.2,223.6 1043.4,225.1 1044.6,226.6 1045.9,228.2 1047.1,229.7 1048.3,231.2 1049.5,232.7 1050.7,234.2 1051.8,235.8 1053.0,237.3 1054.2,238.8 1055.3,240.3 1056.5,241.8 1057.6,243.4 1058.7,244.9 1059.8,246.4 1060.9,247.9 1062.0,249.5 1063.1,251.0 1064.2,252.5 1065.2,254.1 1066.3,255.6 1067.3,257.1 1068.3,258.7 1069.3,260.2 1070.4,261.7 1071.3,263.2 1072.3,264.8 1073.3,266.3 1074.3,267.8 1075.2,269.4 1076.1,270.9 1077.1,272.5 1078.0,274.0 1078.9,275.5 1079.8,277.1 1080.6,278.6 1081.5,280.1 1082.3,281.7 1083.2,283.2 1084.0,284.8 1084.8,286.3 1085.6,287.8 1086.4,289.4 1087.2,290.9 1088.0,292.5 1088.7,294.0 1089.5,295.5 1090.2,297.1 1090.9,298.6 1091.6,300.2 1092.3,301.7 1093.0,303.2 1093.6,304.8 1094.3,306.3 1094.9,307.9 1095.5,309.4 1096.2,310.9 1096.7,312.5 1097.3,314.0 1097.9,315.6 1098.5,317.1 1099.0,318.7 1099.5,320.2 1100.1,321.7 1100.6,323.3 1101.0,324.8 1101.5,326.4 1102.0,327.9 1102.4,329.4 1102.9,331.0 1103.3,332.5 1103.7,334.1 1104.1,335.6 1104.5,337.2 1104.8,338.7 1105.2,340.2 1105.5,341.8 1105.9,343.3 1106.2,344.9 1106.5,346.4 1106.8,347.9 1107.0,349.5 1107.3,351.0 1107.5,352.6" fill="none" stroke="#5e5e5e" stroke-width="1.3" stroke-dasharray="1.3 2.6"/>
<path d="M915.6,104.4 932.2,116.7" fill="none" stroke="#787878" stroke-width="1.3"/>
<path d="M882.2,105.6 883.5,106.3 884.8,107.0 886.1,107.8 887.3,108.6 888.6,109.5 889.8,110.3 891.1,111.2 892.4,112.1 893.6,113.0 894.9,113.9 896.1,114.9 897.4,115.8 898.6,116.8 899.9,117.8 901.1,118.9 902.3,119.9 903.6,120.9 904.8,122.0 906.1,123.1 907.3,124.2 908.6,125.3 909.8,126.4 911.1,127.6 912.3,128.7 913.6,129.9 914.8,131.0 916.1,132.2 917.3,133.4 918.6,134.6 919.8,135.8 921.1,137.0 922.4,138.3 923.6,139.5 924.9,140.8 926.1,142.0 927.4,143.3 928.6,144.5 929.9,145.8 931.2,147.1 932.4,148.4 933.7,149.7 934.9,151.0 936.2,152.3 937.4,153.6 938.7,155.0 940.0,156.3 941.2,157.6 942.5,159.0 943.7,160.3 945.0,161.7 946.2,163.0 947.5,164.4 948.7,165.8 950.0,167.1 951.2,168.5 952.5,169.9 953.7,171.3 955.0,172.7 956.2,174.1 957.4,175.5 958.7,176.9 959.9,178.3 961.1,179.7 962.4,181.1 963.6,182.5 964.8,183.9 966.1,185.3 967.3,186.8 968.5,188.2 969.7,189.6 970.9,191.1 972.1,192.5 973.3,193.9 974.5,195.4 975.7,196.8 976.9,198.3 978.1,199.7 979.3,201.1 980.5,202.6 981.7,204.1 982.8,205.5 984.0,207.0 985.2,208.4 986.3,209.9 987.5,211.3 988.6,212.8 989.8,214.3 990.9,215.7 992.1,217.2 993.2,218.7 994.3,220.2 995.4,221.6 996.6,223.1 997.7,224.6 998.8,226.1 999.9,227.5 1001.0,229.0 1002.0,230.5 1003.1,232.0 1004.2,233.5 1005.3,235.0 1006.3,236.5 1007.4,237.9 1008.4,239.4 1009.5,240.9 1010.5,242.4 1011.6,243.9 1012.6,245.4 1013.6,246.9 1014.6,248.4 1015.6,249.9 1016.6,251.4 1017.6,252.9 1018.6,254.4 1019.6,255.9 1020.5,257.4 1021.5,258.9 1022.4,260.4 1023.4,261.9 1024.3,263.4 1025.2,264.9 1026.2,266.4 1027.1,267.9 1028.0,269.4 1028.9,270.9 1029.8,272.4 1030.7,273.9 1031.5,275.4 1032.4,277.0 1033.2,278.5 1034.1,280.0 1034.9,281.5 1035.8,283.0 1036.6,284.5 1037.4,286.0 1038.2,287.5 1039.0,289.0 1039.8,290.6 1040.6,292.1 1041.3,293.6 1042.1,295.1 1042.8,296.6 1043.6,298.1 1044.3,299.6 1045.0,301.2 1045.7,302.7 1046.4,304.2 1047.1,305.7 1047.8,307.2 1048.5,308.7 1049.2,310.2 1049.8,311.8 1050.5,313.3 1051.1,314.8 1051.7,316.3 1052.3,317.8 1052.9,319.3 1053.5,320.8 1054.1,322.4 1054.7,323.9" fill="none" stroke="#5e5e5e" stroke-width="1.3" stroke-dasharray="1.3 2.6"/>
<path d="M875.6,102.2 882.2,105.6" fill="none" stroke="#787878" stroke-width="1.3"/>
<path d="M886.7,131.1 887.7,132.2 888.7,133.3 889.8,134.5 890.8,135.6 891.9,136.8 892.9,138.0 893.9,139.1 895.0,140.3 896.0,141.5 897.1,142.7 898.1,143.9 899.1,145.2 900.2,146.4 901.2,147.6 902.2,148.9 903.3,150.2 904.3,151.4 905.4,152.7 906.4,154.0 907.4,155.3 908.5,156.5 909.5,157.8 910.5,159.1 911.6,160.5 912.6,161.8 913.7,163.1 914.7,164.4 915.7,165.8 916.8,167.1 917.8,168.4 918.8,169.8 919.9,171.1 920.9,172.5 921.9,173.8 923.0,175.2 924.0,176.6 925.0,177.9 926.1,179.3 927.1,180.7 928.1,182.1 929.1,183.5 930.2,184.9 931.2,186.3 932.2,187.7 933.3,189.1 934.3,190.5 935.3,191.9 936.3,193.3 937.3,194.7 938.3,196.1 939.4,197.5 940.4,198.9 941.4,200.4 942.4,201.8 943.4,203.2 944.4,204.7 945.4,206.1 946.4,207.5 947.4,209.0 948.4,210.4 949.4,211.8 950.4,213.3 951.4,214.7 952.4,216.2 953.4,217.6 954.3,219.1 955.3,220.5 956.3,222.0 957.3,223.4 958.2,224.9 959.2,226.4 960.2,227.8 961.1,229.3 962.1,230.8 963.0,232.2 964.0,233.7 964.9,235.2 965.9,236.6 966.8,238.1 967.7,239.6 968.7,241.0 969.6,242.5 970.5,244.0 971.4,245.5 972.4,246.9 973.3,248.4 974.2,249.9 975.1,251.4 976.0,252.9 976.9,254.3 977.8,255.8 978.6,257.3 979.5,258.8 980.4,260.3 981.3,261.8 982.1,263.3 983.0,264.7 983.8,266.2 984.7,267.7 985.5,269.2 986.4,270.7 987.2,272.2 988.0,273.7 988.9,275.2 989.7,276.7 990.5,278.2 991.3,279.7 992.1,281.2 992.9,282.6 993.7,284.1 994.5,285.6 995.2,287.1 996.0,288.6 996.8,290.1 997.5,291.6 998.3,293.1 999.0,294.6 999.8,296.1 1000.5,297.6 1001.2,299.1 1002.0,300.6 1002.7,302.1 1003.4,303.6 1004.1,305.1 1004.8,306.6 1005.5,308.1 1006.1,309.6 1006.8,311.1 1007.5,312.6 1008.2,314.1 1008.8,315.6 1009.5,317.1 1010.1,318.6 1010.7,320.1 1011.4,321.6 1012.0,323.1 1012.6,324.6 1013.2,326.1 1013.8,327.6 1014.4,329.1 1015.0,330.6 1015.6,332.1 1016.1,333.6 1016.7,335.1 1017.3,336.6 1017.8,338.1 1018.3,339.6 1018.9,341.1 1019.4,342.6 1019.9,344.1 1020.4,345.6 1020.9,347.1 1021.4,348.6 1021.9,350.1 1022.4,351.6 1022.9,353.1 1023.3,354.6 1023.8,356.1 1024.2,357.6 1024.7,359.1" fill="none" stroke="#5e5e5e" stroke-width="1.3" stroke-dasharray="1.3 2.6"/>
<path d="M877.8,122.2 886.7,131.1" fill="none" stroke="#787878" stroke-width="1.3"/>
<path d="M935.6,77.8 935.3,79.0 935.1,80.3 934.9,81.6 934.7,82.9 934.5,84.3 934.3,85.6 934.1,87.0 934.0,88.4 933.8,89.8 933.6,91.2 933.4,92.6 933.3,94.0 933.1,95.4 933.0,96.8 932.8,98.3 932.6,99.7 932.5,101.2 932.3,102.7 932.2,104.1 932.0,105.6 931.9,107.1 931.7,108.6 931.6,110.1 931.4,111.6 931.2,113.1 931.1,114.6 930.9,116.1 930.8,117.6 930.6,119.1 930.5,120.6 930.3,122.2 930.1,123.7 930.0,125.2 929.8,126.7 929.6,128.3 929.5,129.8 929.3,131.4 929.1,132.9 929.0,134.4 928.8,136.0 928.6,137.5 928.4,139.1 928.3,140.6 928.1,142.2 927.9,143.8 927.7,145.3 927.6,146.9 927.4,148.4 927.2,150.0 927.0,151.6 926.8,153.1 926.6,154.7 926.4,156.3 926.2,157.8 926.1,159.4 925.9,161.0 925.7,162.5 925.5,164.1 925.3,165.7 925.1,167.3 924.9,168.9 924.7,170.4 924.5,172.0 924.2,173.6 924.0,175.2 923.8,176.7 923.6,178.3 923.4,179.9 923.2,181.5 923.0,183.1 922.8,184.7 922.5,186.3 922.3,187.8 922.1,189.4 921.9,191.0 921.7,192.6 921.4,194.2 921.2,195.8 921.0,197.4 920.7,199.0 920.5,200.5 920.3,202.1 920.1,203.7 919.8,205.3 919.6,206.9 919.3,208.5 919.1,210.1 918.9,211.7 918.6,213.3 918.4,214.9 918.1,216.5 917.9,218.1 917.7,219.7 917.4,221.3 917.2,222.9 916.9,224.5 916.7,226.1 916.4,227.7 916.2,229.2 915.9,230.8 915.7,232.4 915.4,234.0 915.2,235.6 914.9,237.2 914.6,238.8 914.4,240.4 914.1,242.0 913.9,243.6 913.6,245.2 913.3,246.8 913.1,248.4 912.8,250.0 912.6,251.6 912.3,253.2 912.0,254.8 911.8,256.4 911.5,258.0 911.2,259.6 911.0,261.2 910.7,262.8 910.4,264.4 910.2,266.1 909.9,267.7 909.6,269.3 909.3,270.9 909.1,272.5 908.8,274.1 908.5,275.7 908.3,277.3 908.0,278.9 907.7,280.5 907.4,282.1 907.2,283.7 906.9,285.3 906.6,286.9 906.3,288.5 906.1,290.1 905.8,291.7 905.5,293.3 905.2,294.9 905.0,296.5 904.7,298.1 904.4,299.7 904.1,301.3 903.9,302.9 903.6,304.5 903.3,306.1 903.0,307.7 902.7,309.3 902.5,310.9 902.2,312.6 901.9,314.2 901.6,315.8 901.4,317.4 901.1,319.0 900.8,320.6 900.5,322.2 900.3,323.8 900.0,325.4 899.7,327.0" fill="none" stroke="#5e5e5e" stroke-width="1.3" stroke-dasharray="1.3 2.6"/>
<path d="M935.6,77.8 944.4,64.4 960.0,61.1 980.0,64.4" fill="none" stroke="#787878" stroke-width="1.3"/>
<path d="M982.2,86.7 983.6,88.2 985.1,89.7 986.5,91.3 987.9,92.8 989.3,94.4 990.8,95.9 992.2,97.5 993.6,99.0 995.0,100.6 996.4,102.1 997.8,103.7 999.2,105.3 1000.6,106.9 1002.0,108.4 1003.4,110.0 1004.8,111.6 1006.2,113.2 1007.5,114.7 1008.9,116.3 1010.3,117.9 1011.6,119.5 1013.0,121.1 1014.3,122.7 1015.6,124.2 1017.0,125.8 1018.3,127.4 1019.6,129.0 1020.9,130.6 1022.2,132.2 1023.5,133.8 1024.8,135.4 1026.0,137.0 1027.3,138.6 1028.6,140.2 1029.8,141.8 1031.1,143.4 1032.3,145.0 1033.5,146.6 1034.7,148.2 1035.9,149.8 1037.1,151.4 1038.3,153.0 1039.5,154.6 1040.7,156.2 1041.8,157.8 1043.0,159.4 1044.1,161.0 1045.2,162.6 1046.3,164.2 1047.4,165.8 1048.5,167.4 1049.6,169.1 1050.7,170.7 1051.8,172.3 1052.8,173.9 1053.9,175.5 1054.9,177.1 1055.9,178.7 1056.9,180.3 1057.9,181.9 1058.9,183.5 1059.9,185.1 1060.8,186.8 1061.8,188.4 1062.7,190.0 1063.7,191.6 1064.6,193.2 1065.5,194.8 1066.4,196.4 1067.3,198.0 1068.1,199.7 1069.0,201.3 1069.8,202.9 1070.7,204.5 1071.5,206.1 1072.3,207.7 1073.1,209.3 1073.9,210.9 1074.6,212.6 1075.4,214.2 1076.1,215.8 1076.9,217.4 1077.6,219.0 1078.3,220.6 1079.0,222.3 1079.6,223.9 1080.3,225.5 1081.0,227.1 1081.6,228.7 1082.2,230.3 1082.8,231.9 1083.4,233.6 1084.0,235.2 1084.6,236.8 1085.1,238.4 1085.7,240.0 1086.2,241.6 1086.7,243.3 1087.2,244.9 1087.7,246.5 1088.2,248.1 1088.6,249.7 1089.1,251.3 1089.5,253.0 1089.9,254.6 1090.3,256.2 1090.7,257.8 1091.1,259.4 1091.5,261.0 1091.8,262.7 1092.2,264.3 1092.5,265.9 1092.8,267.5 1093.1,269.1 1093.3,270.8 1093.6,272.4 1093.9,274.0 1094.1,275.6 1094.3,277.2 1094.5,278.8 1094.7,280.5 1094.9,282.1 1095.0,283.7 1095.2,285.3 1095.3,286.9 1095.4,288.6 1095.5,290.2 1095.6,291.8 1095.7,293.4 1095.8,295.0 1095.8,296.6 1095.8,298.3 1095.8,299.9 1095.8,301.5 1095.8,303.1 1095.8,304.7 1095.8,306.4 1095.7,308.0 1095.6,309.6 1095.5,311.2 1095.4,312.8 1095.3,314.4 1095.2,316.1 1095.1,317.7 1094.9,319.3 1094.7,320.9 1094.5,322.5 1094.3,324.2 1094.1,325.8 1093.9,327.4 1093.6,329.0 1093.4,330.6 1093.1,332.2 1092.8,333.9 1092.5,335.5 1092.2,337.1 1091.9,338.7 1091.5,340.3 1091.2,342.0 1090.8,343.6" fill="none" stroke="#5e5e5e" stroke-width="1.3" stroke-dasharray="1.3 2.6"/>
<path d="M955.6,57.8 982.2,86.7" fill="none" stroke="#787878" stroke-width="1.3"/>
<path d="M995.6,108.9 996.1,110.2 996.6,111.6 997.1,112.9 997.6,114.3 998.1,115.7 998.6,117.1 999.2,118.5 999.7,119.9 1000.2,121.3 1000.8,122.7 1001.3,124.1 1001.8,125.5 1002.3,127.0 1002.9,128.4 1003.4,129.8 1003.9,131.3 1004.4,132.7 1004.9,134.2 1005.5,135.7 1006.0,137.1 1006.5,138.6 1007.0,140.1 1007.5,141.5 1008.0,143.0 1008.5,144.5 1009.0,146.0 1009.5,147.5 1010.0,149.0 1010.4,150.5 1010.9,152.0 1011.4,153.5 1011.8,155.0 1012.3,156.5 1012.8,158.0 1013.2,159.5 1013.6,161.0 1014.1,162.5 1014.5,164.0 1014.9,165.6 1015.3,167.1 1015.8,168.6 1016.2,170.1 1016.6,171.7 1017.0,173.2 1017.3,174.7 1017.7,176.3 1018.1,177.8 1018.5,179.3 1018.8,180.9 1019.2,182.4 1019.5,183.9 1019.8,185.5 1020.2,187.0 1020.5,188.6 1020.8,190.1 1021.1,191.7 1021.4,193.2 1021.7,194.7 1022.0,196.3 1022.3,197.8 1022.5,199.4 1022.8,201.0 1023.0,202.5 1023.3,204.1 1023.5,205.6 1023.8,207.2 1024.0,208.7 1024.2,210.3 1024.4,211.8 1024.6,213.4 1024.8,215.0 1025.0,216.5 1025.1,218.1 1025.3,219.6 1025.4,221.2 1025.6,222.8 1025.7,224.3 1025.9,225.9 1026.0,227.5 1026.1,229.0 1026.2,230.6 1026.3,232.2 1026.4,233.7 1026.5,235.3 1026.5,236.9 1026.6,238.4 1026.6,240.0 1026.7,241.6 1026.7,243.1 1026.7,244.7 1026.8,246.3 1026.8,247.9 1026.8,249.4 1026.8,251.0 1026.7,252.6 1026.7,254.1 1026.7,255.7 1026.6,257.3 1026.6,258.9 1026.5,260.4 1026.5,262.0 1026.4,263.6 1026.3,265.2 1026.2,266.7 1026.1,268.3 1026.0,269.9 1025.9,271.5 1025.7,273.1 1025.6,274.6 1025.4,276.2 1025.3,277.8 1025.1,279.4 1024.9,280.9 1024.8,282.5 1024.6,284.1 1024.4,285.7 1024.2,287.2 1023.9,288.8 1023.7,290.4 1023.5,292.0 1023.2,293.6 1023.0,295.1 1022.7,296.7 1022.4,298.3 1022.2,299.9 1021.9,301.5 1021.6,303.0 1021.3,304.6 1021.0,306.2 1020.6,307.8 1020.3,309.4 1020.0,310.9 1019.6,312.5 1019.3,314.1 1018.9,315.7 1018.5,317.3 1018.2,318.8 1017.8,320.4 1017.4,322.0 1017.0,323.6 1016.6,325.2 1016.1,326.7 1015.7,328.3 1015.3,329.9 1014.8,331.5 1014.4,333.1 1013.9,334.6 1013.4,336.2 1013.0,337.8 1012.5,339.4 1012.0,341.0 1011.5,342.5 1011.0,344.1 1010.5,345.7 1009.9,347.3 1009.4,348.9 1008.9,350.4 1008.3,352.0 1007.8,353.6 1007.2,355.2" fill="none" stroke="#5e5e5e" stroke-width="1.3" stroke-dasharray="1.3 2.6"/>
<path d="M988.9,88.9 995.6,108.9" fill="none" stroke="#787878" stroke-width="1.3"/>
<path d="M1000.0,94.4 1033.3,97.8" fill="none" stroke="#787878" stroke-width="1.3"/>
<path d="M1006.7,84.4 1046.7,95.6" fill="none" stroke="#787878" stroke-width="1.3"/>
<path d="M1100.0,146.7 1102.8,148.0 1105.7,149.2 1108.5,150.5 1111.3,151.8 1114.1,153.2 1117.0,154.5 1119.8,155.8 1122.6,157.1 1125.4,158.5 1128.2,159.8 1131.0,161.1 1133.9,162.5 1136.7,163.9 1139.4,165.2 1142.2,166.6 1145.0,167.9 1147.8,169.3 1150.6,170.7 1153.3,172.1 1156.1,173.5 1158.8,174.9 1161.5,176.2 1164.3,177.6 1167.0,179.0 1169.7,180.5 1172.4,181.9 1175.0,183.3 1177.7,184.7 1180.4,186.1 1183.0,187.5 1185.6,188.9 1188.3,190.4 1190.9,191.8 1193.5,193.2 1196.0,194.7 1198.6,196.1 1201.2,197.5 1203.7,199.0 1206.2,200.4 1208.7,201.9 1211.2,203.3 1213.7,204.8 1216.1,206.2 1218.6,207.7 1221.0,209.1 1223.4,210.6 1225.8,212.1 1228.2,213.5 1230.5,215.0 1232.9,216.4 1235.2,217.9 1237.5,219.4 1239.7,220.9 1242.0,222.3 1244.2,223.8 1246.5,225.3 1248.7,226.8 1250.8,228.2 1253.0,229.7 1255.1,231.2 1257.3,232.7 1259.3,234.2 1261.4,235.6 1263.5,237.1 1265.5,238.6 1267.5,240.1 1269.5,241.6 1271.5,243.1 1273.4,244.6 1275.3,246.1 1277.2,247.6 1279.1,249.0 1280.9,250.5 1282.8,252.0 1284.6,253.5 1286.3,255.0 1288.1,256.5 1289.8,258.0 1291.5,259.5 1293.2,261.0 1294.9,262.5 1296.5,264.0 1298.1,265.5 1299.7,267.0 1301.2,268.5 1302.8,270.0 1304.3,271.5 1305.7,273.0 1307.2,274.6 1308.6,276.1 1310.0,277.6 1311.4,279.1 1312.7,280.6 1314.0,282.1 1315.3,283.6 1316.6,285.1 1317.8,286.6 1319.1,288.1 1320.2,289.6 1321.4,291.1 1322.5,292.7 1323.6,294.2 1324.7,295.7 1325.8,297.2 1326.8,298.7 1327.8,300.2 1328.7,301.7 1329.7,303.2 1330.6,304.8 1331.5,306.3 1332.3,307.8 1333.1,309.3 1333.9,310.8 1334.7,312.3 1335.4,313.8 1336.1,315.3 1336.8,316.9 1337.5,318.4 1338.1,319.9 1338.7,321.4 1339.3,322.9 1339.8,324.4 1340.3,325.9 1340.8,327.4 1341.2,329.0 1341.7,330.5 1342.1,332.0 1342.4,333.5 1342.8,335.0 1343.1,336.5 1343.3,338.0 1343.6,339.6 1343.8,341.1 1344.0,342.6 1344.2,344.1 1344.3,345.6 1344.4,347.1 1344.5,348.6 1344.5,350.1 1344.5,351.6 1344.5,353.1 1344.5,354.7 1344.4,356.2 1344.3,357.7 1344.2,359.2 1344.0,360.7 1343.9,362.2 1343.7,363.7 1343.4,365.2 1343.1,366.7 1342.8,368.2 1342.5,369.7 1342.2,371.2 1341.8,372.7 1341.4,374.2 1340.9,375.7 1340.5,377.2 1340.0,378.7 1339.5,380.2 1338.9,381.7" fill="none" stroke="#5e5e5e" stroke-width="1.3" stroke-dasharray="1.3 2.6"/>
<path d="M1064.4,131.1 1100.0,146.7" fill="none" stroke="#787878" stroke-width="1.3"/>
<path d="M835.6,184.4 834.1,185.6 832.5,186.8 831.0,188.0 829.5,189.2 828.0,190.4 826.5,191.6 825.0,192.8 823.5,194.0 822.1,195.2 820.6,196.5 819.1,197.7 817.6,198.9 816.1,200.2 814.6,201.4 813.1,202.6 811.6,203.9 810.2,205.2 808.7,206.4 807.2,207.7 805.8,208.9 804.3,210.2 802.8,211.5 801.4,212.8 799.9,214.1 798.5,215.3 797.0,216.6 795.6,217.9 794.1,219.2 792.7,220.5 791.3,221.8 789.8,223.1 788.4,224.4 787.0,225.7 785.6,227.0 784.2,228.4 782.8,229.7 781.4,231.0 780.0,232.3 778.6,233.7 777.2,235.0 775.8,236.3 774.5,237.6 773.1,239.0 771.7,240.3 770.4,241.7 769.0,243.0 767.7,244.3 766.4,245.7 765.0,247.0 763.7,248.4 762.4,249.7 761.1,251.1 759.8,252.4 758.5,253.8 757.2,255.2 755.9,256.5 754.7,257.9 753.4,259.2 752.1,260.6 750.9,262.0 749.6,263.3 748.4,264.7 747.2,266.1 746.0,267.4 744.8,268.8 743.6,270.2 742.4,271.6 741.2,272.9 740.0,274.3 738.8,275.7 737.7,277.1 736.5,278.5 735.4,279.8 734.3,281.2 733.1,282.6 732.0,284.0 730.9,285.4 729.8,286.7 728.7,288.1 727.7,289.5 726.6,290.9 725.5,292.3 724.5,293.7 723.5,295.1 722.4,296.5 721.4,297.8 720.4,299.2 719.4,300.6 718.4,302.0 717.4,303.4 716.5,304.8 715.5,306.2 714.6,307.6 713.6,309.0 712.7,310.4 711.8,311.8 710.9,313.1 710.0,314.5 709.1,315.9 708.2,317.3 707.4,318.7 706.5,320.1 705.7,321.5 704.9,322.9 704.0,324.3 703.2,325.7 702.4,327.1 701.7,328.5 700.9,329.9 700.1,331.3 699.4,332.6 698.6,334.0 697.9,335.4 697.2,336.8 696.5,338.2 695.8,339.6 695.1,341.0 694.4,342.4 693.8,343.8 693.1,345.2 692.5,346.5 691.9,347.9 691.3,349.3 690.7,350.7 690.1,352.1 689.5,353.5 688.9,354.9 688.4,356.2 687.8,357.6 687.3,359.0 686.8,360.4 686.3,361.8 685.8,363.2 685.3,364.5 684.8,365.9 684.3,367.3 683.9,368.7 683.5,370.0 683.0,371.4 682.6,372.8 682.2,374.2 681.8,375.5 681.4,376.9 681.1,378.3 680.7,379.6 680.4,381.0 680.0,382.4 679.7,383.7 679.4,385.1 679.1,386.4 678.8,387.8 678.5,389.1 678.2,390.5 678.0,391.9 677.7,393.2 677.5,394.5 677.3,395.9 677.0,397.2 676.8,398.6 676.6,399.9" fill="none" stroke="#5e5e5e" stroke-width="1.3" stroke-dasharray="1.3 2.6"/>
<path d="M835.6,184.4 861.1,165.6" fill="none" stroke="#787878" stroke-width="1.3"/>
<path d="M1128.9,101.1 1166.7,115.6" fill="none" stroke="#787878" stroke-width="1.3"/>
<path d="M1132.2,114.4 1166.7,116.7" fill="none" stroke="#787878" stroke-width="1.3"/>
<path d="M1200.0,146.7 1203.8,148.2 1207.6,149.8 1211.4,151.3 1215.1,152.9 1218.9,154.4 1222.6,156.0 1226.3,157.6 1230.0,159.1 1233.6,160.7 1237.3,162.3 1240.9,163.8 1244.5,165.4 1248.1,167.0 1251.6,168.5 1255.2,170.1 1258.7,171.7 1262.2,173.2 1265.6,174.8 1269.1,176.4 1272.5,178.0 1275.9,179.5 1279.2,181.1 1282.6,182.7 1285.9,184.3 1289.1,185.9 1292.4,187.4 1295.6,189.0 1298.8,190.6 1302.0,192.2 1305.2,193.8 1308.3,195.3 1311.4,196.9 1314.5,198.5 1317.5,200.1 1320.5,201.7 1323.5,203.3 1326.4,204.9 1329.3,206.4 1332.2,208.0 1335.1,209.6 1337.9,211.2 1340.7,212.8 1343.5,214.4 1346.2,216.0 1348.9,217.6 1351.6,219.2 1354.2,220.8 1356.8,222.3 1359.4,223.9 1361.9,225.5 1364.5,227.1 1366.9,228.7 1369.4,230.3 1371.8,231.9 1374.2,233.5 1376.5,235.1 1378.8,236.7 1381.1,238.3 1383.3,239.9 1385.5,241.5 1387.7,243.1 1389.8,244.7 1391.9,246.3 1394.0,247.9 1396.0,249.4 1398.0,251.0 1399.9,252.6 1401.8,254.2 1403.7,255.8 1405.6,257.4 1407.4,259.0 1409.1,260.6 1410.9,262.2 1412.6,263.8 1414.2,265.4 1415.8,267.0 1417.4,268.6 1419.0,270.2 1420.5,271.8 1422.0,273.4 1423.4,275.0 1424.8,276.6 1426.1,278.2 1427.5,279.8 1428.7,281.4 1430.0,283.0 1431.2,284.6 1432.3,286.2 1433.5,287.8 1434.5,289.4 1435.6,291.0 1436.6,292.6 1437.6,294.2 1438.5,295.8 1439.4,297.4 1440.2,299.0 1441.0,300.6 1441.8,302.2 1442.5,303.8 1443.2,305.4 1443.9,307.0 1444.5,308.6 1445.0,310.2 1445.6,311.8 1446.1,313.4 1446.5,315.0 1446.9,316.6 1447.3,318.2 1447.6,319.8 1447.9,321.4 1448.2,323.0 1448.4,324.6 1448.5,326.2 1448.7,327.8 1448.8,329.4 1448.8,331.0 1448.8,332.6 1448.8,334.2 1448.7,335.8 1448.6,337.4 1448.4,339.0 1448.3,340.6 1448.0,342.2 1447.7,343.8 1447.4,345.4 1447.1,347.0 1446.7,348.6 1446.3,350.2 1445.8,351.8 1445.3,353.4 1444.7,355.0 1444.1,356.6 1443.5,358.2 1442.8,359.8 1442.1,361.4 1441.3,363.0 1440.6,364.6 1439.7,366.2 1438.9,367.8 1437.9,369.4 1437.0,371.0 1436.0,372.6 1435.0,374.2 1433.9,375.8 1432.8,377.4 1431.7,379.0 1430.5,380.6 1429.3,382.2 1428.0,383.8 1426.7,385.4 1425.4,387.0 1424.0,388.6 1422.6,390.2 1421.1,391.8 1419.6,393.4 1418.1,395.0 1416.6,396.6 1415.0,398.2 1413.3,399.8 1411.6,401.4" fill="none" stroke="#5e5e5e" stroke-width="1.3" stroke-dasharray="1.3 2.6"/>
<path d="M1157.8,130.0 1200.0,146.7" fill="none" stroke="#787878" stroke-width="1.3"/>
<path d="M782.2,205.6 781.5,207.2 780.7,208.8 780.0,210.4 779.3,212.1 778.5,213.7 777.8,215.3 777.1,217.0 776.4,218.6 775.8,220.2 775.1,221.8 774.4,223.5 773.8,225.1 773.1,226.7 772.5,228.3 771.9,230.0 771.3,231.6 770.7,233.2 770.1,234.9 769.5,236.5 768.9,238.1 768.4,239.7 767.8,241.4 767.3,243.0 766.8,244.6 766.2,246.3 765.7,247.9 765.2,249.5 764.7,251.1 764.3,252.8 763.8,254.4 763.3,256.0 762.9,257.6 762.5,259.3 762.0,260.9 761.6,262.5 761.2,264.2 760.8,265.8 760.5,267.4 760.1,269.0 759.7,270.7 759.4,272.3 759.0,273.9 758.7,275.6 758.4,277.2 758.1,278.8 757.8,280.4 757.5,282.1 757.2,283.7 757.0,285.3 756.7,287.0 756.5,288.6 756.3,290.2 756.0,291.8 755.8,293.5 755.6,295.1 755.5,296.7 755.3,298.3 755.1,300.0 755.0,301.6 754.8,303.2 754.7,304.9 754.6,306.5 754.5,308.1 754.4,309.7 754.3,311.4 754.2,313.0 754.2,314.6 754.1,316.3 754.1,317.9 754.1,319.5 754.1,321.1 754.1,322.8 754.1,324.4 754.1,326.0 754.1,327.7 754.2,329.3 754.2,330.9 754.3,332.5 754.3,334.2 754.4,335.8 754.5,337.4 754.6,339.0 754.8,340.7 754.9,342.3 755.0,343.9 755.2,345.6 755.4,347.2 755.5,348.8 755.7,350.4 755.9,352.1 756.1,353.7 756.4,355.3 756.6,357.0 756.8,358.6 757.1,360.2 757.4,361.8 757.6,363.5 757.9,365.1 758.2,366.7 758.5,368.3 758.9,370.0 759.2,371.6 759.5,373.2 759.9,374.9 760.3,376.5 760.6,378.1 761.0,379.7 761.4,381.4 761.8,383.0 762.2,384.6 762.7,386.3 763.1,387.9 763.6,389.5 764.0,391.1 764.5,392.8 765.0,394.4 765.5,396.0 766.0,397.7 766.5,399.3 767.0,400.9 767.5,402.5 768.1,404.2 768.6,405.8 769.2,407.4 769.8,409.0 770.4,410.7 771.0,412.3 771.6,413.9 772.2,415.6 772.8,417.2 773.4,418.8 774.1,420.4 774.7,422.1 775.4,423.7 776.1,425.3 776.8,427.0 777.5,428.6 778.2,430.2 778.9,431.8 779.6,433.5 780.3,435.1 781.1,436.7 781.8,438.3 782.6,440.0 783.4,441.6 784.1,443.2 784.9,444.9 785.7,446.5 786.5,448.1 787.3,449.7 788.1,451.4 789.0,453.0 789.8,454.6 790.7,456.3 791.5,457.9 792.4,459.5 793.3,461.1 794.1,462.8 795.0,464.4 795.9,466.0" fill="none" stroke="#5e5e5e" stroke-width="1.3" stroke-dasharray="1.3 2.6"/>
<path d="M782.2,205.6 792.2,185.6" fill="none" stroke="#787878" stroke-width="1.3"/>
<path d="M814.4,90.0 813.8,91.2 813.2,92.5 812.5,93.8 811.9,95.1 811.2,96.4 810.5,97.7 809.8,99.0 809.1,100.3 808.4,101.7 807.7,103.0 806.9,104.4 806.2,105.8 805.5,107.2 804.7,108.6 804.0,110.0 803.2,111.4 802.5,112.8 801.7,114.2 801.0,115.7 800.2,117.1 799.5,118.5 798.7,120.0 798.0,121.4 797.2,122.9 796.4,124.4 795.7,125.8 795.0,127.3 794.2,128.8 793.5,130.3 792.7,131.7 792.0,133.2 791.3,134.7 790.5,136.2 789.8,137.7 789.1,139.2 788.4,140.7 787.7,142.2 787.0,143.8 786.3,145.3 785.6,146.8 784.9,148.3 784.2,149.8 783.5,151.4 782.9,152.9 782.2,154.4 781.5,155.9 780.9,157.5 780.3,159.0 779.6,160.5 779.0,162.1 778.4,163.6 777.8,165.2 777.1,166.7 776.5,168.2 776.0,169.8 775.4,171.3 774.8,172.9 774.2,174.4 773.7,176.0 773.1,177.5 772.6,179.1 772.0,180.7 771.5,182.2 771.0,183.8 770.5,185.3 770.0,186.9 769.5,188.4 769.0,190.0 768.5,191.6 768.0,193.1 767.6,194.7 767.1,196.3 766.7,197.8 766.3,199.4 765.8,201.0 765.4,202.5 765.0,204.1 764.6,205.7 764.2,207.2 763.9,208.8 763.5,210.4 763.1,212.0 762.8,213.5 762.5,215.1 762.1,216.7 761.8,218.3 761.5,219.8 761.2,221.4 760.9,223.0 760.6,224.6 760.4,226.1 760.1,227.7 759.9,229.3 759.6,230.9 759.4,232.5 759.2,234.0 759.0,235.6 758.8,237.2 758.6,238.8 758.4,240.4 758.2,241.9 758.1,243.5 757.9,245.1 757.8,246.7 757.7,248.3 757.5,249.9 757.4,251.4 757.3,253.0 757.3,254.6 757.2,256.2 757.1,257.8 757.1,259.4 757.0,260.9 757.0,262.5 757.0,264.1 757.0,265.7 757.0,267.3 757.0,268.9 757.0,270.5 757.0,272.0 757.0,273.6 757.1,275.2 757.2,276.8 757.2,278.4 757.3,280.0 757.4,281.6 757.5,283.2 757.6,284.8 757.7,286.3 757.9,287.9 758.0,289.5 758.2,291.1 758.4,292.7 758.5,294.3 758.7,295.9 758.9,297.5 759.1,299.0 759.3,300.6 759.6,302.2 759.8,303.8 760.1,305.4 760.3,307.0 760.6,308.6 760.9,310.2 761.2,311.8 761.5,313.4 761.8,314.9 762.1,316.5 762.4,318.1 762.8,319.7 763.1,321.3 763.5,322.9 763.8,324.5 764.2,326.1 764.6,327.7 765.0,329.3 765.4,330.8 765.9,332.4 766.3,334.0 766.7,335.6" fill="none" stroke="#5e5e5e" stroke-width="1.3" stroke-dasharray="1.3 2.6"/>
<path d="M814.4,90.0 819.0,78.9" fill="none" stroke="#787878" stroke-width="1.3"/>
<path d="M776.0,488.0 773.9,487.0 771.7,486.0 769.6,485.0 767.4,484.0 765.3,483.0 763.1,482.0 760.9,481.0 758.8,479.9 756.6,478.9 754.4,477.8 752.2,476.7 750.0,475.6 747.8,474.5 745.6,473.4 743.5,472.3 741.3,471.2 739.1,470.1 736.9,469.0 734.7,467.8 732.5,466.7 730.3,465.5 728.1,464.4 725.9,463.2 723.7,462.0 721.5,460.8 719.3,459.7 717.1,458.5 714.9,457.3 712.7,456.1 710.5,454.9 708.4,453.6 706.2,452.4 704.0,451.2 701.8,450.0 699.7,448.7 697.5,447.5 695.4,446.2 693.2,445.0 691.1,443.7 688.9,442.5 686.8,441.2 684.7,439.9 682.6,438.7 680.4,437.4 678.3,436.1 676.2,434.8 674.1,433.5 672.1,432.2 670.0,430.9 667.9,429.6 665.9,428.3 663.8,427.0 661.8,425.7 659.7,424.4 657.7,423.1 655.7,421.8 653.7,420.5 651.7,419.1 649.7,417.8 647.7,416.5 645.8,415.1 643.8,413.8 641.9,412.5 640.0,411.1 638.1,409.8 636.1,408.4 634.3,407.1 632.4,405.7 630.5,404.4 628.7,403.0 626.8,401.7 625.0,400.3 623.2,399.0 621.4,397.6 619.6,396.2 617.8,394.9 616.1,393.5 614.3,392.1 612.6,390.8 610.9,389.4 609.2,388.0 607.5,386.7 605.8,385.3 604.2,383.9 602.5,382.5 600.9,381.1 599.3,379.8 597.7,378.4 596.1,377.0 594.6,375.6 593.0,374.2 591.5,372.8 590.0,371.4 588.5,370.0 587.0,368.7 585.6,367.3 584.1,365.9 582.7,364.5 581.3,363.1 579.9,361.7 578.5,360.3 577.2,358.9 575.9,357.5 574.5,356.1 573.2,354.7 572.0,353.3 570.7,351.9 569.5,350.5 568.2,349.1 567.0,347.7" fill="none" stroke="#5e5e5e" stroke-width="1.3" stroke-dasharray="1.3 2.6"/>
<path d="M776.0,488.0 773.9,487.2 771.8,486.4 769.7,485.6 767.6,484.8 765.4,484.0 763.3,483.1 761.1,482.3 759.0,481.4 756.8,480.5 754.6,479.6 752.5,478.7 750.3,477.8 748.1,476.9 745.9,475.9 743.7,475.0 741.5,474.0 739.3,473.1 737.1,472.1 734.8,471.1 732.6,470.1 730.4,469.1 728.2,468.1 725.9,467.0 723.7,466.0 721.4,465.0 719.2,463.9 717.0,462.9 714.7,461.8 712.5,460.7 710.2,459.7 708.0,458.6 705.7,457.5 703.5,456.4 701.2,455.3 699.0,454.1 696.7,453.0 694.5,451.9 692.2,450.8 690.0,449.6 687.8,448.5 685.5,447.3 683.3,446.2 681.1,445.0 678.8,443.8 676.6,442.7 674.4,441.5 672.2,440.3 670.0,439.1 667.8,437.9 665.6,436.7 663.4,435.5 661.2,434.3 659.0,433.1 656.8,431.9 654.7,430.7 652.5,429.4 650.4,428.2 648.2,427.0 646.1,425.7 643.9,424.5 641.8,423.2 639.7,422.0 637.6,420.7 635.5,419.5 633.4,418.2 631.3,417.0 629.3,415.7 627.2,414.4 625.2,413.2 623.1,411.9 621.1,410.6 619.1,409.3 617.1,408.1 615.1,406.8 613.1,405.5 611.1,404.2 609.2,402.9 607.2,401.6 605.3,400.3 603.4,399.0 601.5,397.7 599.6,396.4 597.7,395.1 595.8,393.8 594.0,392.5 592.1,391.1 590.3,389.8 588.5,388.5 586.7,387.2 584.9,385.9 583.2,384.6 581.4,383.2 579.7,381.9 578.0,380.6 576.3,379.2 574.6,377.9 572.9,376.6 571.2,375.2 569.6,373.9 568.0,372.6 566.4,371.2 564.8,369.9 563.2,368.6 561.6,367.2 560.1,365.9 558.6,364.5 557.1,363.2 555.6,361.8 554.1,360.5 552.6,359.1" fill="none" stroke="#5e5e5e" stroke-width="1.3" stroke-dasharray="1.3 2.6"/>
<path d="M776.0,488.0 774.0,487.4 771.9,486.8 769.9,486.2 767.8,485.5 765.7,484.8 763.7,484.2 761.6,483.5 759.5,482.8 757.3,482.1 755.2,481.3 753.1,480.6 750.9,479.8 748.8,479.1 746.6,478.3 744.4,477.5 742.3,476.7 740.1,475.9 737.9,475.0 735.7,474.2 733.5,473.3 731.2,472.5 729.0,471.6 726.8,470.7 724.5,469.8 722.3,468.9 720.0,468.0 717.8,467.1 715.5,466.1 713.3,465.2 711.0,464.2 708.7,463.3 706.4,462.3 704.2,461.3 701.9,460.3 699.6,459.3 697.3,458.3 695.0,457.3 692.7,456.3 690.4,455.3 688.1,454.2 685.8,453.2 683.5,452.2 681.2,451.1 678.9,450.0 676.7,449.0 674.4,447.9 672.1,446.8 669.8,445.7 667.5,444.6 665.2,443.5 662.9,442.4 660.6,441.3 658.4,440.2 656.1,439.0 653.8,437.9 651.5,436.8 649.3,435.6 647.0,434.5 644.8,433.3 642.5,432.2 640.3,431.0 638.0,429.9 635.8,428.7 633.6,427.5 631.4,426.3 629.1,425.1 626.9,424.0 624.7,422.8 622.5,421.6 620.4,420.4 618.2,419.2 616.0,418.0 613.9,416.7 611.7,415.5 609.6,414.3 607.5,413.1 605.3,411.9 603.2,410.6 601.1,409.4 599.0,408.2 597.0,406.9 594.9,405.7 592.9,404.4 590.8,403.2 588.8,402.0 586.8,400.7 584.8,399.4 582.8,398.2 580.8,396.9 578.8,395.7 576.9,394.4 574.9,393.1 573.0,391.9 571.1,390.6 569.2,389.3 567.3,388.0 565.4,386.8 563.5,385.5 561.7,384.2 559.9,382.9 558.1,381.6 556.3,380.3 554.5,379.1 552.7,377.8 551.0,376.5 549.2,375.2 547.5,373.9 545.8,372.6 544.1,371.3 542.4,370.0" fill="none" stroke="#5e5e5e" stroke-width="1.3" stroke-dasharray="1.3 2.6"/>
<path d="M776.0,488.0 774.1,487.6 772.1,487.2 770.2,486.7 768.2,486.3 766.2,485.8 764.3,485.3 762.3,484.8 760.2,484.3 758.2,483.8 756.2,483.2 754.1,482.7 752.0,482.1 750.0,481.5 747.9,480.9 745.8,480.3 743.6,479.6 741.5,479.0 739.4,478.3 737.2,477.7 735.1,477.0 732.9,476.3 730.7,475.6 728.5,474.8 726.3,474.1 724.1,473.3 721.9,472.6 719.7,471.8 717.4,471.0 715.2,470.2 712.9,469.4 710.7,468.6 708.4,467.8 706.1,466.9 703.8,466.1 701.5,465.2 699.2,464.3 696.9,463.5 694.6,462.6 692.3,461.7 690.0,460.8 687.7,459.9 685.3,458.9 683.0,458.0 680.7,457.0 678.3,456.1 676.0,455.1 673.6,454.2 671.3,453.2 668.9,452.2 666.6,451.2 664.2,450.2 661.9,449.2 659.5,448.2 657.2,447.2 654.8,446.1 652.5,445.1 650.1,444.1 647.8,443.0 645.4,441.9 643.1,440.9 640.7,439.8 638.4,438.7 636.0,437.7 633.7,436.6 631.4,435.5 629.0,434.4 626.7,433.3 624.4,432.2 622.1,431.1 619.7,430.0 617.4,428.8 615.1,427.7 612.8,426.6 610.5,425.4 608.3,424.3 606.0,423.2 603.7,422.0 601.4,420.8 599.2,419.7 596.9,418.5 594.7,417.4 592.5,416.2 590.2,415.0 588.0,413.8 585.8,412.7 583.6,411.5 581.4,410.3 579.3,409.1 577.1,407.9 574.9,406.7 572.8,405.5 570.7,404.3 568.5,403.1 566.4,401.9 564.3,400.6 562.2,399.4 560.2,398.2 558.1,397.0 556.1,395.8 554.0,394.5 552.0,393.3 550.0,392.1 548.0,390.8 546.0,389.6 544.0,388.4 542.1,387.1 540.1,385.9 538.2,384.6 536.3,383.4 534.4,382.1" fill="none" stroke="#5e5e5e" stroke-width="1.3" stroke-dasharray="1.3 2.6"/>
<path d="M776.0,488.0 774.2,487.8 772.5,487.6 770.7,487.4 768.9,487.2 767.0,487.0 765.2,486.7 763.3,486.5 761.5,486.2 759.6,485.9 757.7,485.5 755.8,485.2 753.8,484.8 751.9,484.5 749.9,484.1 747.9,483.7 745.9,483.2 743.9,482.8 741.9,482.4 739.9,481.9 737.8,481.4 735.8,480.9 733.7,480.4 731.6,479.9 729.5,479.3 727.4,478.8 725.2,478.2 723.1,477.6 720.9,477.0 718.7,476.4 716.5,475.8 714.3,475.1 712.1,474.5 709.9,473.8 707.7,473.1 705.4,472.4 703.2,471.7 700.9,471.0 698.6,470.3 696.3,469.5 694.0,468.8 691.7,468.0 689.4,467.3 687.1,466.5 684.7,465.7 682.4,464.9 680.1,464.1 677.7,463.2 675.3,462.4 673.0,461.6 670.6,460.7 668.2,459.8 665.8,459.0 663.4,458.1 661.0,457.2 658.6,456.3 656.2,455.4 653.8,454.4 651.3,453.5 648.9,452.6 646.5,451.6 644.1,450.7 641.6,449.7 639.2,448.8 636.8,447.8 634.3,446.8 631.9,445.8 629.5,444.8 627.0,443.8 624.6,442.8 622.1,441.8 619.7,440.8 617.3,439.7 614.8,438.7 612.4,437.6 610.0,436.6 607.6,435.5 605.1,434.5 602.7,433.4 600.3,432.3 597.9,431.3 595.5,430.2 593.1,429.1 590.7,428.0 588.3,426.9 585.9,425.8 583.5,424.7 581.1,423.6 578.8,422.5 576.4,421.3 574.1,420.2 571.7,419.1 569.4,417.9 567.0,416.8 564.7,415.7 562.4,414.5 560.1,413.4 557.8,412.2 555.5,411.0 553.2,409.9 551.0,408.7 548.7,407.5 546.5,406.4 544.2,405.2 542.0,404.0 539.8,402.8 537.6,401.6 535.4,400.5 533.2,399.3 531.1,398.1 528.9,396.9" fill="none" stroke="#5e5e5e" stroke-width="1.3" stroke-dasharray="1.3 2.6"/>
<path d="M784.4,300.0 855.6,388.9 933.3,462.2 971.0,486.7" fill="none" stroke="#5e5e5e" stroke-width="1.3" stroke-dasharray="1.3 2.6"/>
<path d="M855.6,304.4 895.6,344.4 944.4,393.3 1022.2,453.3" fill="none" stroke="#5e5e5e" stroke-width="1.3" stroke-dasharray="1.3 2.6"/>
<path d="M895.6,300.0 868.9,388.9 851.1,488.9" fill="none" stroke="#5e5e5e" stroke-width="1.3" stroke-dasharray="1.3 2.6"/>
<path d="M815.6,300.0 766.7,395.6 735.6,444.4" fill="none" stroke="#5e5e5e" stroke-width="1.3" stroke-dasharray="1.3 2.6"/>
<path d="M922.2,300.0 915.6,393.3 913.3,486.7" fill="none" stroke="#5e5e5e" stroke-width="1.3" stroke-dasharray="1.3 2.6"/>
<path d="M733.0,362.0 733.0,447.0" fill="none" stroke="#5e5e5e" stroke-width="1.3" stroke-dasharray="1.3 2.6"/>
<path d="M1011.0,300.0 1033.0,366.7 1031.0,455.6" fill="none" stroke="#5e5e5e" stroke-width="1.3" stroke-dasharray="1.3 2.6"/>
<path d="M900.0,353.0 943.3,393.0 1026.7,453.3" fill="none" stroke="#5e5e5e" stroke-width="1.3" stroke-dasharray="1.3 2.6"/>
<path d="M900.0,433.0 973.0,486.7" fill="none" stroke="#5e5e5e" stroke-width="1.3" stroke-dasharray="1.3 2.6"/>
<path d="M920.0,320.0 943.0,403.0 960.0,480.0" fill="none" stroke="#5e5e5e" stroke-width="1.3" stroke-dasharray="1.3 2.6"/>
<path d="M1016.7,323.0 990.0,400.0 966.7,477.0" fill="none" stroke="#5e5e5e" stroke-width="1.3" stroke-dasharray="1.3 2.6"/>
<path d="M1133.0,320.0 1090.0,390.0 1043.0,460.0" fill="none" stroke="#5e5e5e" stroke-width="1.3" stroke-dasharray="1.3 2.6"/>
<path d="M1116.7,320.0 1156.7,413.3" fill="none" stroke="#5e5e5e" stroke-width="1.3" stroke-dasharray="1.3 2.6"/>
<path d="M383.0,327.0 410.0,360.0 437.0,390.0" fill="none" stroke="#5e5e5e" stroke-width="1.3" stroke-dasharray="1.3 2.6"/>
<path d="M820.0,320.0 856.7,406.7 853.0,486.7" fill="none" stroke="#5e5e5e" stroke-width="1.3" stroke-dasharray="1.3 2.6"/>
<path d="M546.0,162.7 544.5,163.0 542.9,163.4 541.4,163.8 539.8,164.2 538.2,164.6 536.7,165.0 535.1,165.4 533.5,165.7 531.9,166.1 530.3,166.5 528.7,167.0 527.1,167.4 525.5,167.8 523.9,168.2 522.3,168.6 520.7,169.0 519.1,169.4 517.4,169.9 515.8,170.3 514.2,170.7 512.5,171.2 510.9,171.6 509.2,172.0 507.6,172.5 505.9,172.9 504.3,173.4 502.6,173.8 501.0,174.3 499.3,174.7 497.6,175.2 496.0,175.7 494.3,176.1 492.6,176.6 490.9,177.0 489.2,177.5 487.6,178.0 485.9,178.5 484.2,178.9 482.5,179.4 480.8,179.9 479.1,180.4 477.4,180.9 475.7,181.4 474.0,181.8 472.3,182.3 470.6,182.8 468.9,183.3" fill="none" stroke="#ff2000" stroke-width="1.6"/>
<path d="M442.2,197.8 440.7,198.1 439.3,198.5 437.8,198.9 436.3,199.2" fill="none" stroke="#ee88ee" stroke-width="1.6"/>
<path d="M1369.8,199.6 1369.7,200.0" fill="none" stroke="#ee88ee" stroke-width="1.6"/>
<path d="M596.9,159.3 596.2,159.1 595.6,158.9" fill="none" stroke="#ee88ee" stroke-width="1.6"/>
<path d="M600.4,130.0 601.3,129.4 602.2,128.9" fill="none" stroke="#55dd00" stroke-width="1.6"/>
<path d="M675.6,104.4 673.3,105.0 671.1,105.6 668.8,106.3 666.6,106.9 664.3,107.5 662.0,108.1 659.7,108.7 657.4,109.3 655.1,110.0 652.8,110.6 650.5,111.2 648.2,111.9 645.9,112.5 643.6,113.1 641.2,113.8 638.9,114.4" fill="none" stroke="#dd22ee" stroke-width="1.6"/>
<path d="M733.3,92.2 732.0,92.4 730.7,92.6 729.4,92.8 728.0,93.1 726.6,93.3 725.2,93.5 723.8,93.8 722.4,94.0 720.9,94.3 719.4,94.6 717.9,94.9 716.3,95.2 714.8,95.5 713.2,95.8 711.6,96.1 710.0,96.4 708.3,96.8 706.6,97.1 705.0,97.5 703.3,97.8 701.5,98.2 699.8,98.5 698.0,98.9 696.3,99.3 694.5,99.7 692.6,100.1 690.8,100.5 689.0,100.9 687.1,101.3 685.2,101.8 683.3,102.2 681.4,102.6 679.5,103.1 677.5,103.5 675.6,104.0" fill="none" stroke="#ff2000" stroke-width="1.6"/>
<path d="M655.6,122.7 654.4,122.8 653.3,122.9 652.1,123.1 650.9,123.2 649.7,123.4 648.5,123.5 647.3,123.7 646.0,123.9 644.8,124.1 643.5,124.3 642.2,124.4" fill="none" stroke="#ff2000" stroke-width="1.6"/>
<path d="M671.1,146.7 670.6,146.5 670.1,146.3 669.6,146.2 669.0,146.0 668.5,145.8 668.0,145.7 667.4,145.5 666.8,145.4 666.3,145.3 665.7,145.1 665.1,145.0 664.5,144.9 663.9,144.8 663.3,144.6 662.7,144.5 662.1,144.4 661.4,144.3 660.8,144.2 660.1,144.2 659.5,144.1 658.8,144.0 658.1,143.9 657.4,143.8 656.7,143.8 656.0,143.7 655.3,143.7 654.6,143.6 653.9,143.6 653.1,143.5 652.4,143.5 651.6,143.5 650.8,143.4 650.0,143.4 649.3,143.4 648.5,143.4 647.6,143.4 646.8,143.4 646.0,143.4 645.2,143.4 644.3,143.4 643.5,143.4 642.6,143.5 641.7,143.5 640.8,143.5 639.9,143.6 639.0,143.6 638.1,143.7 637.2,143.7 636.3,143.8 635.3,143.9 634.4,143.9 633.4,144.0 632.4,144.1 631.4,144.2 630.5,144.3 629.4,144.3 628.4,144.4 627.4,144.5 626.4,144.7 625.3,144.8 624.3,144.9 623.2,145.0 622.2,145.1 621.1,145.3 620.0,145.4 618.9,145.6" fill="none" stroke="#ff2000" stroke-width="1.6"/>
<path d="M753.3,78.2 751.3,78.7 749.2,79.2 747.2,79.6 745.1,80.1 742.9,80.6 740.8,81.1 738.6,81.6 736.4,82.2 734.2,82.7 731.9,83.2 729.7,83.8 727.4,84.3 725.1,84.9" fill="none" stroke="#ff2000" stroke-width="1.6"/>
<path d="M1081.9,85.5 1083.0,86.0 1084.1,86.6 1085.2,87.2 1086.3,87.8" fill="none" stroke="#ff2000" stroke-width="1.6"/>
<path d="M782.2,80.0 781.6,79.9 780.9,79.9 780.2,79.8 779.4,79.8 778.6,79.8 777.8,79.8 777.0,79.8 776.2,79.8 775.3,79.8 774.4,79.8 773.4,79.9 772.4,80.0 771.4,80.0 770.4,80.1 769.3,80.2 768.2,80.3 767.1,80.5 765.9,80.6 764.7,80.8 763.5,80.9 762.3,81.1 761.0,81.3 759.7,81.5 758.4,81.7 757.0,81.9 755.6,82.1 754.2,82.4 752.7,82.6 751.3,82.9 749.8,83.2 748.2,83.5 746.7,83.8 745.1,84.1 743.5,84.4 741.8,84.7 740.2,85.0 738.5,85.4 736.8,85.7 735.0,86.1 733.3,86.5 731.5,86.9 729.7,87.2 727.8,87.6 726.0,88.1 724.1,88.5 722.2,88.9" fill="none" stroke="#ff2000" stroke-width="1.6"/>
<path d="M813.3,62.2 812.4,62.3 811.4,62.3 810.3,62.4 809.2,62.5 808.1,62.7 806.9,62.8 805.6,63.0 804.3,63.1 802.9,63.3 801.5,63.6 800.1,63.8 798.6,64.1 797.0,64.3 795.5,64.6 793.8,64.9 792.1,65.2 790.4,65.6 788.6,65.9 786.8,66.3 785.0,66.7 783.1,67.0 781.2,67.4 779.2,67.9 777.2,68.3 775.1,68.7 773.1,69.2 771.0,69.7" fill="none" stroke="#ee88ee" stroke-width="1.6"/>
<path d="M1035.2,70.1 1036.0,70.6 1036.8,71.1" fill="none" stroke="#ee88ee" stroke-width="1.6"/>
<path d="M753.3,122.2 753.3,121.7 753.3,121.3 753.3,120.8 753.3,120.3 753.3,119.9 753.3,119.4 753.3,119.0 753.2,118.5 753.2,118.1 753.1,117.7 753.1,117.2 753.0,116.8 753.0,116.4 752.9,116.0 752.8,115.6 752.7,115.2 752.6,114.8 752.5,114.4 752.4,114.0 752.3,113.6 752.1,113.2 752.0,112.9 751.8,112.5 751.7,112.1 751.5,111.8 751.3,111.4 751.1,111.1" fill="none" stroke="#dd22ee" stroke-width="1.6"/>
<path d="M731.1,175.6 731.2,174.9 731.3,174.2 731.4,173.5 731.5,172.8 731.6,172.2 731.7,171.5 731.9,170.8 732.0,170.1 732.1,169.5 732.2,168.8 732.3,168.1 732.4,167.5 732.5,166.8 732.6,166.2 732.8,165.5 732.9,164.8 733.0,164.2 733.1,163.5 733.2,162.9 733.3,162.2" fill="none" stroke="#ff2000" stroke-width="1.6"/>
<path d="M762.2,157.8 762.9,156.9 763.6,156.1 764.2,155.3 764.9,154.5 765.6,153.6 766.3,152.8 767.0,152.0 767.7,151.2 768.4,150.3 769.1,149.5 769.7,148.7 770.4,147.8 771.1,147.0 771.9,146.2 772.6,145.4 773.3,144.5 774.0,143.7 774.7,142.9 775.4,142.1 776.1,141.2 776.9,140.4 777.6,139.6 778.3,138.7 779.0,137.9 779.8,137.1 780.5,136.3 781.2,135.4 782.0,134.6 782.7,133.8 783.5,133.0 784.2,132.1 785.0,131.3 785.7,130.5 786.5,129.7 787.2,128.8 788.0,128.0 788.7,127.2 789.5,126.4 790.3,125.5 791.0,124.7 791.8,123.9 792.6,123.0 793.3,122.2" fill="none" stroke="#ff2000" stroke-width="1.6"/>
<path d="M757.8,171.1 758.4,170.3 759.0,169.4 759.6,168.6 760.3,167.8 760.9,166.9 761.5,166.1 762.2,165.3 762.8,164.4 763.4,163.6 764.1,162.8 764.7,161.9 765.4,161.1 766.0,160.3 766.7,159.4 767.3,158.6 768.0,157.8 768.6,156.9 769.3,156.1 770.0,155.3 770.6,154.4 771.3,153.6 772.0,152.8 772.7,151.9 773.3,151.1" fill="none" stroke="#ee88ee" stroke-width="1.6"/>
<path d="M797.8,193.3 798.5,192.6 799.2,191.8 800.0,191.1 800.7,190.3 801.4,189.6 802.1,188.8 802.9,188.1 803.6,187.3 804.3,186.6 805.1,185.9 805.8,185.1 806.6,184.4 807.3,183.6 808.0,182.9 808.8,182.2 809.5,181.4 810.3,180.7 811.0,179.9 811.8,179.2 812.5,178.5 813.3,177.7 814.0,177.0 814.8,176.3 815.5,175.5 816.3,174.8 817.0,174.1 817.8,173.3" fill="none" stroke="#ee88ee" stroke-width="1.6"/>
<path d="M862.2,46.7 864.1,46.0 866.0,45.3 867.8,44.6 869.6,44.0 871.4,43.3 873.1,42.7 874.8,42.1 876.5,41.5 878.1,40.9 879.7,40.4 881.2,39.9 882.7,39.4 884.1,39.0 885.4,38.6 886.6,38.3 887.8,38.0 888.9,37.8" fill="none" stroke="#55dd00" stroke-width="1.6"/>
<path d="M891.1,31.6 887.9,32.4 884.4,33.3" fill="none" stroke="#ee88ee" stroke-width="1.6"/>
<path d="M831.1,52.2 829.6,52.4 828.1,52.7 826.5,53.0 824.8,53.3 823.1,53.6 821.2,54.0 819.4,54.3 817.4,54.7" fill="none" stroke="#ee88ee" stroke-width="1.6"/>
<path d="M989.2,55.1 989.8,55.6" fill="none" stroke="#ee88ee" stroke-width="1.6"/>
<path d="M857.8,55.6 858.4,54.8 859.1,54.1 859.7,53.5 860.3,52.8 860.9,52.1 861.5,51.4 862.0,50.8 862.6,50.2 863.1,49.5 863.6,48.9 864.0,48.3 864.4,47.8" fill="none" stroke="#ff2000" stroke-width="1.6"/>
<path d="M845.6,75.6 846.4,74.7 847.2,73.9 848.0,73.0 848.9,72.2 849.7,71.4 850.5,70.5 851.4,69.7 852.2,68.9 853.1,68.0 853.9,67.2 854.7,66.4 855.6,65.6" fill="none" stroke="#dd22ee" stroke-width="1.6"/>
<path d="M872.0,76.0 872.8,75.3 873.6,74.5 874.4,73.8 875.2,73.0 876.0,72.3 876.7,71.5 877.5,70.8 878.3,70.1 879.1,69.3 879.9,68.6 880.7,67.9 881.4,67.2 882.2,66.5 883.0,65.8 883.8,65.1 884.5,64.4 885.3,63.7 886.1,63.0 886.8,62.3 887.6,61.6 888.4,61.0 889.1,60.3 889.9,59.6 890.6,59.0 891.4,58.3 892.1,57.7 892.9,57.1 893.6,56.5 894.3,55.9 895.1,55.3 895.8,54.7 896.5,54.1 897.2,53.6 898.0,53.0 898.7,52.5 899.4,52.0 900.1,51.5 900.8,51.1 901.5,50.6 902.2,50.2 903.0,49.8 903.7,49.4 904.4,49.0 905.1,48.7 905.8,48.4 906.5,48.1 907.3,47.8 908.0,47.6 908.7,47.4 909.5,47.2 910.3,47.1 911.0,47.0 911.8,47.0 912.6,46.9 913.5,46.9 914.3,47.0 915.2,47.0 916.1,47.2 917.0,47.3 917.9,47.5 918.9,47.7 919.8,47.9 920.8,48.2 921.9,48.5 922.9,48.8 924.0,49.2 925.1,49.5 926.2,49.9 927.4,50.3 928.6,50.8 929.8,51.2 931.0,51.7 932.2,52.2" fill="none" stroke="#dd22ee" stroke-width="1.6"/>
<path d="M932.2,45.6 933.8,46.3 935.5,47.1 937.1,47.9 938.7,48.7 940.4,49.5 942.0,50.3 943.7,51.1 945.4,51.9 947.0,52.7 948.7,53.5 950.4,54.3 952.1,55.1 953.8,55.9 955.5,56.7 957.1,57.5 958.8,58.4 960.5,59.2 962.2,60.0" fill="none" stroke="#dd22ee" stroke-width="1.6"/>
<path d="M884.7,33.3 882.5,33.8" fill="none" stroke="#ee88ee" stroke-width="1.6"/>
<path d="M924.0,34.3 925.1,34.9 926.5,35.6 927.9,36.3 929.5,37.0 931.1,37.8" fill="none" stroke="#ee88ee" stroke-width="1.6"/>
<path d="M838.6,47.8" fill="none" stroke="#ee88ee" stroke-width="1.6"/>
<path d="M967.9,48.4 969.1,49.0 970.5,49.7 971.9,50.4 973.3,51.1" fill="none" stroke="#ee88ee" stroke-width="1.6"/>
<path d="M814.6,55.6" fill="none" stroke="#ee88ee" stroke-width="1.6"/>
<path d="M992.1,56.1 993.1,56.6 994.2,57.2 995.3,57.8 996.5,58.4 997.7,59.0 998.9,59.6 1000.2,60.2 1001.4,60.9 1002.8,61.5 1004.1,62.2 1005.5,62.8 1006.8,63.5 1008.2,64.2 1009.7,64.9 1011.1,65.6" fill="none" stroke="#ee88ee" stroke-width="1.6"/>
<path d="M1011.1,65.6 1013.1,66.4 1015.1,67.2 1017.2,68.0 1019.2,68.8 1021.2,69.6 1023.2,70.4 1025.2,71.2 1027.3,72.0 1029.3,72.8 1031.3,73.6 1033.3,74.4" fill="none" stroke="#ee88ee" stroke-width="1.6"/>
<path d="M1000.0,71.1 1001.8,72.0 1003.6,72.8 1005.4,73.6 1007.2,74.5 1009.0,75.3 1010.8,76.1 1012.6,77.0 1014.4,77.8 1016.2,78.7 1018.0,79.5 1019.8,80.3 1021.6,81.2 1023.3,82.0 1025.1,82.9 1026.9,83.7 1028.7,84.5 1030.5,85.4 1032.2,86.2" fill="none" stroke="#ee88ee" stroke-width="1.6"/>
<path d="M1040.0,72.2 1041.1,72.8 1042.2,73.4 1043.3,74.0 1044.5,74.6 1045.7,75.2 1046.9,75.8 1048.1,76.4 1049.3,77.0 1050.6,77.6 1051.9,78.3 1053.1,78.9 1054.4,79.6 1055.7,80.2 1057.1,80.9 1058.4,81.5 1059.8,82.2 1061.1,82.9" fill="none" stroke="#ee88ee" stroke-width="1.6"/>
<path d="M751.6,76.7 749.4,77.2 747.2,77.7 745.0,78.2" fill="none" stroke="#ff2000" stroke-width="1.6"/>
<path d="M1061.2,78.7 1062.2,79.2 1063.1,79.7 1064.1,80.3 1065.1,80.8 1066.1,81.4 1067.1,82.0 1068.2,82.5 1069.3,83.1 1070.3,83.7 1071.4,84.3 1072.6,84.9 1073.7,85.5 1074.8,86.1 1076.0,86.7 1077.2,87.3 1078.3,87.9 1079.5,88.6 1080.8,89.2 1082.0,89.8 1083.2,90.5 1084.4,91.1" fill="none" stroke="#ff2000" stroke-width="1.6"/>
<path d="M720.3,86.7 718.3,87.1" fill="none" stroke="#ff2000" stroke-width="1.6"/>
<path d="M1087.8,87.5 1088.4,88.0 1089.0,88.4 1089.7,88.9 1090.4,89.3 1091.0,89.8 1091.8,90.3 1092.5,90.8 1093.2,91.2 1094.0,91.7 1094.8,92.2 1095.6,92.7 1096.4,93.3 1097.2,93.8 1098.0,94.3 1098.9,94.8 1099.8,95.4 1100.6,95.9 1101.5,96.5 1102.4,97.0 1103.4,97.6 1104.3,98.1 1105.2,98.7 1106.2,99.3 1107.2,99.9 1108.1,100.4 1109.1,101.0 1110.1,101.6 1111.1,102.2" fill="none" stroke="#ff2000" stroke-width="1.6"/>
<path d="M922.2,95.6 923.0,95.4 923.8,95.3 924.6,95.2 925.4,95.1 926.2,95.0 927.0,94.9 927.8,94.8 928.6,94.7 929.4,94.6 930.2,94.6 931.0,94.5 931.8,94.5 932.6,94.5 933.5,94.5 934.3,94.5 935.1,94.5 936.0,94.5 936.8,94.5 937.7,94.6 938.5,94.6 939.4,94.7 940.3,94.7 941.1,94.8 942.0,94.9 942.9,95.0 943.8,95.1 944.7,95.2 945.6,95.3 946.5,95.5 947.4,95.6 948.3,95.8 949.2,95.9 950.1,96.1 951.1,96.3 952.0,96.5 953.0,96.7 953.9,96.9 954.9,97.1 955.8,97.3 956.8,97.5 957.8,97.8" fill="none" stroke="#ff2000" stroke-width="1.6"/>
<path d="M846.7,137.8 847.5,137.3 848.4,136.8 849.3,136.3 850.2,135.8 851.1,135.3 851.9,134.8 852.8,134.3 853.7,133.8 854.5,133.4 855.4,132.9 856.3,132.4 857.2,132.0 858.0,131.5 858.9,131.1 859.7,130.6 860.6,130.2 861.5,129.7 862.3,129.3 863.2,128.9 864.0,128.4 864.9,128.0 865.8,127.6 866.6,127.2 867.5,126.8 868.3,126.4 869.2,126.0 870.0,125.6" fill="none" stroke="#dd22ee" stroke-width="1.6"/>
<path d="M1006.7,141.1 1007.7,141.6 1008.8,142.1 1009.8,142.6 1010.9,143.0 1011.9,143.5 1013.0,144.0 1014.0,144.5 1015.1,145.0 1016.2,145.5 1017.2,146.0 1018.3,146.6 1019.3,147.1 1020.4,147.6 1021.5,148.1 1022.6,148.6 1023.6,149.2 1024.7,149.7 1025.8,150.2 1026.9,150.7 1027.9,151.3 1029.0,151.8 1030.1,152.4 1031.2,152.9 1032.3,153.5 1033.3,154.0" fill="none" stroke="#dd22ee" stroke-width="1.6"/>
<path d="M469.1,183.3 467.5,183.8 465.9,184.2" fill="none" stroke="#ff2000" stroke-width="1.6"/>
<path d="M1339.6,184.7 1339.9,185.1 1340.1,185.6 1340.4,186.0 1340.7,186.5 1340.9,186.9 1341.2,187.4 1341.4,187.9 1341.7,188.3 1342.0,188.8 1342.2,189.3 1342.5,189.7 1342.8,190.2 1343.1,190.7 1343.3,191.2 1343.6,191.6 1343.9,192.1 1344.2,192.6 1344.4,193.1 1344.7,193.6 1345.0,194.1 1345.3,194.6 1345.5,195.1 1345.8,195.6 1346.1,196.1 1346.4,196.5 1346.7,197.0 1346.9,197.6 1347.2,198.1 1347.5,198.6 1347.8,199.1 1348.1,199.6 1348.3,200.1 1348.6,200.6 1348.9,201.1" fill="none" stroke="#ff2000" stroke-width="1.6"/>
<rect x="467.9" y="182.3" width="2" height="2" fill="#ff6040"/>
<rect x="432.3" y="199.0" width="2" height="2" fill="#ff6040"/>
<rect x="594.6" y="157.9" width="2" height="2" fill="#ff6040"/>
<rect x="601.2" y="127.9" width="2" height="2" fill="#ff6040"/>
<rect x="637.9" y="113.4" width="2" height="2" fill="#ff6040"/>
<rect x="674.6" y="103.0" width="2" height="2" fill="#ff6040"/>
<rect x="641.2" y="123.4" width="2" height="2" fill="#ff6040"/>
<rect x="617.9" y="144.6" width="2" height="2" fill="#ff6040"/>
<rect x="712.3" y="86.8" width="2" height="2" fill="#ff6040"/>
<rect x="721.2" y="87.9" width="2" height="2" fill="#ff6040"/>
<rect x="763.4" y="70.1" width="2" height="2" fill="#ff6040"/>
<rect x="750.1" y="110.1" width="2" height="2" fill="#ff6040"/>
<rect x="732.3" y="161.2" width="2" height="2" fill="#ff6040"/>
<rect x="792.3" y="121.2" width="2" height="2" fill="#ff6040"/>
<rect x="772.3" y="150.1" width="2" height="2" fill="#ff6040"/>
<rect x="816.8" y="172.3" width="2" height="2" fill="#ff6040"/>
<rect x="887.9" y="36.8" width="2" height="2" fill="#ff6040"/>
<rect x="883.4" y="32.3" width="2" height="2" fill="#ff6040"/>
<rect x="812.3" y="54.6" width="2" height="2" fill="#ff6040"/>
<rect x="863.4" y="46.8" width="2" height="2" fill="#ff6040"/>
<rect x="854.6" y="64.6" width="2" height="2" fill="#ff6040"/>
<rect x="931.2" y="51.2" width="2" height="2" fill="#ff6040"/>
<rect x="961.2" y="59.0" width="2" height="2" fill="#ff6040"/>
<rect x="930.1" y="36.8" width="2" height="2" fill="#ff6040"/>
<rect x="972.3" y="50.1" width="2" height="2" fill="#ff6040"/>
<rect x="1010.1" y="64.6" width="2" height="2" fill="#ff6040"/>
<rect x="1032.3" y="73.4" width="2" height="2" fill="#ff6040"/>
<rect x="1031.2" y="85.2" width="2" height="2" fill="#ff6040"/>
<rect x="1060.1" y="81.9" width="2" height="2" fill="#ff6040"/>
<rect x="1083.4" y="90.1" width="2" height="2" fill="#ff6040"/>
<rect x="1110.1" y="101.2" width="2" height="2" fill="#ff6040"/>
<rect x="956.8" y="96.8" width="2" height="2" fill="#ff6040"/>
<rect x="869.0" y="124.6" width="2" height="2" fill="#ff6040"/>
<rect x="1032.3" y="153.0" width="2" height="2" fill="#ff6040"/>
<rect x="1347.9" y="200.1" width="2" height="2" fill="#ff6040"/>
<path d="M436.7,239.3 439.2,237.1 441.9,235.0 444.9,232.8 448.0,230.8 451.3,228.7 454.8,226.8 458.3,224.9 461.9,223.1 465.5,221.4 469.2,219.9 472.7,218.5 476.2,217.3 479.6,216.2 482.8,215.4 485.8,214.7 488.7,214.2 491.2,213.9 493.5,213.8 495.5,213.9 497.2,214.2 498.6,214.7 499.7,215.4 500.5,216.2 500.9,217.3 501.1,218.5 500.9,219.9 500.5,221.4 499.8,223.1 498.8,224.9 497.6,226.8 496.2,228.7 494.5,230.8 492.7,232.8 490.7,235.0 488.5,237.1 486.2,239.3 483.8,241.4 481.3,243.5 478.7,245.6 476.0,247.6 473.3,249.5 470.5,251.4 467.7,253.2 464.9,254.8 462.0,256.3 459.2,257.7 456.5,259.0 453.7,260.1 451.0,261.0 448.4,261.8 445.8,262.4 443.4,262.9 441.0,263.2 438.8,263.2 436.7,263.2 434.8,262.9 433.1,262.4 431.5,261.8 430.2,261.0 429.0,260.1 428.1,259.0 427.5,257.7 427.1,256.3 427.0,254.8 427.2,253.2 427.6,251.4 428.4,249.5 429.5,247.6 430.9,245.6 432.5,243.5 434.5,241.4 436.7,239.3Z" fill="none" stroke="#55dd00" stroke-width="2"/>
<path d="M708.3,244.9 709.2,242.8 710.4,240.6 711.7,238.5 713.3,236.4 715.0,234.4 716.8,232.4 718.9,230.5 721.0,228.8 723.2,227.1 725.6,225.6 727.9,224.2 730.4,223.0 732.8,221.9 735.2,221.0 737.6,220.4 740.0,219.9 742.3,219.6 744.5,219.5 746.6,219.6 748.6,219.9 750.4,220.4 752.1,221.0 753.7,221.9 755.1,223.0 756.3,224.2 757.3,225.6 758.2,227.1 758.9,228.8 759.4,230.5 759.7,232.4 759.8,234.4 759.8,236.4 759.5,238.5 759.1,240.6 758.5,242.8 757.8,244.9 756.9,247.1 755.8,249.2 754.6,251.2 753.2,253.3 751.7,255.2 750.1,257.1 748.3,258.8 746.5,260.5 744.6,262.0 742.5,263.4 740.5,264.7 738.3,265.8 736.1,266.7 733.9,267.5 731.7,268.1 729.5,268.6 727.3,268.9 725.1,268.9 723.0,268.9 720.9,268.6 718.9,268.1 717.0,267.5 715.3,266.7 713.6,265.8 712.1,264.7 710.8,263.4 709.6,262.0 708.6,260.5 707.8,258.8 707.2,257.1 706.9,255.2 706.7,253.3 706.8,251.2 707.0,249.2 707.5,247.1 708.3,244.9Z" fill="none" stroke="#dd22ee" stroke-width="2"/>
<path d="M701.8,267.2 702.5,265.0 703.4,262.9 704.5,260.8 705.8,258.7 707.3,256.7 709.0,254.7 710.8,252.9 712.7,251.1 714.8,249.5 716.9,248.0 719.1,246.6 721.4,245.4 723.7,244.4 726.1,243.5 728.4,242.8 730.7,242.3 732.9,242.1 735.1,242.0 737.2,242.1 739.3,242.3 741.2,242.8 743.0,243.5 744.6,244.4 746.1,245.4 747.5,246.6 748.7,248.0 749.7,249.5 750.6,251.1 751.3,252.9 751.8,254.7 752.2,256.7 752.3,258.7 752.3,260.8 752.2,262.9 751.8,265.0 751.3,267.2 750.6,269.3 749.8,271.5 748.8,273.5 747.7,275.6 746.4,277.5 745.0,279.4 743.4,281.2 741.8,282.9 740.0,284.4 738.2,285.8 736.2,287.1 734.2,288.2 732.1,289.2 730.0,290.0 727.9,290.6 725.7,291.1 723.5,291.4 721.4,291.4 719.2,291.4 717.1,291.1 715.1,290.6 713.1,290.0 711.3,289.2 709.5,288.2 707.9,287.1 706.4,285.8 705.1,284.4 703.9,282.9 702.9,281.2 702.1,279.4 701.6,277.5 701.2,275.6 701.0,273.5 701.1,271.5 701.3,269.3 701.8,267.2Z" fill="none" stroke="#ff2000" stroke-width="2"/>
<path d="M694.8,317.5 694.9,315.4 695.2,313.2 695.8,311.1 696.6,309.1 697.5,307.1 698.7,305.2 700.0,303.4 701.5,301.6 703.1,300.0 704.8,298.6 706.7,297.3 708.7,296.1 710.7,295.1 712.8,294.3 715.0,293.6 717.1,293.1 719.3,292.8 721.5,292.8 723.6,292.8 725.7,293.1 727.7,293.6 729.7,294.3 731.6,295.1 733.4,296.1 735.1,297.3 736.6,298.6 738.0,300.0 739.3,301.6 740.5,303.4 741.5,305.2 742.4,307.1 743.1,309.1 743.6,311.1 744.0,313.2 744.2,315.4 744.2,317.5 744.1,319.7 743.9,321.8 743.4,323.9 742.8,326.0 742.0,328.0 741.1,329.9 740.1,331.7 738.9,333.4 737.5,335.0 736.0,336.4 734.4,337.8 732.7,338.9 730.9,339.9 729.0,340.7 727.0,341.4 725.0,341.9 722.9,342.2 720.7,342.2 718.6,342.2 716.4,341.9 714.2,341.4 712.1,340.7 710.0,339.9 708.0,338.9 706.1,337.8 704.3,336.4 702.6,335.0 701.0,333.4 699.6,331.7 698.3,329.9 697.2,328.0 696.3,326.0 695.6,323.9 695.1,321.8 694.8,319.7 694.8,317.5Z" fill="none" stroke="#ee88ee" stroke-width="2"/>
<path d="M722,305h6M725,302v6" stroke="#ff1010" stroke-width="1.5"/>
<path d="M727.8,316.3h6M730.8,313.3v6" stroke="#ff1010" stroke-width="1.5"/>
<path d="M713.7,323h6M716.7,320v6" stroke="#ff1010" stroke-width="1.5"/>
<path d="M741,258.3h6M744,255.3v6" stroke="#ff1010" stroke-width="1.5"/>
<path d="M715.3,270h6M718.3,267v6" stroke="#ff1010" stroke-width="1.5"/>
<path d="M460.3,239.1h6M463.3,236.1v6" stroke="#ff1010" stroke-width="1.5"/>
<path d="M465.7,237.3h6M468.7,234.3v6" stroke="#ff1010" stroke-width="1.5"/>
<text x="726.7" y="270.7" text-anchor="middle" font-size="11" fill="#fff">STA</text>
<text x="733.3" y="248.2" text-anchor="middle" font-size="11" fill="#fff">NTA</text>
<text x="719.5" y="321.5" text-anchor="middle" font-size="11" fill="#fff">OER</text>
<text x="462.3" y="242.5" text-anchor="middle" font-size="11" fill="#fff">LEO</text>
<text x="316" y="29.5" font-family="Liberation Mono, monospace" font-size="13.95" fill="#fff" xml:space="preserve">ES0016</text>
<text x="316" y="42.6" font-family="Liberation Mono, monospace" font-size="13.95" fill="#fff" xml:space="preserve">Beg: 20251109 18:35:36 (sol = 227.26°)</text>
<text x="316" y="56.6" font-family="Liberation Mono, monospace" font-size="13.95" fill="#fff" xml:space="preserve">End: 20251110 04:31:19 (sol = 227.67°)</text>
<text x="316" y="68.4" font-family="Liberation Mono, monospace" font-size="13.95" fill="#fff" xml:space="preserve">--------------------------------------</text>
<text x="316" y="81.8" font-family="Liberation Mono, monospace" font-size="13.95" fill="#fff" xml:space="preserve">...: 45</text>
<text x="316" y="94.9" font-family="Liberation Mono, monospace" font-size="13.95" fill="#fff" xml:space="preserve">STA: 15</text>
<text x="316" y="107.6" font-family="Liberation Mono, monospace" font-size="13.95" fill="#fff" xml:space="preserve">OER: 10</text>
<text x="316" y="121.5" font-family="Liberation Mono, monospace" font-size="13.95" fill="#fff" xml:space="preserve">NTA: 8</text>
<text x="316" y="134.4" font-family="Liberation Mono, monospace" font-size="13.95" fill="#fff" xml:space="preserve">LEO: 2</text>
<line x1="74.9" y1="641.5" x2="74.9" y2="842.0" stroke="#777" stroke-width="1.4" stroke-dasharray="1.5 3"/>
<line x1="218.9" y1="641.5" x2="218.9" y2="842.0" stroke="#777" stroke-width="1.4" stroke-dasharray="1.5 3"/>
<line x1="364.8" y1="641.5" x2="364.8" y2="842.0" stroke="#777" stroke-width="1.4" stroke-dasharray="1.5 3"/>
<line x1="506.1" y1="641.5" x2="506.1" y2="842.0" stroke="#777" stroke-width="1.4" stroke-dasharray="1.5 3"/>
<line x1="651.1" y1="641.5" x2="651.1" y2="842.0" stroke="#777" stroke-width="1.4" stroke-dasharray="1.5 3"/>
<line x1="796.7" y1="641.5" x2="796.7" y2="842.0" stroke="#777" stroke-width="1.4" stroke-dasharray="1.5 3"/>
<line x1="939.8" y1="641.5" x2="939.8" y2="842.0" stroke="#777" stroke-width="1.4" stroke-dasharray="1.5 3"/>
<line x1="1091.1" y1="641.5" x2="1091.1" y2="842.0" stroke="#777" stroke-width="1.4" stroke-dasharray="1.5 3"/>
<line x1="1238.9" y1="641.5" x2="1238.9" y2="842.0" stroke="#777" stroke-width="1.4" stroke-dasharray="1.5 3"/>
<line x1="1393.9" y1="641.5" x2="1393.9" y2="842.0" stroke="#777" stroke-width="1.4" stroke-dasharray="1.5 3"/>
<line x1="1548" y1="641.5" x2="1548" y2="842.0" stroke="#777" stroke-width="1.4" stroke-dasharray="1.5 3"/>
<line x1="1687" y1="641.5" x2="1687" y2="842.0" stroke="#777" stroke-width="1.4" stroke-dasharray="1.5 3"/>
<text transform="translate(149.2,643.5) rotate(-90) scale(0.89,1)" text-anchor="end" font-size="29.5" fill="#5a5a5a">APR</text>
<text transform="translate(295.5,645.5) rotate(-90) scale(0.89,1)" text-anchor="end" font-size="29.5" fill="#5a5a5a">MAY</text>
<text transform="translate(436.1,641.9) rotate(-90) scale(0.89,1)" text-anchor="end" font-size="29.5" fill="#5a5a5a">JUN</text>
<text transform="translate(578.1,641.9) rotate(-90) scale(0.89,1)" text-anchor="end" font-size="29.5" fill="#5a5a5a">JUL</text>
<text transform="translate(726.1,644.2) rotate(-90) scale(0.89,1)" text-anchor="end" font-size="29.5" fill="#5a5a5a">AUG</text>
<text transform="translate(872.3000000000001,644.2) rotate(-90) scale(0.89,1)" text-anchor="end" font-size="29.5" fill="#5a5a5a">SEP</text>
<text transform="translate(1018.5,644.5) rotate(-90) scale(0.89,1)" text-anchor="end" font-size="29.5" fill="#5a5a5a">OCT</text>
<text transform="translate(1170.1,644.5) rotate(-90) scale(0.89,1)" text-anchor="end" font-size="29.5" fill="#5a5a5a">NOV</text>
<text transform="translate(1319.8999999999999,644.5) rotate(-90) scale(0.89,1)" text-anchor="end" font-size="29.5" fill="#5a5a5a">DEC</text>
<text transform="translate(1469.6,642.2) rotate(-90) scale(0.89,1)" text-anchor="end" font-size="29.5" fill="#5a5a5a">JAN</text>
<text transform="translate(1628.6,644.5) rotate(-90) scale(0.89,1)" text-anchor="end" font-size="29.5" fill="#5a5a5a">FEB</text>
<text transform="translate(1766.1,644.5) rotate(-90) scale(0.89,1)" text-anchor="end" font-size="29.5" fill="#5a5a5a">MAR</text>
<text x="118.0" y="830.8000000000001" text-anchor="middle" font-size="10.5" fill="#fff">KSE</text>
<text x="254.8" y="830.8000000000001" text-anchor="middle" font-size="10.5" fill="#fff">ETA</text>
<text x="495.55" y="830.8000000000001" text-anchor="middle" font-size="10.5" fill="#fff">NZC</text>
<text x="711.5" y="830.8000000000001" text-anchor="middle" font-size="10.5" fill="#fff">NDA</text>
<text x="853.45" y="830.8000000000001" text-anchor="middle" font-size="10.5" fill="#fff">SPE</text>
<text x="946.45" y="830.8000000000001" text-anchor="middle" font-size="10.5" fill="#fff">ARD</text>
<text x="1025.0" y="830.8000000000001" text-anchor="middle" font-size="10.5" fill="#fff">EGE</text>
<text x="1142.95" y="830.8000000000001" text-anchor="middle" font-size="10.5" fill="#fff">NTA</text>
<text x="1284.9" y="830.8000000000001" text-anchor="middle" font-size="10.5" fill="#fff">MON</text>
<text x="1346.55" y="830.8000000000001" text-anchor="middle" font-size="10.5" fill="#fff">URS</text>
<text x="1412.4499999999998" y="830.8000000000001" text-anchor="middle" font-size="10.5" fill="#fff">AHY</text>
<text x="1485.55" y="830.8000000000001" text-anchor="middle" font-size="10.5" fill="#fff">GUM</text>
<text x="1535.0" y="830.8000000000001" text-anchor="middle" font-size="10.5" fill="#fff">OHY</text>
<text x="1735.9499999999998" y="830.8000000000001" text-anchor="middle" font-size="10.5" fill="#fff">XHE</text>
<text x="1770.0" y="830.8000000000001" text-anchor="middle" font-size="10.5" fill="#fff">EVI</text>
<text x="176.95" y="814.5000000000001" text-anchor="middle" font-size="10.5" fill="#fff">AVB</text>
<text x="255.45" y="814.5000000000001" text-anchor="middle" font-size="10.5" fill="#fff">ELY</text>
<text x="326.5" y="814.5000000000001" text-anchor="middle" font-size="10.5" fill="#fff">CAM</text>
<text x="429.45000000000005" y="814.5000000000001" text-anchor="middle" font-size="10.5" fill="#fff">SSG</text>
<text x="581.1" y="814.5000000000001" text-anchor="middle" font-size="10.5" fill="#fff">PCA</text>
<text x="721.05" y="814.5000000000001" text-anchor="middle" font-size="10.5" fill="#fff">AUD</text>
<text x="809.55" y="814.5000000000001" text-anchor="middle" font-size="10.5" fill="#fff">AUR</text>
<text x="929.5" y="814.5000000000001" text-anchor="middle" font-size="10.5" fill="#fff">DSX</text>
<text x="1010.0" y="814.5000000000001" text-anchor="middle" font-size="10.5" fill="#fff">OCU</text>
<text x="1137.4499999999998" y="814.5000000000001" text-anchor="middle" font-size="10.5" fill="#fff">OER</text>
<text x="1255.5" y="814.5000000000001" text-anchor="middle" font-size="10.5" fill="#fff">DKD</text>
<text x="1304.5" y="814.5000000000001" text-anchor="middle" font-size="10.5" fill="#fff">DSV</text>
<text x="1353.5" y="814.5000000000001" text-anchor="middle" font-size="10.5" fill="#fff">ALY</text>
<text x="1407.4499999999998" y="814.5000000000001" text-anchor="middle" font-size="10.5" fill="#fff">JLE</text>
<text x="1470.95" y="814.5000000000001" text-anchor="middle" font-size="10.5" fill="#fff">SCC</text>
<text x="1559.55" y="814.5000000000001" text-anchor="middle" font-size="10.5" fill="#fff">FEV</text>
<text x="176.95" y="798.2" text-anchor="middle" font-size="10.5" fill="#fff">LYR</text>
<text x="373.0" y="798.2" text-anchor="middle" font-size="10.5" fill="#fff">JMC</text>
<text x="561.55" y="798.2" text-anchor="middle" font-size="10.5" fill="#fff">JPE</text>
<text x="671.85" y="798.2" text-anchor="middle" font-size="10.5" fill="#fff">PAU</text>
<text x="777.45" y="798.2" text-anchor="middle" font-size="10.5" fill="#fff">NIA</text>
<text x="1049.45" y="798.2" text-anchor="middle" font-size="10.5" fill="#fff">STA</text>
<text x="1203.95" y="798.2" text-anchor="middle" font-size="10.5" fill="#fff">NOO</text>
<text x="1350.9" y="798.2" text-anchor="middle" font-size="10.5" fill="#fff">COM</text>
<text x="1470.95" y="798.2" text-anchor="middle" font-size="10.5" fill="#fff">NCC</text>
<text x="1564.5" y="798.2" text-anchor="middle" font-size="10.5" fill="#fff">FED</text>
<text x="206.0" y="781.9000000000001" text-anchor="middle" font-size="10.5" fill="#fff">HVI</text>
<text x="414.55" y="781.9000000000001" text-anchor="middle" font-size="10.5" fill="#fff">ARI</text>
<text x="530.1" y="781.9000000000001" text-anchor="middle" font-size="10.5" fill="#fff">SZC</text>
<text x="620.45" y="781.9000000000001" text-anchor="middle" font-size="10.5" fill="#fff">CAP</text>
<text x="819.0" y="781.9000000000001" text-anchor="middle" font-size="10.5" fill="#fff">NUE</text>
<text x="963.45" y="781.9000000000001" text-anchor="middle" font-size="10.5" fill="#fff">OCT</text>
<text x="1056.95" y="781.9000000000001" text-anchor="middle" font-size="10.5" fill="#fff">ORI</text>
<text x="1186.45" y="781.9000000000001" text-anchor="middle" font-size="10.5" fill="#fff">AMO</text>
<text x="1255.5" y="781.9000000000001" text-anchor="middle" font-size="10.5" fill="#fff">DPC</text>
<text x="1329.0" y="781.9000000000001" text-anchor="middle" font-size="10.5" fill="#fff">XVI</text>
<text x="1407.55" y="781.9000000000001" text-anchor="middle" font-size="10.5" fill="#fff">QUA</text>
<text x="1556.9" y="781.9000000000001" text-anchor="middle" font-size="10.5" fill="#fff">AAN</text>
<text x="355.5" y="765.6" text-anchor="middle" font-size="10.5" fill="#fff">TAH</text>
<text x="428.95" y="765.6" text-anchor="middle" font-size="10.5" fill="#fff">JEA</text>
<text x="481.05" y="765.6" text-anchor="middle" font-size="10.5" fill="#fff">JIP</text>
<text x="536.95" y="765.6" text-anchor="middle" font-size="10.5" fill="#fff">PPS</text>
<text x="576.45" y="765.6" text-anchor="middle" font-size="10.5" fill="#fff">ZCS</text>
<text x="632.45" y="765.6" text-anchor="middle" font-size="10.5" fill="#fff">GDR</text>
<text x="973.4" y="765.6" text-anchor="middle" font-size="10.5" fill="#fff">DRA</text>
<text x="1074.0" y="765.6" text-anchor="middle" font-size="10.5" fill="#fff">LUM</text>
<text x="1113.1" y="765.6" text-anchor="middle" font-size="10.5" fill="#fff">RPU</text>
<text x="1176.95" y="765.6" text-anchor="middle" font-size="10.5" fill="#fff">THA</text>
<text x="1260.5" y="765.6" text-anchor="middle" font-size="10.5" fill="#fff">PSU</text>
<text x="1468.6" y="765.6" text-anchor="middle" font-size="10.5" fill="#fff">XCB</text>
<text x="431.95" y="749.3000000000001" text-anchor="middle" font-size="10.5" fill="#fff">IRC</text>
<text x="544.5999999999999" y="749.3000000000001" text-anchor="middle" font-size="10.5" fill="#fff">CAN</text>
<text x="579.05" y="749.3000000000001" text-anchor="middle" font-size="10.5" fill="#fff">FAN</text>
<text x="682.05" y="749.3000000000001" text-anchor="middle" font-size="10.5" fill="#fff">PER</text>
<text x="1051.95" y="749.3000000000001" text-anchor="middle" font-size="10.5" fill="#fff">CTA</text>
<text x="1265.4" y="749.3000000000001" text-anchor="middle" font-size="10.5" fill="#fff">HYD</text>
<text x="1480.95" y="749.3000000000001" text-anchor="middle" font-size="10.5" fill="#fff">XUM</text>
<text x="441.5" y="733.0" text-anchor="middle" font-size="10.5" fill="#fff">COR</text>
<text x="654.95" y="733.0" text-anchor="middle" font-size="10.5" fill="#fff">SDA</text>
<text x="1049.45" y="733.0" text-anchor="middle" font-size="10.5" fill="#fff">LMI</text>
<text x="1169.6" y="733.0" text-anchor="middle" font-size="10.5" fill="#fff">LEO</text>
<text x="1277.5" y="733.0" text-anchor="middle" font-size="10.5" fill="#fff">EHY</text>
<text x="1500.6" y="733.0" text-anchor="middle" font-size="10.5" fill="#fff">ECV</text>
<text x="603.5" y="716.7" text-anchor="middle" font-size="10.5" fill="#fff">JXA</text>
<text x="713.5" y="716.7" text-anchor="middle" font-size="10.5" fill="#fff">KCG</text>
<text x="1157.5" y="716.7" text-anchor="middle" font-size="10.5" fill="#fff">AND</text>
<text x="1275.05" y="716.7" text-anchor="middle" font-size="10.5" fill="#fff">DAD</text>
<text x="664.45" y="700.4000000000001" text-anchor="middle" font-size="10.5" fill="#fff">ERI</text>
<text x="1106.1" y="700.4000000000001" text-anchor="middle" font-size="10.5" fill="#fff">SLD</text>
<text x="1211.5" y="700.4000000000001" text-anchor="middle" font-size="10.5" fill="#fff">ORS</text>
<text x="1299.4" y="700.4000000000001" text-anchor="middle" font-size="10.5" fill="#fff">GEM</text>
<text x="1122.95" y="684.1" text-anchor="middle" font-size="10.5" fill="#fff">KUM</text>
<line x1="1134.7" y1="641.5" x2="1134.7" y2="842.0" stroke="#ff1010" stroke-width="1.6" stroke-dasharray="5.3 2.2" stroke-dashoffset="3.7"/>
<line x1="1136.6" y1="641.5" x2="1136.6" y2="842.0" stroke="#ff1010" stroke-width="1.6" stroke-dasharray="5.3 2.2" stroke-dashoffset="3.7"/>
<rect x="106.1" y="831.5500000000001" width="23.80000000000001" height="4.1" fill="#ee88ee"/>
<rect x="164.5" y="831.5500000000001" width="180.60000000000002" height="4.1" fill="#ee88ee"/>
<rect x="366.1" y="831.5500000000001" width="258.9" height="4.1" fill="#ee88ee"/>
<rect x="636.1" y="831.5500000000001" width="150.79999999999995" height="4.1" fill="#ee88ee"/>
<rect x="807" y="831.5500000000001" width="92.89999999999998" height="4.1" fill="#ee88ee"/>
<rect x="920" y="831.5500000000001" width="52.89999999999998" height="4.1" fill="#ee88ee"/>
<rect x="984" y="831.5500000000001" width="82" height="4.1" fill="#ee88ee"/>
<rect x="1082" y="831.5500000000001" width="121.90000000000009" height="4.1" fill="#ee88ee"/>
<rect x="1244" y="831.5500000000001" width="81.79999999999995" height="4.1" fill="#ee88ee"/>
<rect x="1337.1" y="831.5500000000001" width="18.90000000000009" height="4.1" fill="#ee88ee"/>
<rect x="1381.1" y="831.5500000000001" width="62.700000000000045" height="4.1" fill="#ee88ee"/>
<rect x="1459" y="831.5500000000001" width="53.09999999999991" height="4.1" fill="#ee88ee"/>
<rect x="1523" y="831.5500000000001" width="24" height="4.1" fill="#ee88ee"/>
<rect x="1724.1" y="831.5500000000001" width="23.700000000000045" height="4.1" fill="#ee88ee"/>
<rect x="1758.3" y="831.5500000000001" width="23.40000000000009" height="4.1" fill="#ee88ee"/>
<rect x="164.9" y="815.2500000000001" width="24.099999999999994" height="4.1" fill="#dd22ee"/>
<rect x="224.0" y="815.2500000000001" width="62.89999999999998" height="4.1" fill="#dd22ee"/>
<rect x="312.0" y="815.2500000000001" width="29.0" height="4.1" fill="#dd22ee"/>
<rect x="366.1" y="815.2500000000001" width="126.69999999999999" height="4.1" fill="#dd22ee"/>
<rect x="508.2" y="815.2500000000001" width="145.8" height="4.1" fill="#dd22ee"/>
<rect x="704.2" y="815.2500000000001" width="33.69999999999993" height="4.1" fill="#dd22ee"/>
<rect x="773.1" y="815.2500000000001" width="72.89999999999998" height="4.1" fill="#dd22ee"/>
<rect x="871.1" y="815.2500000000001" width="116.79999999999995" height="4.1" fill="#dd22ee"/>
<rect x="1003.1" y="815.2500000000001" width="13.799999999999955" height="4.1" fill="#dd22ee"/>
<rect x="1062.1" y="815.2500000000001" width="150.70000000000005" height="4.1" fill="#dd22ee"/>
<rect x="1244" y="815.2500000000001" width="23" height="4.1" fill="#dd22ee"/>
<rect x="1293" y="815.2500000000001" width="23" height="4.1" fill="#dd22ee"/>
<rect x="1342.1" y="815.2500000000001" width="22.800000000000182" height="4.1" fill="#dd22ee"/>
<rect x="1386.1" y="815.2500000000001" width="42.700000000000045" height="4.1" fill="#dd22ee"/>
<rect x="1459" y="815.2500000000001" width="23.90000000000009" height="4.1" fill="#dd22ee"/>
<rect x="1548" y="815.2500000000001" width="23.09999999999991" height="4.1" fill="#dd22ee"/>
<rect x="164.9" y="798.95" width="24.099999999999994" height="4.1" fill="#ff2000"/>
<rect x="258.2" y="798.95" width="229.60000000000002" height="4.1" fill="#ff2000"/>
<rect x="508.2" y="798.95" width="106.69999999999999" height="4.1" fill="#ff2000"/>
<rect x="626" y="798.95" width="91.70000000000005" height="4.1" fill="#ff2000"/>
<rect x="729" y="798.95" width="96.89999999999998" height="4.1" fill="#ff2000"/>
<rect x="949" y="798.95" width="200.9000000000001" height="4.1" fill="#ff2000"/>
<rect x="1160" y="798.95" width="87.90000000000009" height="4.1" fill="#ff2000"/>
<rect x="1258" y="798.95" width="185.79999999999995" height="4.1" fill="#ff2000"/>
<rect x="1459" y="798.95" width="23.90000000000009" height="4.1" fill="#ff2000"/>
<rect x="1553" y="798.95" width="23" height="4.1" fill="#ff2000"/>
<rect x="193.9" y="782.6500000000001" width="24.19999999999999" height="4.1" fill="#ffaa11"/>
<rect x="322.1" y="782.6500000000001" width="184.89999999999998" height="4.1" fill="#ffaa11"/>
<rect x="518.1" y="782.6500000000001" width="24.0" height="4.1" fill="#ffaa11"/>
<rect x="556.9" y="782.6500000000001" width="127.10000000000002" height="4.1" fill="#ffaa11"/>
<rect x="807" y="782.6500000000001" width="24" height="4.1" fill="#ffaa11"/>
<rect x="954" y="782.6500000000001" width="18.899999999999977" height="4.1" fill="#ffaa11"/>
<rect x="988.9" y="782.6500000000001" width="136.10000000000002" height="4.1" fill="#ffaa11"/>
<rect x="1155" y="782.6500000000001" width="62.90000000000009" height="4.1" fill="#ffaa11"/>
<rect x="1244" y="782.6500000000001" width="23" height="4.1" fill="#ffaa11"/>
<rect x="1317" y="782.6500000000001" width="24" height="4.1" fill="#ffaa11"/>
<rect x="1396.1" y="782.6500000000001" width="22.90000000000009" height="4.1" fill="#ffaa11"/>
<rect x="1464" y="782.6500000000001" width="185.79999999999995" height="4.1" fill="#ffaa11"/>
<rect x="341" y="766.35" width="29" height="4.1" fill="#ffe600"/>
<rect x="409.9" y="766.35" width="38.10000000000002" height="4.1" fill="#ffe600"/>
<rect x="469.1" y="766.35" width="23.899999999999977" height="4.1" fill="#ffe600"/>
<rect x="528.1" y="766.35" width="17.699999999999932" height="4.1" fill="#ffe600"/>
<rect x="562" y="766.35" width="28.899999999999977" height="4.1" fill="#ffe600"/>
<rect x="616" y="766.35" width="32.89999999999998" height="4.1" fill="#ffe600"/>
<rect x="958.9" y="766.35" width="29.0" height="4.1" fill="#ffe600"/>
<rect x="1062.1" y="766.35" width="23.800000000000182" height="4.1" fill="#ffe600"/>
<rect x="1101.2" y="766.35" width="23.799999999999955" height="4.1" fill="#ffe600"/>
<rect x="1160" y="766.35" width="33.90000000000009" height="4.1" fill="#ffe600"/>
<rect x="1249.2" y="766.35" width="22.59999999999991" height="4.1" fill="#ffe600"/>
<rect x="1425.1" y="766.35" width="87.0" height="4.1" fill="#ffe600"/>
<rect x="420" y="750.0500000000001" width="23.899999999999977" height="4.1" fill="#aaee33"/>
<rect x="533.3" y="750.0500000000001" width="22.600000000000023" height="4.1" fill="#aaee33"/>
<rect x="567.2" y="750.0500000000001" width="23.699999999999932" height="4.1" fill="#aaee33"/>
<rect x="621.1" y="750.0500000000001" width="121.89999999999998" height="4.1" fill="#aaee33"/>
<rect x="969" y="750.0500000000001" width="165.9000000000001" height="4.1" fill="#aaee33"/>
<rect x="1185" y="750.0500000000001" width="160.79999999999995" height="4.1" fill="#aaee33"/>
<rect x="1468.9" y="750.0500000000001" width="24.09999999999991" height="4.1" fill="#aaee33"/>
<rect x="430.1" y="733.75" width="22.799999999999955" height="4.1" fill="#55dd00"/>
<rect x="577" y="733.75" width="155.89999999999998" height="4.1" fill="#55dd00"/>
<rect x="994.1" y="733.75" width="110.69999999999993" height="4.1" fill="#55dd00"/>
<rect x="1116.2" y="733.75" width="106.79999999999995" height="4.1" fill="#55dd00"/>
<rect x="1263.1" y="733.75" width="28.800000000000182" height="4.1" fill="#55dd00"/>
<rect x="1489.1" y="733.75" width="23.0" height="4.1" fill="#55dd00"/>
<rect x="592.1" y="717.45" width="22.799999999999955" height="4.1" fill="#11ee88"/>
<rect x="655" y="717.45" width="117" height="4.1" fill="#11ee88"/>
<rect x="1072" y="717.45" width="171" height="4.1" fill="#11ee88"/>
<rect x="1263.1" y="717.45" width="23.90000000000009" height="4.1" fill="#11ee88"/>
<rect x="596" y="701.1500000000001" width="136.89999999999998" height="4.1" fill="#22ccee"/>
<rect x="1092.1" y="701.1500000000001" width="28.0" height="4.1" fill="#22ccee"/>
<rect x="1200" y="701.1500000000001" width="23" height="4.1" fill="#22ccee"/>
<rect x="1273" y="701.1500000000001" width="52.799999999999955" height="4.1" fill="#22ccee"/>
<rect x="1111" y="684.85" width="23.90000000000009" height="4.1" fill="#0022cc"/>
<path d="M113.7,833.6h8.2M117.8,829.6v8" stroke="#fff" stroke-width="2.4"/>
<path d="M240.70000000000002,833.6h8.2M244.8,829.6v8" stroke="#fff" stroke-width="2.4"/>
<path d="M510.5,833.6h8.2M514.6,829.6v8" stroke="#fff" stroke-width="2.4"/>
<path d="M706.6,833.6h8.2M710.7,829.6v8" stroke="#fff" stroke-width="2.4"/>
<path d="M833.6999999999999,833.6h8.2M837.8,829.6v8" stroke="#fff" stroke-width="2.4"/>
<path d="M961.6999999999999,833.6h8.2M965.8,829.6v8" stroke="#fff" stroke-width="2.4"/>
<path d="M986.6999999999999,833.6h8.2M990.8,829.6v8" stroke="#fff" stroke-width="2.4"/>
<path d="M1116.8000000000002,833.6h8.2M1120.9,829.6v8" stroke="#fff" stroke-width="2.4"/>
<path d="M1295.6000000000001,833.6h8.2M1299.7,829.6v8" stroke="#fff" stroke-width="2.4"/>
<path d="M1341.7,833.6h8.2M1345.8,829.6v8" stroke="#fff" stroke-width="2.4"/>
<path d="M1412.8000000000002,833.6h8.2M1416.9,829.6v8" stroke="#fff" stroke-width="2.4"/>
<path d="M1481.9,833.6h8.2M1486,829.6v8" stroke="#fff" stroke-width="2.4"/>
<path d="M1530.6000000000001,833.6h8.2M1534.7,829.6v8" stroke="#fff" stroke-width="2.4"/>
<path d="M1731.7,833.6h8.2M1735.8,829.6v8" stroke="#fff" stroke-width="2.4"/>
<path d="M1765.9,833.6h8.2M1770,829.6v8" stroke="#fff" stroke-width="2.4"/>
<path d="M172.70000000000002,817.3000000000001h8.2M176.8,813.3000000000001v8" stroke="#fff" stroke-width="2.4"/>
<path d="M255.70000000000002,817.3000000000001h8.2M259.8,813.3000000000001v8" stroke="#fff" stroke-width="2.4"/>
<path d="M323.79999999999995,817.3000000000001h8.2M327.9,813.3000000000001v8" stroke="#fff" stroke-width="2.4"/>
<path d="M437.7,817.3000000000001h8.2M441.8,813.3000000000001v8" stroke="#fff" stroke-width="2.4"/>
<path d="M598.6999999999999,817.3000000000001h8.2M602.8,813.3000000000001v8" stroke="#fff" stroke-width="2.4"/>
<path d="M716.6999999999999,817.3000000000001h8.2M720.8,813.3000000000001v8" stroke="#fff" stroke-width="2.4"/>
<path d="M793.6,817.3000000000001h8.2M797.7,813.3000000000001v8" stroke="#fff" stroke-width="2.4"/>
<path d="M939.6,817.3000000000001h8.2M943.7,813.3000000000001v8" stroke="#fff" stroke-width="2.4"/>
<path d="M1005.8,817.3000000000001h8.2M1009.9,813.3000000000001v8" stroke="#fff" stroke-width="2.4"/>
<path d="M1152.8000000000002,817.3000000000001h8.2M1156.9,813.3000000000001v8" stroke="#fff" stroke-width="2.4"/>
<path d="M1250.8000000000002,817.3000000000001h8.2M1254.9,813.3000000000001v8" stroke="#fff" stroke-width="2.4"/>
<path d="M1299.9,817.3000000000001h8.2M1304,813.3000000000001v8" stroke="#fff" stroke-width="2.4"/>
<path d="M1349.5,817.3000000000001h8.2M1353.6,813.3000000000001v8" stroke="#fff" stroke-width="2.4"/>
<path d="M1402.7,817.3000000000001h8.2M1406.8,813.3000000000001v8" stroke="#fff" stroke-width="2.4"/>
<path d="M1466.5,817.3000000000001h8.2M1470.6,813.3000000000001v8" stroke="#fff" stroke-width="2.4"/>
<path d="M1554.8000000000002,817.3000000000001h8.2M1558.9,813.3000000000001v8" stroke="#fff" stroke-width="2.4"/>
<path d="M174.6,801.0h8.2M178.7,797.0v8" stroke="#fff" stroke-width="2.4"/>
<path d="M378.9,801.0h8.2M383,797.0v8" stroke="#fff" stroke-width="2.4"/>
<path d="M544.6,801.0h8.2M548.7,797.0v8" stroke="#fff" stroke-width="2.4"/>
<path d="M682.6,801.0h8.2M686.7,797.0v8" stroke="#fff" stroke-width="2.4"/>
<path d="M741.6,801.0h8.2M745.7,797.0v8" stroke="#fff" stroke-width="2.4"/>
<path d="M1074.9,801.0h8.2M1079,797.0v8" stroke="#fff" stroke-width="2.4"/>
<path d="M1216.7,801.0h8.2M1220.8,797.0v8" stroke="#fff" stroke-width="2.4"/>
<path d="M1304.7,801.0h8.2M1308.8,797.0v8" stroke="#fff" stroke-width="2.4"/>
<path d="M1466.5,801.0h8.2M1470.6,797.0v8" stroke="#fff" stroke-width="2.4"/>
<path d="M1559.6000000000001,801.0h8.2M1563.7,797.0v8" stroke="#fff" stroke-width="2.4"/>
<path d="M201.4,784.7h8.2M205.5,780.7v8" stroke="#fff" stroke-width="2.4"/>
<path d="M400.7,784.7h8.2M404.8,780.7v8" stroke="#fff" stroke-width="2.4"/>
<path d="M525.6999999999999,784.7h8.2M529.8,780.7v8" stroke="#fff" stroke-width="2.4"/>
<path d="M638.6,784.7h8.2M642.7,780.7v8" stroke="#fff" stroke-width="2.4"/>
<path d="M814.6,784.7h8.2M818.7,780.7v8" stroke="#fff" stroke-width="2.4"/>
<path d="M959.6999999999999,784.7h8.2M963.8,780.7v8" stroke="#fff" stroke-width="2.4"/>
<path d="M1040.7,784.7h8.2M1044.8,780.7v8" stroke="#fff" stroke-width="2.4"/>
<path d="M1187.7,784.7h8.2M1191.8,780.7v8" stroke="#fff" stroke-width="2.4"/>
<path d="M1250.6000000000001,784.7h8.2M1254.7,780.7v8" stroke="#fff" stroke-width="2.4"/>
<path d="M1324.6000000000001,784.7h8.2M1328.7,780.7v8" stroke="#fff" stroke-width="2.4"/>
<path d="M1402.7,784.7h8.2M1406.8,780.7v8" stroke="#fff" stroke-width="2.4"/>
<path d="M1545.4,784.7h8.2M1549.5,780.7v8" stroke="#fff" stroke-width="2.4"/>
<path d="M355.79999999999995,768.4h8.2M359.9,764.4v8" stroke="#fff" stroke-width="2.4"/>
<path d="M426.79999999999995,768.4h8.2M430.9,764.4v8" stroke="#fff" stroke-width="2.4"/>
<path d="M476.5,768.4h8.2M480.6,764.4v8" stroke="#fff" stroke-width="2.4"/>
<path d="M535.9,768.4h8.2M540,764.4v8" stroke="#fff" stroke-width="2.4"/>
<path d="M570.9,768.4h8.2M575,764.4v8" stroke="#fff" stroke-width="2.4"/>
<path d="M630.6,768.4h8.2M634.7,764.4v8" stroke="#fff" stroke-width="2.4"/>
<path d="M973.6999999999999,768.4h8.2M977.8,764.4v8" stroke="#fff" stroke-width="2.4"/>
<path d="M1069.7,768.4h8.2M1073.8,764.4v8" stroke="#fff" stroke-width="2.4"/>
<path d="M1108.8000000000002,768.4h8.2M1112.9,764.4v8" stroke="#fff" stroke-width="2.4"/>
<path d="M1177.8000000000002,768.4h8.2M1181.9,764.4v8" stroke="#fff" stroke-width="2.4"/>
<path d="M1255.5,768.4h8.2M1259.6,764.4v8" stroke="#fff" stroke-width="2.4"/>
<path d="M1466.5,768.4h8.2M1470.6,764.4v8" stroke="#fff" stroke-width="2.4"/>
<path d="M427.59999999999997,752.1h8.2M431.7,748.1v8" stroke="#fff" stroke-width="2.4"/>
<path d="M539.6,752.1h8.2M543.7,748.1v8" stroke="#fff" stroke-width="2.4"/>
<path d="M574.6,752.1h8.2M578.7,748.1v8" stroke="#fff" stroke-width="2.4"/>
<path d="M703.8,752.1h8.2M707.9,748.1v8" stroke="#fff" stroke-width="2.4"/>
<path d="M1094.8000000000002,752.1h8.2M1098.9,748.1v8" stroke="#fff" stroke-width="2.4"/>
<path d="M1270.5,752.1h8.2M1274.6,748.1v8" stroke="#fff" stroke-width="2.4"/>
<path d="M1476.7,752.1h8.2M1480.8,748.1v8" stroke="#fff" stroke-width="2.4"/>
<path d="M437.7,735.8h8.2M441.8,731.8v8" stroke="#fff" stroke-width="2.4"/>
<path d="M630.6,735.8h8.2M634.7,731.8v8" stroke="#fff" stroke-width="2.4"/>
<path d="M1038.7,735.8h8.2M1042.8,731.8v8" stroke="#fff" stroke-width="2.4"/>
<path d="M1167.8000000000002,735.8h8.2M1171.9,731.8v8" stroke="#fff" stroke-width="2.4"/>
<path d="M1274.7,735.8h8.2M1278.8,731.8v8" stroke="#fff" stroke-width="2.4"/>
<path d="M1496.5,735.8h8.2M1500.6,731.8v8" stroke="#fff" stroke-width="2.4"/>
<path d="M598.9,719.5h8.2M603,715.5v8" stroke="#fff" stroke-width="2.4"/>
<path d="M726.8,719.5h8.2M730.9,715.5v8" stroke="#fff" stroke-width="2.4"/>
<path d="M1187.7,719.5h8.2M1191.8,715.5v8" stroke="#fff" stroke-width="2.4"/>
<path d="M1270.8000000000002,719.5h8.2M1274.9,715.5v8" stroke="#fff" stroke-width="2.4"/>
<path d="M687.6999999999999,703.2h8.2M691.8,699.2v8" stroke="#fff" stroke-width="2.4"/>
<path d="M1101.6000000000001,703.2h8.2M1105.7,699.2v8" stroke="#fff" stroke-width="2.4"/>
<path d="M1206.6000000000001,703.2h8.2M1210.7,699.2v8" stroke="#fff" stroke-width="2.4"/>
<path d="M1299.9,703.2h8.2M1304,699.2v8" stroke="#fff" stroke-width="2.4"/>
<path d="M1118.4,686.9h8.2M1122.5,682.9v8" stroke="#fff" stroke-width="2.4"/>
<rect x="20.5" y="641.5" width="1765" height="201" fill="none" stroke="#fff" stroke-width="1"/>
<line x1="20.5" y1="842.0" x2="20.5" y2="847.0" stroke="#fff" stroke-width="1.2"/>
<text x="20.5" y="862.0" text-anchor="middle" font-size="14.5" fill="#fff">0</text>
<line x1="265.5" y1="842.0" x2="265.5" y2="847.0" stroke="#fff" stroke-width="1.2"/>
<text x="265.5" y="862.0" text-anchor="middle" font-size="14.5" fill="#fff">50</text>
<line x1="510.50000000000006" y1="842.0" x2="510.50000000000006" y2="847.0" stroke="#fff" stroke-width="1.2"/>
<text x="510.50000000000006" y="862.0" text-anchor="middle" font-size="14.5" fill="#fff">100</text>
<line x1="755.5" y1="842.0" x2="755.5" y2="847.0" stroke="#fff" stroke-width="1.2"/>
<text x="755.5" y="862.0" text-anchor="middle" font-size="14.5" fill="#fff">150</text>
<line x1="1000.5000000000001" y1="842.0" x2="1000.5000000000001" y2="847.0" stroke="#fff" stroke-width="1.2"/>
<text x="1000.5000000000001" y="862.0" text-anchor="middle" font-size="14.5" fill="#fff">200</text>
<line x1="1245.5" y1="842.0" x2="1245.5" y2="847.0" stroke="#fff" stroke-width="1.2"/>
<text x="1245.5" y="862.0" text-anchor="middle" font-size="14.5" fill="#fff">250</text>
<line x1="1490.5" y1="842.0" x2="1490.5" y2="847.0" stroke="#fff" stroke-width="1.2"/>
<text x="1490.5" y="862.0" text-anchor="middle" font-size="14.5" fill="#fff">300</text>
<line x1="1735.5000000000002" y1="842.0" x2="1735.5000000000002" y2="847.0" stroke="#fff" stroke-width="1.2"/>
<text x="1735.5000000000002" y="862.0" text-anchor="middle" font-size="14.5" fill="#fff">350</text>
<text x="829.5" y="882" font-size="14.5" fill="#fff" textLength="146" lengthAdjust="spacingAndGlyphs">Solar longitude (deg)</text>
</svg></body></html>
